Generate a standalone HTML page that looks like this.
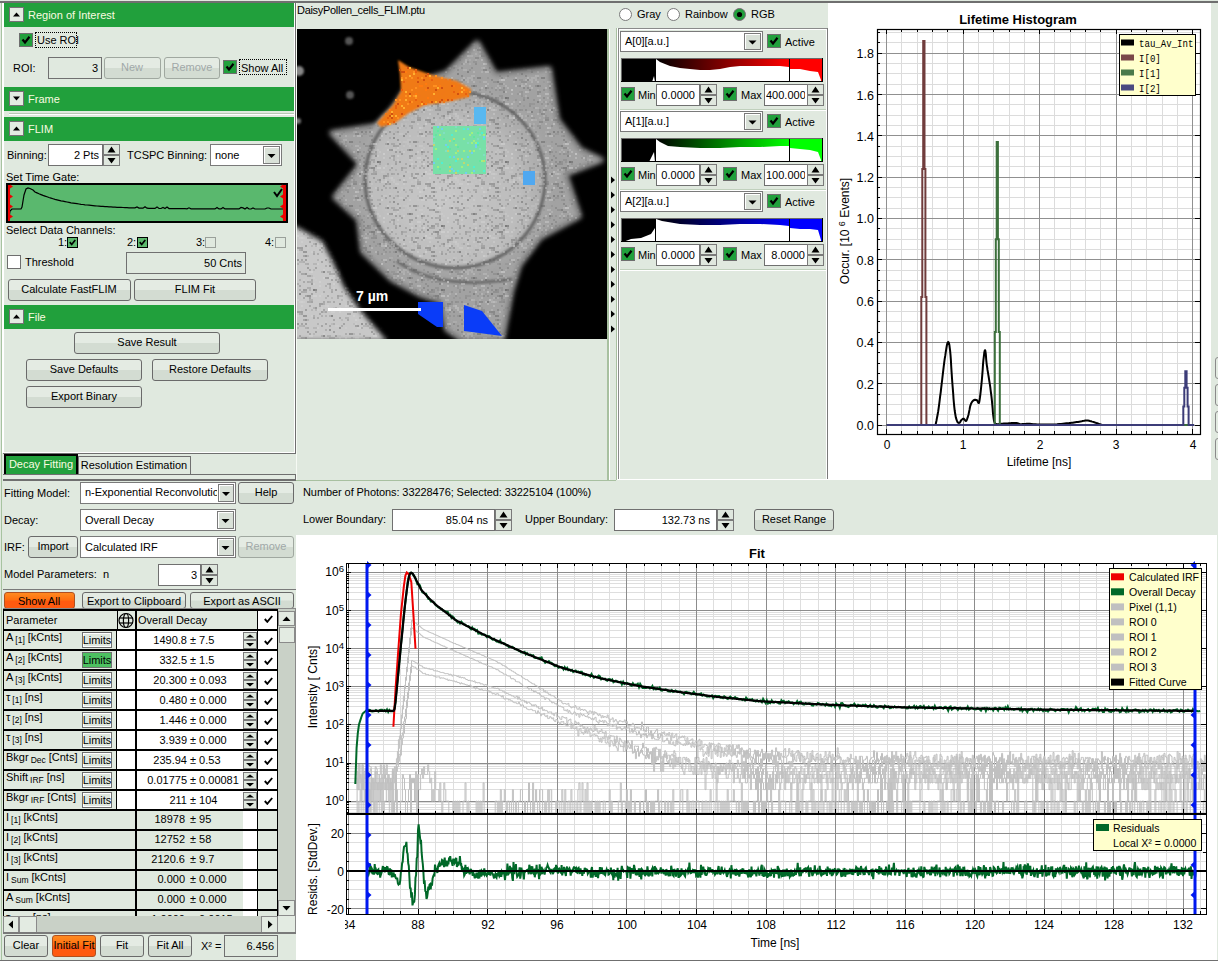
<!DOCTYPE html><html><head><meta charset="utf-8"><style>
html,body{margin:0;padding:0;}
body{width:1218px;height:961px;position:relative;overflow:hidden;background:#e0e9df;font-family:"Liberation Sans",sans-serif;}
.a{position:absolute;}
.t{position:absolute;white-space:pre;line-height:normal;font-family:"Liberation Sans",sans-serif;}
svg text{font-family:"Liberation Sans",sans-serif;}
</style></head><body>
<div class="a" style="left:0;top:1px;width:1218px;height:2px;background:#6f6f6f"></div><div class="a" style="left:1px;top:3px;width:1px;height:957px;background:#a7c3a0;"></div><div class="a" style="left:2px;top:3px;width:2px;height:450px;background:#fff;"></div><div class="a" style="left:2px;top:452px;width:292px;height:1px;background:#fff;"></div><div class="a" style="left:294px;top:3px;width:1px;height:450px;background:#fff;"></div><div class="a" style="left:295px;top:3px;width:1px;height:451px;background:#6f6f6f;"></div><div class="a" style="left:3px;top:453px;width:293px;height:1px;background:#6f6f6f;"></div><div class="a" style="left:4px;top:3px;width:290px;height:24px;background:#21a03c;"></div><div class="a" style="left:9px;top:7px;width:15px;height:15px;box-sizing:border-box;border:1px solid #757075;background:#e3ebe2"></div><svg class="a" style="left:9px;top:7px" width="15" height="15"><path d="M4 9.5 L11 9.5 L7.5 5.5Z" fill="#000"/></svg><div class="t" style="left:28px;top:9px;font-size:11px;color:#fbfbe0;">Region of Interest</div><div class="a" style="left:19px;top:33px;width:14px;height:14px;box-sizing:border-box;border:1px solid #6e6e6e;background:#21a03c"></div><svg class="a" style="left:19px;top:33px" width="14" height="14" viewBox="0 0 14 14"><path d="M3.5 6.5 L6 9.5 L10.5 3.8" fill="none" stroke="#000" stroke-width="2.2"/></svg><div class="a" style="left:35px;top:32px;width:42px;height:16px;box-sizing:border-box;border:1px dotted #000"></div><div class="t" style="left:37px;top:34px;font-size:11px;color:#000;">Use ROI</div><div class="t" style="left:13px;top:62px;font-size:11px;color:#000;">ROI:</div><div class="a" style="left:48px;top:57px;width:54px;height:22px;background:#e0e9df;border:1px solid #707070;box-sizing:border-box;"></div><div class="t" style="right:1120px;top:62px;text-align:right;font-size:11px;color:#000;">3</div><div class="a" style="left:104px;top:57px;width:57px;height:22px;box-sizing:border-box;border:1px solid #a0a8a0;border-radius:3px;background:linear-gradient(#e4ebe3 0%,#e4ebe3 48%,#d3dcd2 52%,#d3dcd2 100%)"></div><div class="t" style="left:-68px;width:400px;top:61px;text-align:center;font-size:11px;color:#a0a8a8;">New</div><div class="a" style="left:164px;top:57px;width:56px;height:22px;box-sizing:border-box;border:1px solid #a0a8a0;border-radius:3px;background:linear-gradient(#e4ebe3 0%,#e4ebe3 48%,#d3dcd2 52%,#d3dcd2 100%)"></div><div class="t" style="left:-8px;width:400px;top:61px;text-align:center;font-size:11px;color:#a0a8a8;">Remove</div><div class="a" style="left:223px;top:60px;width:14px;height:14px;box-sizing:border-box;border:1px solid #6e6e6e;background:#21a03c"></div><svg class="a" style="left:223px;top:60px" width="14" height="14" viewBox="0 0 14 14"><path d="M3.5 6.5 L6 9.5 L10.5 3.8" fill="none" stroke="#000" stroke-width="2.2"/></svg><div class="a" style="left:239px;top:59px;width:48px;height:16px;box-sizing:border-box;border:1px dotted #000"></div><div class="t" style="left:241px;top:62px;font-size:11px;color:#000;">Show All</div><div class="a" style="left:4px;top:87px;width:290px;height:24px;background:#21a03c;"></div><div class="a" style="left:9px;top:91px;width:15px;height:15px;box-sizing:border-box;border:1px solid #757075;background:#e3ebe2"></div><svg class="a" style="left:9px;top:91px" width="15" height="15"><path d="M4 5.5 L11 5.5 L7.5 9.5Z" fill="#000"/></svg><div class="t" style="left:28px;top:93px;font-size:11px;color:#fbfbe0;">Frame</div><div class="a" style="left:9px;top:113px;width:285px;height:1px;background:#b8c8b4;"></div><div class="a" style="left:9px;top:114px;width:285px;height:1px;background:#fff;"></div><div class="a" style="left:4px;top:117px;width:290px;height:24px;background:#21a03c;"></div><div class="a" style="left:9px;top:121px;width:15px;height:15px;box-sizing:border-box;border:1px solid #757075;background:#e3ebe2"></div><svg class="a" style="left:9px;top:121px" width="15" height="15"><path d="M4 9.5 L11 9.5 L7.5 5.5Z" fill="#000"/></svg><div class="t" style="left:28px;top:123px;font-size:11px;color:#fbfbe0;">FLIM</div><div class="t" style="left:7px;top:149px;font-size:11px;color:#000;">Binning:</div><div class="a" style="left:48px;top:144px;width:55px;height:22px;background:#fff;border:1px solid #707070;box-sizing:border-box;"></div><div class="t" style="right:1119px;top:149px;text-align:right;font-size:11px;color:#000;">2 Pts</div><div class="a" style="left:103px;top:144px;width:17px;height:11px;background:#dfe7de;border:1px solid #7a7a7a;box-sizing:border-box;"></div><div class="a" style="left:103px;top:155px;width:17px;height:11px;background:#dfe7de;border:1px solid #7a7a7a;box-sizing:border-box;"></div><svg class="a" style="left:103px;top:144px" width="17" height="22"><path d="M4.5 8.5 L12.5 8.5 L8.5 2.5Z M4.5 14 L12.5 14 L8.5 19.5Z" fill="#000"/></svg><div class="t" style="left:127px;top:149px;font-size:11px;color:#000;">TCSPC Binning:</div><div class="a" style="left:210px;top:144px;width:72px;height:22px;background:#fff;border:1px solid #7a7a7a;box-sizing:border-box;"></div><div class="t" style="left:215px;top:149px;font-size:11px;color:#000;">none</div><div class="a" style="left:263px;top:146px;width:17px;height:18px;background:#d9e1d8;border:1px solid #7a7a7a;box-sizing:border-box;box-shadow:inset 1px 1px 0 #fff;"></div><svg class="a" style="left:263px;top:146px" width="17" height="18"><path d="M4.5 8.0 L12.5 8.0 L8.5 12.0Z" fill="#000"/></svg><div class="t" style="left:6px;top:171px;font-size:11px;color:#000;">Set Time Gate:</div><div class="a" style="left:6px;top:183px;width:282px;height:40px;background:#5ab86e;border:2px solid #000;box-sizing:border-box;"></div><svg class="a" style="left:6px;top:183px" width="282" height="40"><path d="M3 35 L4 28 L6 26 L15 26 L16 24 L18 12 L20 6 L22 5 L24 5.5 L27 7 L29 9.0 L31 9.9 L33 10.8 L35 11.6 L37 12.4 L39 13.1 L41 13.8 L43 14.5 L45 15.1 L47 15.7 L49 16.3 L51 16.8 L53 17.3 L55 17.8 L57 18.2 L59 18.6 L61 19.0 L63 19.4 L65 19.8 L67 20.1 L69 20.4 L71 20.7 L73 21.0 L75 21.3 L77 21.5 L79 21.8 L81 22.0 L83 22.2 L85 22.4 L87 22.6 L89 22.8 L91 23.0 L93 23.1 L95 23.3 L97 23.4 L99 23.6 L101 23.7 L103 23.8 L105 23.9 L107 24.1 L109 24.2 L111 24.3 L113 24.4 L115 24.4 L117 24.5 L119 24.6 L121 24.7 L123 24.8 L125 24.8 L127 24.9 L129 24.9 L131 24.0 L133 25.1 L135 25.1 L137 25.2 L139 23.7 L141 25.2 L143 25.3 L145 25.3 L147 25.4 L149 25.4 L151 23.9 L153 25.5 L155 25.5 L157 24.5 L159 25.5 L161 24.1 L163 25.6 L165 25.6 L167 25.6 L169 25.7 L171 25.7 L173 25.7 L175 25.7 L177 25.7 L179 25.7 L181 25.8 L183 24.8 L185 25.8 L187 25.8 L189 25.8 L191 25.8 L193 25.8 L195 25.8 L197 25.8 L199 25.8 L201 25.9 L203 25.9 L205 25.9 L207 25.9 L209 25.9 L211 24.4 L213 25.9 L215 25.9 L217 24.4 L219 25.9 L221 25.9 L223 25.9 L225 25.9 L227 25.9 L229 25.9 L231 25.9 L233 25.9 L235 24.4 L237 24.9 L239 26.0 L241 24.5 L243 26.0 L245 26.0 L247 25.0 L249 26.0 L251 26.0 L253 26.0 L255 26.0 L257 26.0 L259 26.0 L261 25.0 L263 25.0 L265 26.0 L267 26.0 L269 26.0 L271 26.0 L273 26.0 L275 26.0 L277 26.0" fill="none" stroke="#000" stroke-width="1.2"/><rect x="2" y="2" width="2" height="36" fill="#e00"/><rect x="277" y="2" width="3" height="36" fill="#e00"/><path d="M4 1.5 l3 2 l-3 2Z M4 11.5 l3 2 l-3 2Z M4 21.5 l3 2 l-3 2Z M4 31.5 l3 2 l-3 2Z M277 1.5 l-3 2 l3 2Z M277 11.5 l-3 2 l3 2Z M277 21.5 l-3 2 l3 2Z M277 31.5 l-3 2 l3 2Z" fill="#e00"/><path d="M268 9 L271 13 L276 6" fill="none" stroke="#000" stroke-width="2"/></svg><div class="t" style="left:6px;top:224px;font-size:11px;color:#000;">Select Data Channels:</div><div class="t" style="left:58px;top:236px;font-size:11px;color:#000;">1:</div><div class="a" style="left:67px;top:237px;width:11px;height:11px;box-sizing:border-box;border:1px solid #000;background:#5cb86c"></div><svg class="a" style="left:67px;top:237px" width="11" height="11" viewBox="0 0 14 14"><path d="M3.5 6.5 L6 9.5 L10.5 3.8" fill="none" stroke="#000" stroke-width="2.2"/></svg><div class="t" style="left:127px;top:236px;font-size:11px;color:#000;">2:</div><div class="a" style="left:137px;top:237px;width:11px;height:11px;box-sizing:border-box;border:1px solid #000;background:#5cb86c"></div><svg class="a" style="left:137px;top:237px" width="11" height="11" viewBox="0 0 14 14"><path d="M3.5 6.5 L6 9.5 L10.5 3.8" fill="none" stroke="#000" stroke-width="2.2"/></svg><div class="t" style="left:196px;top:236px;font-size:11px;color:#000;">3:</div><div class="a" style="left:205px;top:237px;width:11px;height:11px;box-sizing:border-box;border:1px solid #9aa09a;background:#e0e9df"></div><div class="t" style="left:265px;top:236px;font-size:11px;color:#000;">4:</div><div class="a" style="left:275px;top:237px;width:11px;height:11px;box-sizing:border-box;border:1px solid #9aa09a;background:#e0e9df"></div><div class="a" style="left:7px;top:255px;width:14px;height:14px;box-sizing:border-box;border:1px solid #6e6e6e;background:#fff"></div><div class="t" style="left:25px;top:256px;font-size:11px;color:#000;">Threshold</div><div class="a" style="left:126px;top:252px;width:120px;height:22px;background:#e0e9df;border:1px solid #707070;box-sizing:border-box;"></div><div class="t" style="right:976px;top:257px;text-align:right;font-size:11px;color:#000;">50 Cnts</div><div class="a" style="left:8px;top:279px;width:123px;height:22px;box-sizing:border-box;border:1px solid #6a6a6a;border-radius:3px;background:linear-gradient(#e4ebe3 0%,#e4ebe3 48%,#d3dcd2 52%,#d3dcd2 100%)"></div><div class="t" style="left:-131px;width:400px;top:283px;text-align:center;font-size:11px;color:#000;">Calculate FastFLIM</div><div class="a" style="left:134px;top:279px;width:122px;height:22px;box-sizing:border-box;border:1px solid #6a6a6a;border-radius:3px;background:linear-gradient(#e4ebe3 0%,#e4ebe3 48%,#d3dcd2 52%,#d3dcd2 100%)"></div><div class="t" style="left:-5px;width:400px;top:283px;text-align:center;font-size:11px;color:#000;">FLIM Fit</div><div class="a" style="left:4px;top:305px;width:290px;height:24px;background:#21a03c;"></div><div class="a" style="left:9px;top:309px;width:15px;height:15px;box-sizing:border-box;border:1px solid #757075;background:#e3ebe2"></div><svg class="a" style="left:9px;top:309px" width="15" height="15"><path d="M4 9.5 L11 9.5 L7.5 5.5Z" fill="#000"/></svg><div class="t" style="left:28px;top:311px;font-size:11px;color:#fbfbe0;">File</div><div class="a" style="left:74px;top:332px;width:146px;height:22px;box-sizing:border-box;border:1px solid #6a6a6a;border-radius:3px;background:linear-gradient(#e4ebe3 0%,#e4ebe3 48%,#d3dcd2 52%,#d3dcd2 100%)"></div><div class="t" style="left:-53px;width:400px;top:336px;text-align:center;font-size:11px;color:#000;">Save Result</div><div class="a" style="left:26px;top:359px;width:116px;height:22px;box-sizing:border-box;border:1px solid #6a6a6a;border-radius:3px;background:linear-gradient(#e4ebe3 0%,#e4ebe3 48%,#d3dcd2 52%,#d3dcd2 100%)"></div><div class="t" style="left:-116px;width:400px;top:363px;text-align:center;font-size:11px;color:#000;">Save Defaults</div><div class="a" style="left:152px;top:359px;width:116px;height:22px;box-sizing:border-box;border:1px solid #6a6a6a;border-radius:3px;background:linear-gradient(#e4ebe3 0%,#e4ebe3 48%,#d3dcd2 52%,#d3dcd2 100%)"></div><div class="t" style="left:10px;width:400px;top:363px;text-align:center;font-size:11px;color:#000;">Restore Defaults</div><div class="a" style="left:26px;top:386px;width:116px;height:22px;box-sizing:border-box;border:1px solid #6a6a6a;border-radius:3px;background:linear-gradient(#e4ebe3 0%,#e4ebe3 48%,#d3dcd2 52%,#d3dcd2 100%)"></div><div class="t" style="left:-116px;width:400px;top:390px;text-align:center;font-size:11px;color:#000;">Export Binary</div><div class="a" style="left:4px;top:454px;width:74px;height:21px;background:#000;"></div><div class="a" style="left:6px;top:456px;width:70px;height:19px;background:#21a03c;"></div><div class="t" style="left:-159px;width:400px;top:458px;text-align:center;font-size:11px;color:#fbfbe0;">Decay Fitting</div><div class="a" style="left:78px;top:456px;width:113px;height:19px;background:#e0e9df;border:1px solid #707070;box-sizing:border-box;border-bottom:none;"></div><div class="t" style="left:-66px;width:400px;top:459px;text-align:center;font-size:11px;color:#000;">Resolution Estimation</div><div class="a" style="left:3px;top:474px;width:293px;height:1px;background:#6f6f6f;"></div><div class="a" style="left:3px;top:475px;width:293px;height:4px;background:#e3ebe2;"></div><div class="a" style="left:3px;top:479px;width:293px;height:2px;background:#6f6f6f;"></div><div class="a" style="left:295px;top:474px;width:1px;height:7px;background:#6f6f6f;"></div><div class="t" style="left:4px;top:487px;font-size:11px;color:#000;">Fitting Model:</div><div class="a" style="left:80px;top:482px;width:156px;height:22px;box-sizing:border-box;border:1px solid #7a7a7a;background:#fff"></div><div class="t" style="left:85px;top:486px;width:132px;overflow:hidden;font-size:11px">n-Exponential Reconvolution</div><div class="a" style="left:218px;top:484px;width:16px;height:18px;background:#d9e1d8;border:1px solid #7a7a7a;box-sizing:border-box;box-shadow:inset 1px 1px 0 #fff;"></div><svg class="a" style="left:218px;top:484px" width="16" height="18"><path d="M4 8 L12 8 L8 12Z" fill="#000"/></svg><div class="a" style="left:238px;top:482px;width:56px;height:22px;box-sizing:border-box;border:1px solid #6a6a6a;border-radius:3px;background:linear-gradient(#e4ebe3 0%,#e4ebe3 48%,#d3dcd2 52%,#d3dcd2 100%)"></div><div class="t" style="left:66px;width:400px;top:486px;text-align:center;font-size:11px;color:#000;">Help</div><div class="t" style="left:4px;top:514px;font-size:11px;color:#000;">Decay:</div><div class="a" style="left:80px;top:509px;width:156px;height:22px;background:#fff;border:1px solid #7a7a7a;box-sizing:border-box;"></div><div class="t" style="left:85px;top:514px;font-size:11px;color:#000;">Overall Decay</div><div class="a" style="left:217px;top:511px;width:17px;height:18px;background:#d9e1d8;border:1px solid #7a7a7a;box-sizing:border-box;box-shadow:inset 1px 1px 0 #fff;"></div><svg class="a" style="left:217px;top:511px" width="17" height="18"><path d="M4.5 8.0 L12.5 8.0 L8.5 12.0Z" fill="#000"/></svg><div class="t" style="left:4px;top:541px;font-size:11px;color:#000;">IRF:</div><div class="a" style="left:28px;top:536px;width:50px;height:22px;box-sizing:border-box;border:1px solid #6a6a6a;border-radius:3px;background:linear-gradient(#e4ebe3 0%,#e4ebe3 48%,#d3dcd2 52%,#d3dcd2 100%)"></div><div class="t" style="left:-147px;width:400px;top:540px;text-align:center;font-size:11px;color:#000;">Import</div><div class="a" style="left:80px;top:536px;width:156px;height:22px;background:#fff;border:1px solid #7a7a7a;box-sizing:border-box;"></div><div class="t" style="left:85px;top:541px;font-size:11px;color:#000;">Calculated IRF</div><div class="a" style="left:217px;top:538px;width:17px;height:18px;background:#d9e1d8;border:1px solid #7a7a7a;box-sizing:border-box;box-shadow:inset 1px 1px 0 #fff;"></div><svg class="a" style="left:217px;top:538px" width="17" height="18"><path d="M4.5 8.0 L12.5 8.0 L8.5 12.0Z" fill="#000"/></svg><div class="a" style="left:238px;top:536px;width:56px;height:22px;box-sizing:border-box;border:1px solid #a0a8a0;border-radius:3px;background:linear-gradient(#e4ebe3 0%,#e4ebe3 48%,#d3dcd2 52%,#d3dcd2 100%)"></div><div class="t" style="left:66px;width:400px;top:540px;text-align:center;font-size:11px;color:#a0a8a8;">Remove</div><div class="t" style="left:4px;top:568px;font-size:11px;color:#000;">Model Parameters:  n</div><div class="a" style="left:158px;top:564px;width:43px;height:22px;background:#fff;border:1px solid #707070;box-sizing:border-box;"></div><div class="t" style="right:1021px;top:569px;text-align:right;font-size:11px;color:#000;">3</div><div class="a" style="left:201px;top:564px;width:17px;height:11px;background:#dfe7de;border:1px solid #7a7a7a;box-sizing:border-box;"></div><div class="a" style="left:201px;top:575px;width:17px;height:11px;background:#dfe7de;border:1px solid #7a7a7a;box-sizing:border-box;"></div><svg class="a" style="left:201px;top:564px" width="17" height="22"><path d="M4.5 8.5 L12.5 8.5 L8.5 2.5Z M4.5 14 L12.5 14 L8.5 19.5Z" fill="#000"/></svg><div class="a" style="left:3px;top:589px;width:293px;height:1px;background:#7a7a7a;"></div><div class="a" style="left:4px;top:592px;width:71px;height:17px;box-sizing:border-box;border:1px solid #b05020;border-radius:3px;background:linear-gradient(#ff8a20 0%,#ff7010 45%,#ff5a10 55%,#ff5a10 100%)"></div><div class="t" style="left:-161px;width:400px;top:595px;text-align:center;font-size:11px;color:#000;">Show All</div><div class="a" style="left:82px;top:592px;width:104px;height:17px;box-sizing:border-box;border:1px solid #6a6a6a;border-radius:3px;background:linear-gradient(#e4ebe3 0%,#e4ebe3 48%,#d3dcd2 52%,#d3dcd2 100%)"></div><div class="t" style="left:-66px;width:400px;top:595px;text-align:center;font-size:11px;color:#000;">Export to Clipboard</div><div class="a" style="left:190px;top:592px;width:104px;height:17px;box-sizing:border-box;border:1px solid #6a6a6a;border-radius:3px;background:linear-gradient(#e4ebe3 0%,#e4ebe3 48%,#d3dcd2 52%,#d3dcd2 100%)"></div><div class="t" style="left:42px;width:400px;top:595px;text-align:center;font-size:11px;color:#000;">Export as ASCII</div><div class="a" style="left:3px;top:608px;width:293px;height:1px;background:#8a8a8a;"></div><div class="a" style="left:3px;top:609px;width:275px;height:2px;background:#000;"></div><div class="a" style="left:3px;top:611px;width:1px;height:305px;background:#000;"></div><div class="a" style="left:4px;top:611px;width:112px;height:18px;background:#e0e9df;"></div><div class="a" style="left:117px;top:611px;width:18px;height:18px;background:#e0e9df;"></div><div class="a" style="left:137px;top:611px;width:120px;height:18px;background:#e0e9df;"></div><div class="a" style="left:258px;top:611px;width:19px;height:18px;background:#fff;"></div><div class="t" style="left:6px;top:614px;font-size:11px;color:#000;">Parameter</div><svg class="a" style="left:117px;top:612px" width="18" height="17"><g fill="none" stroke="#000" stroke-width="1.2"><circle cx="9" cy="8.5" r="7"/><ellipse cx="9" cy="8.5" rx="2.6" ry="7"/><line x1="2" y1="6" x2="16" y2="6"/><line x1="2" y1="11" x2="16" y2="11"/></g></svg><div class="t" style="left:138px;top:614px;font-size:11px;color:#000;">Overall Decay</div><svg class="a" style="left:264px;top:615px" width="9" height="8"><path d="M0.8 4 L3.3 6.8 L8.2 1" fill="none" stroke="#000" stroke-width="1.9"/></svg><div class="a" style="left:3px;top:629px;width:275px;height:2px;background:#000;"></div><div class="a" style="left:4px;top:631px;width:112px;height:18px;background:#e0e9df;"></div><div class="a" style="left:116px;top:631px;width:1px;height:18px;background:#000;"></div><div class="a" style="left:117px;top:631px;width:18px;height:18px;background:#fff;"></div><div class="a" style="left:135px;top:631px;width:2px;height:18px;background:#000;"></div><div class="a" style="left:137px;top:631px;width:120px;height:18px;background:#fff;"></div><div class="a" style="left:257px;top:631px;width:1px;height:18px;background:#000;"></div><div class="a" style="left:258px;top:631px;width:19px;height:18px;background:#fff;"></div><div class="a" style="left:277px;top:631px;width:1px;height:18px;background:#000;"></div><div class="t" style="left:6px;top:631px;font-size:11px">A<span style="font-size:8.5px;position:relative;top:2px;margin-left:2px;margin-right:3px">[1]</span>[kCnts]</div><div class="a" style="left:82px;top:632px;width:30px;height:16px;background:#dfe7de;border:1px solid #6f6f6f;box-sizing:border-box;box-shadow:inset 1px 1px 0 #fff,inset -1px -1px 0 #fff;"></div><div class="t" style="left:-103px;width:400px;top:634px;text-align:center;font-size:11px;color:#000;">Limits</div><div class="a" style="left:243px;top:632px;width:14px;height:8px;background:#dfe7de;border:1px solid #7a7a7a;box-sizing:border-box;"></div><div class="a" style="left:243px;top:640px;width:14px;height:9px;background:#dfe7de;border:1px solid #7a7a7a;box-sizing:border-box;"></div><svg class="a" style="left:243px;top:632px" width="14" height="17"><path d="M3.0 5.5 L11.0 5.5 L7.0 2.5Z M3.0 11 L11.0 11 L7.0 14.5Z" fill="#000"/></svg><svg class="a" style="left:264px;top:637px" width="9" height="8"><path d="M0.8 4 L3.3 6.8 L8.2 1" fill="none" stroke="#000" stroke-width="1.9"/></svg><div class="t" style="right:1031px;top:634px;text-align:right;font-size:11px;color:#000;">1490.8</div><div class="t" style="left:190px;top:634px;font-size:11px;color:#000;">± 7.5</div><div class="a" style="left:3px;top:649px;width:275px;height:2px;background:#000;"></div><div class="a" style="left:4px;top:651px;width:112px;height:18px;background:#e0e9df;"></div><div class="a" style="left:116px;top:651px;width:1px;height:18px;background:#000;"></div><div class="a" style="left:117px;top:651px;width:18px;height:18px;background:#fff;"></div><div class="a" style="left:135px;top:651px;width:2px;height:18px;background:#000;"></div><div class="a" style="left:137px;top:651px;width:120px;height:18px;background:#fff;"></div><div class="a" style="left:257px;top:651px;width:1px;height:18px;background:#000;"></div><div class="a" style="left:258px;top:651px;width:19px;height:18px;background:#fff;"></div><div class="a" style="left:277px;top:651px;width:1px;height:18px;background:#000;"></div><div class="t" style="left:6px;top:651px;font-size:11px">A<span style="font-size:8.5px;position:relative;top:2px;margin-left:2px;margin-right:3px">[2]</span>[kCnts]</div><div class="a" style="left:82px;top:652px;width:30px;height:16px;background:#4cc060;border:1px solid #6f6f6f;box-sizing:border-box;"></div><div class="t" style="left:-103px;width:400px;top:654px;text-align:center;font-size:11px;color:#000;">Limits</div><div class="a" style="left:243px;top:652px;width:14px;height:8px;background:#dfe7de;border:1px solid #7a7a7a;box-sizing:border-box;"></div><div class="a" style="left:243px;top:660px;width:14px;height:9px;background:#dfe7de;border:1px solid #7a7a7a;box-sizing:border-box;"></div><svg class="a" style="left:243px;top:652px" width="14" height="17"><path d="M3.0 5.5 L11.0 5.5 L7.0 2.5Z M3.0 11 L11.0 11 L7.0 14.5Z" fill="#000"/></svg><svg class="a" style="left:264px;top:657px" width="9" height="8"><path d="M0.8 4 L3.3 6.8 L8.2 1" fill="none" stroke="#000" stroke-width="1.9"/></svg><div class="t" style="right:1031px;top:654px;text-align:right;font-size:11px;color:#000;">332.5</div><div class="t" style="left:190px;top:654px;font-size:11px;color:#000;">± 1.5</div><div class="a" style="left:3px;top:669px;width:275px;height:2px;background:#000;"></div><div class="a" style="left:4px;top:671px;width:112px;height:18px;background:#e0e9df;"></div><div class="a" style="left:116px;top:671px;width:1px;height:18px;background:#000;"></div><div class="a" style="left:117px;top:671px;width:18px;height:18px;background:#fff;"></div><div class="a" style="left:135px;top:671px;width:2px;height:18px;background:#000;"></div><div class="a" style="left:137px;top:671px;width:120px;height:18px;background:#fff;"></div><div class="a" style="left:257px;top:671px;width:1px;height:18px;background:#000;"></div><div class="a" style="left:258px;top:671px;width:19px;height:18px;background:#fff;"></div><div class="a" style="left:277px;top:671px;width:1px;height:18px;background:#000;"></div><div class="t" style="left:6px;top:671px;font-size:11px">A<span style="font-size:8.5px;position:relative;top:2px;margin-left:2px;margin-right:3px">[3]</span>[kCnts]</div><div class="a" style="left:82px;top:672px;width:30px;height:16px;background:#dfe7de;border:1px solid #6f6f6f;box-sizing:border-box;box-shadow:inset 1px 1px 0 #fff,inset -1px -1px 0 #fff;"></div><div class="t" style="left:-103px;width:400px;top:674px;text-align:center;font-size:11px;color:#000;">Limits</div><div class="a" style="left:243px;top:672px;width:14px;height:8px;background:#dfe7de;border:1px solid #7a7a7a;box-sizing:border-box;"></div><div class="a" style="left:243px;top:680px;width:14px;height:9px;background:#dfe7de;border:1px solid #7a7a7a;box-sizing:border-box;"></div><svg class="a" style="left:243px;top:672px" width="14" height="17"><path d="M3.0 5.5 L11.0 5.5 L7.0 2.5Z M3.0 11 L11.0 11 L7.0 14.5Z" fill="#000"/></svg><svg class="a" style="left:264px;top:677px" width="9" height="8"><path d="M0.8 4 L3.3 6.8 L8.2 1" fill="none" stroke="#000" stroke-width="1.9"/></svg><div class="t" style="right:1031px;top:674px;text-align:right;font-size:11px;color:#000;">20.300</div><div class="t" style="left:190px;top:674px;font-size:11px;color:#000;">± 0.093</div><div class="a" style="left:3px;top:689px;width:275px;height:2px;background:#000;"></div><div class="a" style="left:4px;top:691px;width:112px;height:18px;background:#e0e9df;"></div><div class="a" style="left:116px;top:691px;width:1px;height:18px;background:#000;"></div><div class="a" style="left:117px;top:691px;width:18px;height:18px;background:#fff;"></div><div class="a" style="left:135px;top:691px;width:2px;height:18px;background:#000;"></div><div class="a" style="left:137px;top:691px;width:120px;height:18px;background:#fff;"></div><div class="a" style="left:257px;top:691px;width:1px;height:18px;background:#000;"></div><div class="a" style="left:258px;top:691px;width:19px;height:18px;background:#fff;"></div><div class="a" style="left:277px;top:691px;width:1px;height:18px;background:#000;"></div><div class="t" style="left:6px;top:691px;font-size:11px">τ<span style="font-size:8.5px;position:relative;top:2px;margin-left:2px;margin-right:3px">[1]</span>[ns]</div><div class="a" style="left:82px;top:692px;width:30px;height:16px;background:#dfe7de;border:1px solid #6f6f6f;box-sizing:border-box;box-shadow:inset 1px 1px 0 #fff,inset -1px -1px 0 #fff;"></div><div class="t" style="left:-103px;width:400px;top:694px;text-align:center;font-size:11px;color:#000;">Limits</div><div class="a" style="left:243px;top:692px;width:14px;height:8px;background:#dfe7de;border:1px solid #7a7a7a;box-sizing:border-box;"></div><div class="a" style="left:243px;top:700px;width:14px;height:9px;background:#dfe7de;border:1px solid #7a7a7a;box-sizing:border-box;"></div><svg class="a" style="left:243px;top:692px" width="14" height="17"><path d="M3.0 5.5 L11.0 5.5 L7.0 2.5Z M3.0 11 L11.0 11 L7.0 14.5Z" fill="#000"/></svg><svg class="a" style="left:264px;top:697px" width="9" height="8"><path d="M0.8 4 L3.3 6.8 L8.2 1" fill="none" stroke="#000" stroke-width="1.9"/></svg><div class="t" style="right:1031px;top:694px;text-align:right;font-size:11px;color:#000;">0.480</div><div class="t" style="left:190px;top:694px;font-size:11px;color:#000;">± 0.000</div><div class="a" style="left:3px;top:709px;width:275px;height:2px;background:#000;"></div><div class="a" style="left:4px;top:711px;width:112px;height:18px;background:#e0e9df;"></div><div class="a" style="left:116px;top:711px;width:1px;height:18px;background:#000;"></div><div class="a" style="left:117px;top:711px;width:18px;height:18px;background:#fff;"></div><div class="a" style="left:135px;top:711px;width:2px;height:18px;background:#000;"></div><div class="a" style="left:137px;top:711px;width:120px;height:18px;background:#fff;"></div><div class="a" style="left:257px;top:711px;width:1px;height:18px;background:#000;"></div><div class="a" style="left:258px;top:711px;width:19px;height:18px;background:#fff;"></div><div class="a" style="left:277px;top:711px;width:1px;height:18px;background:#000;"></div><div class="t" style="left:6px;top:711px;font-size:11px">τ<span style="font-size:8.5px;position:relative;top:2px;margin-left:2px;margin-right:3px">[2]</span>[ns]</div><div class="a" style="left:82px;top:712px;width:30px;height:16px;background:#dfe7de;border:1px solid #6f6f6f;box-sizing:border-box;box-shadow:inset 1px 1px 0 #fff,inset -1px -1px 0 #fff;"></div><div class="t" style="left:-103px;width:400px;top:714px;text-align:center;font-size:11px;color:#000;">Limits</div><div class="a" style="left:243px;top:712px;width:14px;height:8px;background:#dfe7de;border:1px solid #7a7a7a;box-sizing:border-box;"></div><div class="a" style="left:243px;top:720px;width:14px;height:9px;background:#dfe7de;border:1px solid #7a7a7a;box-sizing:border-box;"></div><svg class="a" style="left:243px;top:712px" width="14" height="17"><path d="M3.0 5.5 L11.0 5.5 L7.0 2.5Z M3.0 11 L11.0 11 L7.0 14.5Z" fill="#000"/></svg><svg class="a" style="left:264px;top:717px" width="9" height="8"><path d="M0.8 4 L3.3 6.8 L8.2 1" fill="none" stroke="#000" stroke-width="1.9"/></svg><div class="t" style="right:1031px;top:714px;text-align:right;font-size:11px;color:#000;">1.446</div><div class="t" style="left:190px;top:714px;font-size:11px;color:#000;">± 0.000</div><div class="a" style="left:3px;top:729px;width:275px;height:2px;background:#000;"></div><div class="a" style="left:4px;top:731px;width:112px;height:18px;background:#e0e9df;"></div><div class="a" style="left:116px;top:731px;width:1px;height:18px;background:#000;"></div><div class="a" style="left:117px;top:731px;width:18px;height:18px;background:#fff;"></div><div class="a" style="left:135px;top:731px;width:2px;height:18px;background:#000;"></div><div class="a" style="left:137px;top:731px;width:120px;height:18px;background:#fff;"></div><div class="a" style="left:257px;top:731px;width:1px;height:18px;background:#000;"></div><div class="a" style="left:258px;top:731px;width:19px;height:18px;background:#fff;"></div><div class="a" style="left:277px;top:731px;width:1px;height:18px;background:#000;"></div><div class="t" style="left:6px;top:731px;font-size:11px">τ<span style="font-size:8.5px;position:relative;top:2px;margin-left:2px;margin-right:3px">[3]</span>[ns]</div><div class="a" style="left:82px;top:732px;width:30px;height:16px;background:#dfe7de;border:1px solid #6f6f6f;box-sizing:border-box;box-shadow:inset 1px 1px 0 #fff,inset -1px -1px 0 #fff;"></div><div class="t" style="left:-103px;width:400px;top:734px;text-align:center;font-size:11px;color:#000;">Limits</div><div class="a" style="left:243px;top:732px;width:14px;height:8px;background:#dfe7de;border:1px solid #7a7a7a;box-sizing:border-box;"></div><div class="a" style="left:243px;top:740px;width:14px;height:9px;background:#dfe7de;border:1px solid #7a7a7a;box-sizing:border-box;"></div><svg class="a" style="left:243px;top:732px" width="14" height="17"><path d="M3.0 5.5 L11.0 5.5 L7.0 2.5Z M3.0 11 L11.0 11 L7.0 14.5Z" fill="#000"/></svg><svg class="a" style="left:264px;top:737px" width="9" height="8"><path d="M0.8 4 L3.3 6.8 L8.2 1" fill="none" stroke="#000" stroke-width="1.9"/></svg><div class="t" style="right:1031px;top:734px;text-align:right;font-size:11px;color:#000;">3.939</div><div class="t" style="left:190px;top:734px;font-size:11px;color:#000;">± 0.000</div><div class="a" style="left:3px;top:749px;width:275px;height:2px;background:#000;"></div><div class="a" style="left:4px;top:751px;width:112px;height:18px;background:#e0e9df;"></div><div class="a" style="left:116px;top:751px;width:1px;height:18px;background:#000;"></div><div class="a" style="left:117px;top:751px;width:18px;height:18px;background:#fff;"></div><div class="a" style="left:135px;top:751px;width:2px;height:18px;background:#000;"></div><div class="a" style="left:137px;top:751px;width:120px;height:18px;background:#fff;"></div><div class="a" style="left:257px;top:751px;width:1px;height:18px;background:#000;"></div><div class="a" style="left:258px;top:751px;width:19px;height:18px;background:#fff;"></div><div class="a" style="left:277px;top:751px;width:1px;height:18px;background:#000;"></div><div class="t" style="left:6px;top:751px;font-size:11px">Bkgr<span style="font-size:8.5px;position:relative;top:2px;margin-left:2px;margin-right:3px">Dec</span>[Cnts]</div><div class="a" style="left:82px;top:752px;width:30px;height:16px;background:#dfe7de;border:1px solid #6f6f6f;box-sizing:border-box;box-shadow:inset 1px 1px 0 #fff,inset -1px -1px 0 #fff;"></div><div class="t" style="left:-103px;width:400px;top:754px;text-align:center;font-size:11px;color:#000;">Limits</div><div class="a" style="left:243px;top:752px;width:14px;height:8px;background:#dfe7de;border:1px solid #7a7a7a;box-sizing:border-box;"></div><div class="a" style="left:243px;top:760px;width:14px;height:9px;background:#dfe7de;border:1px solid #7a7a7a;box-sizing:border-box;"></div><svg class="a" style="left:243px;top:752px" width="14" height="17"><path d="M3.0 5.5 L11.0 5.5 L7.0 2.5Z M3.0 11 L11.0 11 L7.0 14.5Z" fill="#000"/></svg><svg class="a" style="left:264px;top:757px" width="9" height="8"><path d="M0.8 4 L3.3 6.8 L8.2 1" fill="none" stroke="#000" stroke-width="1.9"/></svg><div class="t" style="right:1031px;top:754px;text-align:right;font-size:11px;color:#000;">235.94</div><div class="t" style="left:190px;top:754px;font-size:11px;color:#000;">± 0.53</div><div class="a" style="left:3px;top:769px;width:275px;height:2px;background:#000;"></div><div class="a" style="left:4px;top:771px;width:112px;height:18px;background:#e0e9df;"></div><div class="a" style="left:116px;top:771px;width:1px;height:18px;background:#000;"></div><div class="a" style="left:117px;top:771px;width:18px;height:18px;background:#fff;"></div><div class="a" style="left:135px;top:771px;width:2px;height:18px;background:#000;"></div><div class="a" style="left:137px;top:771px;width:120px;height:18px;background:#fff;"></div><div class="a" style="left:257px;top:771px;width:1px;height:18px;background:#000;"></div><div class="a" style="left:258px;top:771px;width:19px;height:18px;background:#fff;"></div><div class="a" style="left:277px;top:771px;width:1px;height:18px;background:#000;"></div><div class="t" style="left:6px;top:771px;font-size:11px">Shift<span style="font-size:8.5px;position:relative;top:2px;margin-left:2px;margin-right:3px">IRF</span>[ns]</div><div class="a" style="left:82px;top:772px;width:30px;height:16px;background:#dfe7de;border:1px solid #6f6f6f;box-sizing:border-box;box-shadow:inset 1px 1px 0 #fff,inset -1px -1px 0 #fff;"></div><div class="t" style="left:-103px;width:400px;top:774px;text-align:center;font-size:11px;color:#000;">Limits</div><div class="a" style="left:243px;top:772px;width:14px;height:8px;background:#dfe7de;border:1px solid #7a7a7a;box-sizing:border-box;"></div><div class="a" style="left:243px;top:780px;width:14px;height:9px;background:#dfe7de;border:1px solid #7a7a7a;box-sizing:border-box;"></div><svg class="a" style="left:243px;top:772px" width="14" height="17"><path d="M3.0 5.5 L11.0 5.5 L7.0 2.5Z M3.0 11 L11.0 11 L7.0 14.5Z" fill="#000"/></svg><svg class="a" style="left:264px;top:777px" width="9" height="8"><path d="M0.8 4 L3.3 6.8 L8.2 1" fill="none" stroke="#000" stroke-width="1.9"/></svg><div class="t" style="right:1031px;top:774px;text-align:right;font-size:11px;color:#000;">0.01775</div><div class="t" style="left:190px;top:774px;font-size:11px;color:#000;">± 0.00081</div><div class="a" style="left:3px;top:789px;width:275px;height:2px;background:#000;"></div><div class="a" style="left:4px;top:791px;width:112px;height:18px;background:#e0e9df;"></div><div class="a" style="left:116px;top:791px;width:1px;height:18px;background:#000;"></div><div class="a" style="left:117px;top:791px;width:18px;height:18px;background:#fff;"></div><div class="a" style="left:135px;top:791px;width:2px;height:18px;background:#000;"></div><div class="a" style="left:137px;top:791px;width:120px;height:18px;background:#fff;"></div><div class="a" style="left:257px;top:791px;width:1px;height:18px;background:#000;"></div><div class="a" style="left:258px;top:791px;width:19px;height:18px;background:#fff;"></div><div class="a" style="left:277px;top:791px;width:1px;height:18px;background:#000;"></div><div class="t" style="left:6px;top:791px;font-size:11px">Bkgr<span style="font-size:8.5px;position:relative;top:2px;margin-left:2px;margin-right:3px">IRF</span>[Cnts]</div><div class="a" style="left:82px;top:792px;width:30px;height:16px;background:#dfe7de;border:1px solid #6f6f6f;box-sizing:border-box;box-shadow:inset 1px 1px 0 #fff,inset -1px -1px 0 #fff;"></div><div class="t" style="left:-103px;width:400px;top:794px;text-align:center;font-size:11px;color:#000;">Limits</div><div class="a" style="left:243px;top:792px;width:14px;height:8px;background:#dfe7de;border:1px solid #7a7a7a;box-sizing:border-box;"></div><div class="a" style="left:243px;top:800px;width:14px;height:9px;background:#dfe7de;border:1px solid #7a7a7a;box-sizing:border-box;"></div><svg class="a" style="left:243px;top:792px" width="14" height="17"><path d="M3.0 5.5 L11.0 5.5 L7.0 2.5Z M3.0 11 L11.0 11 L7.0 14.5Z" fill="#000"/></svg><svg class="a" style="left:264px;top:797px" width="9" height="8"><path d="M0.8 4 L3.3 6.8 L8.2 1" fill="none" stroke="#000" stroke-width="1.9"/></svg><div class="t" style="right:1031px;top:794px;text-align:right;font-size:11px;color:#000;">211</div><div class="t" style="left:190px;top:794px;font-size:11px;color:#000;">± 104</div><div class="a" style="left:3px;top:809px;width:275px;height:2px;background:#000;"></div><div class="a" style="left:4px;top:811px;width:131px;height:18px;background:#e0e9df;"></div><div class="a" style="left:135px;top:811px;width:2px;height:18px;background:#000;"></div><div class="a" style="left:137px;top:811px;width:106px;height:18px;background:#e0e9df;"></div><div class="a" style="left:243px;top:811px;width:14px;height:18px;background:#fff;"></div><div class="a" style="left:257px;top:811px;width:1px;height:18px;background:#000;"></div><div class="a" style="left:258px;top:811px;width:19px;height:18px;background:#e0e9df;"></div><div class="a" style="left:277px;top:811px;width:1px;height:18px;background:#000;"></div><div class="t" style="left:6px;top:811px;font-size:11px">I<span style="font-size:8.5px;position:relative;top:2px;margin-left:2px;margin-right:3px">[1]</span>[kCnts]</div><div class="t" style="right:1033px;top:813px;text-align:right;font-size:11px;color:#000;">18978</div><div class="t" style="left:190px;top:813px;font-size:11px;color:#000;">± 95</div><div class="a" style="left:3px;top:829px;width:275px;height:2px;background:#000;"></div><div class="a" style="left:4px;top:831px;width:131px;height:18px;background:#e0e9df;"></div><div class="a" style="left:135px;top:831px;width:2px;height:18px;background:#000;"></div><div class="a" style="left:137px;top:831px;width:106px;height:18px;background:#e0e9df;"></div><div class="a" style="left:243px;top:831px;width:14px;height:18px;background:#fff;"></div><div class="a" style="left:257px;top:831px;width:1px;height:18px;background:#000;"></div><div class="a" style="left:258px;top:831px;width:19px;height:18px;background:#e0e9df;"></div><div class="a" style="left:277px;top:831px;width:1px;height:18px;background:#000;"></div><div class="t" style="left:6px;top:831px;font-size:11px">I<span style="font-size:8.5px;position:relative;top:2px;margin-left:2px;margin-right:3px">[2]</span>[kCnts]</div><div class="t" style="right:1033px;top:833px;text-align:right;font-size:11px;color:#000;">12752</div><div class="t" style="left:190px;top:833px;font-size:11px;color:#000;">± 58</div><div class="a" style="left:3px;top:849px;width:275px;height:2px;background:#000;"></div><div class="a" style="left:4px;top:851px;width:131px;height:18px;background:#e0e9df;"></div><div class="a" style="left:135px;top:851px;width:2px;height:18px;background:#000;"></div><div class="a" style="left:137px;top:851px;width:106px;height:18px;background:#e0e9df;"></div><div class="a" style="left:243px;top:851px;width:14px;height:18px;background:#fff;"></div><div class="a" style="left:257px;top:851px;width:1px;height:18px;background:#000;"></div><div class="a" style="left:258px;top:851px;width:19px;height:18px;background:#e0e9df;"></div><div class="a" style="left:277px;top:851px;width:1px;height:18px;background:#000;"></div><div class="t" style="left:6px;top:851px;font-size:11px">I<span style="font-size:8.5px;position:relative;top:2px;margin-left:2px;margin-right:3px">[3]</span>[kCnts]</div><div class="t" style="right:1033px;top:853px;text-align:right;font-size:11px;color:#000;">2120.6</div><div class="t" style="left:190px;top:853px;font-size:11px;color:#000;">± 9.7</div><div class="a" style="left:3px;top:869px;width:275px;height:2px;background:#000;"></div><div class="a" style="left:4px;top:871px;width:131px;height:18px;background:#e0e9df;"></div><div class="a" style="left:135px;top:871px;width:2px;height:18px;background:#000;"></div><div class="a" style="left:137px;top:871px;width:106px;height:18px;background:#e0e9df;"></div><div class="a" style="left:243px;top:871px;width:14px;height:18px;background:#fff;"></div><div class="a" style="left:257px;top:871px;width:1px;height:18px;background:#000;"></div><div class="a" style="left:258px;top:871px;width:19px;height:18px;background:#e0e9df;"></div><div class="a" style="left:277px;top:871px;width:1px;height:18px;background:#000;"></div><div class="t" style="left:6px;top:871px;font-size:11px">I<span style="font-size:8.5px;position:relative;top:2px;margin-left:2px;margin-right:3px">Sum</span>[kCnts]</div><div class="t" style="right:1033px;top:873px;text-align:right;font-size:11px;color:#000;">0.000</div><div class="t" style="left:190px;top:873px;font-size:11px;color:#000;">± 0.000</div><div class="a" style="left:3px;top:889px;width:275px;height:2px;background:#000;"></div><div class="a" style="left:4px;top:891px;width:131px;height:18px;background:#e0e9df;"></div><div class="a" style="left:135px;top:891px;width:2px;height:18px;background:#000;"></div><div class="a" style="left:137px;top:891px;width:106px;height:18px;background:#e0e9df;"></div><div class="a" style="left:243px;top:891px;width:14px;height:18px;background:#fff;"></div><div class="a" style="left:257px;top:891px;width:1px;height:18px;background:#000;"></div><div class="a" style="left:258px;top:891px;width:19px;height:18px;background:#e0e9df;"></div><div class="a" style="left:277px;top:891px;width:1px;height:18px;background:#000;"></div><div class="t" style="left:6px;top:891px;font-size:11px">A<span style="font-size:8.5px;position:relative;top:2px;margin-left:2px;margin-right:3px">Sum</span>[kCnts]</div><div class="t" style="right:1033px;top:893px;text-align:right;font-size:11px;color:#000;">0.000</div><div class="t" style="left:190px;top:893px;font-size:11px;color:#000;">± 0.000</div><div class="a" style="left:3px;top:909px;width:275px;height:2px;background:#000;"></div><div class="a" style="left:4px;top:911px;width:131px;height:18px;background:#e0e9df;"></div><div class="a" style="left:135px;top:911px;width:2px;height:18px;background:#000;"></div><div class="a" style="left:137px;top:911px;width:106px;height:18px;background:#e0e9df;"></div><div class="a" style="left:243px;top:911px;width:14px;height:18px;background:#fff;"></div><div class="a" style="left:257px;top:911px;width:1px;height:18px;background:#000;"></div><div class="a" style="left:258px;top:911px;width:19px;height:18px;background:#e0e9df;"></div><div class="a" style="left:277px;top:911px;width:1px;height:18px;background:#000;"></div><div class="t" style="left:6px;top:911px;font-size:11px">τ<span style="font-size:8.5px;position:relative;top:2px;margin-left:2px;margin-right:3px">Amp</span>[ns]</div><div class="t" style="right:1033px;top:913px;text-align:right;font-size:11px;color:#000;">1.0000</div><div class="t" style="left:190px;top:913px;font-size:11px;color:#000;">± 0.0015</div><div class="a" style="left:117px;top:611px;width:1px;height:18px;background:#000;"></div><div class="a" style="left:135px;top:611px;width:2px;height:18px;background:#000;"></div><div class="a" style="left:257px;top:611px;width:1px;height:18px;background:#000;"></div><div class="a" style="left:277px;top:611px;width:1px;height:18px;background:#000;"></div><div class="a" style="left:3px;top:916px;width:293px;height:17px;background:#e0e9df;"></div><div class="a" style="left:278px;top:609px;width:18px;height:307px;background:#c9d1c7;"></div><div class="a" style="left:278px;top:611px;width:17px;height:15px;background:#e3ebe2;border:1px solid #8a8a8a;box-sizing:border-box;"></div><svg class="a" style="left:278px;top:611px" width="17" height="15"><path d="M4.5 10 L12.5 10 L8.5 5.5Z" fill="#000"/></svg><div class="a" style="left:279px;top:627px;width:16px;height:16px;background:#e3ebe2;border:1px solid #8a8a8a;box-sizing:border-box;"></div><div class="a" style="left:278px;top:900px;width:17px;height:16px;background:#e3ebe2;border:1px solid #8a8a8a;box-sizing:border-box;"></div><svg class="a" style="left:278px;top:900px" width="17" height="16"><path d="M4.5 6 L12.5 6 L8.5 10.5Z" fill="#000"/></svg><div class="a" style="left:295px;top:609px;width:1px;height:324px;background:#8a8a8a;"></div><div class="a" style="left:3px;top:916px;width:275px;height:17px;background:#c9d1c7;"></div><div class="a" style="left:3px;top:916px;width:16px;height:17px;background:#e3ebe2;border:1px solid #8a8a8a;box-sizing:border-box;"></div><svg class="a" style="left:3px;top:916px" width="16" height="17"><path d="M10 4.5 L10 12.5 L5.5 8.5Z" fill="#000"/></svg><div class="a" style="left:19px;top:916px;width:18px;height:17px;background:#e3ebe2;border:1px solid #8a8a8a;box-sizing:border-box;"></div><div class="a" style="left:261px;top:916px;width:17px;height:17px;background:#e3ebe2;border:1px solid #8a8a8a;box-sizing:border-box;"></div><svg class="a" style="left:261px;top:916px" width="17" height="17"><path d="M7 4.5 L7 12.5 L11.5 8.5Z" fill="#000"/></svg><div class="a" style="left:278px;top:916px;width:17px;height:17px;background:#e3ebe2;"></div><div class="a" style="left:3px;top:932px;width:293px;height:2px;background:#7a7a7a;"></div><div class="a" style="left:4px;top:935px;width:44px;height:22px;box-sizing:border-box;border:1px solid #6a6a6a;border-radius:3px;background:linear-gradient(#e4ebe3 0%,#e4ebe3 48%,#d3dcd2 52%,#d3dcd2 100%)"></div><div class="t" style="left:-174px;width:400px;top:939px;text-align:center;font-size:11px;color:#000;">Clear</div><div class="a" style="left:52px;top:935px;width:44px;height:22px;box-sizing:border-box;border:1px solid #b05020;border-radius:3px;background:linear-gradient(#ff8a20 0%,#ff7010 45%,#ff5a10 55%,#ff5a10 100%)"></div><div class="t" style="left:-126px;width:400px;top:939px;text-align:center;font-size:11px;color:#000;">Initial Fit</div><div class="a" style="left:100px;top:935px;width:44px;height:22px;box-sizing:border-box;border:1px solid #6a6a6a;border-radius:3px;background:linear-gradient(#e4ebe3 0%,#e4ebe3 48%,#d3dcd2 52%,#d3dcd2 100%)"></div><div class="t" style="left:-78px;width:400px;top:939px;text-align:center;font-size:11px;color:#000;">Fit</div><div class="a" style="left:148px;top:935px;width:44px;height:22px;box-sizing:border-box;border:1px solid #6a6a6a;border-radius:3px;background:linear-gradient(#e4ebe3 0%,#e4ebe3 48%,#d3dcd2 52%,#d3dcd2 100%)"></div><div class="t" style="left:-30px;width:400px;top:939px;text-align:center;font-size:11px;color:#000;">Fit All</div><div class="t" style="left:201px;top:940px;font-size:11px;color:#000;">X² =</div><div class="a" style="left:224px;top:935px;width:54px;height:22px;background:#e0e9df;border:1px solid #707070;box-sizing:border-box;"></div><div class="t" style="right:944px;top:940px;text-align:right;font-size:11px;color:#000;">6.456</div><div class="a" style="left:296px;top:3px;width:1px;height:477px;background:#f6faf4;"></div><div class="t" style="left:297px;top:4px;font-size:11px;letter-spacing:-0.3px">DaisyPollen_cells_FLIM.ptu</div><svg class="a" style="left:297px;top:29px" width="310" height="310" viewBox="0 0 310 310">
<defs><pattern id="spk" width="64" height="64" patternUnits="userSpaceOnUse"><rect x="56" y="58" width="2" height="2" fill="#d8d8d8" fill-opacity="0.35"/><rect x="22" y="60" width="2" height="2" fill="#cccccc" fill-opacity="0.44"/><rect x="56" y="38" width="2" height="2" fill="#707070" fill-opacity="0.23"/><rect x="50" y="56" width="2" height="2" fill="#cccccc" fill-opacity="0.40"/><rect x="8" y="6" width="2" height="2" fill="#606060" fill-opacity="0.26"/><rect x="2" y="58" width="2" height="2" fill="#808080" fill-opacity="0.33"/><rect x="28" y="36" width="2" height="2" fill="#d8d8d8" fill-opacity="0.20"/><rect x="58" y="34" width="2" height="2" fill="#d8d8d8" fill-opacity="0.50"/><rect x="32" y="40" width="2" height="2" fill="#707070" fill-opacity="0.35"/><rect x="8" y="12" width="2" height="2" fill="#d8d8d8" fill-opacity="0.23"/><rect x="48" y="8" width="2" height="2" fill="#606060" fill-opacity="0.45"/><rect x="26" y="26" width="4" height="2" fill="#606060" fill-opacity="0.34"/><rect x="52" y="8" width="2" height="2" fill="#cccccc" fill-opacity="0.39"/><rect x="42" y="10" width="4" height="2" fill="#808080" fill-opacity="0.30"/><rect x="14" y="16" width="2" height="2" fill="#707070" fill-opacity="0.41"/><rect x="6" y="58" width="2" height="2" fill="#d8d8d8" fill-opacity="0.25"/><rect x="56" y="24" width="4" height="2" fill="#707070" fill-opacity="0.33"/><rect x="14" y="50" width="2" height="2" fill="#d8d8d8" fill-opacity="0.50"/><rect x="34" y="38" width="4" height="2" fill="#606060" fill-opacity="0.26"/><rect x="12" y="4" width="2" height="2" fill="#707070" fill-opacity="0.26"/><rect x="0" y="42" width="2" height="2" fill="#808080" fill-opacity="0.32"/><rect x="10" y="26" width="2" height="2" fill="#cccccc" fill-opacity="0.39"/><rect x="46" y="46" width="4" height="2" fill="#cccccc" fill-opacity="0.34"/><rect x="16" y="48" width="2" height="2" fill="#707070" fill-opacity="0.39"/><rect x="28" y="30" width="2" height="2" fill="#707070" fill-opacity="0.25"/><rect x="48" y="60" width="2" height="2" fill="#cccccc" fill-opacity="0.22"/><rect x="12" y="12" width="2" height="2" fill="#606060" fill-opacity="0.35"/><rect x="30" y="50" width="4" height="2" fill="#808080" fill-opacity="0.33"/><rect x="36" y="22" width="4" height="2" fill="#606060" fill-opacity="0.24"/><rect x="8" y="34" width="2" height="2" fill="#707070" fill-opacity="0.48"/><rect x="2" y="8" width="2" height="2" fill="#808080" fill-opacity="0.32"/><rect x="6" y="4" width="2" height="2" fill="#707070" fill-opacity="0.28"/><rect x="10" y="46" width="2" height="2" fill="#707070" fill-opacity="0.47"/><rect x="16" y="4" width="2" height="2" fill="#606060" fill-opacity="0.34"/><rect x="38" y="4" width="2" height="2" fill="#606060" fill-opacity="0.38"/><rect x="60" y="8" width="2" height="2" fill="#808080" fill-opacity="0.30"/><rect x="8" y="56" width="2" height="2" fill="#cccccc" fill-opacity="0.31"/><rect x="16" y="42" width="4" height="2" fill="#808080" fill-opacity="0.23"/><rect x="8" y="52" width="2" height="2" fill="#606060" fill-opacity="0.46"/><rect x="48" y="48" width="2" height="2" fill="#cccccc" fill-opacity="0.20"/><rect x="10" y="10" width="4" height="2" fill="#606060" fill-opacity="0.50"/><rect x="42" y="48" width="4" height="2" fill="#cccccc" fill-opacity="0.34"/><rect x="10" y="2" width="4" height="2" fill="#808080" fill-opacity="0.38"/><rect x="2" y="28" width="4" height="2" fill="#606060" fill-opacity="0.35"/><rect x="32" y="0" width="2" height="2" fill="#808080" fill-opacity="0.29"/><rect x="20" y="42" width="2" height="2" fill="#d8d8d8" fill-opacity="0.35"/><rect x="40" y="50" width="4" height="2" fill="#808080" fill-opacity="0.26"/><rect x="24" y="26" width="2" height="2" fill="#d8d8d8" fill-opacity="0.27"/><rect x="26" y="16" width="2" height="2" fill="#707070" fill-opacity="0.35"/><rect x="8" y="34" width="4" height="2" fill="#707070" fill-opacity="0.23"/><rect x="34" y="26" width="4" height="2" fill="#d8d8d8" fill-opacity="0.31"/><rect x="40" y="56" width="2" height="2" fill="#808080" fill-opacity="0.22"/><rect x="34" y="4" width="2" height="2" fill="#808080" fill-opacity="0.37"/><rect x="2" y="16" width="2" height="2" fill="#d8d8d8" fill-opacity="0.34"/><rect x="34" y="30" width="2" height="2" fill="#707070" fill-opacity="0.44"/><rect x="56" y="12" width="2" height="2" fill="#cccccc" fill-opacity="0.40"/><rect x="8" y="24" width="2" height="2" fill="#707070" fill-opacity="0.45"/><rect x="22" y="0" width="2" height="2" fill="#d8d8d8" fill-opacity="0.36"/><rect x="22" y="28" width="2" height="2" fill="#808080" fill-opacity="0.43"/><rect x="50" y="28" width="4" height="2" fill="#606060" fill-opacity="0.32"/><rect x="16" y="56" width="2" height="2" fill="#d8d8d8" fill-opacity="0.26"/><rect x="48" y="42" width="2" height="2" fill="#d8d8d8" fill-opacity="0.30"/><rect x="12" y="14" width="4" height="2" fill="#707070" fill-opacity="0.27"/><rect x="10" y="38" width="2" height="2" fill="#cccccc" fill-opacity="0.49"/><rect x="32" y="2" width="2" height="2" fill="#808080" fill-opacity="0.35"/><rect x="56" y="42" width="2" height="2" fill="#cccccc" fill-opacity="0.33"/><rect x="62" y="2" width="2" height="2" fill="#707070" fill-opacity="0.44"/><rect x="54" y="4" width="2" height="2" fill="#707070" fill-opacity="0.36"/><rect x="60" y="18" width="4" height="2" fill="#cccccc" fill-opacity="0.47"/><rect x="62" y="10" width="2" height="2" fill="#707070" fill-opacity="0.33"/><rect x="20" y="32" width="2" height="2" fill="#808080" fill-opacity="0.40"/><rect x="38" y="18" width="4" height="2" fill="#cccccc" fill-opacity="0.36"/><rect x="24" y="52" width="2" height="2" fill="#cccccc" fill-opacity="0.23"/><rect x="48" y="2" width="4" height="2" fill="#cccccc" fill-opacity="0.49"/><rect x="14" y="62" width="2" height="2" fill="#606060" fill-opacity="0.41"/><rect x="58" y="52" width="4" height="2" fill="#d8d8d8" fill-opacity="0.28"/><rect x="62" y="16" width="4" height="2" fill="#808080" fill-opacity="0.33"/><rect x="40" y="12" width="2" height="2" fill="#707070" fill-opacity="0.33"/><rect x="32" y="16" width="2" height="2" fill="#606060" fill-opacity="0.21"/><rect x="28" y="0" width="2" height="2" fill="#808080" fill-opacity="0.30"/><rect x="30" y="62" width="2" height="2" fill="#606060" fill-opacity="0.35"/><rect x="32" y="24" width="2" height="2" fill="#cccccc" fill-opacity="0.46"/><rect x="48" y="52" width="2" height="2" fill="#cccccc" fill-opacity="0.38"/><rect x="26" y="26" width="2" height="2" fill="#cccccc" fill-opacity="0.38"/><rect x="28" y="44" width="2" height="2" fill="#707070" fill-opacity="0.29"/><rect x="24" y="26" width="2" height="2" fill="#707070" fill-opacity="0.47"/><rect x="30" y="16" width="2" height="2" fill="#606060" fill-opacity="0.28"/><rect x="54" y="52" width="2" height="2" fill="#cccccc" fill-opacity="0.44"/><rect x="24" y="50" width="2" height="2" fill="#606060" fill-opacity="0.23"/><rect x="46" y="14" width="2" height="2" fill="#cccccc" fill-opacity="0.39"/><rect x="24" y="8" width="2" height="2" fill="#d8d8d8" fill-opacity="0.23"/><rect x="60" y="18" width="2" height="2" fill="#707070" fill-opacity="0.26"/><rect x="22" y="20" width="2" height="2" fill="#808080" fill-opacity="0.48"/><rect x="6" y="16" width="2" height="2" fill="#d8d8d8" fill-opacity="0.22"/><rect x="40" y="50" width="2" height="2" fill="#d8d8d8" fill-opacity="0.33"/><rect x="54" y="26" width="2" height="2" fill="#cccccc" fill-opacity="0.31"/><rect x="24" y="22" width="2" height="2" fill="#d8d8d8" fill-opacity="0.34"/><rect x="50" y="24" width="2" height="2" fill="#cccccc" fill-opacity="0.25"/><rect x="40" y="10" width="2" height="2" fill="#d8d8d8" fill-opacity="0.37"/><rect x="42" y="32" width="2" height="2" fill="#808080" fill-opacity="0.47"/><rect x="50" y="16" width="2" height="2" fill="#808080" fill-opacity="0.46"/><rect x="54" y="22" width="2" height="2" fill="#d8d8d8" fill-opacity="0.26"/><rect x="8" y="42" width="2" height="2" fill="#808080" fill-opacity="0.34"/><rect x="44" y="6" width="2" height="2" fill="#707070" fill-opacity="0.28"/><rect x="42" y="26" width="2" height="2" fill="#d8d8d8" fill-opacity="0.37"/><rect x="48" y="62" width="4" height="2" fill="#707070" fill-opacity="0.41"/><rect x="2" y="14" width="2" height="2" fill="#cccccc" fill-opacity="0.23"/><rect x="32" y="56" width="2" height="2" fill="#d8d8d8" fill-opacity="0.35"/><rect x="48" y="0" width="2" height="2" fill="#606060" fill-opacity="0.28"/><rect x="42" y="52" width="2" height="2" fill="#cccccc" fill-opacity="0.37"/><rect x="56" y="8" width="2" height="2" fill="#cccccc" fill-opacity="0.38"/><rect x="48" y="20" width="2" height="2" fill="#d8d8d8" fill-opacity="0.34"/><rect x="62" y="6" width="4" height="2" fill="#d8d8d8" fill-opacity="0.48"/><rect x="36" y="50" width="2" height="2" fill="#cccccc" fill-opacity="0.29"/><rect x="60" y="34" width="2" height="2" fill="#cccccc" fill-opacity="0.48"/><rect x="2" y="0" width="2" height="2" fill="#707070" fill-opacity="0.38"/><rect x="52" y="48" width="4" height="2" fill="#606060" fill-opacity="0.47"/><rect x="6" y="40" width="2" height="2" fill="#606060" fill-opacity="0.44"/><rect x="54" y="60" width="2" height="2" fill="#808080" fill-opacity="0.49"/><rect x="4" y="12" width="2" height="2" fill="#d8d8d8" fill-opacity="0.24"/><rect x="14" y="6" width="2" height="2" fill="#cccccc" fill-opacity="0.33"/><rect x="26" y="6" width="2" height="2" fill="#808080" fill-opacity="0.36"/><rect x="46" y="56" width="4" height="2" fill="#707070" fill-opacity="0.40"/><rect x="32" y="52" width="2" height="2" fill="#808080" fill-opacity="0.43"/><rect x="36" y="16" width="2" height="2" fill="#707070" fill-opacity="0.34"/><rect x="44" y="34" width="2" height="2" fill="#808080" fill-opacity="0.38"/><rect x="34" y="30" width="2" height="2" fill="#707070" fill-opacity="0.49"/><rect x="4" y="6" width="4" height="2" fill="#606060" fill-opacity="0.28"/><rect x="2" y="4" width="2" height="2" fill="#606060" fill-opacity="0.27"/><rect x="8" y="10" width="2" height="2" fill="#707070" fill-opacity="0.37"/><rect x="60" y="60" width="2" height="2" fill="#808080" fill-opacity="0.26"/><rect x="62" y="16" width="4" height="2" fill="#606060" fill-opacity="0.44"/><rect x="26" y="56" width="4" height="2" fill="#d8d8d8" fill-opacity="0.42"/><rect x="18" y="46" width="2" height="2" fill="#707070" fill-opacity="0.40"/><rect x="36" y="22" width="2" height="2" fill="#d8d8d8" fill-opacity="0.40"/><rect x="58" y="40" width="4" height="2" fill="#606060" fill-opacity="0.36"/><rect x="62" y="58" width="2" height="2" fill="#808080" fill-opacity="0.45"/><rect x="8" y="38" width="2" height="2" fill="#707070" fill-opacity="0.47"/><rect x="38" y="62" width="2" height="2" fill="#808080" fill-opacity="0.28"/><rect x="28" y="44" width="2" height="2" fill="#808080" fill-opacity="0.31"/><rect x="40" y="56" width="2" height="2" fill="#cccccc" fill-opacity="0.38"/><rect x="56" y="38" width="4" height="2" fill="#d8d8d8" fill-opacity="0.30"/><rect x="30" y="10" width="2" height="2" fill="#808080" fill-opacity="0.45"/><rect x="46" y="50" width="2" height="2" fill="#cccccc" fill-opacity="0.32"/><rect x="46" y="48" width="2" height="2" fill="#cccccc" fill-opacity="0.25"/><rect x="22" y="10" width="2" height="2" fill="#d8d8d8" fill-opacity="0.46"/><rect x="2" y="28" width="2" height="2" fill="#cccccc" fill-opacity="0.22"/><rect x="36" y="2" width="2" height="2" fill="#d8d8d8" fill-opacity="0.22"/><rect x="10" y="42" width="2" height="2" fill="#606060" fill-opacity="0.28"/><rect x="40" y="10" width="2" height="2" fill="#606060" fill-opacity="0.39"/><rect x="12" y="54" width="4" height="2" fill="#707070" fill-opacity="0.41"/><rect x="42" y="58" width="2" height="2" fill="#d8d8d8" fill-opacity="0.31"/><rect x="16" y="62" width="2" height="2" fill="#d8d8d8" fill-opacity="0.36"/><rect x="4" y="52" width="4" height="2" fill="#808080" fill-opacity="0.46"/><rect x="10" y="58" width="2" height="2" fill="#cccccc" fill-opacity="0.39"/><rect x="0" y="14" width="2" height="2" fill="#d8d8d8" fill-opacity="0.48"/><rect x="30" y="20" width="2" height="2" fill="#d8d8d8" fill-opacity="0.41"/><rect x="26" y="48" width="2" height="2" fill="#d8d8d8" fill-opacity="0.36"/><rect x="6" y="60" width="2" height="2" fill="#808080" fill-opacity="0.42"/><rect x="18" y="22" width="2" height="2" fill="#606060" fill-opacity="0.43"/><rect x="60" y="4" width="2" height="2" fill="#808080" fill-opacity="0.23"/><rect x="44" y="26" width="4" height="2" fill="#cccccc" fill-opacity="0.27"/><rect x="28" y="56" width="4" height="2" fill="#707070" fill-opacity="0.47"/><rect x="22" y="38" width="4" height="2" fill="#cccccc" fill-opacity="0.48"/><rect x="32" y="62" width="2" height="2" fill="#d8d8d8" fill-opacity="0.47"/><rect x="10" y="60" width="2" height="2" fill="#707070" fill-opacity="0.32"/><rect x="16" y="48" width="2" height="2" fill="#cccccc" fill-opacity="0.44"/><rect x="6" y="30" width="2" height="2" fill="#606060" fill-opacity="0.46"/><rect x="56" y="30" width="2" height="2" fill="#d8d8d8" fill-opacity="0.38"/><rect x="52" y="20" width="2" height="2" fill="#808080" fill-opacity="0.24"/><rect x="34" y="6" width="2" height="2" fill="#707070" fill-opacity="0.37"/><rect x="0" y="26" width="2" height="2" fill="#707070" fill-opacity="0.45"/><rect x="44" y="34" width="2" height="2" fill="#cccccc" fill-opacity="0.41"/><rect x="60" y="58" width="2" height="2" fill="#606060" fill-opacity="0.49"/><rect x="2" y="24" width="2" height="2" fill="#d8d8d8" fill-opacity="0.26"/><rect x="56" y="26" width="4" height="2" fill="#606060" fill-opacity="0.36"/><rect x="20" y="38" width="2" height="2" fill="#808080" fill-opacity="0.29"/><rect x="38" y="58" width="2" height="2" fill="#606060" fill-opacity="0.31"/><rect x="12" y="50" width="2" height="2" fill="#d8d8d8" fill-opacity="0.42"/><rect x="56" y="0" width="4" height="2" fill="#d8d8d8" fill-opacity="0.41"/><rect x="30" y="36" width="2" height="2" fill="#cccccc" fill-opacity="0.23"/><rect x="26" y="18" width="2" height="2" fill="#808080" fill-opacity="0.39"/><rect x="42" y="50" width="2" height="2" fill="#cccccc" fill-opacity="0.40"/><rect x="24" y="24" width="2" height="2" fill="#d8d8d8" fill-opacity="0.42"/><rect x="38" y="34" width="2" height="2" fill="#cccccc" fill-opacity="0.34"/><rect x="56" y="48" width="2" height="2" fill="#606060" fill-opacity="0.23"/><rect x="16" y="22" width="2" height="2" fill="#707070" fill-opacity="0.26"/><rect x="58" y="10" width="2" height="2" fill="#606060" fill-opacity="0.27"/><rect x="14" y="54" width="2" height="2" fill="#d8d8d8" fill-opacity="0.43"/><rect x="54" y="16" width="4" height="2" fill="#707070" fill-opacity="0.43"/><rect x="60" y="42" width="4" height="2" fill="#d8d8d8" fill-opacity="0.39"/><rect x="40" y="30" width="2" height="2" fill="#cccccc" fill-opacity="0.36"/><rect x="42" y="24" width="4" height="2" fill="#808080" fill-opacity="0.29"/><rect x="12" y="48" width="2" height="2" fill="#707070" fill-opacity="0.35"/><rect x="12" y="20" width="2" height="2" fill="#808080" fill-opacity="0.43"/><rect x="28" y="44" width="2" height="2" fill="#cccccc" fill-opacity="0.35"/><rect x="24" y="24" width="2" height="2" fill="#cccccc" fill-opacity="0.48"/><rect x="10" y="16" width="4" height="2" fill="#707070" fill-opacity="0.34"/><rect x="42" y="42" width="2" height="2" fill="#606060" fill-opacity="0.48"/><rect x="34" y="58" width="2" height="2" fill="#606060" fill-opacity="0.34"/><rect x="30" y="8" width="2" height="2" fill="#cccccc" fill-opacity="0.47"/><rect x="42" y="18" width="2" height="2" fill="#606060" fill-opacity="0.48"/><rect x="36" y="46" width="2" height="2" fill="#707070" fill-opacity="0.43"/><rect x="20" y="22" width="2" height="2" fill="#cccccc" fill-opacity="0.36"/><rect x="58" y="4" width="2" height="2" fill="#d8d8d8" fill-opacity="0.25"/><rect x="38" y="48" width="2" height="2" fill="#cccccc" fill-opacity="0.38"/><rect x="20" y="24" width="2" height="2" fill="#d8d8d8" fill-opacity="0.34"/><rect x="48" y="14" width="2" height="2" fill="#cccccc" fill-opacity="0.32"/><rect x="16" y="32" width="2" height="2" fill="#707070" fill-opacity="0.37"/><rect x="6" y="4" width="4" height="2" fill="#707070" fill-opacity="0.32"/><rect x="12" y="60" width="4" height="2" fill="#808080" fill-opacity="0.32"/><rect x="36" y="62" width="4" height="2" fill="#d8d8d8" fill-opacity="0.45"/><rect x="54" y="14" width="2" height="2" fill="#cccccc" fill-opacity="0.23"/><rect x="54" y="52" width="2" height="2" fill="#606060" fill-opacity="0.30"/><rect x="36" y="54" width="2" height="2" fill="#d8d8d8" fill-opacity="0.38"/><rect x="8" y="30" width="2" height="2" fill="#606060" fill-opacity="0.45"/><rect x="50" y="6" width="2" height="2" fill="#d8d8d8" fill-opacity="0.41"/><rect x="38" y="50" width="2" height="2" fill="#707070" fill-opacity="0.46"/><rect x="52" y="20" width="4" height="2" fill="#707070" fill-opacity="0.39"/><rect x="14" y="8" width="2" height="2" fill="#606060" fill-opacity="0.36"/><rect x="14" y="58" width="2" height="2" fill="#606060" fill-opacity="0.29"/><rect x="2" y="40" width="4" height="2" fill="#707070" fill-opacity="0.22"/><rect x="50" y="18" width="2" height="2" fill="#808080" fill-opacity="0.41"/><rect x="4" y="38" width="2" height="2" fill="#606060" fill-opacity="0.34"/><rect x="38" y="40" width="4" height="2" fill="#d8d8d8" fill-opacity="0.24"/><rect x="26" y="24" width="2" height="2" fill="#808080" fill-opacity="0.46"/><rect x="24" y="40" width="2" height="2" fill="#808080" fill-opacity="0.47"/><rect x="22" y="24" width="2" height="2" fill="#cccccc" fill-opacity="0.39"/><rect x="6" y="12" width="2" height="2" fill="#808080" fill-opacity="0.42"/><rect x="34" y="52" width="4" height="2" fill="#707070" fill-opacity="0.30"/><rect x="52" y="10" width="2" height="2" fill="#707070" fill-opacity="0.27"/><rect x="14" y="24" width="2" height="2" fill="#808080" fill-opacity="0.25"/><rect x="36" y="34" width="2" height="2" fill="#808080" fill-opacity="0.44"/><rect x="28" y="38" width="2" height="2" fill="#707070" fill-opacity="0.40"/><rect x="16" y="10" width="4" height="2" fill="#d8d8d8" fill-opacity="0.49"/><rect x="8" y="4" width="2" height="2" fill="#606060" fill-opacity="0.38"/><rect x="32" y="54" width="2" height="2" fill="#cccccc" fill-opacity="0.23"/><rect x="24" y="30" width="2" height="2" fill="#707070" fill-opacity="0.28"/><rect x="22" y="18" width="4" height="2" fill="#606060" fill-opacity="0.39"/><rect x="0" y="62" width="2" height="2" fill="#606060" fill-opacity="0.25"/><rect x="40" y="60" width="2" height="2" fill="#606060" fill-opacity="0.36"/><rect x="20" y="14" width="4" height="2" fill="#cccccc" fill-opacity="0.33"/><rect x="32" y="30" width="2" height="2" fill="#808080" fill-opacity="0.35"/><rect x="62" y="32" width="2" height="2" fill="#606060" fill-opacity="0.26"/><rect x="56" y="22" width="2" height="2" fill="#808080" fill-opacity="0.25"/><rect x="62" y="54" width="2" height="2" fill="#cccccc" fill-opacity="0.33"/><rect x="2" y="8" width="2" height="2" fill="#606060" fill-opacity="0.47"/><rect x="18" y="6" width="2" height="2" fill="#808080" fill-opacity="0.33"/><rect x="32" y="62" width="2" height="2" fill="#606060" fill-opacity="0.40"/><rect x="48" y="32" width="4" height="2" fill="#707070" fill-opacity="0.25"/><rect x="6" y="40" width="2" height="2" fill="#d8d8d8" fill-opacity="0.34"/><rect x="4" y="16" width="2" height="2" fill="#d8d8d8" fill-opacity="0.43"/><rect x="18" y="58" width="2" height="2" fill="#cccccc" fill-opacity="0.42"/><rect x="0" y="30" width="2" height="2" fill="#d8d8d8" fill-opacity="0.47"/><rect x="10" y="50" width="4" height="2" fill="#cccccc" fill-opacity="0.29"/><rect x="8" y="4" width="2" height="2" fill="#cccccc" fill-opacity="0.27"/><rect x="14" y="30" width="2" height="2" fill="#d8d8d8" fill-opacity="0.34"/><rect x="46" y="38" width="2" height="2" fill="#808080" fill-opacity="0.48"/><rect x="4" y="20" width="2" height="2" fill="#d8d8d8" fill-opacity="0.38"/><rect x="42" y="22" width="2" height="2" fill="#d8d8d8" fill-opacity="0.46"/><rect x="48" y="48" width="2" height="2" fill="#606060" fill-opacity="0.26"/><rect x="30" y="22" width="4" height="2" fill="#cccccc" fill-opacity="0.44"/><rect x="26" y="50" width="2" height="2" fill="#707070" fill-opacity="0.38"/><rect x="60" y="56" width="2" height="2" fill="#d8d8d8" fill-opacity="0.50"/><rect x="62" y="26" width="2" height="2" fill="#cccccc" fill-opacity="0.31"/><rect x="6" y="34" width="2" height="2" fill="#808080" fill-opacity="0.48"/><rect x="22" y="32" width="2" height="2" fill="#cccccc" fill-opacity="0.32"/><rect x="34" y="12" width="2" height="2" fill="#808080" fill-opacity="0.22"/><rect x="16" y="30" width="2" height="2" fill="#606060" fill-opacity="0.21"/><rect x="48" y="56" width="4" height="2" fill="#606060" fill-opacity="0.46"/><rect x="40" y="32" width="2" height="2" fill="#cccccc" fill-opacity="0.40"/><rect x="50" y="30" width="2" height="2" fill="#d8d8d8" fill-opacity="0.21"/><rect x="16" y="4" width="4" height="2" fill="#707070" fill-opacity="0.29"/><rect x="60" y="16" width="2" height="2" fill="#cccccc" fill-opacity="0.41"/><rect x="40" y="56" width="2" height="2" fill="#d8d8d8" fill-opacity="0.24"/><rect x="34" y="56" width="2" height="2" fill="#d8d8d8" fill-opacity="0.24"/><rect x="28" y="12" width="2" height="2" fill="#808080" fill-opacity="0.31"/><rect x="16" y="4" width="4" height="2" fill="#606060" fill-opacity="0.42"/><rect x="0" y="38" width="2" height="2" fill="#606060" fill-opacity="0.48"/><rect x="44" y="14" width="2" height="2" fill="#808080" fill-opacity="0.27"/><rect x="10" y="54" width="2" height="2" fill="#606060" fill-opacity="0.32"/><rect x="62" y="48" width="2" height="2" fill="#808080" fill-opacity="0.29"/><rect x="28" y="20" width="2" height="2" fill="#d8d8d8" fill-opacity="0.26"/><rect x="44" y="30" width="2" height="2" fill="#cccccc" fill-opacity="0.23"/><rect x="54" y="18" width="2" height="2" fill="#d8d8d8" fill-opacity="0.37"/><rect x="2" y="50" width="2" height="2" fill="#606060" fill-opacity="0.31"/><rect x="50" y="34" width="2" height="2" fill="#606060" fill-opacity="0.31"/><rect x="60" y="40" width="2" height="2" fill="#808080" fill-opacity="0.22"/><rect x="44" y="40" width="2" height="2" fill="#808080" fill-opacity="0.37"/><rect x="22" y="60" width="2" height="2" fill="#d8d8d8" fill-opacity="0.38"/><rect x="2" y="26" width="4" height="2" fill="#606060" fill-opacity="0.39"/><rect x="52" y="8" width="4" height="2" fill="#808080" fill-opacity="0.22"/><rect x="56" y="48" width="2" height="2" fill="#d8d8d8" fill-opacity="0.21"/><rect x="34" y="38" width="2" height="2" fill="#d8d8d8" fill-opacity="0.31"/><rect x="18" y="24" width="2" height="2" fill="#808080" fill-opacity="0.27"/><rect x="30" y="0" width="2" height="2" fill="#cccccc" fill-opacity="0.49"/><rect x="30" y="62" width="2" height="2" fill="#cccccc" fill-opacity="0.22"/><rect x="32" y="44" width="2" height="2" fill="#606060" fill-opacity="0.47"/><rect x="26" y="50" width="2" height="2" fill="#707070" fill-opacity="0.49"/><rect x="20" y="42" width="2" height="2" fill="#cccccc" fill-opacity="0.41"/></pattern>
<filter id="bl3" x="-20%" y="-20%" width="140%" height="140%"><feGaussianBlur stdDeviation="2.6"/></filter>
<filter id="bl1" x="-20%" y="-20%" width="140%" height="140%"><feGaussianBlur stdDeviation="1.2"/></filter>
<radialGradient id="inner" cx="0.42" cy="0.6" r="0.6"><stop offset="0" stop-color="#c8c8c8"/><stop offset="0.75" stop-color="#bcbcbc"/><stop offset="1" stop-color="#acacac"/></radialGradient>
<mask id="shellmask"><g filter="url(#bl3)"><polygon points="180,14 198,46 252,40 260,91 283,121 304,131 268,145 282,187 243,208 222,236 214,262 205,310 165,310 150,300 145,272 125,266 95,250 66,222 62,190 38,168 64,135 35,104 80,97 95,82 108,62 126,52 150,44" fill="#fff"/><polygon points="-5,196 0,198 25,212 37,235 47,258 62,280 90,312 -5,312" fill="#fff"/><ellipse cx="158" cy="151" rx="96" ry="94" fill="#fff"/></g></mask>
</defs>
<rect width="310" height="310" fill="#000"/>
<g filter="url(#bl1)">
<circle cx="52" cy="12" r="4" fill="#555"/><circle cx="2" cy="42" r="5" fill="#888"/><circle cx="53" cy="66" r="4" fill="#555"/><circle cx="1" cy="92" r="3" fill="#777"/>
</g>
<polygon points="-5,196 0,198 25,212 37,235 47,258 62,280 90,312 -5,312" fill="#c8c8c8" filter="url(#bl3)"/>
<polygon points="180,14 198,46 252,40 260,91 283,121 304,131 268,145 282,187 243,208 222,236 214,262 205,310 165,310 150,300 145,272 125,266 95,250 66,222 62,190 38,168 64,135 35,104 80,97 95,82 108,62 126,52 150,44" fill="#a2a2a2" filter="url(#bl3)"/>
<polygon points="180,14 198,46 252,40 260,91 283,121 304,131 268,145 282,187 243,208 222,236 214,262 205,310 165,310 150,300 145,272 125,266 95,250 66,222 62,190 38,168 64,135 35,104 80,97 95,82 108,62 126,52 150,44" fill="none" stroke="#b0b0b0" stroke-width="6" stroke-linejoin="round" filter="url(#bl3)" opacity="0.7"/>
<ellipse cx="158" cy="151" rx="97" ry="95" fill="#a6a6a6" filter="url(#bl3)"/>
<ellipse cx="158" cy="151" rx="90" ry="88" fill="none" stroke="#6a6a6a" stroke-width="3.5" filter="url(#bl1)"/>
<ellipse cx="158" cy="151" rx="87" ry="85" fill="url(#inner)" filter="url(#bl1)"/>
<path d="M100 232 Q140 262 215 250" fill="none" stroke="#6a6a6a" stroke-width="3" filter="url(#bl1)"/>
<rect width="310" height="310" fill="url(#spk)" mask="url(#shellmask)"/>
<path d="M101 31 L112 38 L135 46 L160 52 L174 60 L172 68 L150 73 L128 76 L112 84 L98 94 L84 98 L80 94 L96 76 L104 62 L103 45Z" fill="#f07a18" filter="url(#bl1)"/>
<rect x="102" y="74" width="2" height="2" fill="#ff9020"/><rect x="126" y="74" width="2" height="2" fill="#e86010"/><rect x="102" y="70" width="2" height="2" fill="#ff9020"/><rect x="154" y="70" width="2" height="2" fill="#d05010"/><rect x="140" y="58" width="2" height="2" fill="#d05010"/><rect x="132" y="52" width="2" height="2" fill="#ffb030"/><rect x="120" y="52" width="2" height="2" fill="#ffb030"/><rect x="98" y="78" width="2" height="2" fill="#ff7a10"/><rect x="94" y="88" width="2" height="2" fill="#d05010"/><rect x="144" y="58" width="2" height="2" fill="#d05010"/><rect x="136" y="66" width="2" height="2" fill="#f07818"/><rect x="120" y="48" width="2" height="2" fill="#f07818"/><rect x="138" y="72" width="2" height="2" fill="#ffb030"/><rect x="108" y="52" width="2" height="2" fill="#ff7a10"/><rect x="92" y="94" width="2" height="2" fill="#ffb030"/><rect x="112" y="38" width="2" height="2" fill="#e86010"/><rect x="114" y="60" width="2" height="2" fill="#ff9020"/><rect x="92" y="86" width="2" height="2" fill="#d05010"/><rect x="110" y="38" width="2" height="2" fill="#d05010"/><rect x="98" y="76" width="2" height="2" fill="#e86010"/><rect x="108" y="66" width="2" height="2" fill="#ff9020"/><rect x="132" y="52" width="2" height="2" fill="#f07818"/><rect x="148" y="70" width="2" height="2" fill="#ff7a10"/><rect x="104" y="84" width="2" height="2" fill="#d05010"/><rect x="160" y="64" width="2" height="2" fill="#ff7a10"/><rect x="156" y="56" width="2" height="2" fill="#ff7a10"/><rect x="106" y="52" width="2" height="2" fill="#e86010"/><rect x="100" y="88" width="2" height="2" fill="#ff9020"/><rect x="124" y="74" width="2" height="2" fill="#ffb030"/><rect x="104" y="48" width="2" height="2" fill="#ff9020"/><rect x="160" y="64" width="2" height="2" fill="#d05010"/><rect x="116" y="44" width="2" height="2" fill="#ffb030"/><rect x="90" y="88" width="2" height="2" fill="#e86010"/><rect x="104" y="82" width="2" height="2" fill="#f07818"/><rect x="122" y="66" width="2" height="2" fill="#f07818"/><rect x="136" y="64" width="2" height="2" fill="#ffb030"/><rect x="166" y="60" width="2" height="2" fill="#ff9020"/><rect x="114" y="72" width="2" height="2" fill="#ff9020"/><rect x="138" y="56" width="2" height="2" fill="#ff9020"/><rect x="126" y="50" width="2" height="2" fill="#d05010"/><rect x="144" y="70" width="2" height="2" fill="#d05010"/><rect x="162" y="56" width="2" height="2" fill="#f07818"/><rect x="154" y="56" width="2" height="2" fill="#d05010"/><rect x="126" y="48" width="2" height="2" fill="#f07818"/><rect x="162" y="62" width="2" height="2" fill="#ff7a10"/><rect x="94" y="84" width="2" height="2" fill="#d05010"/><rect x="118" y="66" width="2" height="2" fill="#ffb030"/><rect x="110" y="60" width="2" height="2" fill="#f07818"/><rect x="138" y="46" width="2" height="2" fill="#ff9020"/><rect x="144" y="48" width="2" height="2" fill="#e86010"/><rect x="102" y="82" width="2" height="2" fill="#f07818"/><rect x="108" y="48" width="2" height="2" fill="#ff9020"/><rect x="130" y="44" width="2" height="2" fill="#d05010"/><rect x="118" y="40" width="2" height="2" fill="#e86010"/><rect x="94" y="82" width="2" height="2" fill="#ffb030"/><rect x="142" y="56" width="2" height="2" fill="#ff7a10"/><rect x="92" y="80" width="2" height="2" fill="#ff7a10"/><rect x="118" y="64" width="2" height="2" fill="#ff7a10"/><rect x="156" y="62" width="2" height="2" fill="#e86010"/><rect x="128" y="74" width="2" height="2" fill="#ff7a10"/><rect x="134" y="72" width="2" height="2" fill="#d05010"/><rect x="150" y="70" width="2" height="2" fill="#d05010"/><rect x="108" y="42" width="2" height="2" fill="#ff7a10"/><rect x="120" y="76" width="2" height="2" fill="#d05010"/><rect x="110" y="76" width="2" height="2" fill="#f07818"/><rect x="118" y="56" width="2" height="2" fill="#f07818"/><rect x="120" y="52" width="2" height="2" fill="#d05010"/><rect x="112" y="64" width="2" height="2" fill="#d05010"/><rect x="116" y="42" width="2" height="2" fill="#ff9020"/><rect x="130" y="58" width="2" height="2" fill="#ffb030"/><rect x="120" y="48" width="2" height="2" fill="#e86010"/><rect x="116" y="66" width="2" height="2" fill="#ff9020"/><rect x="158" y="56" width="2" height="2" fill="#f07818"/><rect x="132" y="72" width="2" height="2" fill="#ff7a10"/><rect x="102" y="40" width="2" height="2" fill="#d05010"/><rect x="94" y="86" width="2" height="2" fill="#ffb030"/><rect x="130" y="68" width="2" height="2" fill="#ff7a10"/><rect x="106" y="42" width="2" height="2" fill="#d05010"/><rect x="128" y="54" width="2" height="2" fill="#ff7a10"/><rect x="154" y="70" width="2" height="2" fill="#e86010"/><rect x="100" y="74" width="2" height="2" fill="#d05010"/><rect x="124" y="48" width="2" height="2" fill="#d05010"/><rect x="108" y="62" width="2" height="2" fill="#ffb030"/><rect x="112" y="38" width="2" height="2" fill="#ffb030"/><rect x="128" y="60" width="2" height="2" fill="#ff7a10"/><rect x="106" y="84" width="2" height="2" fill="#f07818"/><rect x="108" y="52" width="2" height="2" fill="#f07818"/><rect x="144" y="48" width="2" height="2" fill="#ff9020"/><rect x="152" y="50" width="2" height="2" fill="#f07818"/><rect x="142" y="72" width="2" height="2" fill="#d05010"/><rect x="98" y="86" width="2" height="2" fill="#ffb030"/><rect x="118" y="42" width="2" height="2" fill="#e86010"/><rect x="104" y="50" width="2" height="2" fill="#ffb030"/><rect x="170" y="66" width="2" height="2" fill="#f07818"/><rect x="172" y="62" width="2" height="2" fill="#ff9020"/><rect x="110" y="74" width="2" height="2" fill="#ff9020"/><rect x="112" y="66" width="2" height="2" fill="#ffb030"/><rect x="112" y="46" width="2" height="2" fill="#ffb030"/><rect x="116" y="64" width="2" height="2" fill="#f07818"/><rect x="98" y="78" width="2" height="2" fill="#e86010"/><rect x="148" y="50" width="2" height="2" fill="#f07818"/><rect x="164" y="62" width="2" height="2" fill="#ffb030"/><rect x="124" y="56" width="2" height="2" fill="#ff7a10"/><rect x="144" y="64" width="2" height="2" fill="#f07818"/><rect x="108" y="38" width="2" height="2" fill="#f07818"/><rect x="104" y="76" width="2" height="2" fill="#ffb030"/><rect x="124" y="48" width="2" height="2" fill="#ff9020"/><rect x="132" y="48" width="2" height="2" fill="#ff7a10"/><rect x="88" y="84" width="2" height="2" fill="#f07818"/><rect x="104" y="42" width="2" height="2" fill="#d05010"/><rect x="96" y="92" width="2" height="2" fill="#e86010"/><rect x="90" y="92" width="2" height="2" fill="#ff9020"/><rect x="112" y="72" width="2" height="2" fill="#e86010"/><rect x="168" y="64" width="2" height="2" fill="#e86010"/><rect x="154" y="70" width="2" height="2" fill="#e86010"/><rect x="118" y="68" width="2" height="2" fill="#ff9020"/><rect x="130" y="58" width="2" height="2" fill="#d05010"/><rect x="124" y="72" width="2" height="2" fill="#e86010"/><rect x="146" y="72" width="2" height="2" fill="#f07818"/><rect x="138" y="60" width="2" height="2" fill="#d05010"/><rect x="140" y="58" width="2" height="2" fill="#ffb030"/><rect x="166" y="62" width="2" height="2" fill="#f07818"/><rect x="146" y="62" width="2" height="2" fill="#f07818"/><rect x="118" y="58" width="2" height="2" fill="#ff9020"/><rect x="122" y="56" width="2" height="2" fill="#ff7a10"/><rect x="90" y="94" width="2" height="2" fill="#e86010"/><rect x="136" y="56" width="2" height="2" fill="#ff9020"/><rect x="132" y="46" width="2" height="2" fill="#ffb030"/><rect x="128" y="46" width="2" height="2" fill="#d05010"/><rect x="164" y="58" width="2" height="2" fill="#ffb030"/><rect x="106" y="78" width="2" height="2" fill="#ffb030"/><rect x="86" y="92" width="2" height="2" fill="#ff9020"/><rect x="134" y="50" width="2" height="2" fill="#e86010"/><rect x="108" y="70" width="2" height="2" fill="#ffb030"/><rect x="98" y="70" width="2" height="2" fill="#ff9020"/><rect x="104" y="60" width="2" height="2" fill="#e86010"/><rect x="168" y="60" width="2" height="2" fill="#ff7a10"/><rect x="114" y="48" width="2" height="2" fill="#ff9020"/><rect x="102" y="74" width="2" height="2" fill="#ff7a10"/><rect x="118" y="70" width="2" height="2" fill="#e86010"/>
<rect x="136" y="97" width="53" height="48" fill="#78e0a8"/>
<rect x="158" y="123" width="2" height="2" fill="#a0f080"/><rect x="158" y="143" width="2" height="2" fill="#c0d870"/><rect x="170" y="127" width="2" height="2" fill="#70d0f0"/><rect x="176" y="111" width="2" height="2" fill="#a0f080"/><rect x="156" y="141" width="2" height="2" fill="#70d0f0"/><rect x="168" y="143" width="2" height="2" fill="#70d0f0"/><rect x="140" y="101" width="2" height="2" fill="#60e8a0"/><rect x="180" y="115" width="2" height="2" fill="#60e8a0"/><rect x="164" y="129" width="2" height="2" fill="#c0d870"/><rect x="166" y="99" width="2" height="2" fill="#70d0f0"/><rect x="174" y="123" width="2" height="2" fill="#50f0d0"/><rect x="138" y="119" width="2" height="2" fill="#a0f080"/><rect x="160" y="129" width="2" height="2" fill="#c0d870"/><rect x="186" y="141" width="2" height="2" fill="#50f0d0"/><rect x="152" y="141" width="2" height="2" fill="#c0d870"/><rect x="152" y="119" width="2" height="2" fill="#c0d870"/><rect x="178" y="117" width="2" height="2" fill="#70d0f0"/><rect x="156" y="109" width="2" height="2" fill="#80e0c0"/><rect x="144" y="133" width="2" height="2" fill="#50f0d0"/><rect x="176" y="141" width="2" height="2" fill="#70d0f0"/><rect x="174" y="143" width="2" height="2" fill="#a0f080"/><rect x="186" y="107" width="2" height="2" fill="#70d0f0"/><rect x="148" y="121" width="2" height="2" fill="#80e0c0"/><rect x="178" y="115" width="2" height="2" fill="#70d0f0"/><rect x="176" y="107" width="2" height="2" fill="#60e8a0"/><rect x="166" y="133" width="2" height="2" fill="#c0d870"/><rect x="186" y="105" width="2" height="2" fill="#a0f080"/><rect x="180" y="113" width="2" height="2" fill="#50f0d0"/><rect x="152" y="137" width="2" height="2" fill="#c0d870"/><rect x="160" y="121" width="2" height="2" fill="#c0d870"/><rect x="144" y="99" width="2" height="2" fill="#70d0f0"/><rect x="180" y="103" width="2" height="2" fill="#60e8a0"/><rect x="148" y="115" width="2" height="2" fill="#a0f080"/><rect x="182" y="131" width="2" height="2" fill="#60e8a0"/><rect x="160" y="117" width="2" height="2" fill="#60e8a0"/><rect x="170" y="127" width="2" height="2" fill="#70d0f0"/><rect x="158" y="101" width="2" height="2" fill="#a0f080"/><rect x="164" y="137" width="2" height="2" fill="#a0f080"/><rect x="150" y="121" width="2" height="2" fill="#c0d870"/><rect x="174" y="123" width="2" height="2" fill="#70d0f0"/><rect x="172" y="121" width="2" height="2" fill="#c0d870"/><rect x="180" y="109" width="2" height="2" fill="#80e0c0"/><rect x="154" y="105" width="2" height="2" fill="#50f0d0"/><rect x="146" y="103" width="2" height="2" fill="#80e0c0"/><rect x="152" y="127" width="2" height="2" fill="#50f0d0"/><rect x="142" y="105" width="2" height="2" fill="#a0f080"/><rect x="136" y="113" width="2" height="2" fill="#80e0c0"/><rect x="172" y="105" width="2" height="2" fill="#a0f080"/><rect x="176" y="121" width="2" height="2" fill="#a0f080"/><rect x="156" y="111" width="2" height="2" fill="#60e8a0"/><rect x="166" y="109" width="2" height="2" fill="#a0f080"/><rect x="170" y="113" width="2" height="2" fill="#80e0c0"/><rect x="138" y="105" width="2" height="2" fill="#60e8a0"/><rect x="136" y="115" width="2" height="2" fill="#c0d870"/><rect x="140" y="97" width="2" height="2" fill="#70d0f0"/><rect x="156" y="127" width="2" height="2" fill="#70d0f0"/><rect x="186" y="109" width="2" height="2" fill="#50f0d0"/><rect x="166" y="99" width="2" height="2" fill="#50f0d0"/><rect x="158" y="131" width="2" height="2" fill="#50f0d0"/><rect x="170" y="99" width="2" height="2" fill="#70d0f0"/><rect x="170" y="135" width="2" height="2" fill="#c0d870"/><rect x="174" y="113" width="2" height="2" fill="#a0f080"/><rect x="148" y="115" width="2" height="2" fill="#70d0f0"/><rect x="186" y="125" width="2" height="2" fill="#80e0c0"/><rect x="182" y="99" width="2" height="2" fill="#70d0f0"/><rect x="136" y="107" width="2" height="2" fill="#80e0c0"/><rect x="142" y="139" width="2" height="2" fill="#60e8a0"/><rect x="152" y="119" width="2" height="2" fill="#60e8a0"/><rect x="184" y="131" width="2" height="2" fill="#a0f080"/><rect x="140" y="129" width="2" height="2" fill="#50f0d0"/><rect x="136" y="109" width="2" height="2" fill="#60e8a0"/><rect x="158" y="97" width="2" height="2" fill="#80e0c0"/><rect x="152" y="111" width="2" height="2" fill="#c0d870"/><rect x="166" y="121" width="2" height="2" fill="#a0f080"/><rect x="186" y="131" width="2" height="2" fill="#c0d870"/><rect x="184" y="103" width="2" height="2" fill="#50f0d0"/><rect x="160" y="141" width="2" height="2" fill="#50f0d0"/><rect x="152" y="135" width="2" height="2" fill="#60e8a0"/><rect x="136" y="133" width="2" height="2" fill="#70d0f0"/><rect x="150" y="117" width="2" height="2" fill="#50f0d0"/><rect x="182" y="119" width="2" height="2" fill="#80e0c0"/><rect x="178" y="113" width="2" height="2" fill="#a0f080"/><rect x="176" y="137" width="2" height="2" fill="#50f0d0"/><rect x="158" y="115" width="2" height="2" fill="#a0f080"/><rect x="140" y="137" width="2" height="2" fill="#a0f080"/><rect x="174" y="103" width="2" height="2" fill="#a0f080"/><rect x="156" y="109" width="2" height="2" fill="#c0d870"/><rect x="146" y="109" width="2" height="2" fill="#60e8a0"/><rect x="182" y="105" width="2" height="2" fill="#80e0c0"/><rect x="154" y="139" width="2" height="2" fill="#70d0f0"/>
<rect x="177" y="78" width="12" height="17" fill="#58b8f0"/>
<rect x="226" y="142" width="12" height="14" fill="#50a8f0"/>
<path d="M121 273 L146 273 L146 298 L140 298 L121 285Z" fill="#0a3cf8"/>
<path d="M167 276 L185 282 L205 307 L167 302Z" fill="#0a3cf8"/>
<rect x="31" y="279" width="93" height="3" fill="#fff"/>
<text x="59" y="272" style="font-family:'Liberation Sans';font-weight:bold;font-size:14px" fill="#fff">7 µm</text>
</svg><div class="a" style="left:607px;top:29px;width:2px;height:451px;background:#a8c0a0;"></div><div class="a" style="left:609px;top:29px;width:1px;height:451px;background:#fff;"></div><svg class="a" style="left:0;top:0" width="620" height="340"><path d="M611 176.5 L615 180.0 L611 183.5Z M611 191.4 L615 194.9 L611 198.4Z M611 206.3 L615 209.8 L611 213.3Z M611 221.2 L615 224.7 L611 228.2Z M611 236.1 L615 239.6 L611 243.1Z M611 251.0 L615 254.5 L611 258.0Z M611 265.9 L615 269.4 L611 272.9Z M611 280.8 L615 284.3 L611 287.8Z M611 295.7 L615 299.2 L611 302.7Z M611 310.6 L615 314.1 L611 317.6Z M611 325.5 L615 329.0 L611 332.5Z " fill="#000"/></svg><svg class="a" style="left:619px;top:8px" width="14" height="14"><circle cx="6.5" cy="6.5" r="6" fill="#fff" stroke="#7a7a7a" stroke-width="1"/></svg><div class="t" style="left:637px;top:8px;font-size:11px;color:#000;">Gray</div><svg class="a" style="left:667px;top:8px" width="14" height="14"><circle cx="6.5" cy="6.5" r="6" fill="#fff" stroke="#7a7a7a" stroke-width="1"/></svg><div class="t" style="left:685px;top:8px;font-size:11px;color:#000;">Rainbow</div><svg class="a" style="left:733px;top:8px" width="14" height="14"><circle cx="6.5" cy="6.5" r="6" fill="#21a03c" stroke="#7a6e78" stroke-width="1"/><circle cx="6.5" cy="6.5" r="2.6" fill="#000"/></svg><div class="t" style="left:751px;top:8px;font-size:11px;color:#000;">RGB</div><div class="a" style="left:616px;top:28px;width:1px;height:452px;background:#a8c0a0;"></div><div class="a" style="left:617px;top:28px;width:1px;height:452px;background:#fff;"></div><div class="a" style="left:618px;top:28px;width:210px;height:1px;background:#8a8a8a;"></div><div class="a" style="left:618px;top:29px;width:209px;height:1px;background:#fff;"></div><div class="a" style="left:618px;top:28px;width:1px;height:453px;background:#8a8a8a;"></div><div class="a" style="left:619px;top:29px;width:1px;height:450px;background:#fff;"></div><div class="a" style="left:826px;top:29px;width:1px;height:451px;background:#fff;"></div><div class="a" style="left:827px;top:28px;width:1px;height:453px;background:#7a7a7a;"></div><div class="a" style="left:618px;top:479px;width:210px;height:1px;background:#fff;"></div><div class="a" style="left:618px;top:480px;width:210px;height:1px;background:#7a7a7a;"></div><div class="a" style="left:620px;top:31px;width:143px;height:21px;background:#fff;border:1px solid #7a7a7a;box-sizing:border-box;"></div><div class="t" style="left:625px;top:35px;font-size:11px;color:#000;">A[0][a.u.]</div><div class="a" style="left:744px;top:33px;width:17px;height:17px;background:#d9e1d8;border:1px solid #7a7a7a;box-sizing:border-box;box-shadow:inset 1px 1px 0 #fff;"></div><svg class="a" style="left:744px;top:33px" width="17" height="17"><path d="M4.5 7.5 L12.5 7.5 L8.5 11.5Z" fill="#000"/></svg><div class="a" style="left:767px;top:34px;width:14px;height:14px;box-sizing:border-box;border:1px solid #6e6e6e;background:#21a03c"></div><svg class="a" style="left:767px;top:34px" width="14" height="14" viewBox="0 0 14 14"><path d="M3.5 6.5 L6 9.5 L10.5 3.8" fill="none" stroke="#000" stroke-width="2.2"/></svg><div class="t" style="left:785px;top:36px;font-size:11px;color:#000;">Active</div><svg class="a" style="left:621px;top:58px" width="202" height="24"><defs><linearGradient id="g0" x1="0" x2="1"><stop offset="0" stop-color="#000"/><stop offset="1" stop-color="#ff0000"/></linearGradient></defs>
<rect width="202" height="24" fill="#000"/><rect x="35" y="1" width="133" height="22" fill="url(#g0)"/><rect x="169" y="1" width="32" height="22" fill="#ff0000"/>
<path d="M35 24 L35 1 L39 4 L49 8 L59 10 L69 11 L79 12 L89 12 L99 11 L109 9 L119 8 L139 8 L159 8 L168 9 L168 24Z" fill="#fff"/><path d="M169 24 L169 11 L179 11 L189 13 L197 14 L200 22 L200 24Z" fill="#fff"/><path d="M31 24 L33 18 L34 24Z" fill="#fff"/>
<rect x="34" y="0" width="1" height="24" fill="#000"/><rect x="168" y="0" width="1" height="24" fill="#000"/>
<rect x="0" y="0" width="202" height="1" fill="#6a6a6a"/><rect x="0" y="0" width="1" height="24" fill="#6a6a6a"/>
<rect x="0" y="23" width="202" height="1" fill="#000"/><rect x="201" y="0" width="1" height="24" fill="#000"/></svg><div class="a" style="left:621px;top:87px;width:14px;height:14px;box-sizing:border-box;border:1px solid #6e6e6e;background:#21a03c"></div><svg class="a" style="left:621px;top:87px" width="14" height="14" viewBox="0 0 14 14"><path d="M3.5 6.5 L6 9.5 L10.5 3.8" fill="none" stroke="#000" stroke-width="2.2"/></svg><div class="t" style="left:638px;top:89px;font-size:11px;color:#000;">Min</div><div class="a" style="left:656px;top:84px;width:44px;height:22px;background:#fff;border:1px solid #707070;box-sizing:border-box;"></div><div class="t" style="right:523px;top:89px;text-align:right;font-size:11px;color:#000;">0.0000</div><div class="a" style="left:700px;top:84px;width:17px;height:11px;background:#dfe7de;border:1px solid #7a7a7a;box-sizing:border-box;"></div><div class="a" style="left:700px;top:95px;width:17px;height:11px;background:#dfe7de;border:1px solid #7a7a7a;box-sizing:border-box;"></div><svg class="a" style="left:700px;top:84px" width="17" height="22"><path d="M4.5 8.5 L12.5 8.5 L8.5 2.5Z M4.5 14 L12.5 14 L8.5 19.5Z" fill="#000"/></svg><div class="a" style="left:723px;top:87px;width:14px;height:14px;box-sizing:border-box;border:1px solid #6e6e6e;background:#21a03c"></div><svg class="a" style="left:723px;top:87px" width="14" height="14" viewBox="0 0 14 14"><path d="M3.5 6.5 L6 9.5 L10.5 3.8" fill="none" stroke="#000" stroke-width="2.2"/></svg><div class="t" style="left:741px;top:89px;font-size:11px;color:#000;">Max</div><div class="a" style="left:764px;top:84px;width:44px;height:22px;box-sizing:border-box;border:1px solid #707070;background:#fff"></div><div class="t" style="left:766px;top:89px;width:39px;overflow:hidden;font-size:11px;text-align:left">400.000</div><div class="a" style="left:807px;top:84px;width:17px;height:11px;background:#dfe7de;border:1px solid #7a7a7a;box-sizing:border-box;"></div><div class="a" style="left:807px;top:95px;width:17px;height:11px;background:#dfe7de;border:1px solid #7a7a7a;box-sizing:border-box;"></div><svg class="a" style="left:807px;top:84px" width="17" height="22"><path d="M4.5 8.5 L12.5 8.5 L8.5 2.5Z M4.5 14 L12.5 14 L8.5 19.5Z" fill="#000"/></svg><div class="a" style="left:620px;top:109px;width:206px;height:1px;background:#c0d0bc;"></div><div class="a" style="left:620px;top:110px;width:206px;height:1px;background:#fff;"></div><div class="a" style="left:620px;top:111px;width:143px;height:21px;background:#fff;border:1px solid #7a7a7a;box-sizing:border-box;"></div><div class="t" style="left:625px;top:115px;font-size:11px;color:#000;">A[1][a.u.]</div><div class="a" style="left:744px;top:113px;width:17px;height:17px;background:#d9e1d8;border:1px solid #7a7a7a;box-sizing:border-box;box-shadow:inset 1px 1px 0 #fff;"></div><svg class="a" style="left:744px;top:113px" width="17" height="17"><path d="M4.5 7.5 L12.5 7.5 L8.5 11.5Z" fill="#000"/></svg><div class="a" style="left:767px;top:114px;width:14px;height:14px;box-sizing:border-box;border:1px solid #6e6e6e;background:#21a03c"></div><svg class="a" style="left:767px;top:114px" width="14" height="14" viewBox="0 0 14 14"><path d="M3.5 6.5 L6 9.5 L10.5 3.8" fill="none" stroke="#000" stroke-width="2.2"/></svg><div class="t" style="left:785px;top:116px;font-size:11px;color:#000;">Active</div><svg class="a" style="left:621px;top:138px" width="202" height="24"><defs><linearGradient id="g1" x1="0" x2="1"><stop offset="0" stop-color="#000"/><stop offset="1" stop-color="#00ff00"/></linearGradient></defs>
<rect width="202" height="24" fill="#000"/><rect x="35" y="1" width="133" height="22" fill="url(#g1)"/><rect x="169" y="1" width="32" height="22" fill="#00ff00"/>
<path d="M35 24 L35 1 L39 4 L47 8 L59 9 L79 10 L99 10 L119 9 L139 9 L159 8 L168 8 L168 24Z" fill="#fff"/><path d="M169 24 L169 10 L179 11 L189 12 L197 14 L200 22 L200 24Z" fill="#fff"/><path d="M28 24 L33 14 L34 24Z" fill="#fff"/>
<rect x="34" y="0" width="1" height="24" fill="#000"/><rect x="168" y="0" width="1" height="24" fill="#000"/>
<rect x="0" y="0" width="202" height="1" fill="#6a6a6a"/><rect x="0" y="0" width="1" height="24" fill="#6a6a6a"/>
<rect x="0" y="23" width="202" height="1" fill="#000"/><rect x="201" y="0" width="1" height="24" fill="#000"/></svg><div class="a" style="left:621px;top:167px;width:14px;height:14px;box-sizing:border-box;border:1px solid #6e6e6e;background:#21a03c"></div><svg class="a" style="left:621px;top:167px" width="14" height="14" viewBox="0 0 14 14"><path d="M3.5 6.5 L6 9.5 L10.5 3.8" fill="none" stroke="#000" stroke-width="2.2"/></svg><div class="t" style="left:638px;top:169px;font-size:11px;color:#000;">Min</div><div class="a" style="left:656px;top:164px;width:44px;height:22px;background:#fff;border:1px solid #707070;box-sizing:border-box;"></div><div class="t" style="right:523px;top:169px;text-align:right;font-size:11px;color:#000;">0.0000</div><div class="a" style="left:700px;top:164px;width:17px;height:11px;background:#dfe7de;border:1px solid #7a7a7a;box-sizing:border-box;"></div><div class="a" style="left:700px;top:175px;width:17px;height:11px;background:#dfe7de;border:1px solid #7a7a7a;box-sizing:border-box;"></div><svg class="a" style="left:700px;top:164px" width="17" height="22"><path d="M4.5 8.5 L12.5 8.5 L8.5 2.5Z M4.5 14 L12.5 14 L8.5 19.5Z" fill="#000"/></svg><div class="a" style="left:723px;top:167px;width:14px;height:14px;box-sizing:border-box;border:1px solid #6e6e6e;background:#21a03c"></div><svg class="a" style="left:723px;top:167px" width="14" height="14" viewBox="0 0 14 14"><path d="M3.5 6.5 L6 9.5 L10.5 3.8" fill="none" stroke="#000" stroke-width="2.2"/></svg><div class="t" style="left:741px;top:169px;font-size:11px;color:#000;">Max</div><div class="a" style="left:764px;top:164px;width:44px;height:22px;box-sizing:border-box;border:1px solid #707070;background:#fff"></div><div class="t" style="left:766px;top:169px;width:39px;overflow:hidden;font-size:11px;text-align:left">100.000</div><div class="a" style="left:807px;top:164px;width:17px;height:11px;background:#dfe7de;border:1px solid #7a7a7a;box-sizing:border-box;"></div><div class="a" style="left:807px;top:175px;width:17px;height:11px;background:#dfe7de;border:1px solid #7a7a7a;box-sizing:border-box;"></div><svg class="a" style="left:807px;top:164px" width="17" height="22"><path d="M4.5 8.5 L12.5 8.5 L8.5 2.5Z M4.5 14 L12.5 14 L8.5 19.5Z" fill="#000"/></svg><div class="a" style="left:620px;top:189px;width:206px;height:1px;background:#c0d0bc;"></div><div class="a" style="left:620px;top:190px;width:206px;height:1px;background:#fff;"></div><div class="a" style="left:620px;top:191px;width:143px;height:21px;background:#fff;border:1px solid #7a7a7a;box-sizing:border-box;"></div><div class="t" style="left:625px;top:195px;font-size:11px;color:#000;">A[2][a.u.]</div><div class="a" style="left:744px;top:193px;width:17px;height:17px;background:#d9e1d8;border:1px solid #7a7a7a;box-sizing:border-box;box-shadow:inset 1px 1px 0 #fff;"></div><svg class="a" style="left:744px;top:193px" width="17" height="17"><path d="M4.5 7.5 L12.5 7.5 L8.5 11.5Z" fill="#000"/></svg><div class="a" style="left:767px;top:194px;width:14px;height:14px;box-sizing:border-box;border:1px solid #6e6e6e;background:#21a03c"></div><svg class="a" style="left:767px;top:194px" width="14" height="14" viewBox="0 0 14 14"><path d="M3.5 6.5 L6 9.5 L10.5 3.8" fill="none" stroke="#000" stroke-width="2.2"/></svg><div class="t" style="left:785px;top:196px;font-size:11px;color:#000;">Active</div><svg class="a" style="left:621px;top:218px" width="202" height="24"><defs><linearGradient id="g2" x1="0" x2="1"><stop offset="0" stop-color="#000"/><stop offset="1" stop-color="#0000ff"/></linearGradient></defs>
<rect width="202" height="24" fill="#000"/><rect x="35" y="1" width="133" height="22" fill="url(#g2)"/><rect x="169" y="1" width="32" height="22" fill="#0000ff"/>
<path d="M35 24 L35 1 L41 3 L59 6 L79 7 L99 7 L119 6 L139 6 L159 7 L168 8 L168 24Z" fill="#fff"/><path d="M169 24 L169 10 L179 11 L189 11 L197 12 L200 22 L200 24Z" fill="#fff"/><path d="M2 24 L10 21 L20 20 L30 16 L34 10 L34 24Z" fill="#fff"/>
<rect x="34" y="0" width="1" height="24" fill="#000"/><rect x="168" y="0" width="1" height="24" fill="#000"/>
<rect x="0" y="0" width="202" height="1" fill="#6a6a6a"/><rect x="0" y="0" width="1" height="24" fill="#6a6a6a"/>
<rect x="0" y="23" width="202" height="1" fill="#000"/><rect x="201" y="0" width="1" height="24" fill="#000"/></svg><div class="a" style="left:621px;top:247px;width:14px;height:14px;box-sizing:border-box;border:1px solid #6e6e6e;background:#21a03c"></div><svg class="a" style="left:621px;top:247px" width="14" height="14" viewBox="0 0 14 14"><path d="M3.5 6.5 L6 9.5 L10.5 3.8" fill="none" stroke="#000" stroke-width="2.2"/></svg><div class="t" style="left:638px;top:249px;font-size:11px;color:#000;">Min</div><div class="a" style="left:656px;top:244px;width:44px;height:22px;background:#fff;border:1px solid #707070;box-sizing:border-box;"></div><div class="t" style="right:523px;top:249px;text-align:right;font-size:11px;color:#000;">0.0000</div><div class="a" style="left:700px;top:244px;width:17px;height:11px;background:#dfe7de;border:1px solid #7a7a7a;box-sizing:border-box;"></div><div class="a" style="left:700px;top:255px;width:17px;height:11px;background:#dfe7de;border:1px solid #7a7a7a;box-sizing:border-box;"></div><svg class="a" style="left:700px;top:244px" width="17" height="22"><path d="M4.5 8.5 L12.5 8.5 L8.5 2.5Z M4.5 14 L12.5 14 L8.5 19.5Z" fill="#000"/></svg><div class="a" style="left:723px;top:247px;width:14px;height:14px;box-sizing:border-box;border:1px solid #6e6e6e;background:#21a03c"></div><svg class="a" style="left:723px;top:247px" width="14" height="14" viewBox="0 0 14 14"><path d="M3.5 6.5 L6 9.5 L10.5 3.8" fill="none" stroke="#000" stroke-width="2.2"/></svg><div class="t" style="left:741px;top:249px;font-size:11px;color:#000;">Max</div><div class="a" style="left:764px;top:244px;width:44px;height:22px;box-sizing:border-box;border:1px solid #707070;background:#fff"></div><div class="t" style="left:766px;top:249px;width:39px;overflow:hidden;font-size:11px;text-align:right">8.0000</div><div class="a" style="left:807px;top:244px;width:17px;height:11px;background:#dfe7de;border:1px solid #7a7a7a;box-sizing:border-box;"></div><div class="a" style="left:807px;top:255px;width:17px;height:11px;background:#dfe7de;border:1px solid #7a7a7a;box-sizing:border-box;"></div><svg class="a" style="left:807px;top:244px" width="17" height="22"><path d="M4.5 8.5 L12.5 8.5 L8.5 2.5Z M4.5 14 L12.5 14 L8.5 19.5Z" fill="#000"/></svg><div class="a" style="left:620px;top:269px;width:206px;height:1px;background:#c0d0bc;"></div><div class="a" style="left:620px;top:270px;width:206px;height:1px;background:#fff;"></div><div class="a" style="left:828px;top:3px;width:383px;height:477px;background:#fff;"></div><svg class="a" style="left:0;top:0" width="1218" height="481"><line x1="901.5" y1="29" x2="901.5" y2="434" stroke="#dcdcdc"/><line x1="917.5" y1="29" x2="917.5" y2="434" stroke="#dcdcdc"/><line x1="932.5" y1="29" x2="932.5" y2="434" stroke="#dcdcdc"/><line x1="947.5" y1="29" x2="947.5" y2="434" stroke="#dcdcdc"/><line x1="978.5" y1="29" x2="978.5" y2="434" stroke="#dcdcdc"/><line x1="993.5" y1="29" x2="993.5" y2="434" stroke="#dcdcdc"/><line x1="1009.5" y1="29" x2="1009.5" y2="434" stroke="#dcdcdc"/><line x1="1024.5" y1="29" x2="1024.5" y2="434" stroke="#dcdcdc"/><line x1="1054.5" y1="29" x2="1054.5" y2="434" stroke="#dcdcdc"/><line x1="1070.5" y1="29" x2="1070.5" y2="434" stroke="#dcdcdc"/><line x1="1085.5" y1="29" x2="1085.5" y2="434" stroke="#dcdcdc"/><line x1="1100.5" y1="29" x2="1100.5" y2="434" stroke="#dcdcdc"/><line x1="1131.5" y1="29" x2="1131.5" y2="434" stroke="#dcdcdc"/><line x1="1146.5" y1="29" x2="1146.5" y2="434" stroke="#dcdcdc"/><line x1="1162.5" y1="29" x2="1162.5" y2="434" stroke="#dcdcdc"/><line x1="1177.5" y1="29" x2="1177.5" y2="434" stroke="#dcdcdc"/><line x1="877" y1="414.5" x2="1200" y2="414.5" stroke="#dcdcdc"/><line x1="877" y1="404.5" x2="1200" y2="404.5" stroke="#dcdcdc"/><line x1="877" y1="394.5" x2="1200" y2="394.5" stroke="#dcdcdc"/><line x1="877" y1="373.5" x2="1200" y2="373.5" stroke="#dcdcdc"/><line x1="877" y1="363.5" x2="1200" y2="363.5" stroke="#dcdcdc"/><line x1="877" y1="352.5" x2="1200" y2="352.5" stroke="#dcdcdc"/><line x1="877" y1="332.5" x2="1200" y2="332.5" stroke="#dcdcdc"/><line x1="877" y1="321.5" x2="1200" y2="321.5" stroke="#dcdcdc"/><line x1="877" y1="311.5" x2="1200" y2="311.5" stroke="#dcdcdc"/><line x1="877" y1="290.5" x2="1200" y2="290.5" stroke="#dcdcdc"/><line x1="877" y1="280.5" x2="1200" y2="280.5" stroke="#dcdcdc"/><line x1="877" y1="270.5" x2="1200" y2="270.5" stroke="#dcdcdc"/><line x1="877" y1="249.5" x2="1200" y2="249.5" stroke="#dcdcdc"/><line x1="877" y1="239.5" x2="1200" y2="239.5" stroke="#dcdcdc"/><line x1="877" y1="228.5" x2="1200" y2="228.5" stroke="#dcdcdc"/><line x1="877" y1="208.5" x2="1200" y2="208.5" stroke="#dcdcdc"/><line x1="877" y1="197.5" x2="1200" y2="197.5" stroke="#dcdcdc"/><line x1="877" y1="187.5" x2="1200" y2="187.5" stroke="#dcdcdc"/><line x1="877" y1="166.5" x2="1200" y2="166.5" stroke="#dcdcdc"/><line x1="877" y1="156.5" x2="1200" y2="156.5" stroke="#dcdcdc"/><line x1="877" y1="146.5" x2="1200" y2="146.5" stroke="#dcdcdc"/><line x1="877" y1="125.5" x2="1200" y2="125.5" stroke="#dcdcdc"/><line x1="877" y1="115.5" x2="1200" y2="115.5" stroke="#dcdcdc"/><line x1="877" y1="104.5" x2="1200" y2="104.5" stroke="#dcdcdc"/><line x1="877" y1="84.5" x2="1200" y2="84.5" stroke="#dcdcdc"/><line x1="877" y1="73.5" x2="1200" y2="73.5" stroke="#dcdcdc"/><line x1="877" y1="63.5" x2="1200" y2="63.5" stroke="#dcdcdc"/><line x1="877" y1="42.5" x2="1200" y2="42.5" stroke="#dcdcdc"/><line x1="877" y1="32.5" x2="1200" y2="32.5" stroke="#dcdcdc"/><line x1="886.5" y1="29" x2="886.5" y2="434" stroke="#909090"/><line x1="963.5" y1="29" x2="963.5" y2="434" stroke="#909090"/><line x1="1039.5" y1="29" x2="1039.5" y2="434" stroke="#909090"/><line x1="1116.5" y1="29" x2="1116.5" y2="434" stroke="#909090"/><line x1="1192.5" y1="29" x2="1192.5" y2="434" stroke="#909090"/><line x1="877" y1="425.5" x2="1200" y2="425.5" stroke="#909090"/><line x1="877" y1="383.5" x2="1200" y2="383.5" stroke="#909090"/><line x1="877" y1="342.5" x2="1200" y2="342.5" stroke="#909090"/><line x1="877" y1="301.5" x2="1200" y2="301.5" stroke="#909090"/><line x1="877" y1="259.5" x2="1200" y2="259.5" stroke="#909090"/><line x1="877" y1="218.5" x2="1200" y2="218.5" stroke="#909090"/><line x1="877" y1="177.5" x2="1200" y2="177.5" stroke="#909090"/><line x1="877" y1="135.5" x2="1200" y2="135.5" stroke="#909090"/><line x1="877" y1="94.5" x2="1200" y2="94.5" stroke="#909090"/><line x1="877" y1="53.5" x2="1200" y2="53.5" stroke="#909090"/><line x1="886.5" y1="434" x2="886.5" y2="429" stroke="#000"/><line x1="886.5" y1="29" x2="886.5" y2="34" stroke="#000"/><line x1="901.5" y1="434" x2="901.5" y2="431" stroke="#000"/><line x1="901.5" y1="29" x2="901.5" y2="32" stroke="#000"/><line x1="917.5" y1="434" x2="917.5" y2="431" stroke="#000"/><line x1="917.5" y1="29" x2="917.5" y2="32" stroke="#000"/><line x1="932.5" y1="434" x2="932.5" y2="431" stroke="#000"/><line x1="932.5" y1="29" x2="932.5" y2="32" stroke="#000"/><line x1="947.5" y1="434" x2="947.5" y2="431" stroke="#000"/><line x1="947.5" y1="29" x2="947.5" y2="32" stroke="#000"/><line x1="963.5" y1="434" x2="963.5" y2="429" stroke="#000"/><line x1="963.5" y1="29" x2="963.5" y2="34" stroke="#000"/><line x1="978.5" y1="434" x2="978.5" y2="431" stroke="#000"/><line x1="978.5" y1="29" x2="978.5" y2="32" stroke="#000"/><line x1="993.5" y1="434" x2="993.5" y2="431" stroke="#000"/><line x1="993.5" y1="29" x2="993.5" y2="32" stroke="#000"/><line x1="1009.5" y1="434" x2="1009.5" y2="431" stroke="#000"/><line x1="1009.5" y1="29" x2="1009.5" y2="32" stroke="#000"/><line x1="1024.5" y1="434" x2="1024.5" y2="431" stroke="#000"/><line x1="1024.5" y1="29" x2="1024.5" y2="32" stroke="#000"/><line x1="1039.5" y1="434" x2="1039.5" y2="429" stroke="#000"/><line x1="1039.5" y1="29" x2="1039.5" y2="34" stroke="#000"/><line x1="1054.5" y1="434" x2="1054.5" y2="431" stroke="#000"/><line x1="1054.5" y1="29" x2="1054.5" y2="32" stroke="#000"/><line x1="1070.5" y1="434" x2="1070.5" y2="431" stroke="#000"/><line x1="1070.5" y1="29" x2="1070.5" y2="32" stroke="#000"/><line x1="1085.5" y1="434" x2="1085.5" y2="431" stroke="#000"/><line x1="1085.5" y1="29" x2="1085.5" y2="32" stroke="#000"/><line x1="1100.5" y1="434" x2="1100.5" y2="431" stroke="#000"/><line x1="1100.5" y1="29" x2="1100.5" y2="32" stroke="#000"/><line x1="1116.5" y1="434" x2="1116.5" y2="429" stroke="#000"/><line x1="1116.5" y1="29" x2="1116.5" y2="34" stroke="#000"/><line x1="1131.5" y1="434" x2="1131.5" y2="431" stroke="#000"/><line x1="1131.5" y1="29" x2="1131.5" y2="32" stroke="#000"/><line x1="1146.5" y1="434" x2="1146.5" y2="431" stroke="#000"/><line x1="1146.5" y1="29" x2="1146.5" y2="32" stroke="#000"/><line x1="1162.5" y1="434" x2="1162.5" y2="431" stroke="#000"/><line x1="1162.5" y1="29" x2="1162.5" y2="32" stroke="#000"/><line x1="1177.5" y1="434" x2="1177.5" y2="431" stroke="#000"/><line x1="1177.5" y1="29" x2="1177.5" y2="32" stroke="#000"/><line x1="1192.5" y1="434" x2="1192.5" y2="429" stroke="#000"/><line x1="1192.5" y1="29" x2="1192.5" y2="34" stroke="#000"/><line x1="877" y1="425.5" x2="882" y2="425.5" stroke="#000"/><line x1="1200" y1="425.5" x2="1195" y2="425.5" stroke="#000"/><line x1="877" y1="414.5" x2="880" y2="414.5" stroke="#000"/><line x1="877" y1="404.5" x2="880" y2="404.5" stroke="#000"/><line x1="877" y1="394.5" x2="880" y2="394.5" stroke="#000"/><line x1="877" y1="383.5" x2="882" y2="383.5" stroke="#000"/><line x1="1200" y1="383.5" x2="1195" y2="383.5" stroke="#000"/><line x1="877" y1="373.5" x2="880" y2="373.5" stroke="#000"/><line x1="877" y1="363.5" x2="880" y2="363.5" stroke="#000"/><line x1="877" y1="352.5" x2="880" y2="352.5" stroke="#000"/><line x1="877" y1="342.5" x2="882" y2="342.5" stroke="#000"/><line x1="1200" y1="342.5" x2="1195" y2="342.5" stroke="#000"/><line x1="877" y1="332.5" x2="880" y2="332.5" stroke="#000"/><line x1="877" y1="321.5" x2="880" y2="321.5" stroke="#000"/><line x1="877" y1="311.5" x2="880" y2="311.5" stroke="#000"/><line x1="877" y1="301.5" x2="882" y2="301.5" stroke="#000"/><line x1="1200" y1="301.5" x2="1195" y2="301.5" stroke="#000"/><line x1="877" y1="290.5" x2="880" y2="290.5" stroke="#000"/><line x1="877" y1="280.5" x2="880" y2="280.5" stroke="#000"/><line x1="877" y1="270.5" x2="880" y2="270.5" stroke="#000"/><line x1="877" y1="259.5" x2="882" y2="259.5" stroke="#000"/><line x1="1200" y1="259.5" x2="1195" y2="259.5" stroke="#000"/><line x1="877" y1="249.5" x2="880" y2="249.5" stroke="#000"/><line x1="877" y1="239.5" x2="880" y2="239.5" stroke="#000"/><line x1="877" y1="228.5" x2="880" y2="228.5" stroke="#000"/><line x1="877" y1="218.5" x2="882" y2="218.5" stroke="#000"/><line x1="1200" y1="218.5" x2="1195" y2="218.5" stroke="#000"/><line x1="877" y1="208.5" x2="880" y2="208.5" stroke="#000"/><line x1="877" y1="197.5" x2="880" y2="197.5" stroke="#000"/><line x1="877" y1="187.5" x2="880" y2="187.5" stroke="#000"/><line x1="877" y1="177.5" x2="882" y2="177.5" stroke="#000"/><line x1="1200" y1="177.5" x2="1195" y2="177.5" stroke="#000"/><line x1="877" y1="166.5" x2="880" y2="166.5" stroke="#000"/><line x1="877" y1="156.5" x2="880" y2="156.5" stroke="#000"/><line x1="877" y1="146.5" x2="880" y2="146.5" stroke="#000"/><line x1="877" y1="135.5" x2="882" y2="135.5" stroke="#000"/><line x1="1200" y1="135.5" x2="1195" y2="135.5" stroke="#000"/><line x1="877" y1="125.5" x2="880" y2="125.5" stroke="#000"/><line x1="877" y1="115.5" x2="880" y2="115.5" stroke="#000"/><line x1="877" y1="104.5" x2="880" y2="104.5" stroke="#000"/><line x1="877" y1="94.5" x2="882" y2="94.5" stroke="#000"/><line x1="1200" y1="94.5" x2="1195" y2="94.5" stroke="#000"/><line x1="877" y1="84.5" x2="880" y2="84.5" stroke="#000"/><line x1="877" y1="73.5" x2="880" y2="73.5" stroke="#000"/><line x1="877" y1="63.5" x2="880" y2="63.5" stroke="#000"/><line x1="877" y1="53.5" x2="882" y2="53.5" stroke="#000"/><line x1="1200" y1="53.5" x2="1195" y2="53.5" stroke="#000"/><line x1="877" y1="42.5" x2="880" y2="42.5" stroke="#000"/><line x1="877" y1="32.5" x2="880" y2="32.5" stroke="#000"/><path d="M935.6 425.0 L935.9 423.3 L936.4 421.0 L936.9 418.3 L937.5 415.2 L938.1 411.9 L938.6 408.5 L939.1 404.8 L939.6 400.8 L940.1 396.6 L940.7 392.3 L941.2 387.9 L941.7 383.7 L942.2 379.5 L942.7 375.1 L943.2 370.8 L943.7 366.6 L944.2 362.6 L944.7 358.9 L945.3 355.4 L945.8 351.9 L946.3 348.6 L946.8 345.8 L947.3 343.6 L947.8 342.4 L948.2 342.1 L948.6 342.4 L949.0 343.4 L949.4 345.2 L949.7 347.6 L950.1 350.7 L950.5 354.8 L950.9 360.1 L951.2 366.0 L951.6 372.2 L952.0 378.3 L952.4 383.7 L952.8 388.7 L953.2 393.7 L953.5 398.5 L953.9 403.0 L954.3 407.1 L954.7 410.5 L955.1 413.3 L955.5 415.5 L955.8 417.3 L956.2 418.7 L956.6 419.8 L957.0 420.9 L957.4 421.8 L957.7 422.4 L958.1 422.7 L958.5 422.9 L958.9 423.0 L959.3 422.9 L959.7 422.7 L960.0 422.2 L960.4 421.6 L960.8 420.9 L961.2 420.3 L961.6 419.8 L962.0 419.5 L962.3 419.2 L962.7 419.0 L963.1 418.8 L963.5 418.8 L963.9 418.8 L964.2 419.1 L964.6 419.6 L965.0 420.2 L965.4 420.7 L965.8 421.0 L966.2 420.9 L966.5 420.4 L966.9 419.6 L967.3 418.5 L967.7 417.4 L968.1 416.0 L968.5 414.7 L968.8 413.1 L969.2 411.3 L969.6 409.4 L969.9 407.5 L970.3 405.8 L970.8 404.4 L971.2 403.3 L971.7 402.4 L972.2 401.6 L972.8 401.1 L973.3 400.6 L973.8 400.2 L974.3 400.0 L974.9 399.8 L975.4 399.8 L975.9 399.9 L976.4 400.1 L976.9 400.2 L977.3 400.7 L977.7 401.5 L978.1 402.4 L978.4 403.0 L978.8 403.1 L979.2 402.3 L979.5 400.5 L979.9 397.9 L980.3 394.8 L980.7 391.3 L981.1 387.5 L981.5 383.7 L981.9 379.5 L982.3 374.6 L982.7 369.5 L983.0 364.6 L983.4 360.2 L983.8 356.9 L984.1 354.4 L984.3 352.5 L984.6 351.2 L984.8 350.4 L985.0 350.3 L985.3 350.7 L985.5 351.9 L985.8 353.9 L986.0 356.6 L986.2 359.5 L986.5 362.5 L986.8 365.1 L987.2 367.5 L987.5 369.9 L987.9 372.2 L988.3 374.6 L988.7 377.0 L989.1 379.6 L989.5 382.1 L989.9 384.7 L990.3 387.3 L990.6 390.0 L991.0 393.0 L991.4 396.1 L991.8 399.7 L992.2 403.9 L992.6 408.2 L992.9 412.3 L993.3 416.0 L993.7 418.8 L994.0 420.7 L994.4 422.0 L994.7 422.8 L995.0 423.3 L995.4 423.6 L996.0 424.0 L996.7 424.2 L997.5 424.3 L998.3 424.2 L999.3 424.0 L1000.3 423.9 L1001.4 423.8 L1002.5 423.7 L1003.7 423.6 L1005.0 423.6 L1006.4 423.5 L1007.7 423.4 L1009.0 423.3 L1010.3 423.3 L1011.7 423.1 L1013.1 423.0 L1014.4 423.0 L1015.6 422.9 L1016.6 422.9 L1017.5 423.1 L1018.1 423.3 L1018.6 423.6 L1019.1 423.8 L1019.7 424.0 L1020.5 424.2 L1021.5 424.2 L1022.6 424.1 L1023.8 424.0 L1025.2 423.9 L1026.6 423.8 L1028.1 423.8 L1029.8 423.8 L1031.5 424.0 L1033.4 424.2 L1035.4 424.3 L1037.4 424.5 L1039.6 424.6 L1042.0 424.6 L1044.6 424.6 L1047.2 424.6 L1049.9 424.5 L1052.5 424.5 L1054.9 424.4 L1057.1 424.3 L1059.2 424.1 L1061.1 423.9 L1063.0 423.7 L1064.7 423.5 L1066.4 423.3 L1067.9 423.2 L1069.2 423.1 L1070.4 422.9 L1071.6 422.8 L1072.8 422.7 L1074.0 422.5 L1075.3 422.3 L1076.7 422.1 L1078.0 421.9 L1079.3 421.7 L1080.5 421.5 L1081.7 421.3 L1082.7 421.1 L1083.6 420.9 L1084.4 420.7 L1085.3 420.5 L1086.1 420.5 L1087.0 420.5 L1088.0 420.6 L1089.0 420.7 L1090.0 421.0 L1091.1 421.3 L1092.1 421.6 L1093.2 421.9 L1094.2 422.2 L1095.3 422.6 L1096.4 423.0 L1097.5 423.3 L1098.4 423.7 L1099.3 424.0 L1100.0 424.2 L1100.6 424.4 L1101.2 424.6 L1101.7 424.8 L1102.0 424.9 L1102.3 425.0" fill="none" stroke="#000" stroke-width="2"/><path d="M886.6 425.0 L921.3 425.0 L921.3 297.0 L922.3 297.0 L922.3 168.9 L923.2 168.9 L923.2 40.9 L924.5 40.9 L924.5 168.9 L925.4 168.9 L925.4 297.0 L926.4 297.0 L926.4 425.0 L1194.1 425.0" fill="none" stroke="#703c3c" stroke-width="2"/><path d="M886.6 425.0 L994.8 425.0 L994.8 332.1 L995.8 332.1 L995.8 239.2 L996.7 239.2 L996.7 142.1 L997.9 142.1 L997.9 239.2 L998.8 239.2 L998.8 332.1 L999.8 332.1 L999.8 425.0 L1194.1 425.0" fill="none" stroke="#3c703c" stroke-width="2"/><path d="M886.6 425.0 L1183.3 425.0 L1183.3 406.4 L1184.3 406.4 L1184.3 387.8 L1185.3 387.8 L1185.3 371.3 L1186.6 371.3 L1186.6 387.8 L1187.6 387.8 L1187.6 406.4 L1188.6 406.4 L1188.6 425.0 L1194.1 425.0" fill="none" stroke="#3c3c78" stroke-width="2"/><rect x="877.5" y="29.5" width="323" height="405" fill="none" stroke="#000" stroke-width="1.2"/><rect x="1119.5" y="34.5" width="76" height="61" fill="#ffffcc" stroke="#000"/><rect x="1121" y="39.5" width="13" height="6" fill="#000"/><text x="1139" y="46.5" textLength="54.4" lengthAdjust="spacingAndGlyphs" style="font-family:Liberation Mono;font-size:11px">tau_Av_Int</text><rect x="1121" y="54.5" width="13" height="6" fill="#7a4848"/><text x="1139" y="61.5" textLength="21.8" lengthAdjust="spacingAndGlyphs" style="font-family:Liberation Mono;font-size:11px">I[0]</text><rect x="1121" y="69.5" width="13" height="6" fill="#4a7a4a"/><text x="1139" y="76.5" textLength="21.8" lengthAdjust="spacingAndGlyphs" style="font-family:Liberation Mono;font-size:11px">I[1]</text><rect x="1121" y="84.5" width="13" height="6" fill="#4a4a80"/><text x="1139" y="91.5" textLength="21.8" lengthAdjust="spacingAndGlyphs" style="font-family:Liberation Mono;font-size:11px">I[2]</text></svg><div class="t" style="left:818px;width:400px;top:12px;text-align:center;font-size:13px;color:#000;font-weight:bold;">Lifetime Histogram</div><div class="t" style="right:344px;top:418.5px;text-align:right;font-size:12.5px;color:#000;">0.0</div><div class="t" style="right:344px;top:377.5px;text-align:right;font-size:12.5px;color:#000;">0.2</div><div class="t" style="right:344px;top:335.5px;text-align:right;font-size:12.5px;color:#000;">0.4</div><div class="t" style="right:344px;top:294.5px;text-align:right;font-size:12.5px;color:#000;">0.6</div><div class="t" style="right:344px;top:253.5px;text-align:right;font-size:12.5px;color:#000;">0.8</div><div class="t" style="right:344px;top:211.5px;text-align:right;font-size:12.5px;color:#000;">1.0</div><div class="t" style="right:344px;top:170.5px;text-align:right;font-size:12.5px;color:#000;">1.2</div><div class="t" style="right:344px;top:129.5px;text-align:right;font-size:12.5px;color:#000;">1.4</div><div class="t" style="right:344px;top:88.5px;text-align:right;font-size:12.5px;color:#000;">1.6</div><div class="t" style="right:344px;top:46.5px;text-align:right;font-size:12.5px;color:#000;">1.8</div><div class="t" style="left:687px;width:400px;top:438px;text-align:center;font-size:12px;color:#000;">0</div><div class="t" style="left:763px;width:400px;top:438px;text-align:center;font-size:12px;color:#000;">1</div><div class="t" style="left:840px;width:400px;top:438px;text-align:center;font-size:12px;color:#000;">2</div><div class="t" style="left:916px;width:400px;top:438px;text-align:center;font-size:12px;color:#000;">3</div><div class="t" style="left:993px;width:400px;top:438px;text-align:center;font-size:12px;color:#000;">4</div><div class="t" style="left:839px;width:400px;top:455px;text-align:center;font-size:12px;color:#000;">Lifetime [ns]</div><div class="t" style="left:745px;top:224px;width:200px;text-align:center;font-size:12px;transform:rotate(-90deg)">Occur. [10 <span style="font-size:9px;position:relative;top:-4px">6</span> Events]</div><div class="a" style="left:1215px;top:357px;width:10px;height:22px;box-sizing:border-box;border:1px solid #8a8a8a;border-radius:3px;background:#e3ebe2"></div><div class="a" style="left:1215px;top:384px;width:10px;height:22px;box-sizing:border-box;border:1px solid #8a8a8a;border-radius:3px;background:#e3ebe2"></div><div class="a" style="left:1215px;top:411px;width:10px;height:22px;box-sizing:border-box;border:1px solid #8a8a8a;border-radius:3px;background:#e3ebe2"></div><div class="a" style="left:1215px;top:438px;width:10px;height:22px;box-sizing:border-box;border:1px solid #8a8a8a;border-radius:3px;background:#e3ebe2"></div><div class="a" style="left:296px;top:480px;width:922px;height:55px;background:#e0e9df;"></div><div class="a" style="left:296px;top:480px;width:320px;height:1px;background:#a8c0a0;"></div><div class="t" style="left:303px;top:486px;font-size:11px;color:#000;letter-spacing:-0.08px">Number of Photons: 33228476; Selected: 33225104 (100%)</div><div class="t" style="left:303px;top:513px;font-size:11px;color:#000;">Lower Boundary:</div><div class="a" style="left:392px;top:509px;width:103px;height:22px;background:#fff;border:1px solid #707070;box-sizing:border-box;"></div><div class="t" style="right:730px;top:514px;text-align:right;font-size:11px;color:#000;">85.04 ns</div><div class="a" style="left:495px;top:509px;width:17px;height:11px;background:#dfe7de;border:1px solid #7a7a7a;box-sizing:border-box;"></div><div class="a" style="left:495px;top:520px;width:17px;height:11px;background:#dfe7de;border:1px solid #7a7a7a;box-sizing:border-box;"></div><svg class="a" style="left:495px;top:509px" width="17" height="22"><path d="M4.5 8.5 L12.5 8.5 L8.5 2.5Z M4.5 14 L12.5 14 L8.5 19.5Z" fill="#000"/></svg><div class="t" style="left:525px;top:513px;font-size:11px;color:#000;">Upper Boundary:</div><div class="a" style="left:614px;top:509px;width:103px;height:22px;background:#fff;border:1px solid #707070;box-sizing:border-box;"></div><div class="t" style="right:508px;top:514px;text-align:right;font-size:11px;color:#000;">132.73 ns</div><div class="a" style="left:717px;top:509px;width:17px;height:11px;background:#dfe7de;border:1px solid #7a7a7a;box-sizing:border-box;"></div><div class="a" style="left:717px;top:520px;width:17px;height:11px;background:#dfe7de;border:1px solid #7a7a7a;box-sizing:border-box;"></div><svg class="a" style="left:717px;top:509px" width="17" height="22"><path d="M4.5 8.5 L12.5 8.5 L8.5 2.5Z M4.5 14 L12.5 14 L8.5 19.5Z" fill="#000"/></svg><div class="a" style="left:754px;top:509px;width:80px;height:22px;box-sizing:border-box;border:1px solid #6a6a6a;border-radius:3px;background:linear-gradient(#e4ebe3 0%,#e4ebe3 48%,#d3dcd2 52%,#d3dcd2 100%)"></div><div class="t" style="left:594px;width:400px;top:513px;text-align:center;font-size:11px;color:#000;">Reset Range</div><div class="a" style="left:296px;top:535px;width:921px;height:425px;background:#fff;"></div><div class="a" style="left:1217px;top:535px;width:1px;height:425px;background:#e0e9df;"></div><div class="a" style="left:0px;top:960px;width:1218px;height:1px;background:#6f6f6f;"></div><svg class="a" style="left:0;top:0" width="1218" height="961"><defs><clipPath id="fclip"><rect x="346" y="563" width="860" height="251"/></clipPath></defs><line x1="366.5" y1="563" x2="366.5" y2="914" stroke="#dedede"/><line x1="383.5" y1="563" x2="383.5" y2="914" stroke="#dedede"/><line x1="400.5" y1="563" x2="400.5" y2="914" stroke="#dedede"/><line x1="435.5" y1="563" x2="435.5" y2="914" stroke="#dedede"/><line x1="453.5" y1="563" x2="453.5" y2="914" stroke="#dedede"/><line x1="470.5" y1="563" x2="470.5" y2="914" stroke="#dedede"/><line x1="505.5" y1="563" x2="505.5" y2="914" stroke="#dedede"/><line x1="522.5" y1="563" x2="522.5" y2="914" stroke="#dedede"/><line x1="540.5" y1="563" x2="540.5" y2="914" stroke="#dedede"/><line x1="574.5" y1="563" x2="574.5" y2="914" stroke="#dedede"/><line x1="592.5" y1="563" x2="592.5" y2="914" stroke="#dedede"/><line x1="609.5" y1="563" x2="609.5" y2="914" stroke="#dedede"/><line x1="644.5" y1="563" x2="644.5" y2="914" stroke="#dedede"/><line x1="661.5" y1="563" x2="661.5" y2="914" stroke="#dedede"/><line x1="679.5" y1="563" x2="679.5" y2="914" stroke="#dedede"/><line x1="713.5" y1="563" x2="713.5" y2="914" stroke="#dedede"/><line x1="731.5" y1="563" x2="731.5" y2="914" stroke="#dedede"/><line x1="748.5" y1="563" x2="748.5" y2="914" stroke="#dedede"/><line x1="783.5" y1="563" x2="783.5" y2="914" stroke="#dedede"/><line x1="800.5" y1="563" x2="800.5" y2="914" stroke="#dedede"/><line x1="818.5" y1="563" x2="818.5" y2="914" stroke="#dedede"/><line x1="853.5" y1="563" x2="853.5" y2="914" stroke="#dedede"/><line x1="870.5" y1="563" x2="870.5" y2="914" stroke="#dedede"/><line x1="887.5" y1="563" x2="887.5" y2="914" stroke="#dedede"/><line x1="922.5" y1="563" x2="922.5" y2="914" stroke="#dedede"/><line x1="940.5" y1="563" x2="940.5" y2="914" stroke="#dedede"/><line x1="957.5" y1="563" x2="957.5" y2="914" stroke="#dedede"/><line x1="992.5" y1="563" x2="992.5" y2="914" stroke="#dedede"/><line x1="1009.5" y1="563" x2="1009.5" y2="914" stroke="#dedede"/><line x1="1026.5" y1="563" x2="1026.5" y2="914" stroke="#dedede"/><line x1="1061.5" y1="563" x2="1061.5" y2="914" stroke="#dedede"/><line x1="1079.5" y1="563" x2="1079.5" y2="914" stroke="#dedede"/><line x1="1096.5" y1="563" x2="1096.5" y2="914" stroke="#dedede"/><line x1="1131.5" y1="563" x2="1131.5" y2="914" stroke="#dedede"/><line x1="1148.5" y1="563" x2="1148.5" y2="914" stroke="#dedede"/><line x1="1166.5" y1="563" x2="1166.5" y2="914" stroke="#dedede"/><line x1="1200.5" y1="563" x2="1200.5" y2="914" stroke="#dedede"/><line x1="346" y1="812.5" x2="1206" y2="812.5" stroke="#dedede"/><line x1="346" y1="809.5" x2="1206" y2="809.5" stroke="#dedede"/><line x1="346" y1="807.5" x2="1206" y2="807.5" stroke="#dedede"/><line x1="346" y1="804.5" x2="1206" y2="804.5" stroke="#dedede"/><line x1="346" y1="802.5" x2="1206" y2="802.5" stroke="#dedede"/><line x1="346" y1="789.5" x2="1206" y2="789.5" stroke="#dedede"/><line x1="346" y1="782.5" x2="1206" y2="782.5" stroke="#dedede"/><line x1="346" y1="778.5" x2="1206" y2="778.5" stroke="#dedede"/><line x1="346" y1="774.5" x2="1206" y2="774.5" stroke="#dedede"/><line x1="346" y1="771.5" x2="1206" y2="771.5" stroke="#dedede"/><line x1="346" y1="768.5" x2="1206" y2="768.5" stroke="#dedede"/><line x1="346" y1="766.5" x2="1206" y2="766.5" stroke="#dedede"/><line x1="346" y1="764.5" x2="1206" y2="764.5" stroke="#dedede"/><line x1="346" y1="751.5" x2="1206" y2="751.5" stroke="#dedede"/><line x1="346" y1="744.5" x2="1206" y2="744.5" stroke="#dedede"/><line x1="346" y1="740.5" x2="1206" y2="740.5" stroke="#dedede"/><line x1="346" y1="736.5" x2="1206" y2="736.5" stroke="#dedede"/><line x1="346" y1="733.5" x2="1206" y2="733.5" stroke="#dedede"/><line x1="346" y1="730.5" x2="1206" y2="730.5" stroke="#dedede"/><line x1="346" y1="728.5" x2="1206" y2="728.5" stroke="#dedede"/><line x1="346" y1="726.5" x2="1206" y2="726.5" stroke="#dedede"/><line x1="346" y1="713.5" x2="1206" y2="713.5" stroke="#dedede"/><line x1="346" y1="706.5" x2="1206" y2="706.5" stroke="#dedede"/><line x1="346" y1="701.5" x2="1206" y2="701.5" stroke="#dedede"/><line x1="346" y1="698.5" x2="1206" y2="698.5" stroke="#dedede"/><line x1="346" y1="695.5" x2="1206" y2="695.5" stroke="#dedede"/><line x1="346" y1="692.5" x2="1206" y2="692.5" stroke="#dedede"/><line x1="346" y1="690.5" x2="1206" y2="690.5" stroke="#dedede"/><line x1="346" y1="688.5" x2="1206" y2="688.5" stroke="#dedede"/><line x1="346" y1="675.5" x2="1206" y2="675.5" stroke="#dedede"/><line x1="346" y1="668.5" x2="1206" y2="668.5" stroke="#dedede"/><line x1="346" y1="663.5" x2="1206" y2="663.5" stroke="#dedede"/><line x1="346" y1="660.5" x2="1206" y2="660.5" stroke="#dedede"/><line x1="346" y1="657.5" x2="1206" y2="657.5" stroke="#dedede"/><line x1="346" y1="654.5" x2="1206" y2="654.5" stroke="#dedede"/><line x1="346" y1="652.5" x2="1206" y2="652.5" stroke="#dedede"/><line x1="346" y1="650.5" x2="1206" y2="650.5" stroke="#dedede"/><line x1="346" y1="637.5" x2="1206" y2="637.5" stroke="#dedede"/><line x1="346" y1="630.5" x2="1206" y2="630.5" stroke="#dedede"/><line x1="346" y1="625.5" x2="1206" y2="625.5" stroke="#dedede"/><line x1="346" y1="622.5" x2="1206" y2="622.5" stroke="#dedede"/><line x1="346" y1="619.5" x2="1206" y2="619.5" stroke="#dedede"/><line x1="346" y1="616.5" x2="1206" y2="616.5" stroke="#dedede"/><line x1="346" y1="614.5" x2="1206" y2="614.5" stroke="#dedede"/><line x1="346" y1="612.5" x2="1206" y2="612.5" stroke="#dedede"/><line x1="346" y1="599.5" x2="1206" y2="599.5" stroke="#dedede"/><line x1="346" y1="592.5" x2="1206" y2="592.5" stroke="#dedede"/><line x1="346" y1="587.5" x2="1206" y2="587.5" stroke="#dedede"/><line x1="346" y1="583.5" x2="1206" y2="583.5" stroke="#dedede"/><line x1="346" y1="580.5" x2="1206" y2="580.5" stroke="#dedede"/><line x1="346" y1="578.5" x2="1206" y2="578.5" stroke="#dedede"/><line x1="346" y1="576.5" x2="1206" y2="576.5" stroke="#dedede"/><line x1="346" y1="574.5" x2="1206" y2="574.5" stroke="#dedede"/><line x1="346" y1="899.5" x2="1206" y2="899.5" stroke="#dedede"/><line x1="346" y1="889.5" x2="1206" y2="889.5" stroke="#dedede"/><line x1="346" y1="880.5" x2="1206" y2="880.5" stroke="#dedede"/><line x1="346" y1="861.5" x2="1206" y2="861.5" stroke="#dedede"/><line x1="346" y1="852.5" x2="1206" y2="852.5" stroke="#dedede"/><line x1="346" y1="842.5" x2="1206" y2="842.5" stroke="#dedede"/><line x1="346" y1="824.5" x2="1206" y2="824.5" stroke="#dedede"/><line x1="348.5" y1="563" x2="348.5" y2="914" stroke="#8c8c8c"/><line x1="418.5" y1="563" x2="418.5" y2="914" stroke="#8c8c8c"/><line x1="487.5" y1="563" x2="487.5" y2="914" stroke="#8c8c8c"/><line x1="557.5" y1="563" x2="557.5" y2="914" stroke="#8c8c8c"/><line x1="626.5" y1="563" x2="626.5" y2="914" stroke="#8c8c8c"/><line x1="696.5" y1="563" x2="696.5" y2="914" stroke="#8c8c8c"/><line x1="766.5" y1="563" x2="766.5" y2="914" stroke="#8c8c8c"/><line x1="835.5" y1="563" x2="835.5" y2="914" stroke="#8c8c8c"/><line x1="905.5" y1="563" x2="905.5" y2="914" stroke="#8c8c8c"/><line x1="974.5" y1="563" x2="974.5" y2="914" stroke="#8c8c8c"/><line x1="1044.5" y1="563" x2="1044.5" y2="914" stroke="#8c8c8c"/><line x1="1113.5" y1="563" x2="1113.5" y2="914" stroke="#8c8c8c"/><line x1="1183.5" y1="563" x2="1183.5" y2="914" stroke="#8c8c8c"/><line x1="346" y1="801.5" x2="1206" y2="801.5" stroke="#8c8c8c"/><line x1="346" y1="763.5" x2="1206" y2="763.5" stroke="#8c8c8c"/><line x1="346" y1="724.5" x2="1206" y2="724.5" stroke="#8c8c8c"/><line x1="346" y1="686.5" x2="1206" y2="686.5" stroke="#8c8c8c"/><line x1="346" y1="648.5" x2="1206" y2="648.5" stroke="#8c8c8c"/><line x1="346" y1="610.5" x2="1206" y2="610.5" stroke="#8c8c8c"/><line x1="346" y1="572.5" x2="1206" y2="572.5" stroke="#8c8c8c"/><line x1="346" y1="908.5" x2="1206" y2="908.5" stroke="#8c8c8c"/><line x1="346" y1="833.5" x2="1206" y2="833.5" stroke="#8c8c8c"/><g clip-path="url(#fclip)"><path d="M356.0 778.2 L357.1 778.2 L357.1 782.9 L358.1 782.9 L358.1 764.7 L359.1 764.7 L359.1 778.2 L360.1 778.2 L360.1 774.5 L361.1 774.5 L361.1 801.1 L362.1 801.1 L362.1 774.5 L363.1 774.5 L363.1 774.5 L364.1 774.5 L364.1 778.2 L365.1 778.2 L365.1 768.9 L366.1 768.9 L366.1 771.5 L367.1 771.5 L367.1 774.5 L368.1 774.5 L368.1 764.7 L369.2 764.7 L369.2 766.7 L370.2 766.7 L370.2 766.7 L371.2 766.7 L371.2 778.2 L372.2 778.2 L372.2 778.2 L373.2 778.2 L373.2 782.9 L374.2 782.9 L374.2 819.0 L375.2 819.0 L375.2 766.7 L376.2 766.7 L376.2 768.9 L377.2 768.9 L377.2 801.1 L378.2 801.1 L378.2 789.6 L379.2 789.6 L379.2 774.5 L380.3 774.5 L380.3 764.7 L381.3 764.7 L381.3 778.2 L382.3 778.2 L382.3 778.2 L383.3 778.2 L383.3 766.7 L384.3 766.7 L384.3 768.9 L385.3 768.9 L385.3 789.6 L386.3 789.6 L386.3 778.2 L387.3 778.2 L387.3 782.9 L388.3 782.9 L388.3 774.5 L389.3 774.5 L389.3 778.2 L390.3 778.2 L390.3 782.9 L391.3 782.9 L391.3 789.6 L392.4 789.6 L392.4 768.9 L393.4 768.9 L393.4 774.5 L394.4 774.5 L394.4 766.7 L395.4 766.7 L395.4 789.6 L396.4 789.6 L396.4 764.7 L397.4 764.7 L397.4 751.5 L398.4 751.5 L398.4 739.7 L399.4 739.7 L399.4 736.0 L400.4 736.0 L400.4 728.4 L401.4 728.4 L401.4 714.9 L402.4 714.9 L402.4 705.7 L403.4 705.7 L403.4 696.2 L404.5 696.2 L404.5 685.3 L405.5 685.3 L405.5 677.1 L406.5 677.1 L406.5 667.1 L407.5 667.1 L407.5 657.0 L408.5 657.0 L408.5 647.6 L409.5 647.6 L409.5 637.8 L410.5 637.8 L410.5 628.1 L411.5 628.1 L411.5 620.3 L412.5 620.3 L412.5 621.2 L413.5 621.2 L413.5 621.7 L414.5 621.7 L414.5 622.6 L415.6 622.6 L415.6 623.4 L416.6 623.4 L416.6 624.3 L417.6 624.3 L417.6 624.9 L418.6 624.9 L418.6 625.6 L419.6 625.6 L419.6 626.5 L420.6 626.5 L420.6 627.4 L421.6 627.4 L421.6 628.3 L422.6 628.3 L422.6 629.0 L423.6 629.0 L423.6 629.6 L424.6 629.6 L424.6 630.1 L425.6 630.1 L425.6 630.6 L426.6 630.6 L426.6 631.0 L427.7 631.0 L427.7 631.5 L428.7 631.5 L428.7 632.2 L429.7 632.2 L429.7 632.5 L430.7 632.5 L430.7 633.0 L431.7 633.0 L431.7 633.2 L432.7 633.2 L432.7 633.6 L433.7 633.6 L433.7 634.3 L434.7 634.3 L434.7 634.7 L435.7 634.7 L435.7 635.1 L436.7 635.1 L436.7 635.6 L437.7 635.6 L437.7 636.0 L438.8 636.0 L438.8 636.5 L439.8 636.5 L439.8 637.1 L440.8 637.1 L440.8 637.4 L441.8 637.4 L441.8 637.9 L442.8 637.9 L442.8 638.4 L443.8 638.4 L443.8 638.8 L444.8 638.8 L444.8 639.1 L445.8 639.1 L445.8 639.8 L446.8 639.8 L446.8 640.1 L447.8 640.1 L447.8 640.5 L448.8 640.5 L448.8 641.1 L449.8 641.1 L449.8 641.8 L450.9 641.8 L450.9 642.1 L451.9 642.1 L451.9 642.5 L452.9 642.5 L452.9 643.3 L453.9 643.3 L453.9 643.4 L454.9 643.4 L454.9 643.5 L455.9 643.5 L455.9 644.5 L456.9 644.5 L456.9 644.6 L457.9 644.6 L457.9 645.0 L458.9 645.0 L458.9 645.3 L459.9 645.3 L459.9 646.0 L460.9 646.0 L460.9 646.1 L461.9 646.1 L461.9 646.9 L463.0 646.9 L463.0 647.3 L464.0 647.3 L464.0 647.5 L465.0 647.5 L465.0 648.1 L466.0 648.1 L466.0 648.4 L467.0 648.4 L467.0 648.6 L468.0 648.6 L468.0 649.6 L469.0 649.6 L469.0 649.9 L470.0 649.9 L470.0 650.4 L471.0 650.4 L471.0 650.5 L472.0 650.5 L472.0 650.8 L473.0 650.8 L473.0 651.7 L474.1 651.7 L474.1 652.0 L475.1 652.0 L475.1 652.3 L476.1 652.3 L476.1 653.0 L477.1 653.0 L477.1 653.3 L478.1 653.3 L478.1 653.3 L479.1 653.3 L479.1 653.9 L480.1 653.9 L480.1 654.4 L481.1 654.4 L481.1 655.0 L482.1 655.0 L482.1 655.4 L483.1 655.4 L483.1 655.6 L484.1 655.6 L484.1 656.3 L485.1 656.3 L485.1 656.9 L486.2 656.9 L486.2 657.2 L487.2 657.2 L487.2 657.8 L488.2 657.8 L488.2 657.8 L489.2 657.8 L489.2 658.4 L490.2 658.4 L490.2 658.9 L491.2 658.9 L491.2 659.3 L492.2 659.3 L492.2 659.6 L493.2 659.6 L493.2 660.2 L494.2 660.2 L494.2 660.4 L495.2 660.4 L495.2 661.0 L496.2 661.0 L496.2 661.5 L497.3 661.5 L497.3 662.6 L498.3 662.6 L498.3 663.1 L499.3 663.1 L499.3 662.9 L500.3 662.9 L500.3 663.6 L501.3 663.6 L501.3 664.5 L502.3 664.5 L502.3 665.6 L503.3 665.6 L503.3 665.4 L504.3 665.4 L504.3 666.2 L505.3 666.2 L505.3 666.4 L506.3 666.4 L506.3 667.4 L507.3 667.4 L507.3 668.4 L508.3 668.4 L508.3 669.0 L509.4 669.0 L509.4 669.8 L510.4 669.8 L510.4 670.0 L511.4 670.0 L511.4 671.0 L512.4 671.0 L512.4 671.2 L513.4 671.2 L513.4 672.1 L514.4 672.1 L514.4 672.3 L515.4 672.3 L515.4 673.5 L516.4 673.5 L516.4 674.1 L517.4 674.1 L517.4 674.6 L518.4 674.6 L518.4 675.0 L519.4 675.0 L519.4 675.6 L520.4 675.6 L520.4 675.7 L521.5 675.7 L521.5 677.1 L522.5 677.1 L522.5 677.9 L523.5 677.9 L523.5 678.3 L524.5 678.3 L524.5 679.0 L525.5 679.0 L525.5 679.7 L526.5 679.7 L526.5 679.5 L527.5 679.5 L527.5 680.4 L528.5 680.4 L528.5 681.4 L529.5 681.4 L529.5 682.0 L530.5 682.0 L530.5 682.6 L531.5 682.6 L531.5 683.4 L532.6 683.4 L532.6 684.0 L533.6 684.0 L533.6 683.9 L534.6 683.9 L534.6 685.1 L535.6 685.1 L535.6 685.6 L536.6 685.6 L536.6 686.0 L537.6 686.0 L537.6 686.8 L538.6 686.8 L538.6 687.8 L539.6 687.8 L539.6 689.3 L540.6 689.3 L540.6 688.6 L541.6 688.6 L541.6 688.8 L542.6 688.8 L542.6 689.0 L543.6 689.0 L543.6 691.6 L544.7 691.6 L544.7 690.6 L545.7 690.6 L545.7 692.7 L546.7 692.7 L546.7 691.9 L547.7 691.9 L547.7 693.4 L548.7 693.4 L548.7 694.6 L549.7 694.6 L549.7 694.2 L550.7 694.2 L550.7 695.8 L551.7 695.8 L551.7 695.6 L552.7 695.6 L552.7 695.9 L553.7 695.9 L553.7 696.2 L554.7 696.2 L554.7 697.5 L555.8 697.5 L555.8 698.6 L556.8 698.6 L556.8 698.2 L557.8 698.2 L557.8 699.2 L558.8 699.2 L558.8 700.1 L559.8 700.1 L559.8 700.4 L560.8 700.4 L560.8 700.8 L561.8 700.8 L561.8 703.0 L562.8 703.0 L562.8 703.9 L563.8 703.9 L563.8 703.4 L564.8 703.4 L564.8 703.5 L565.8 703.5 L565.8 704.2 L566.8 704.2 L566.8 704.1 L567.9 704.1 L567.9 703.4 L568.9 703.4 L568.9 706.0 L569.9 706.0 L569.9 706.6 L570.9 706.6 L570.9 707.9 L571.9 707.9 L571.9 707.2 L572.9 707.2 L572.9 706.8 L573.9 706.8 L573.9 707.5 L574.9 707.5 L574.9 705.6 L575.9 705.6 L575.9 707.3 L576.9 707.3 L576.9 709.2 L577.9 709.2 L577.9 709.2 L578.9 709.2 L578.9 707.6 L580.0 707.6 L580.0 710.2 L581.0 710.2 L581.0 709.5 L582.0 709.5 L582.0 709.4 L583.0 709.4 L583.0 710.3 L584.0 710.3 L584.0 709.7 L585.0 709.7 L585.0 710.1 L586.0 710.1 L586.0 711.2 L587.0 711.2 L587.0 712.5 L588.0 712.5 L588.0 714.5 L589.0 714.5 L589.0 711.0 L590.0 711.0 L590.0 711.0 L591.1 711.0 L591.1 712.9 L592.1 712.9 L592.1 711.4 L593.1 711.4 L593.1 714.7 L594.1 714.7 L594.1 711.8 L595.1 711.8 L595.1 712.6 L596.1 712.6 L596.1 712.9 L597.1 712.9 L597.1 714.5 L598.1 714.5 L598.1 715.6 L599.1 715.6 L599.1 714.1 L600.1 714.1 L600.1 715.4 L601.1 715.4 L601.1 717.8 L602.1 717.8 L602.1 715.7 L603.2 715.7 L603.2 717.5 L604.2 717.5 L604.2 716.5 L605.2 716.5 L605.2 716.8 L606.2 716.8 L606.2 717.6 L607.2 717.6 L607.2 714.9 L608.2 714.9 L608.2 718.2 L609.2 718.2 L609.2 722.2 L610.2 722.2 L610.2 719.2 L611.2 719.2 L611.2 719.3 L612.2 719.3 L612.2 717.8 L613.2 717.8 L613.2 722.0 L614.3 722.0 L614.3 720.7 L615.3 720.7 L615.3 719.5 L616.3 719.5 L616.3 721.2 L617.3 721.2 L617.3 724.4 L618.3 724.4 L618.3 721.7 L619.3 721.7 L619.3 720.6 L620.3 720.6 L620.3 721.1 L621.3 721.1 L621.3 721.3 L622.3 721.3 L622.3 722.0 L623.3 722.0 L623.3 721.6 L624.3 721.6 L624.3 719.9 L625.3 719.9 L625.3 722.9 L626.4 722.9 L626.4 721.5 L627.4 721.5 L627.4 725.2 L628.4 725.2 L628.4 726.1 L629.4 726.1 L629.4 725.6 L630.4 725.6 L630.4 725.1 L631.4 725.1 L631.4 724.9 L632.4 724.9 L632.4 723.2 L633.4 723.2 L633.4 724.6 L634.4 724.6 L634.4 729.7 L635.4 729.7 L635.4 727.8 L636.4 727.8 L636.4 727.2 L637.4 727.2 L637.4 728.0 L638.5 728.0 L638.5 727.8 L639.5 727.8 L639.5 728.2 L640.5 728.2 L640.5 729.7 L641.5 729.7 L641.5 721.9 L642.5 721.9 L642.5 726.3 L643.5 726.3 L643.5 731.0 L644.5 731.0 L644.5 729.9 L645.5 729.9 L645.5 731.8 L646.5 731.8 L646.5 727.0 L647.5 727.0 L647.5 727.0 L648.5 727.0 L648.5 733.4 L649.6 733.4 L649.6 733.1 L650.6 733.1 L650.6 730.6 L651.6 730.6 L651.6 736.4 L652.6 736.4 L652.6 733.9 L653.6 733.9 L653.6 733.4 L654.6 733.4 L654.6 732.0 L655.6 732.0 L655.6 730.3 L656.6 730.3 L656.6 729.2 L657.6 729.2 L657.6 738.1 L658.6 738.1 L658.6 733.9 L659.6 733.9 L659.6 733.4 L660.6 733.4 L660.6 736.0 L661.7 736.0 L661.7 732.5 L662.7 732.5 L662.7 733.4 L663.7 733.4 L663.7 731.8 L664.7 731.8 L664.7 735.1 L665.7 735.1 L665.7 735.4 L666.7 735.4 L666.7 733.6 L667.7 733.6 L667.7 735.4 L668.7 735.4 L668.7 732.5 L669.7 732.5 L669.7 735.7 L670.7 735.7 L670.7 740.5 L671.7 740.5 L671.7 733.1 L672.8 733.1 L672.8 737.7 L673.8 737.7 L673.8 737.4 L674.8 737.4 L674.8 735.1 L675.8 735.1 L675.8 733.9 L676.8 733.9 L676.8 741.8 L677.8 741.8 L677.8 738.9 L678.8 738.9 L678.8 736.4 L679.8 736.4 L679.8 737.7 L680.8 737.7 L680.8 737.4 L681.8 737.4 L681.8 736.0 L682.8 736.0 L682.8 737.4 L683.8 737.4 L683.8 736.0 L684.9 736.0 L684.9 740.5 L685.9 740.5 L685.9 743.8 L686.9 743.8 L686.9 737.7 L687.9 737.7 L687.9 743.8 L688.9 743.8 L688.9 740.5 L689.9 740.5 L689.9 740.5 L690.9 740.5 L690.9 739.3 L691.9 739.3 L691.9 738.9 L692.9 738.9 L692.9 743.8 L693.9 743.8 L693.9 744.3 L694.9 744.3 L694.9 741.8 L695.9 741.8 L695.9 740.9 L697.0 740.9 L697.0 746.0 L698.0 746.0 L698.0 740.9 L699.0 740.9 L699.0 739.3 L700.0 739.3 L700.0 745.4 L701.0 745.4 L701.0 740.9 L702.0 740.9 L702.0 747.2 L703.0 747.2 L703.0 747.2 L704.0 747.2 L704.0 744.3 L705.0 744.3 L705.0 744.3 L706.0 744.3 L706.0 745.4 L707.0 745.4 L707.0 746.0 L708.1 746.0 L708.1 753.3 L709.1 753.3 L709.1 742.8 L710.1 742.8 L710.1 747.2 L711.1 747.2 L711.1 743.2 L712.1 743.2 L712.1 744.3 L713.1 744.3 L713.1 743.8 L714.1 743.8 L714.1 750.7 L715.1 750.7 L715.1 746.6 L716.1 746.6 L716.1 745.4 L717.1 745.4 L717.1 756.3 L718.1 756.3 L718.1 743.2 L719.1 743.2 L719.1 743.8 L720.2 743.8 L720.2 747.8 L721.2 747.8 L721.2 752.4 L722.2 752.4 L722.2 752.4 L723.2 752.4 L723.2 756.3 L724.2 756.3 L724.2 747.8 L725.2 747.8 L725.2 751.5 L726.2 751.5 L726.2 745.4 L727.2 745.4 L727.2 746.6 L728.2 746.6 L728.2 754.2 L729.2 754.2 L729.2 744.8 L730.2 744.8 L730.2 746.6 L731.3 746.6 L731.3 751.5 L732.3 751.5 L732.3 744.8 L733.3 744.8 L733.3 753.3 L734.3 753.3 L734.3 754.2 L735.3 754.2 L735.3 748.5 L736.3 748.5 L736.3 745.4 L737.3 745.4 L737.3 748.5 L738.3 748.5 L738.3 744.8 L739.3 744.8 L739.3 754.2 L740.3 754.2 L740.3 751.5 L741.3 751.5 L741.3 747.8 L742.3 747.8 L742.3 750.0 L743.4 750.0 L743.4 757.4 L744.4 757.4 L744.4 750.7 L745.4 750.7 L745.4 754.2 L746.4 754.2 L746.4 751.5 L747.4 751.5 L747.4 758.7 L748.4 758.7 L748.4 749.2 L749.4 749.2 L749.4 748.5 L750.4 748.5 L750.4 756.3 L751.4 756.3 L751.4 757.4 L752.4 757.4 L752.4 758.7 L753.4 758.7 L753.4 754.2 L754.4 754.2 L754.4 750.0 L755.5 750.0 L755.5 763.0 L756.5 763.0 L756.5 750.7 L757.5 750.7 L757.5 750.7 L758.5 750.7 L758.5 754.2 L759.5 754.2 L759.5 756.3 L760.5 756.3 L760.5 752.4 L761.5 752.4 L761.5 749.2 L762.5 749.2 L762.5 760.0 L763.5 760.0 L763.5 760.0 L764.5 760.0 L764.5 755.2 L765.5 755.2 L765.5 754.2 L766.6 754.2 L766.6 758.7 L767.6 758.7 L767.6 754.2 L768.6 754.2 L768.6 761.4 L769.6 761.4 L769.6 753.3 L770.6 753.3 L770.6 758.7 L771.6 758.7 L771.6 750.0 L772.6 750.0 L772.6 756.3 L773.6 756.3 L773.6 756.3 L774.6 756.3 L774.6 764.7 L775.6 764.7 L775.6 747.8 L776.6 747.8 L776.6 751.5 L777.6 751.5 L777.6 756.3 L778.7 756.3 L778.7 752.4 L779.7 752.4 L779.7 758.7 L780.7 758.7 L780.7 753.3 L781.7 753.3 L781.7 756.3 L782.7 756.3 L782.7 757.4 L783.7 757.4 L783.7 750.0 L784.7 750.0 L784.7 748.5 L785.7 748.5 L785.7 756.3 L786.7 756.3 L786.7 756.3 L787.7 756.3 L787.7 755.2 L788.7 755.2 L788.7 748.5 L789.8 748.5 L789.8 753.3 L790.8 753.3 L790.8 756.3 L791.8 756.3 L791.8 750.7 L792.8 750.7 L792.8 761.4 L793.8 761.4 L793.8 758.7 L794.8 758.7 L794.8 753.3 L795.8 753.3 L795.8 752.4 L796.8 752.4 L796.8 750.7 L797.8 750.7 L797.8 750.7 L798.8 750.7 L798.8 758.7 L799.8 758.7 L799.8 761.4 L800.8 761.4 L800.8 753.3 L801.9 753.3 L801.9 755.2 L802.9 755.2 L802.9 763.0 L803.9 763.0 L803.9 758.7 L804.9 758.7 L804.9 760.0 L805.9 760.0 L805.9 758.7 L806.9 758.7 L806.9 752.4 L807.9 752.4 L807.9 758.7 L808.9 758.7 L808.9 766.7 L809.9 766.7 L809.9 753.3 L810.9 753.3 L810.9 761.4 L811.9 761.4 L811.9 750.7 L812.9 750.7 L812.9 756.3 L814.0 756.3 L814.0 760.0 L815.0 760.0 L815.0 760.0 L816.0 760.0 L816.0 754.2 L817.0 754.2 L817.0 753.3 L818.0 753.3 L818.0 760.0 L819.0 760.0 L819.0 760.0 L820.0 760.0 L820.0 754.2 L821.0 754.2 L821.0 764.7 L822.0 764.7 L822.0 758.7 L823.0 758.7 L823.0 764.7 L824.0 764.7 L824.0 756.3 L825.1 756.3 L825.1 751.5 L826.1 751.5 L826.1 757.4 L827.1 757.4 L827.1 760.0 L828.1 760.0 L828.1 754.2 L829.1 754.2 L829.1 751.5 L830.1 751.5 L830.1 756.3 L831.1 756.3 L831.1 771.5 L832.1 771.5 L832.1 754.2 L833.1 754.2 L833.1 758.7 L834.1 758.7 L834.1 760.0 L835.1 760.0 L835.1 757.4 L836.1 757.4 L836.1 756.3 L837.2 756.3 L837.2 747.8 L838.2 747.8 L838.2 753.3 L839.2 753.3 L839.2 757.4 L840.2 757.4 L840.2 757.4 L841.2 757.4 L841.2 760.0 L842.2 760.0 L842.2 763.0 L843.2 763.0 L843.2 760.0 L844.2 760.0 L844.2 764.7 L845.2 764.7 L845.2 760.0 L846.2 760.0 L846.2 761.4 L847.2 761.4 L847.2 757.4 L848.3 757.4 L848.3 761.4 L849.3 761.4 L849.3 758.7 L850.3 758.7 L850.3 754.2 L851.3 754.2 L851.3 758.7 L852.3 758.7 L852.3 758.7 L853.3 758.7 L853.3 758.7 L854.3 758.7 L854.3 761.4 L855.3 761.4 L855.3 756.3 L856.3 756.3 L856.3 768.9 L857.3 768.9 L857.3 760.0 L858.3 760.0 L858.3 768.9 L859.3 768.9 L859.3 763.0 L860.4 763.0 L860.4 756.3 L861.4 756.3 L861.4 756.3 L862.4 756.3 L862.4 761.4 L863.4 761.4 L863.4 760.0 L864.4 760.0 L864.4 760.0 L865.4 760.0 L865.4 758.7 L866.4 758.7 L866.4 756.3 L867.4 756.3 L867.4 764.7 L868.4 764.7 L868.4 763.0 L869.4 763.0 L869.4 760.0 L870.4 760.0 L870.4 758.7 L871.4 758.7 L871.4 757.4 L872.5 757.4 L872.5 757.4 L873.5 757.4 L873.5 750.7 L874.5 750.7 L874.5 760.0 L875.5 760.0 L875.5 763.0 L876.5 763.0 L876.5 752.4 L877.5 752.4 L877.5 758.7 L878.5 758.7 L878.5 761.4 L879.5 761.4 L879.5 760.0 L880.5 760.0 L880.5 756.3 L881.5 756.3 L881.5 766.7 L882.5 766.7 L882.5 761.4 L883.6 761.4 L883.6 757.4 L884.6 757.4 L884.6 761.4 L885.6 761.4 L885.6 764.7 L886.6 764.7 L886.6 755.2 L887.6 755.2 L887.6 760.0 L888.6 760.0 L888.6 763.0 L889.6 763.0 L889.6 758.7 L890.6 758.7 L890.6 761.4 L891.6 761.4 L891.6 751.5 L892.6 751.5 L892.6 763.0 L893.6 763.0 L893.6 764.7 L894.6 764.7 L894.6 760.0 L895.7 760.0 L895.7 751.5 L896.7 751.5 L896.7 760.0 L897.7 760.0 L897.7 756.3 L898.7 756.3 L898.7 766.7 L899.7 766.7 L899.7 761.4 L900.7 761.4 L900.7 760.0 L901.7 760.0 L901.7 756.3 L902.7 756.3 L902.7 756.3 L903.7 756.3 L903.7 764.7 L904.7 764.7 L904.7 757.4 L905.7 757.4 L905.7 758.7 L906.8 758.7 L906.8 753.3 L907.8 753.3 L907.8 756.3 L908.8 756.3 L908.8 766.7 L909.8 766.7 L909.8 751.5 L910.8 751.5 L910.8 774.5 L911.8 774.5 L911.8 764.7 L912.8 764.7 L912.8 758.7 L913.8 758.7 L913.8 755.2 L914.8 755.2 L914.8 751.5 L915.8 751.5 L915.8 757.4 L916.8 757.4 L916.8 761.4 L917.8 761.4 L917.8 760.0 L918.9 760.0 L918.9 757.4 L919.9 757.4 L919.9 758.7 L920.9 758.7 L920.9 755.2 L921.9 755.2 L921.9 756.3 L922.9 756.3 L922.9 763.0 L923.9 763.0 L923.9 757.4 L924.9 757.4 L924.9 757.4 L925.9 757.4 L925.9 756.3 L926.9 756.3 L926.9 766.7 L927.9 766.7 L927.9 756.3 L928.9 756.3 L928.9 763.0 L929.9 763.0 L929.9 764.7 L931.0 764.7 L931.0 766.7 L932.0 766.7 L932.0 766.7 L933.0 766.7 L933.0 757.4 L934.0 757.4 L934.0 761.4 L935.0 761.4 L935.0 760.0 L936.0 760.0 L936.0 754.2 L937.0 754.2 L937.0 764.7 L938.0 764.7 L938.0 763.0 L939.0 763.0 L939.0 766.7 L940.0 766.7 L940.0 754.2 L941.0 754.2 L941.0 756.3 L942.1 756.3 L942.1 768.9 L943.1 768.9 L943.1 768.9 L944.1 768.9 L944.1 764.7 L945.1 764.7 L945.1 768.9 L946.1 768.9 L946.1 760.0 L947.1 760.0 L947.1 756.3 L948.1 756.3 L948.1 766.7 L949.1 766.7 L949.1 763.0 L950.1 763.0 L950.1 760.0 L951.1 760.0 L951.1 766.7 L952.1 766.7 L952.1 757.4 L953.1 757.4 L953.1 761.4 L954.2 761.4 L954.2 763.0 L955.2 763.0 L955.2 768.9 L956.2 768.9 L956.2 754.2 L957.2 754.2 L957.2 760.0 L958.2 760.0 L958.2 768.9 L959.2 768.9 L959.2 754.2 L960.2 754.2 L960.2 758.7 L961.2 758.7 L961.2 751.5 L962.2 751.5 L962.2 763.0 L963.2 763.0 L963.2 763.0 L964.2 763.0 L964.2 768.9 L965.3 768.9 L965.3 761.4 L966.3 761.4 L966.3 758.7 L967.3 758.7 L967.3 761.4 L968.3 761.4 L968.3 758.7 L969.3 758.7 L969.3 758.7 L970.3 758.7 L970.3 761.4 L971.3 761.4 L971.3 764.7 L972.3 764.7 L972.3 755.2 L973.3 755.2 L973.3 758.7 L974.3 758.7 L974.3 766.7 L975.3 766.7 L975.3 758.7 L976.3 758.7 L976.3 756.3 L977.4 756.3 L977.4 761.4 L978.4 761.4 L978.4 758.7 L979.4 758.7 L979.4 760.0 L980.4 760.0 L980.4 754.2 L981.4 754.2 L981.4 766.7 L982.4 766.7 L982.4 763.0 L983.4 763.0 L983.4 768.9 L984.4 768.9 L984.4 755.2 L985.4 755.2 L985.4 763.0 L986.4 763.0 L986.4 766.7 L987.4 766.7 L987.4 757.4 L988.4 757.4 L988.4 756.3 L989.5 756.3 L989.5 758.7 L990.5 758.7 L990.5 763.0 L991.5 763.0 L991.5 771.5 L992.5 771.5 L992.5 752.4 L993.5 752.4 L993.5 755.2 L994.5 755.2 L994.5 761.4 L995.5 761.4 L995.5 757.4 L996.5 757.4 L996.5 771.5 L997.5 771.5 L997.5 761.4 L998.5 761.4 L998.5 760.0 L999.5 760.0 L999.5 757.4 L1000.6 757.4 L1000.6 761.4 L1001.6 761.4 L1001.6 753.3 L1002.6 753.3 L1002.6 768.9 L1003.6 768.9 L1003.6 758.7 L1004.6 758.7 L1004.6 763.0 L1005.6 763.0 L1005.6 766.7 L1006.6 766.7 L1006.6 764.7 L1007.6 764.7 L1007.6 755.2 L1008.6 755.2 L1008.6 764.7 L1009.6 764.7 L1009.6 751.5 L1010.6 751.5 L1010.6 763.0 L1011.6 763.0 L1011.6 763.0 L1012.7 763.0 L1012.7 754.2 L1013.7 754.2 L1013.7 760.0 L1014.7 760.0 L1014.7 766.7 L1015.7 766.7 L1015.7 757.4 L1016.7 757.4 L1016.7 778.2 L1017.7 778.2 L1017.7 766.7 L1018.7 766.7 L1018.7 764.7 L1019.7 764.7 L1019.7 763.0 L1020.7 763.0 L1020.7 757.4 L1021.7 757.4 L1021.7 758.7 L1022.7 758.7 L1022.7 760.0 L1023.8 760.0 L1023.8 764.7 L1024.8 764.7 L1024.8 771.5 L1025.8 771.5 L1025.8 764.7 L1026.8 764.7 L1026.8 764.7 L1027.8 764.7 L1027.8 756.3 L1028.8 756.3 L1028.8 766.7 L1029.8 766.7 L1029.8 763.0 L1030.8 763.0 L1030.8 758.7 L1031.8 758.7 L1031.8 756.3 L1032.8 756.3 L1032.8 756.3 L1033.8 756.3 L1033.8 760.0 L1034.8 760.0 L1034.8 768.9 L1035.9 768.9 L1035.9 754.2 L1036.9 754.2 L1036.9 760.0 L1037.9 760.0 L1037.9 760.0 L1038.9 760.0 L1038.9 764.7 L1039.9 764.7 L1039.9 754.2 L1040.9 754.2 L1040.9 761.4 L1041.9 761.4 L1041.9 774.5 L1042.9 774.5 L1042.9 758.7 L1043.9 758.7 L1043.9 756.3 L1044.9 756.3 L1044.9 763.0 L1045.9 763.0 L1045.9 760.0 L1046.9 760.0 L1046.9 763.0 L1048.0 763.0 L1048.0 757.4 L1049.0 757.4 L1049.0 763.0 L1050.0 763.0 L1050.0 755.2 L1051.0 755.2 L1051.0 764.7 L1052.0 764.7 L1052.0 760.0 L1053.0 760.0 L1053.0 752.4 L1054.0 752.4 L1054.0 761.4 L1055.0 761.4 L1055.0 760.0 L1056.0 760.0 L1056.0 756.3 L1057.0 756.3 L1057.0 761.4 L1058.0 761.4 L1058.0 755.2 L1059.1 755.2 L1059.1 763.0 L1060.1 763.0 L1060.1 766.7 L1061.1 766.7 L1061.1 764.7 L1062.1 764.7 L1062.1 758.7 L1063.1 758.7 L1063.1 757.4 L1064.1 757.4 L1064.1 764.7 L1065.1 764.7 L1065.1 758.7 L1066.1 758.7 L1066.1 757.4 L1067.1 757.4 L1067.1 758.7 L1068.1 758.7 L1068.1 763.0 L1069.1 763.0 L1069.1 756.3 L1070.1 756.3 L1070.1 760.0 L1071.2 760.0 L1071.2 756.3 L1072.2 756.3 L1072.2 768.9 L1073.2 768.9 L1073.2 757.4 L1074.2 757.4 L1074.2 753.3 L1075.2 753.3 L1075.2 763.0 L1076.2 763.0 L1076.2 763.0 L1077.2 763.0 L1077.2 764.7 L1078.2 764.7 L1078.2 753.3 L1079.2 753.3 L1079.2 766.7 L1080.2 766.7 L1080.2 760.0 L1081.2 760.0 L1081.2 757.4 L1082.3 757.4 L1082.3 757.4 L1083.3 757.4 L1083.3 760.0 L1084.3 760.0 L1084.3 761.4 L1085.3 761.4 L1085.3 757.4 L1086.3 757.4 L1086.3 758.7 L1087.3 758.7 L1087.3 757.4 L1088.3 757.4 L1088.3 771.5 L1089.3 771.5 L1089.3 764.7 L1090.3 764.7 L1090.3 768.9 L1091.3 768.9 L1091.3 763.0 L1092.3 763.0 L1092.3 758.7 L1093.3 758.7 L1093.3 771.5 L1094.4 771.5 L1094.4 763.0 L1095.4 763.0 L1095.4 761.4 L1096.4 761.4 L1096.4 774.5 L1097.4 774.5 L1097.4 758.7 L1098.4 758.7 L1098.4 760.0 L1099.4 760.0 L1099.4 761.4 L1100.4 761.4 L1100.4 761.4 L1101.4 761.4 L1101.4 751.5 L1102.4 751.5 L1102.4 758.7 L1103.4 758.7 L1103.4 761.4 L1104.4 761.4 L1104.4 756.3 L1105.4 756.3 L1105.4 760.0 L1106.5 760.0 L1106.5 760.0 L1107.5 760.0 L1107.5 757.4 L1108.5 757.4 L1108.5 758.7 L1109.5 758.7 L1109.5 758.7 L1110.5 758.7 L1110.5 763.0 L1111.5 763.0 L1111.5 761.4 L1112.5 761.4 L1112.5 756.3 L1113.5 756.3 L1113.5 766.7 L1114.5 766.7 L1114.5 778.2 L1115.5 778.2 L1115.5 755.2 L1116.5 755.2 L1116.5 760.0 L1117.6 760.0 L1117.6 760.0 L1118.6 760.0 L1118.6 763.0 L1119.6 763.0 L1119.6 766.7 L1120.6 766.7 L1120.6 757.4 L1121.6 757.4 L1121.6 768.9 L1122.6 768.9 L1122.6 764.7 L1123.6 764.7 L1123.6 768.9 L1124.6 768.9 L1124.6 758.7 L1125.6 758.7 L1125.6 756.3 L1126.6 756.3 L1126.6 757.4 L1127.6 757.4 L1127.6 758.7 L1128.6 758.7 L1128.6 756.3 L1129.7 756.3 L1129.7 760.0 L1130.7 760.0 L1130.7 761.4 L1131.7 761.4 L1131.7 761.4 L1132.7 761.4 L1132.7 760.0 L1133.7 760.0 L1133.7 766.7 L1134.7 766.7 L1134.7 755.2 L1135.7 755.2 L1135.7 764.7 L1136.7 764.7 L1136.7 757.4 L1137.7 757.4 L1137.7 761.4 L1138.7 761.4 L1138.7 753.3 L1139.7 753.3 L1139.7 774.5 L1140.8 774.5 L1140.8 760.0 L1141.8 760.0 L1141.8 763.0 L1142.8 763.0 L1142.8 756.3 L1143.8 756.3 L1143.8 753.3 L1144.8 753.3 L1144.8 766.7 L1145.8 766.7 L1145.8 755.2 L1146.8 755.2 L1146.8 755.2 L1147.8 755.2 L1147.8 761.4 L1148.8 761.4 L1148.8 760.0 L1149.8 760.0 L1149.8 763.0 L1150.8 763.0 L1150.8 757.4 L1151.8 757.4 L1151.8 761.4 L1152.9 761.4 L1152.9 763.0 L1153.9 763.0 L1153.9 757.4 L1154.9 757.4 L1154.9 766.7 L1155.9 766.7 L1155.9 760.0 L1156.9 760.0 L1156.9 756.3 L1157.9 756.3 L1157.9 764.7 L1158.9 764.7 L1158.9 768.9 L1159.9 768.9 L1159.9 760.0 L1160.9 760.0 L1160.9 756.3 L1161.9 756.3 L1161.9 757.4 L1162.9 757.4 L1162.9 760.0 L1163.9 760.0 L1163.9 753.3 L1165.0 753.3 L1165.0 756.3 L1166.0 756.3 L1166.0 757.4 L1167.0 757.4 L1167.0 766.7 L1168.0 766.7 L1168.0 763.0 L1169.0 763.0 L1169.0 754.2 L1170.0 754.2 L1170.0 755.2 L1171.0 755.2 L1171.0 756.3 L1172.0 756.3 L1172.0 761.4 L1173.0 761.4 L1173.0 763.0 L1174.0 763.0 L1174.0 757.4 L1175.0 757.4 L1175.0 760.0 L1176.1 760.0 L1176.1 763.0 L1177.1 763.0 L1177.1 768.9 L1178.1 768.9 L1178.1 760.0 L1179.1 760.0 L1179.1 753.3 L1180.1 753.3 L1180.1 758.7 L1181.1 758.7 L1181.1 760.0 L1182.1 760.0 L1182.1 758.7 L1183.1 758.7 L1183.1 778.2 L1184.1 778.2 L1184.1 758.7 L1185.1 758.7 L1185.1 758.7 L1186.1 758.7 L1186.1 758.7 L1187.1 758.7 L1187.1 764.7 L1188.2 764.7 L1188.2 761.4 L1189.2 761.4 L1189.2 755.2 L1190.2 755.2 L1190.2 757.4 L1191.2 757.4 L1191.2 766.7 L1192.2 766.7 L1192.2 756.3 L1193.2 756.3 L1193.2 754.2 L1194.2 754.2 L1194.2 764.7 L1195.2 764.7 L1195.2 750.7 L1196.2 750.7 L1196.2 764.7 L1197.2 764.7 L1197.2 761.4 L1198.2 761.4 L1198.2 764.7 L1199.3 764.7 L1199.3 764.7 L1200.3 764.7 L1200.3 758.7 L1201.3 758.7 L1201.3 774.5 L1202.3 774.5 L1202.3 771.5 L1203.3 771.5 L1203.3 761.4 L1204.3 761.4 L1204.3 763.0 L1205.3 763.0 L1205.3 763.0 L1206.3 763.0 L1206.3 758.7 L1207.3 758.7 L1207.3 766.7 L1208.3 766.7" fill="none" stroke="#c0c0c0" stroke-width="1"/><path d="M356.0 782.9 L357.1 782.9 L357.1 771.5 L358.1 771.5 L358.1 789.6 L359.1 789.6 L359.1 764.7 L360.1 764.7 L360.1 778.2 L361.1 778.2 L361.1 789.6 L362.1 789.6 L362.1 764.7 L363.1 764.7 L363.1 789.6 L364.1 789.6 L364.1 771.5 L365.1 771.5 L365.1 771.5 L366.1 771.5 L366.1 774.5 L367.1 774.5 L367.1 801.1 L368.1 801.1 L368.1 782.9 L369.2 782.9 L369.2 771.5 L370.2 771.5 L370.2 768.9 L371.2 768.9 L371.2 789.6 L372.2 789.6 L372.2 782.9 L373.2 782.9 L373.2 778.2 L374.2 778.2 L374.2 789.6 L375.2 789.6 L375.2 771.5 L376.2 771.5 L376.2 771.5 L377.2 771.5 L377.2 774.5 L378.2 774.5 L378.2 774.5 L379.2 774.5 L379.2 782.9 L380.3 782.9 L380.3 801.1 L381.3 801.1 L381.3 778.2 L382.3 778.2 L382.3 774.5 L383.3 774.5 L383.3 764.7 L384.3 764.7 L384.3 778.2 L385.3 778.2 L385.3 774.5 L386.3 774.5 L386.3 764.7 L387.3 764.7 L387.3 782.9 L388.3 782.9 L388.3 782.9 L389.3 782.9 L389.3 801.1 L390.3 801.1 L390.3 789.6 L391.3 789.6 L391.3 778.2 L392.4 778.2 L392.4 771.5 L393.4 771.5 L393.4 778.2 L394.4 778.2 L394.4 774.5 L395.4 774.5 L395.4 801.1 L396.4 801.1 L396.4 758.7 L397.4 758.7 L397.4 757.4 L398.4 757.4 L398.4 748.5 L399.4 748.5 L399.4 739.7 L400.4 739.7 L400.4 729.0 L401.4 729.0 L401.4 718.3 L402.4 718.3 L402.4 709.2 L403.4 709.2 L403.4 701.1 L404.5 701.1 L404.5 688.9 L405.5 688.9 L405.5 680.4 L406.5 680.4 L406.5 671.8 L407.5 671.8 L407.5 663.0 L408.5 663.0 L408.5 653.0 L409.5 653.0 L409.5 644.0 L410.5 644.0 L410.5 635.2 L411.5 635.2 L411.5 627.8 L412.5 627.8 L412.5 628.6 L413.5 628.6 L413.5 629.4 L414.5 629.4 L414.5 630.3 L415.6 630.3 L415.6 630.9 L416.6 630.9 L416.6 631.9 L417.6 631.9 L417.6 632.6 L418.6 632.6 L418.6 633.2 L419.6 633.2 L419.6 634.0 L420.6 634.0 L420.6 635.1 L421.6 635.1 L421.6 635.8 L422.6 635.8 L422.6 636.8 L423.6 636.8 L423.6 637.3 L424.6 637.3 L424.6 637.7 L425.6 637.7 L425.6 638.3 L426.6 638.3 L426.6 638.6 L427.7 638.6 L427.7 639.1 L428.7 639.1 L428.7 639.5 L429.7 639.5 L429.7 639.8 L430.7 639.8 L430.7 640.5 L431.7 640.5 L431.7 641.2 L432.7 641.2 L432.7 641.3 L433.7 641.3 L433.7 642.1 L434.7 642.1 L434.7 642.5 L435.7 642.5 L435.7 642.9 L436.7 642.9 L436.7 643.0 L437.7 643.0 L437.7 643.7 L438.8 643.7 L438.8 644.1 L439.8 644.1 L439.8 644.7 L440.8 644.7 L440.8 645.3 L441.8 645.3 L441.8 645.6 L442.8 645.6 L442.8 646.2 L443.8 646.2 L443.8 646.1 L444.8 646.1 L444.8 647.0 L445.8 647.0 L445.8 647.3 L446.8 647.3 L446.8 647.9 L447.8 647.9 L447.8 648.5 L448.8 648.5 L448.8 648.7 L449.8 648.7 L449.8 649.1 L450.9 649.1 L450.9 649.8 L451.9 649.8 L451.9 649.6 L452.9 649.6 L452.9 650.6 L453.9 650.6 L453.9 650.9 L454.9 650.9 L454.9 651.4 L455.9 651.4 L455.9 652.0 L456.9 652.0 L456.9 652.4 L457.9 652.4 L457.9 652.6 L458.9 652.6 L458.9 653.0 L459.9 653.0 L459.9 653.6 L460.9 653.6 L460.9 654.1 L461.9 654.1 L461.9 654.4 L463.0 654.4 L463.0 655.0 L464.0 655.0 L464.0 655.2 L465.0 655.2 L465.0 656.1 L466.0 656.1 L466.0 656.2 L467.0 656.2 L467.0 656.5 L468.0 656.5 L468.0 657.2 L469.0 657.2 L469.0 657.7 L470.0 657.7 L470.0 658.4 L471.0 658.4 L471.0 658.5 L472.0 658.5 L472.0 658.8 L473.0 658.8 L473.0 659.2 L474.1 659.2 L474.1 659.7 L475.1 659.7 L475.1 660.5 L476.1 660.5 L476.1 660.8 L477.1 660.8 L477.1 660.7 L478.1 660.7 L478.1 661.7 L479.1 661.7 L479.1 662.4 L480.1 662.4 L480.1 662.1 L481.1 662.1 L481.1 663.2 L482.1 663.2 L482.1 663.7 L483.1 663.7 L483.1 664.0 L484.1 664.0 L484.1 664.1 L485.1 664.1 L485.1 664.6 L486.2 664.6 L486.2 665.2 L487.2 665.2 L487.2 665.6 L488.2 665.6 L488.2 666.1 L489.2 666.1 L489.2 666.4 L490.2 666.4 L490.2 666.7 L491.2 666.7 L491.2 666.8 L492.2 666.8 L492.2 667.7 L493.2 667.7 L493.2 668.4 L494.2 668.4 L494.2 668.3 L495.2 668.3 L495.2 669.0 L496.2 669.0 L496.2 669.7 L497.3 669.7 L497.3 669.6 L498.3 669.6 L498.3 670.6 L499.3 670.6 L499.3 671.7 L500.3 671.7 L500.3 671.9 L501.3 671.9 L501.3 672.5 L502.3 672.5 L502.3 673.0 L503.3 673.0 L503.3 674.1 L504.3 674.1 L504.3 674.2 L505.3 674.2 L505.3 674.3 L506.3 674.3 L506.3 675.5 L507.3 675.5 L507.3 675.8 L508.3 675.8 L508.3 676.1 L509.4 676.1 L509.4 676.2 L510.4 676.2 L510.4 678.2 L511.4 678.2 L511.4 679.0 L512.4 679.0 L512.4 678.4 L513.4 678.4 L513.4 679.1 L514.4 679.1 L514.4 679.7 L515.4 679.7 L515.4 681.4 L516.4 681.4 L516.4 681.7 L517.4 681.7 L517.4 682.0 L518.4 682.0 L518.4 681.9 L519.4 681.9 L519.4 682.8 L520.4 682.8 L520.4 683.7 L521.5 683.7 L521.5 684.3 L522.5 684.3 L522.5 686.0 L523.5 686.0 L523.5 686.6 L524.5 686.6 L524.5 686.7 L525.5 686.7 L525.5 686.8 L526.5 686.8 L526.5 686.9 L527.5 686.9 L527.5 688.0 L528.5 688.0 L528.5 689.2 L529.5 689.2 L529.5 688.4 L530.5 688.4 L530.5 688.6 L531.5 688.6 L531.5 690.7 L532.6 690.7 L532.6 690.3 L533.6 690.3 L533.6 692.0 L534.6 692.0 L534.6 691.0 L535.6 691.0 L535.6 691.8 L536.6 691.8 L536.6 692.7 L537.6 692.7 L537.6 693.4 L538.6 693.4 L538.6 692.9 L539.6 692.9 L539.6 694.6 L540.6 694.6 L540.6 695.6 L541.6 695.6 L541.6 696.8 L542.6 696.8 L542.6 696.5 L543.6 696.5 L543.6 697.2 L544.7 697.2 L544.7 699.5 L545.7 699.5 L545.7 697.9 L546.7 697.9 L546.7 698.3 L547.7 698.3 L547.7 698.5 L548.7 698.5 L548.7 699.4 L549.7 699.4 L549.7 701.0 L550.7 701.0 L550.7 701.3 L551.7 701.3 L551.7 703.0 L552.7 703.0 L552.7 702.2 L553.7 702.2 L553.7 702.8 L554.7 702.8 L554.7 703.9 L555.8 703.9 L555.8 703.3 L556.8 703.3 L556.8 705.3 L557.8 705.3 L557.8 705.3 L558.8 705.3 L558.8 706.5 L559.8 706.5 L559.8 706.0 L560.8 706.0 L560.8 706.8 L561.8 706.8 L561.8 707.0 L562.8 707.0 L562.8 707.5 L563.8 707.5 L563.8 710.3 L564.8 710.3 L564.8 710.0 L565.8 710.0 L565.8 711.0 L566.8 711.0 L566.8 709.7 L567.9 709.7 L567.9 712.4 L568.9 712.4 L568.9 710.6 L569.9 710.6 L569.9 712.2 L570.9 712.2 L570.9 713.8 L571.9 713.8 L571.9 714.1 L572.9 714.1 L572.9 713.5 L573.9 713.5 L573.9 711.8 L574.9 711.8 L574.9 712.8 L575.9 712.8 L575.9 715.3 L576.9 715.3 L576.9 713.5 L577.9 713.5 L577.9 714.1 L578.9 714.1 L578.9 717.2 L580.0 717.2 L580.0 713.0 L581.0 713.0 L581.0 714.5 L582.0 714.5 L582.0 715.7 L583.0 715.7 L583.0 714.5 L584.0 714.5 L584.0 715.3 L585.0 715.3 L585.0 716.5 L586.0 716.5 L586.0 716.7 L587.0 716.7 L587.0 715.8 L588.0 715.8 L588.0 717.9 L589.0 717.9 L589.0 717.3 L590.0 717.3 L590.0 718.2 L591.1 718.2 L591.1 719.3 L592.1 719.3 L592.1 718.2 L593.1 718.2 L593.1 719.8 L594.1 719.8 L594.1 718.1 L595.1 718.1 L595.1 717.3 L596.1 717.3 L596.1 721.3 L597.1 721.3 L597.1 722.0 L598.1 722.0 L598.1 723.2 L599.1 723.2 L599.1 720.1 L600.1 720.1 L600.1 721.3 L601.1 721.3 L601.1 721.5 L602.1 721.5 L602.1 720.6 L603.2 720.6 L603.2 722.9 L604.2 722.9 L604.2 720.7 L605.2 720.7 L605.2 721.1 L606.2 721.1 L606.2 722.7 L607.2 722.7 L607.2 725.7 L608.2 725.7 L608.2 723.5 L609.2 723.5 L609.2 725.4 L610.2 725.4 L610.2 724.1 L611.2 724.1 L611.2 724.6 L612.2 724.6 L612.2 726.6 L613.2 726.6 L613.2 724.3 L614.3 724.3 L614.3 725.1 L615.3 725.1 L615.3 724.1 L616.3 724.1 L616.3 729.2 L617.3 729.2 L617.3 727.2 L618.3 727.2 L618.3 727.4 L619.3 727.4 L619.3 727.0 L620.3 727.0 L620.3 728.2 L621.3 728.2 L621.3 729.9 L622.3 729.9 L622.3 729.0 L623.3 729.0 L623.3 728.2 L624.3 728.2 L624.3 726.5 L625.3 726.5 L625.3 729.2 L626.4 729.2 L626.4 727.8 L627.4 727.8 L627.4 727.6 L628.4 727.6 L628.4 727.6 L629.4 727.6 L629.4 732.3 L630.4 732.3 L630.4 731.8 L631.4 731.8 L631.4 728.8 L632.4 728.8 L632.4 732.5 L633.4 732.5 L633.4 730.1 L634.4 730.1 L634.4 731.3 L635.4 731.3 L635.4 731.8 L636.4 731.8 L636.4 735.1 L637.4 735.1 L637.4 734.2 L638.5 734.2 L638.5 731.3 L639.5 731.3 L639.5 734.2 L640.5 734.2 L640.5 737.7 L641.5 737.7 L641.5 734.5 L642.5 734.5 L642.5 735.1 L643.5 735.1 L643.5 733.6 L644.5 733.6 L644.5 735.4 L645.5 735.4 L645.5 733.4 L646.5 733.4 L646.5 737.7 L647.5 737.7 L647.5 735.4 L648.5 735.4 L648.5 734.2 L649.6 734.2 L649.6 735.4 L650.6 735.4 L650.6 731.3 L651.6 731.3 L651.6 738.9 L652.6 738.9 L652.6 734.5 L653.6 734.5 L653.6 738.1 L654.6 738.1 L654.6 739.3 L655.6 739.3 L655.6 739.3 L656.6 739.3 L656.6 739.7 L657.6 739.7 L657.6 739.7 L658.6 739.7 L658.6 738.9 L659.6 738.9 L659.6 737.4 L660.6 737.4 L660.6 734.5 L661.7 734.5 L661.7 734.8 L662.7 734.8 L662.7 741.8 L663.7 741.8 L663.7 741.8 L664.7 741.8 L664.7 740.5 L665.7 740.5 L665.7 740.1 L666.7 740.1 L666.7 738.1 L667.7 738.1 L667.7 740.5 L668.7 740.5 L668.7 743.8 L669.7 743.8 L669.7 741.4 L670.7 741.4 L670.7 744.3 L671.7 744.3 L671.7 744.3 L672.8 744.3 L672.8 741.8 L673.8 741.8 L673.8 745.4 L674.8 745.4 L674.8 746.0 L675.8 746.0 L675.8 740.5 L676.8 740.5 L676.8 744.3 L677.8 744.3 L677.8 741.8 L678.8 741.8 L678.8 743.2 L679.8 743.2 L679.8 742.8 L680.8 742.8 L680.8 744.3 L681.8 744.3 L681.8 744.3 L682.8 744.3 L682.8 745.4 L683.8 745.4 L683.8 743.8 L684.9 743.8 L684.9 745.4 L685.9 745.4 L685.9 743.8 L686.9 743.8 L686.9 744.8 L687.9 744.8 L687.9 744.3 L688.9 744.3 L688.9 742.8 L689.9 742.8 L689.9 743.8 L690.9 743.8 L690.9 747.2 L691.9 747.2 L691.9 742.3 L692.9 742.3 L692.9 746.0 L693.9 746.0 L693.9 747.2 L694.9 747.2 L694.9 744.8 L695.9 744.8 L695.9 743.8 L697.0 743.8 L697.0 757.4 L698.0 757.4 L698.0 746.0 L699.0 746.0 L699.0 745.4 L700.0 745.4 L700.0 750.0 L701.0 750.0 L701.0 747.8 L702.0 747.8 L702.0 749.2 L703.0 749.2 L703.0 756.3 L704.0 756.3 L704.0 754.2 L705.0 754.2 L705.0 752.4 L706.0 752.4 L706.0 754.2 L707.0 754.2 L707.0 747.2 L708.1 747.2 L708.1 756.3 L709.1 756.3 L709.1 749.2 L710.1 749.2 L710.1 744.8 L711.1 744.8 L711.1 758.7 L712.1 758.7 L712.1 751.5 L713.1 751.5 L713.1 749.2 L714.1 749.2 L714.1 748.5 L715.1 748.5 L715.1 754.2 L716.1 754.2 L716.1 750.0 L717.1 750.0 L717.1 752.4 L718.1 752.4 L718.1 746.0 L719.1 746.0 L719.1 751.5 L720.2 751.5 L720.2 757.4 L721.2 757.4 L721.2 747.2 L722.2 747.2 L722.2 751.5 L723.2 751.5 L723.2 751.5 L724.2 751.5 L724.2 753.3 L725.2 753.3 L725.2 754.2 L726.2 754.2 L726.2 756.3 L727.2 756.3 L727.2 750.0 L728.2 750.0 L728.2 745.4 L729.2 745.4 L729.2 749.2 L730.2 749.2 L730.2 755.2 L731.3 755.2 L731.3 756.3 L732.3 756.3 L732.3 752.4 L733.3 752.4 L733.3 755.2 L734.3 755.2 L734.3 749.2 L735.3 749.2 L735.3 755.2 L736.3 755.2 L736.3 757.4 L737.3 757.4 L737.3 751.5 L738.3 751.5 L738.3 753.3 L739.3 753.3 L739.3 751.5 L740.3 751.5 L740.3 748.5 L741.3 748.5 L741.3 763.0 L742.3 763.0 L742.3 755.2 L743.4 755.2 L743.4 756.3 L744.4 756.3 L744.4 752.4 L745.4 752.4 L745.4 763.0 L746.4 763.0 L746.4 750.0 L747.4 750.0 L747.4 753.3 L748.4 753.3 L748.4 753.3 L749.4 753.3 L749.4 757.4 L750.4 757.4 L750.4 760.0 L751.4 760.0 L751.4 764.7 L752.4 764.7 L752.4 757.4 L753.4 757.4 L753.4 758.7 L754.4 758.7 L754.4 764.7 L755.5 764.7 L755.5 760.0 L756.5 760.0 L756.5 756.3 L757.5 756.3 L757.5 750.7 L758.5 750.7 L758.5 764.7 L759.5 764.7 L759.5 766.7 L760.5 766.7 L760.5 758.7 L761.5 758.7 L761.5 766.7 L762.5 766.7 L762.5 760.0 L763.5 760.0 L763.5 753.3 L764.5 753.3 L764.5 758.7 L765.5 758.7 L765.5 752.4 L766.6 752.4 L766.6 757.4 L767.6 757.4 L767.6 753.3 L768.6 753.3 L768.6 761.4 L769.6 761.4 L769.6 758.7 L770.6 758.7 L770.6 757.4 L771.6 757.4 L771.6 760.0 L772.6 760.0 L772.6 764.7 L773.6 764.7 L773.6 755.2 L774.6 755.2 L774.6 760.0 L775.6 760.0 L775.6 766.7 L776.6 766.7 L776.6 755.2 L777.6 755.2 L777.6 752.4 L778.7 752.4 L778.7 760.0 L779.7 760.0 L779.7 757.4 L780.7 757.4 L780.7 760.0 L781.7 760.0 L781.7 778.2 L782.7 778.2 L782.7 764.7 L783.7 764.7 L783.7 756.3 L784.7 756.3 L784.7 757.4 L785.7 757.4 L785.7 757.4 L786.7 757.4 L786.7 763.0 L787.7 763.0 L787.7 763.0 L788.7 763.0 L788.7 761.4 L789.8 761.4 L789.8 768.9 L790.8 768.9 L790.8 761.4 L791.8 761.4 L791.8 766.7 L792.8 766.7 L792.8 754.2 L793.8 754.2 L793.8 757.4 L794.8 757.4 L794.8 760.0 L795.8 760.0 L795.8 761.4 L796.8 761.4 L796.8 755.2 L797.8 755.2 L797.8 750.7 L798.8 750.7 L798.8 752.4 L799.8 752.4 L799.8 761.4 L800.8 761.4 L800.8 755.2 L801.9 755.2 L801.9 756.3 L802.9 756.3 L802.9 757.4 L803.9 757.4 L803.9 756.3 L804.9 756.3 L804.9 766.7 L805.9 766.7 L805.9 764.7 L806.9 764.7 L806.9 764.7 L807.9 764.7 L807.9 774.5 L808.9 774.5 L808.9 766.7 L809.9 766.7 L809.9 761.4 L810.9 761.4 L810.9 760.0 L811.9 760.0 L811.9 755.2 L812.9 755.2 L812.9 758.7 L814.0 758.7 L814.0 760.0 L815.0 760.0 L815.0 761.4 L816.0 761.4 L816.0 757.4 L817.0 757.4 L817.0 757.4 L818.0 757.4 L818.0 766.7 L819.0 766.7 L819.0 764.7 L820.0 764.7 L820.0 771.5 L821.0 771.5 L821.0 758.7 L822.0 758.7 L822.0 761.4 L823.0 761.4 L823.0 771.5 L824.0 771.5 L824.0 761.4 L825.1 761.4 L825.1 758.7 L826.1 758.7 L826.1 760.0 L827.1 760.0 L827.1 763.0 L828.1 763.0 L828.1 757.4 L829.1 757.4 L829.1 755.2 L830.1 755.2 L830.1 757.4 L831.1 757.4 L831.1 771.5 L832.1 771.5 L832.1 760.0 L833.1 760.0 L833.1 760.0 L834.1 760.0 L834.1 757.4 L835.1 757.4 L835.1 760.0 L836.1 760.0 L836.1 760.0 L837.2 760.0 L837.2 755.2 L838.2 755.2 L838.2 758.7 L839.2 758.7 L839.2 756.3 L840.2 756.3 L840.2 763.0 L841.2 763.0 L841.2 764.7 L842.2 764.7 L842.2 764.7 L843.2 764.7 L843.2 764.7 L844.2 764.7 L844.2 768.9 L845.2 768.9 L845.2 766.7 L846.2 766.7 L846.2 763.0 L847.2 763.0 L847.2 764.7 L848.3 764.7 L848.3 761.4 L849.3 761.4 L849.3 758.7 L850.3 758.7 L850.3 771.5 L851.3 771.5 L851.3 774.5 L852.3 774.5 L852.3 764.7 L853.3 764.7 L853.3 763.0 L854.3 763.0 L854.3 763.0 L855.3 763.0 L855.3 761.4 L856.3 761.4 L856.3 774.5 L857.3 774.5 L857.3 764.7 L858.3 764.7 L858.3 763.0 L859.3 763.0 L859.3 756.3 L860.4 756.3 L860.4 778.2 L861.4 778.2 L861.4 768.9 L862.4 768.9 L862.4 761.4 L863.4 761.4 L863.4 771.5 L864.4 771.5 L864.4 768.9 L865.4 768.9 L865.4 764.7 L866.4 764.7 L866.4 764.7 L867.4 764.7 L867.4 774.5 L868.4 774.5 L868.4 768.9 L869.4 768.9 L869.4 764.7 L870.4 764.7 L870.4 771.5 L871.4 771.5 L871.4 764.7 L872.5 764.7 L872.5 760.0 L873.5 760.0 L873.5 761.4 L874.5 761.4 L874.5 782.9 L875.5 782.9 L875.5 764.7 L876.5 764.7 L876.5 757.4 L877.5 757.4 L877.5 761.4 L878.5 761.4 L878.5 763.0 L879.5 763.0 L879.5 771.5 L880.5 771.5 L880.5 764.7 L881.5 764.7 L881.5 753.3 L882.5 753.3 L882.5 760.0 L883.6 760.0 L883.6 763.0 L884.6 763.0 L884.6 756.3 L885.6 756.3 L885.6 768.9 L886.6 768.9 L886.6 761.4 L887.6 761.4 L887.6 764.7 L888.6 764.7 L888.6 757.4 L889.6 757.4 L889.6 760.0 L890.6 760.0 L890.6 766.7 L891.6 766.7 L891.6 756.3 L892.6 756.3 L892.6 771.5 L893.6 771.5 L893.6 755.2 L894.6 755.2 L894.6 758.7 L895.7 758.7 L895.7 761.4 L896.7 761.4 L896.7 756.3 L897.7 756.3 L897.7 764.7 L898.7 764.7 L898.7 758.7 L899.7 758.7 L899.7 761.4 L900.7 761.4 L900.7 754.2 L901.7 754.2 L901.7 766.7 L902.7 766.7 L902.7 758.7 L903.7 758.7 L903.7 764.7 L904.7 764.7 L904.7 768.9 L905.7 768.9 L905.7 763.0 L906.8 763.0 L906.8 763.0 L907.8 763.0 L907.8 760.0 L908.8 760.0 L908.8 760.0 L909.8 760.0 L909.8 755.2 L910.8 755.2 L910.8 757.4 L911.8 757.4 L911.8 768.9 L912.8 768.9 L912.8 768.9 L913.8 768.9 L913.8 764.7 L914.8 764.7 L914.8 760.0 L915.8 760.0 L915.8 774.5 L916.8 774.5 L916.8 764.7 L917.8 764.7 L917.8 764.7 L918.9 764.7 L918.9 766.7 L919.9 766.7 L919.9 760.0 L920.9 760.0 L920.9 763.0 L921.9 763.0 L921.9 757.4 L922.9 757.4 L922.9 760.0 L923.9 760.0 L923.9 774.5 L924.9 774.5 L924.9 761.4 L925.9 761.4 L925.9 760.0 L926.9 760.0 L926.9 771.5 L927.9 771.5 L927.9 760.0 L928.9 760.0 L928.9 760.0 L929.9 760.0 L929.9 763.0 L931.0 763.0 L931.0 768.9 L932.0 768.9 L932.0 771.5 L933.0 771.5 L933.0 766.7 L934.0 766.7 L934.0 755.2 L935.0 755.2 L935.0 766.7 L936.0 766.7 L936.0 764.7 L937.0 764.7 L937.0 768.9 L938.0 768.9 L938.0 761.4 L939.0 761.4 L939.0 763.0 L940.0 763.0 L940.0 758.7 L941.0 758.7 L941.0 768.9 L942.1 768.9 L942.1 766.7 L943.1 766.7 L943.1 768.9 L944.1 768.9 L944.1 760.0 L945.1 760.0 L945.1 763.0 L946.1 763.0 L946.1 774.5 L947.1 774.5 L947.1 771.5 L948.1 771.5 L948.1 763.0 L949.1 763.0 L949.1 774.5 L950.1 774.5 L950.1 764.7 L951.1 764.7 L951.1 755.2 L952.1 755.2 L952.1 757.4 L953.1 757.4 L953.1 764.7 L954.2 764.7 L954.2 756.3 L955.2 756.3 L955.2 766.7 L956.2 766.7 L956.2 756.3 L957.2 756.3 L957.2 768.9 L958.2 768.9 L958.2 774.5 L959.2 774.5 L959.2 757.4 L960.2 757.4 L960.2 763.0 L961.2 763.0 L961.2 756.3 L962.2 756.3 L962.2 757.4 L963.2 757.4 L963.2 763.0 L964.2 763.0 L964.2 763.0 L965.3 763.0 L965.3 758.7 L966.3 758.7 L966.3 757.4 L967.3 757.4 L967.3 766.7 L968.3 766.7 L968.3 763.0 L969.3 763.0 L969.3 760.0 L970.3 760.0 L970.3 758.7 L971.3 758.7 L971.3 771.5 L972.3 771.5 L972.3 774.5 L973.3 774.5 L973.3 758.7 L974.3 758.7 L974.3 766.7 L975.3 766.7 L975.3 768.9 L976.3 768.9 L976.3 768.9 L977.4 768.9 L977.4 764.7 L978.4 764.7 L978.4 755.2 L979.4 755.2 L979.4 766.7 L980.4 766.7 L980.4 768.9 L981.4 768.9 L981.4 757.4 L982.4 757.4 L982.4 761.4 L983.4 761.4 L983.4 756.3 L984.4 756.3 L984.4 763.0 L985.4 763.0 L985.4 766.7 L986.4 766.7 L986.4 758.7 L987.4 758.7 L987.4 761.4 L988.4 761.4 L988.4 757.4 L989.5 757.4 L989.5 774.5 L990.5 774.5 L990.5 761.4 L991.5 761.4 L991.5 774.5 L992.5 774.5 L992.5 768.9 L993.5 768.9 L993.5 771.5 L994.5 771.5 L994.5 758.7 L995.5 758.7 L995.5 761.4 L996.5 761.4 L996.5 771.5 L997.5 771.5 L997.5 778.2 L998.5 778.2 L998.5 760.0 L999.5 760.0 L999.5 778.2 L1000.6 778.2 L1000.6 763.0 L1001.6 763.0 L1001.6 755.2 L1002.6 755.2 L1002.6 763.0 L1003.6 763.0 L1003.6 768.9 L1004.6 768.9 L1004.6 778.2 L1005.6 778.2 L1005.6 778.2 L1006.6 778.2 L1006.6 760.0 L1007.6 760.0 L1007.6 763.0 L1008.6 763.0 L1008.6 761.4 L1009.6 761.4 L1009.6 761.4 L1010.6 761.4 L1010.6 763.0 L1011.6 763.0 L1011.6 761.4 L1012.7 761.4 L1012.7 764.7 L1013.7 764.7 L1013.7 763.0 L1014.7 763.0 L1014.7 758.7 L1015.7 758.7 L1015.7 761.4 L1016.7 761.4 L1016.7 760.0 L1017.7 760.0 L1017.7 771.5 L1018.7 771.5 L1018.7 757.4 L1019.7 757.4 L1019.7 761.4 L1020.7 761.4 L1020.7 753.3 L1021.7 753.3 L1021.7 760.0 L1022.7 760.0 L1022.7 766.7 L1023.8 766.7 L1023.8 766.7 L1024.8 766.7 L1024.8 768.9 L1025.8 768.9 L1025.8 760.0 L1026.8 760.0 L1026.8 768.9 L1027.8 768.9 L1027.8 764.7 L1028.8 764.7 L1028.8 764.7 L1029.8 764.7 L1029.8 766.7 L1030.8 766.7 L1030.8 758.7 L1031.8 758.7 L1031.8 766.7 L1032.8 766.7 L1032.8 766.7 L1033.8 766.7 L1033.8 756.3 L1034.8 756.3 L1034.8 757.4 L1035.9 757.4 L1035.9 782.9 L1036.9 782.9 L1036.9 758.7 L1037.9 758.7 L1037.9 771.5 L1038.9 771.5 L1038.9 757.4 L1039.9 757.4 L1039.9 757.4 L1040.9 757.4 L1040.9 761.4 L1041.9 761.4 L1041.9 764.7 L1042.9 764.7 L1042.9 774.5 L1043.9 774.5 L1043.9 757.4 L1044.9 757.4 L1044.9 774.5 L1045.9 774.5 L1045.9 766.7 L1046.9 766.7 L1046.9 763.0 L1048.0 763.0 L1048.0 763.0 L1049.0 763.0 L1049.0 760.0 L1050.0 760.0 L1050.0 766.7 L1051.0 766.7 L1051.0 771.5 L1052.0 771.5 L1052.0 766.7 L1053.0 766.7 L1053.0 766.7 L1054.0 766.7 L1054.0 760.0 L1055.0 760.0 L1055.0 766.7 L1056.0 766.7 L1056.0 764.7 L1057.0 764.7 L1057.0 755.2 L1058.0 755.2 L1058.0 766.7 L1059.1 766.7 L1059.1 768.9 L1060.1 768.9 L1060.1 761.4 L1061.1 761.4 L1061.1 768.9 L1062.1 768.9 L1062.1 766.7 L1063.1 766.7 L1063.1 763.0 L1064.1 763.0 L1064.1 768.9 L1065.1 768.9 L1065.1 764.7 L1066.1 764.7 L1066.1 761.4 L1067.1 761.4 L1067.1 761.4 L1068.1 761.4 L1068.1 774.5 L1069.1 774.5 L1069.1 754.2 L1070.1 754.2 L1070.1 766.7 L1071.2 766.7 L1071.2 778.2 L1072.2 778.2 L1072.2 750.7 L1073.2 750.7 L1073.2 766.7 L1074.2 766.7 L1074.2 764.7 L1075.2 764.7 L1075.2 758.7 L1076.2 758.7 L1076.2 758.7 L1077.2 758.7 L1077.2 768.9 L1078.2 768.9 L1078.2 758.7 L1079.2 758.7 L1079.2 766.7 L1080.2 766.7 L1080.2 768.9 L1081.2 768.9 L1081.2 771.5 L1082.3 771.5 L1082.3 771.5 L1083.3 771.5 L1083.3 760.0 L1084.3 760.0 L1084.3 763.0 L1085.3 763.0 L1085.3 774.5 L1086.3 774.5 L1086.3 774.5 L1087.3 774.5 L1087.3 760.0 L1088.3 760.0 L1088.3 764.7 L1089.3 764.7 L1089.3 757.4 L1090.3 757.4 L1090.3 758.7 L1091.3 758.7 L1091.3 763.0 L1092.3 763.0 L1092.3 758.7 L1093.3 758.7 L1093.3 761.4 L1094.4 761.4 L1094.4 771.5 L1095.4 771.5 L1095.4 758.7 L1096.4 758.7 L1096.4 760.0 L1097.4 760.0 L1097.4 764.7 L1098.4 764.7 L1098.4 764.7 L1099.4 764.7 L1099.4 763.0 L1100.4 763.0 L1100.4 761.4 L1101.4 761.4 L1101.4 768.9 L1102.4 768.9 L1102.4 758.7 L1103.4 758.7 L1103.4 757.4 L1104.4 757.4 L1104.4 763.0 L1105.4 763.0 L1105.4 763.0 L1106.5 763.0 L1106.5 771.5 L1107.5 771.5 L1107.5 758.7 L1108.5 758.7 L1108.5 768.9 L1109.5 768.9 L1109.5 771.5 L1110.5 771.5 L1110.5 766.7 L1111.5 766.7 L1111.5 766.7 L1112.5 766.7 L1112.5 760.0 L1113.5 760.0 L1113.5 761.4 L1114.5 761.4 L1114.5 757.4 L1115.5 757.4 L1115.5 757.4 L1116.5 757.4 L1116.5 771.5 L1117.6 771.5 L1117.6 768.9 L1118.6 768.9 L1118.6 768.9 L1119.6 768.9 L1119.6 753.3 L1120.6 753.3 L1120.6 758.7 L1121.6 758.7 L1121.6 766.7 L1122.6 766.7 L1122.6 763.0 L1123.6 763.0 L1123.6 764.7 L1124.6 764.7 L1124.6 758.7 L1125.6 758.7 L1125.6 774.5 L1126.6 774.5 L1126.6 768.9 L1127.6 768.9 L1127.6 758.7 L1128.6 758.7 L1128.6 764.7 L1129.7 764.7 L1129.7 763.0 L1130.7 763.0 L1130.7 766.7 L1131.7 766.7 L1131.7 763.0 L1132.7 763.0 L1132.7 774.5 L1133.7 774.5 L1133.7 766.7 L1134.7 766.7 L1134.7 766.7 L1135.7 766.7 L1135.7 761.4 L1136.7 761.4 L1136.7 763.0 L1137.7 763.0 L1137.7 756.3 L1138.7 756.3 L1138.7 764.7 L1139.7 764.7 L1139.7 757.4 L1140.8 757.4 L1140.8 764.7 L1141.8 764.7 L1141.8 766.7 L1142.8 766.7 L1142.8 771.5 L1143.8 771.5 L1143.8 766.7 L1144.8 766.7 L1144.8 761.4 L1145.8 761.4 L1145.8 761.4 L1146.8 761.4 L1146.8 763.0 L1147.8 763.0 L1147.8 768.9 L1148.8 768.9 L1148.8 764.7 L1149.8 764.7 L1149.8 757.4 L1150.8 757.4 L1150.8 774.5 L1151.8 774.5 L1151.8 766.7 L1152.9 766.7 L1152.9 761.4 L1153.9 761.4 L1153.9 774.5 L1154.9 774.5 L1154.9 763.0 L1155.9 763.0 L1155.9 761.4 L1156.9 761.4 L1156.9 763.0 L1157.9 763.0 L1157.9 768.9 L1158.9 768.9 L1158.9 755.2 L1159.9 755.2 L1159.9 761.4 L1160.9 761.4 L1160.9 778.2 L1161.9 778.2 L1161.9 755.2 L1162.9 755.2 L1162.9 755.2 L1163.9 755.2 L1163.9 764.7 L1165.0 764.7 L1165.0 766.7 L1166.0 766.7 L1166.0 766.7 L1167.0 766.7 L1167.0 778.2 L1168.0 778.2 L1168.0 755.2 L1169.0 755.2 L1169.0 763.0 L1170.0 763.0 L1170.0 771.5 L1171.0 771.5 L1171.0 763.0 L1172.0 763.0 L1172.0 764.7 L1173.0 764.7 L1173.0 764.7 L1174.0 764.7 L1174.0 766.7 L1175.0 766.7 L1175.0 782.9 L1176.1 782.9 L1176.1 764.7 L1177.1 764.7 L1177.1 751.5 L1178.1 751.5 L1178.1 763.0 L1179.1 763.0 L1179.1 764.7 L1180.1 764.7 L1180.1 758.7 L1181.1 758.7 L1181.1 763.0 L1182.1 763.0 L1182.1 756.3 L1183.1 756.3 L1183.1 774.5 L1184.1 774.5 L1184.1 774.5 L1185.1 774.5 L1185.1 755.2 L1186.1 755.2 L1186.1 766.7 L1187.1 766.7 L1187.1 763.0 L1188.2 763.0 L1188.2 763.0 L1189.2 763.0 L1189.2 768.9 L1190.2 768.9 L1190.2 768.9 L1191.2 768.9 L1191.2 768.9 L1192.2 768.9 L1192.2 758.7 L1193.2 758.7 L1193.2 764.7 L1194.2 764.7 L1194.2 771.5 L1195.2 771.5 L1195.2 766.7 L1196.2 766.7 L1196.2 768.9 L1197.2 768.9 L1197.2 761.4 L1198.2 761.4 L1198.2 771.5 L1199.3 771.5 L1199.3 766.7 L1200.3 766.7 L1200.3 763.0 L1201.3 763.0 L1201.3 760.0 L1202.3 760.0 L1202.3 766.7 L1203.3 766.7 L1203.3 771.5 L1204.3 771.5 L1204.3 755.2 L1205.3 755.2 L1205.3 771.5 L1206.3 771.5 L1206.3 763.0 L1207.3 763.0 L1207.3 764.7 L1208.3 764.7" fill="none" stroke="#c0c0c0" stroke-width="1"/><path d="M356.0 782.9 L357.1 782.9 L357.1 789.6 L358.1 789.6 L358.1 789.6 L359.1 789.6 L359.1 789.6 L360.1 789.6 L360.1 801.1 L361.1 801.1 L361.1 789.6 L362.1 789.6 L362.1 764.7 L363.1 764.7 L363.1 789.6 L364.1 789.6 L364.1 801.1 L365.1 801.1 L365.1 789.6 L366.1 789.6 L366.1 789.6 L367.1 789.6 L367.1 778.2 L368.1 778.2 L368.1 789.6 L369.2 789.6 L369.2 801.1 L370.2 801.1 L370.2 819.0 L371.2 819.0 L371.2 778.2 L372.2 778.2 L372.2 801.1 L373.2 801.1 L373.2 782.9 L374.2 782.9 L374.2 782.9 L375.2 782.9 L375.2 771.5 L376.2 771.5 L376.2 782.9 L377.2 782.9 L377.2 789.6 L378.2 789.6 L378.2 782.9 L379.2 782.9 L379.2 778.2 L380.3 778.2 L380.3 789.6 L381.3 789.6 L381.3 782.9 L382.3 782.9 L382.3 782.9 L383.3 782.9 L383.3 782.9 L384.3 782.9 L384.3 789.6 L385.3 789.6 L385.3 774.5 L386.3 774.5 L386.3 774.5 L387.3 774.5 L387.3 774.5 L388.3 774.5 L388.3 789.6 L389.3 789.6 L389.3 789.6 L390.3 789.6 L390.3 782.9 L391.3 782.9 L391.3 782.9 L392.4 782.9 L392.4 778.2 L393.4 778.2 L393.4 778.2 L394.4 778.2 L394.4 782.9 L395.4 782.9 L395.4 782.9 L396.4 782.9 L396.4 764.7 L397.4 764.7 L397.4 764.7 L398.4 764.7 L398.4 754.2 L399.4 754.2 L399.4 755.2 L400.4 755.2 L400.4 750.0 L401.4 750.0 L401.4 735.7 L402.4 735.7 L402.4 732.8 L403.4 732.8 L403.4 721.7 L404.5 721.7 L404.5 716.9 L405.5 716.9 L405.5 709.1 L406.5 709.1 L406.5 700.4 L407.5 700.4 L407.5 692.2 L408.5 692.2 L408.5 682.9 L409.5 682.9 L409.5 675.2 L410.5 675.2 L410.5 667.2 L411.5 667.2 L411.5 660.4 L412.5 660.4 L412.5 661.0 L413.5 661.0 L413.5 661.5 L414.5 661.5 L414.5 662.1 L415.6 662.1 L415.6 662.8 L416.6 662.8 L416.6 663.1 L417.6 663.1 L417.6 664.1 L418.6 664.1 L418.6 664.8 L419.6 664.8 L419.6 665.3 L420.6 665.3 L420.6 665.8 L421.6 665.8 L421.6 666.1 L422.6 666.1 L422.6 667.3 L423.6 667.3 L423.6 667.5 L424.6 667.5 L424.6 668.3 L425.6 668.3 L425.6 667.9 L426.6 667.9 L426.6 668.4 L427.7 668.4 L427.7 669.0 L428.7 669.0 L428.7 668.4 L429.7 668.4 L429.7 669.5 L430.7 669.5 L430.7 669.5 L431.7 669.5 L431.7 669.3 L432.7 669.3 L432.7 669.8 L433.7 669.8 L433.7 670.9 L434.7 670.9 L434.7 670.6 L435.7 670.6 L435.7 671.1 L436.7 671.1 L436.7 670.8 L437.7 670.8 L437.7 671.5 L438.8 671.5 L438.8 671.6 L439.8 671.6 L439.8 672.3 L440.8 672.3 L440.8 672.5 L441.8 672.5 L441.8 672.4 L442.8 672.4 L442.8 672.7 L443.8 672.7 L443.8 673.1 L444.8 673.1 L444.8 673.7 L445.8 673.7 L445.8 673.6 L446.8 673.6 L446.8 673.6 L447.8 673.6 L447.8 673.9 L448.8 673.9 L448.8 674.8 L449.8 674.8 L449.8 674.2 L450.9 674.2 L450.9 674.8 L451.9 674.8 L451.9 676.1 L452.9 676.1 L452.9 674.9 L453.9 674.9 L453.9 675.3 L454.9 675.3 L454.9 675.4 L455.9 675.4 L455.9 675.8 L456.9 675.8 L456.9 676.4 L457.9 676.4 L457.9 675.9 L458.9 675.9 L458.9 677.4 L459.9 677.4 L459.9 676.9 L460.9 676.9 L460.9 677.9 L461.9 677.9 L461.9 677.4 L463.0 677.4 L463.0 678.0 L464.0 678.0 L464.0 677.8 L465.0 677.8 L465.0 678.9 L466.0 678.9 L466.0 679.5 L467.0 679.5 L467.0 679.8 L468.0 679.8 L468.0 680.5 L469.0 680.5 L469.0 680.3 L470.0 680.3 L470.0 680.7 L471.0 680.7 L471.0 680.9 L472.0 680.9 L472.0 680.9 L473.0 680.9 L473.0 681.5 L474.1 681.5 L474.1 680.9 L475.1 680.9 L475.1 682.9 L476.1 682.9 L476.1 682.4 L477.1 682.4 L477.1 682.9 L478.1 682.9 L478.1 682.7 L479.1 682.7 L479.1 682.7 L480.1 682.7 L480.1 684.0 L481.1 684.0 L481.1 683.8 L482.1 683.8 L482.1 683.9 L483.1 683.9 L483.1 684.8 L484.1 684.8 L484.1 685.1 L485.1 685.1 L485.1 684.6 L486.2 684.6 L486.2 684.8 L487.2 684.8 L487.2 685.9 L488.2 685.9 L488.2 686.5 L489.2 686.5 L489.2 686.8 L490.2 686.8 L490.2 686.5 L491.2 686.5 L491.2 687.1 L492.2 687.1 L492.2 687.2 L493.2 687.2 L493.2 687.8 L494.2 687.8 L494.2 688.2 L495.2 688.2 L495.2 688.1 L496.2 688.1 L496.2 688.5 L497.3 688.5 L497.3 688.1 L498.3 688.1 L498.3 688.9 L499.3 688.9 L499.3 690.3 L500.3 690.3 L500.3 690.2 L501.3 690.2 L501.3 690.3 L502.3 690.3 L502.3 691.3 L503.3 691.3 L503.3 691.2 L504.3 691.2 L504.3 692.9 L505.3 692.9 L505.3 692.4 L506.3 692.4 L506.3 693.6 L507.3 693.6 L507.3 693.5 L508.3 693.5 L508.3 694.3 L509.4 694.3 L509.4 694.6 L510.4 694.6 L510.4 695.0 L511.4 695.0 L511.4 696.0 L512.4 696.0 L512.4 695.8 L513.4 695.8 L513.4 696.7 L514.4 696.7 L514.4 697.4 L515.4 697.4 L515.4 697.0 L516.4 697.0 L516.4 696.1 L517.4 696.1 L517.4 699.2 L518.4 699.2 L518.4 696.8 L519.4 696.8 L519.4 699.1 L520.4 699.1 L520.4 700.0 L521.5 700.0 L521.5 700.3 L522.5 700.3 L522.5 700.4 L523.5 700.4 L523.5 700.3 L524.5 700.3 L524.5 702.3 L525.5 702.3 L525.5 701.1 L526.5 701.1 L526.5 703.5 L527.5 703.5 L527.5 702.4 L528.5 702.4 L528.5 702.3 L529.5 702.3 L529.5 703.3 L530.5 703.3 L530.5 704.1 L531.5 704.1 L531.5 705.6 L532.6 705.6 L532.6 704.8 L533.6 704.8 L533.6 705.9 L534.6 705.9 L534.6 704.7 L535.6 704.7 L535.6 705.2 L536.6 705.2 L536.6 707.2 L537.6 707.2 L537.6 706.6 L538.6 706.6 L538.6 708.8 L539.6 708.8 L539.6 708.2 L540.6 708.2 L540.6 708.7 L541.6 708.7 L541.6 707.1 L542.6 707.1 L542.6 710.5 L543.6 710.5 L543.6 709.6 L544.7 709.6 L544.7 710.7 L545.7 710.7 L545.7 710.4 L546.7 710.4 L546.7 711.0 L547.7 711.0 L547.7 712.5 L548.7 712.5 L548.7 711.9 L549.7 711.9 L549.7 712.1 L550.7 712.1 L550.7 711.9 L551.7 711.9 L551.7 714.2 L552.7 714.2 L552.7 713.3 L553.7 713.3 L553.7 715.7 L554.7 715.7 L554.7 713.1 L555.8 713.1 L555.8 712.8 L556.8 712.8 L556.8 717.4 L557.8 717.4 L557.8 716.3 L558.8 716.3 L558.8 717.2 L559.8 717.2 L559.8 719.1 L560.8 719.1 L560.8 719.5 L561.8 719.5 L561.8 716.4 L562.8 716.4 L562.8 717.1 L563.8 717.1 L563.8 717.5 L564.8 717.5 L564.8 718.2 L565.8 718.2 L565.8 717.5 L566.8 717.5 L566.8 723.5 L567.9 723.5 L567.9 720.6 L568.9 720.6 L568.9 719.7 L569.9 719.7 L569.9 719.1 L570.9 719.1 L570.9 722.7 L571.9 722.7 L571.9 723.8 L572.9 723.8 L572.9 725.1 L573.9 725.1 L573.9 723.8 L574.9 723.8 L574.9 721.1 L575.9 721.1 L575.9 722.6 L576.9 722.6 L576.9 724.4 L577.9 724.4 L577.9 722.4 L578.9 722.4 L578.9 724.1 L580.0 724.1 L580.0 726.5 L581.0 726.5 L581.0 724.9 L582.0 724.9 L582.0 725.9 L583.0 725.9 L583.0 728.4 L584.0 728.4 L584.0 727.0 L585.0 727.0 L585.0 732.5 L586.0 732.5 L586.0 728.8 L587.0 728.8 L587.0 727.4 L588.0 727.4 L588.0 729.9 L589.0 729.9 L589.0 729.9 L590.0 729.9 L590.0 728.0 L591.1 728.0 L591.1 729.9 L592.1 729.9 L592.1 731.0 L593.1 731.0 L593.1 731.5 L594.1 731.5 L594.1 725.1 L595.1 725.1 L595.1 730.1 L596.1 730.1 L596.1 728.2 L597.1 728.2 L597.1 731.8 L598.1 731.8 L598.1 733.6 L599.1 733.6 L599.1 731.0 L600.1 731.0 L600.1 731.5 L601.1 731.5 L601.1 729.4 L602.1 729.4 L602.1 732.5 L603.2 732.5 L603.2 732.3 L604.2 732.3 L604.2 734.2 L605.2 734.2 L605.2 731.5 L606.2 731.5 L606.2 737.0 L607.2 737.0 L607.2 740.1 L608.2 740.1 L608.2 736.0 L609.2 736.0 L609.2 738.5 L610.2 738.5 L610.2 735.4 L611.2 735.4 L611.2 736.0 L612.2 736.0 L612.2 736.0 L613.2 736.0 L613.2 736.0 L614.3 736.0 L614.3 741.8 L615.3 741.8 L615.3 743.2 L616.3 743.2 L616.3 736.0 L617.3 736.0 L617.3 741.8 L618.3 741.8 L618.3 742.3 L619.3 742.3 L619.3 738.1 L620.3 738.1 L620.3 739.7 L621.3 739.7 L621.3 741.8 L622.3 741.8 L622.3 742.3 L623.3 742.3 L623.3 747.2 L624.3 747.2 L624.3 740.9 L625.3 740.9 L625.3 744.3 L626.4 744.3 L626.4 743.8 L627.4 743.8 L627.4 740.5 L628.4 740.5 L628.4 742.8 L629.4 742.8 L629.4 744.8 L630.4 744.8 L630.4 746.0 L631.4 746.0 L631.4 740.5 L632.4 740.5 L632.4 753.3 L633.4 753.3 L633.4 752.4 L634.4 752.4 L634.4 746.0 L635.4 746.0 L635.4 746.0 L636.4 746.0 L636.4 746.6 L637.4 746.6 L637.4 746.0 L638.5 746.0 L638.5 754.2 L639.5 754.2 L639.5 752.4 L640.5 752.4 L640.5 752.4 L641.5 752.4 L641.5 748.5 L642.5 748.5 L642.5 743.2 L643.5 743.2 L643.5 747.8 L644.5 747.8 L644.5 747.8 L645.5 747.8 L645.5 747.2 L646.5 747.2 L646.5 756.3 L647.5 756.3 L647.5 748.5 L648.5 748.5 L648.5 752.4 L649.6 752.4 L649.6 753.3 L650.6 753.3 L650.6 751.5 L651.6 751.5 L651.6 761.4 L652.6 761.4 L652.6 748.5 L653.6 748.5 L653.6 747.8 L654.6 747.8 L654.6 763.0 L655.6 763.0 L655.6 747.2 L656.6 747.2 L656.6 749.2 L657.6 749.2 L657.6 749.2 L658.6 749.2 L658.6 755.2 L659.6 755.2 L659.6 749.2 L660.6 749.2 L660.6 758.7 L661.7 758.7 L661.7 756.3 L662.7 756.3 L662.7 771.5 L663.7 771.5 L663.7 756.3 L664.7 756.3 L664.7 750.7 L665.7 750.7 L665.7 752.4 L666.7 752.4 L666.7 758.7 L667.7 758.7 L667.7 755.2 L668.7 755.2 L668.7 755.2 L669.7 755.2 L669.7 760.0 L670.7 760.0 L670.7 755.2 L671.7 755.2 L671.7 754.2 L672.8 754.2 L672.8 756.3 L673.8 756.3 L673.8 750.7 L674.8 750.7 L674.8 753.3 L675.8 753.3 L675.8 761.4 L676.8 761.4 L676.8 761.4 L677.8 761.4 L677.8 764.7 L678.8 764.7 L678.8 757.4 L679.8 757.4 L679.8 757.4 L680.8 757.4 L680.8 763.0 L681.8 763.0 L681.8 768.9 L682.8 768.9 L682.8 757.4 L683.8 757.4 L683.8 757.4 L684.9 757.4 L684.9 760.0 L685.9 760.0 L685.9 757.4 L686.9 757.4 L686.9 761.4 L687.9 761.4 L687.9 761.4 L688.9 761.4 L688.9 760.0 L689.9 760.0 L689.9 764.7 L690.9 764.7 L690.9 766.7 L691.9 766.7 L691.9 766.7 L692.9 766.7 L692.9 766.7 L693.9 766.7 L693.9 768.9 L694.9 768.9 L694.9 774.5 L695.9 774.5 L695.9 760.0 L697.0 760.0 L697.0 763.0 L698.0 763.0 L698.0 757.4 L699.0 757.4 L699.0 761.4 L700.0 761.4 L700.0 766.7 L701.0 766.7 L701.0 761.4 L702.0 761.4 L702.0 761.4 L703.0 761.4 L703.0 768.9 L704.0 768.9 L704.0 763.0 L705.0 763.0 L705.0 771.5 L706.0 771.5 L706.0 757.4 L707.0 757.4 L707.0 768.9 L708.1 768.9 L708.1 761.4 L709.1 761.4 L709.1 763.0 L710.1 763.0 L710.1 768.9 L711.1 768.9 L711.1 764.7 L712.1 764.7 L712.1 766.7 L713.1 766.7 L713.1 768.9 L714.1 768.9 L714.1 766.7 L715.1 766.7 L715.1 763.0 L716.1 763.0 L716.1 778.2 L717.1 778.2 L717.1 782.9 L718.1 782.9 L718.1 766.7 L719.1 766.7 L719.1 774.5 L720.2 774.5 L720.2 766.7 L721.2 766.7 L721.2 771.5 L722.2 771.5 L722.2 768.9 L723.2 768.9 L723.2 764.7 L724.2 764.7 L724.2 764.7 L725.2 764.7 L725.2 774.5 L726.2 774.5 L726.2 763.0 L727.2 763.0 L727.2 768.9 L728.2 768.9 L728.2 764.7 L729.2 764.7 L729.2 760.0 L730.2 760.0 L730.2 768.9 L731.3 768.9 L731.3 771.5 L732.3 771.5 L732.3 763.0 L733.3 763.0 L733.3 782.9 L734.3 782.9 L734.3 764.7 L735.3 764.7 L735.3 768.9 L736.3 768.9 L736.3 766.7 L737.3 766.7 L737.3 760.0 L738.3 760.0 L738.3 763.0 L739.3 763.0 L739.3 766.7 L740.3 766.7 L740.3 766.7 L741.3 766.7 L741.3 763.0 L742.3 763.0 L742.3 766.7 L743.4 766.7 L743.4 761.4 L744.4 761.4 L744.4 778.2 L745.4 778.2 L745.4 761.4 L746.4 761.4 L746.4 771.5 L747.4 771.5 L747.4 764.7 L748.4 764.7 L748.4 766.7 L749.4 766.7 L749.4 763.0 L750.4 763.0 L750.4 774.5 L751.4 774.5 L751.4 768.9 L752.4 768.9 L752.4 764.7 L753.4 764.7 L753.4 774.5 L754.4 774.5 L754.4 778.2 L755.5 778.2 L755.5 789.6 L756.5 789.6 L756.5 774.5 L757.5 774.5 L757.5 766.7 L758.5 766.7 L758.5 782.9 L759.5 782.9 L759.5 771.5 L760.5 771.5 L760.5 766.7 L761.5 766.7 L761.5 768.9 L762.5 768.9 L762.5 774.5 L763.5 774.5 L763.5 768.9 L764.5 768.9 L764.5 768.9 L765.5 768.9 L765.5 768.9 L766.6 768.9 L766.6 789.6 L767.6 789.6 L767.6 782.9 L768.6 782.9 L768.6 778.2 L769.6 778.2 L769.6 778.2 L770.6 778.2 L770.6 782.9 L771.6 782.9 L771.6 778.2 L772.6 778.2 L772.6 789.6 L773.6 789.6 L773.6 766.7 L774.6 766.7 L774.6 766.7 L775.6 766.7 L775.6 771.5 L776.6 771.5 L776.6 782.9 L777.6 782.9 L777.6 761.4 L778.7 761.4 L778.7 774.5 L779.7 774.5 L779.7 771.5 L780.7 771.5 L780.7 774.5 L781.7 774.5 L781.7 766.7 L782.7 766.7 L782.7 766.7 L783.7 766.7 L783.7 766.7 L784.7 766.7 L784.7 771.5 L785.7 771.5 L785.7 782.9 L786.7 782.9 L786.7 771.5 L787.7 771.5 L787.7 766.7 L788.7 766.7 L788.7 768.9 L789.8 768.9 L789.8 782.9 L790.8 782.9 L790.8 789.6 L791.8 789.6 L791.8 782.9 L792.8 782.9 L792.8 768.9 L793.8 768.9 L793.8 774.5 L794.8 774.5 L794.8 766.7 L795.8 766.7 L795.8 768.9 L796.8 768.9 L796.8 819.0 L797.8 819.0 L797.8 778.2 L798.8 778.2 L798.8 771.5 L799.8 771.5 L799.8 782.9 L800.8 782.9 L800.8 778.2 L801.9 778.2 L801.9 778.2 L802.9 778.2 L802.9 789.6 L803.9 789.6 L803.9 768.9 L804.9 768.9 L804.9 782.9 L805.9 782.9 L805.9 778.2 L806.9 778.2 L806.9 774.5 L807.9 774.5 L807.9 761.4 L808.9 761.4 L808.9 778.2 L809.9 778.2 L809.9 774.5 L810.9 774.5 L810.9 771.5 L811.9 771.5 L811.9 766.7 L812.9 766.7 L812.9 778.2 L814.0 778.2 L814.0 771.5 L815.0 771.5 L815.0 764.7 L816.0 764.7 L816.0 768.9 L817.0 768.9 L817.0 782.9 L818.0 782.9 L818.0 766.7 L819.0 766.7 L819.0 774.5 L820.0 774.5 L820.0 774.5 L821.0 774.5 L821.0 801.1 L822.0 801.1 L822.0 771.5 L823.0 771.5 L823.0 771.5 L824.0 771.5 L824.0 771.5 L825.1 771.5 L825.1 764.7 L826.1 764.7 L826.1 782.9 L827.1 782.9 L827.1 771.5 L828.1 771.5 L828.1 771.5 L829.1 771.5 L829.1 771.5 L830.1 771.5 L830.1 768.9 L831.1 768.9 L831.1 761.4 L832.1 761.4 L832.1 782.9 L833.1 782.9 L833.1 778.2 L834.1 778.2 L834.1 778.2 L835.1 778.2 L835.1 789.6 L836.1 789.6 L836.1 764.7 L837.2 764.7 L837.2 789.6 L838.2 789.6 L838.2 764.7 L839.2 764.7 L839.2 774.5 L840.2 774.5 L840.2 782.9 L841.2 782.9 L841.2 771.5 L842.2 771.5 L842.2 771.5 L843.2 771.5 L843.2 764.7 L844.2 764.7 L844.2 778.2 L845.2 778.2 L845.2 768.9 L846.2 768.9 L846.2 774.5 L847.2 774.5 L847.2 789.6 L848.3 789.6 L848.3 782.9 L849.3 782.9 L849.3 774.5 L850.3 774.5 L850.3 782.9 L851.3 782.9 L851.3 771.5 L852.3 771.5 L852.3 766.7 L853.3 766.7 L853.3 771.5 L854.3 771.5 L854.3 778.2 L855.3 778.2 L855.3 782.9 L856.3 782.9 L856.3 768.9 L857.3 768.9 L857.3 782.9 L858.3 782.9 L858.3 774.5 L859.3 774.5 L859.3 782.9 L860.4 782.9 L860.4 774.5 L861.4 774.5 L861.4 768.9 L862.4 768.9 L862.4 763.0 L863.4 763.0 L863.4 771.5 L864.4 771.5 L864.4 766.7 L865.4 766.7 L865.4 771.5 L866.4 771.5 L866.4 768.9 L867.4 768.9 L867.4 778.2 L868.4 778.2 L868.4 782.9 L869.4 782.9 L869.4 774.5 L870.4 774.5 L870.4 771.5 L871.4 771.5 L871.4 771.5 L872.5 771.5 L872.5 766.7 L873.5 766.7 L873.5 774.5 L874.5 774.5 L874.5 778.2 L875.5 778.2 L875.5 774.5 L876.5 774.5 L876.5 771.5 L877.5 771.5 L877.5 771.5 L878.5 771.5 L878.5 766.7 L879.5 766.7 L879.5 771.5 L880.5 771.5 L880.5 801.1 L881.5 801.1 L881.5 774.5 L882.5 774.5 L882.5 768.9 L883.6 768.9 L883.6 774.5 L884.6 774.5 L884.6 789.6 L885.6 789.6 L885.6 771.5 L886.6 771.5 L886.6 761.4 L887.6 761.4 L887.6 761.4 L888.6 761.4 L888.6 789.6 L889.6 789.6 L889.6 789.6 L890.6 789.6 L890.6 778.2 L891.6 778.2 L891.6 778.2 L892.6 778.2 L892.6 778.2 L893.6 778.2 L893.6 768.9 L894.6 768.9 L894.6 778.2 L895.7 778.2 L895.7 771.5 L896.7 771.5 L896.7 782.9 L897.7 782.9 L897.7 782.9 L898.7 782.9 L898.7 774.5 L899.7 774.5 L899.7 766.7 L900.7 766.7 L900.7 771.5 L901.7 771.5 L901.7 764.7 L902.7 764.7 L902.7 771.5 L903.7 771.5 L903.7 789.6 L904.7 789.6 L904.7 774.5 L905.7 774.5 L905.7 778.2 L906.8 778.2 L906.8 774.5 L907.8 774.5 L907.8 778.2 L908.8 778.2 L908.8 782.9 L909.8 782.9 L909.8 771.5 L910.8 771.5 L910.8 778.2 L911.8 778.2 L911.8 768.9 L912.8 768.9 L912.8 768.9 L913.8 768.9 L913.8 774.5 L914.8 774.5 L914.8 782.9 L915.8 782.9 L915.8 774.5 L916.8 774.5 L916.8 774.5 L917.8 774.5 L917.8 774.5 L918.9 774.5 L918.9 760.0 L919.9 760.0 L919.9 782.9 L920.9 782.9 L920.9 771.5 L921.9 771.5 L921.9 774.5 L922.9 774.5 L922.9 778.2 L923.9 778.2 L923.9 761.4 L924.9 761.4 L924.9 782.9 L925.9 782.9 L925.9 768.9 L926.9 768.9 L926.9 778.2 L927.9 778.2 L927.9 789.6 L928.9 789.6 L928.9 768.9 L929.9 768.9 L929.9 774.5 L931.0 774.5 L931.0 774.5 L932.0 774.5 L932.0 782.9 L933.0 782.9 L933.0 771.5 L934.0 771.5 L934.0 771.5 L935.0 771.5 L935.0 778.2 L936.0 778.2 L936.0 774.5 L937.0 774.5 L937.0 782.9 L938.0 782.9 L938.0 782.9 L939.0 782.9 L939.0 774.5 L940.0 774.5 L940.0 768.9 L941.0 768.9 L941.0 782.9 L942.1 782.9 L942.1 801.1 L943.1 801.1 L943.1 782.9 L944.1 782.9 L944.1 778.2 L945.1 778.2 L945.1 774.5 L946.1 774.5 L946.1 789.6 L947.1 789.6 L947.1 763.0 L948.1 763.0 L948.1 764.7 L949.1 764.7 L949.1 771.5 L950.1 771.5 L950.1 782.9 L951.1 782.9 L951.1 771.5 L952.1 771.5 L952.1 782.9 L953.1 782.9 L953.1 768.9 L954.2 768.9 L954.2 768.9 L955.2 768.9 L955.2 774.5 L956.2 774.5 L956.2 774.5 L957.2 774.5 L957.2 766.7 L958.2 766.7 L958.2 771.5 L959.2 771.5 L959.2 778.2 L960.2 778.2 L960.2 763.0 L961.2 763.0 L961.2 782.9 L962.2 782.9 L962.2 771.5 L963.2 771.5 L963.2 764.7 L964.2 764.7 L964.2 768.9 L965.3 768.9 L965.3 764.7 L966.3 764.7 L966.3 774.5 L967.3 774.5 L967.3 801.1 L968.3 801.1 L968.3 774.5 L969.3 774.5 L969.3 768.9 L970.3 768.9 L970.3 764.7 L971.3 764.7 L971.3 766.7 L972.3 766.7 L972.3 771.5 L973.3 771.5 L973.3 774.5 L974.3 774.5 L974.3 774.5 L975.3 774.5 L975.3 774.5 L976.3 774.5 L976.3 782.9 L977.4 782.9 L977.4 782.9 L978.4 782.9 L978.4 766.7 L979.4 766.7 L979.4 771.5 L980.4 771.5 L980.4 768.9 L981.4 768.9 L981.4 771.5 L982.4 771.5 L982.4 766.7 L983.4 766.7 L983.4 778.2 L984.4 778.2 L984.4 764.7 L985.4 764.7 L985.4 771.5 L986.4 771.5 L986.4 771.5 L987.4 771.5 L987.4 774.5 L988.4 774.5 L988.4 778.2 L989.5 778.2 L989.5 789.6 L990.5 789.6 L990.5 771.5 L991.5 771.5 L991.5 782.9 L992.5 782.9 L992.5 768.9 L993.5 768.9 L993.5 768.9 L994.5 768.9 L994.5 774.5 L995.5 774.5 L995.5 766.7 L996.5 766.7 L996.5 782.9 L997.5 782.9 L997.5 778.2 L998.5 778.2 L998.5 768.9 L999.5 768.9 L999.5 782.9 L1000.6 782.9 L1000.6 782.9 L1001.6 782.9 L1001.6 768.9 L1002.6 768.9 L1002.6 774.5 L1003.6 774.5 L1003.6 768.9 L1004.6 768.9 L1004.6 763.0 L1005.6 763.0 L1005.6 771.5 L1006.6 771.5 L1006.6 801.1 L1007.6 801.1 L1007.6 782.9 L1008.6 782.9 L1008.6 782.9 L1009.6 782.9 L1009.6 768.9 L1010.6 768.9 L1010.6 782.9 L1011.6 782.9 L1011.6 774.5 L1012.7 774.5 L1012.7 789.6 L1013.7 789.6 L1013.7 768.9 L1014.7 768.9 L1014.7 778.2 L1015.7 778.2 L1015.7 771.5 L1016.7 771.5 L1016.7 774.5 L1017.7 774.5 L1017.7 782.9 L1018.7 782.9 L1018.7 764.7 L1019.7 764.7 L1019.7 768.9 L1020.7 768.9 L1020.7 771.5 L1021.7 771.5 L1021.7 778.2 L1022.7 778.2 L1022.7 766.7 L1023.8 766.7 L1023.8 782.9 L1024.8 782.9 L1024.8 782.9 L1025.8 782.9 L1025.8 778.2 L1026.8 778.2 L1026.8 782.9 L1027.8 782.9 L1027.8 778.2 L1028.8 778.2 L1028.8 766.7 L1029.8 766.7 L1029.8 778.2 L1030.8 778.2 L1030.8 768.9 L1031.8 768.9 L1031.8 774.5 L1032.8 774.5 L1032.8 774.5 L1033.8 774.5 L1033.8 763.0 L1034.8 763.0 L1034.8 778.2 L1035.9 778.2 L1035.9 782.9 L1036.9 782.9 L1036.9 768.9 L1037.9 768.9 L1037.9 782.9 L1038.9 782.9 L1038.9 771.5 L1039.9 771.5 L1039.9 768.9 L1040.9 768.9 L1040.9 771.5 L1041.9 771.5 L1041.9 789.6 L1042.9 789.6 L1042.9 771.5 L1043.9 771.5 L1043.9 782.9 L1044.9 782.9 L1044.9 778.2 L1045.9 778.2 L1045.9 768.9 L1046.9 768.9 L1046.9 768.9 L1048.0 768.9 L1048.0 778.2 L1049.0 778.2 L1049.0 774.5 L1050.0 774.5 L1050.0 782.9 L1051.0 782.9 L1051.0 771.5 L1052.0 771.5 L1052.0 774.5 L1053.0 774.5 L1053.0 768.9 L1054.0 768.9 L1054.0 782.9 L1055.0 782.9 L1055.0 763.0 L1056.0 763.0 L1056.0 774.5 L1057.0 774.5 L1057.0 782.9 L1058.0 782.9 L1058.0 789.6 L1059.1 789.6 L1059.1 774.5 L1060.1 774.5 L1060.1 764.7 L1061.1 764.7 L1061.1 789.6 L1062.1 789.6 L1062.1 763.0 L1063.1 763.0 L1063.1 766.7 L1064.1 766.7 L1064.1 774.5 L1065.1 774.5 L1065.1 778.2 L1066.1 778.2 L1066.1 771.5 L1067.1 771.5 L1067.1 782.9 L1068.1 782.9 L1068.1 789.6 L1069.1 789.6 L1069.1 778.2 L1070.1 778.2 L1070.1 763.0 L1071.2 763.0 L1071.2 768.9 L1072.2 768.9 L1072.2 778.2 L1073.2 778.2 L1073.2 778.2 L1074.2 778.2 L1074.2 771.5 L1075.2 771.5 L1075.2 774.5 L1076.2 774.5 L1076.2 771.5 L1077.2 771.5 L1077.2 801.1 L1078.2 801.1 L1078.2 774.5 L1079.2 774.5 L1079.2 801.1 L1080.2 801.1 L1080.2 782.9 L1081.2 782.9 L1081.2 768.9 L1082.3 768.9 L1082.3 768.9 L1083.3 768.9 L1083.3 782.9 L1084.3 782.9 L1084.3 778.2 L1085.3 778.2 L1085.3 771.5 L1086.3 771.5 L1086.3 763.0 L1087.3 763.0 L1087.3 774.5 L1088.3 774.5 L1088.3 774.5 L1089.3 774.5 L1089.3 778.2 L1090.3 778.2 L1090.3 789.6 L1091.3 789.6 L1091.3 771.5 L1092.3 771.5 L1092.3 768.9 L1093.3 768.9 L1093.3 774.5 L1094.4 774.5 L1094.4 778.2 L1095.4 778.2 L1095.4 774.5 L1096.4 774.5 L1096.4 778.2 L1097.4 778.2 L1097.4 766.7 L1098.4 766.7 L1098.4 768.9 L1099.4 768.9 L1099.4 801.1 L1100.4 801.1 L1100.4 771.5 L1101.4 771.5 L1101.4 774.5 L1102.4 774.5 L1102.4 774.5 L1103.4 774.5 L1103.4 774.5 L1104.4 774.5 L1104.4 778.2 L1105.4 778.2 L1105.4 774.5 L1106.5 774.5 L1106.5 771.5 L1107.5 771.5 L1107.5 789.6 L1108.5 789.6 L1108.5 782.9 L1109.5 782.9 L1109.5 766.7 L1110.5 766.7 L1110.5 771.5 L1111.5 771.5 L1111.5 778.2 L1112.5 778.2 L1112.5 801.1 L1113.5 801.1 L1113.5 774.5 L1114.5 774.5 L1114.5 764.7 L1115.5 764.7 L1115.5 768.9 L1116.5 768.9 L1116.5 778.2 L1117.6 778.2 L1117.6 768.9 L1118.6 768.9 L1118.6 782.9 L1119.6 782.9 L1119.6 768.9 L1120.6 768.9 L1120.6 789.6 L1121.6 789.6 L1121.6 789.6 L1122.6 789.6 L1122.6 789.6 L1123.6 789.6 L1123.6 771.5 L1124.6 771.5 L1124.6 789.6 L1125.6 789.6 L1125.6 789.6 L1126.6 789.6 L1126.6 778.2 L1127.6 778.2 L1127.6 782.9 L1128.6 782.9 L1128.6 774.5 L1129.7 774.5 L1129.7 771.5 L1130.7 771.5 L1130.7 768.9 L1131.7 768.9 L1131.7 774.5 L1132.7 774.5 L1132.7 789.6 L1133.7 789.6 L1133.7 771.5 L1134.7 771.5 L1134.7 801.1 L1135.7 801.1 L1135.7 761.4 L1136.7 761.4 L1136.7 771.5 L1137.7 771.5 L1137.7 774.5 L1138.7 774.5 L1138.7 782.9 L1139.7 782.9 L1139.7 782.9 L1140.8 782.9 L1140.8 766.7 L1141.8 766.7 L1141.8 789.6 L1142.8 789.6 L1142.8 782.9 L1143.8 782.9 L1143.8 778.2 L1144.8 778.2 L1144.8 789.6 L1145.8 789.6 L1145.8 766.7 L1146.8 766.7 L1146.8 782.9 L1147.8 782.9 L1147.8 778.2 L1148.8 778.2 L1148.8 778.2 L1149.8 778.2 L1149.8 819.0 L1150.8 819.0 L1150.8 774.5 L1151.8 774.5 L1151.8 778.2 L1152.9 778.2 L1152.9 778.2 L1153.9 778.2 L1153.9 771.5 L1154.9 771.5 L1154.9 782.9 L1155.9 782.9 L1155.9 789.6 L1156.9 789.6 L1156.9 778.2 L1157.9 778.2 L1157.9 778.2 L1158.9 778.2 L1158.9 774.5 L1159.9 774.5 L1159.9 782.9 L1160.9 782.9 L1160.9 789.6 L1161.9 789.6 L1161.9 766.7 L1162.9 766.7 L1162.9 778.2 L1163.9 778.2 L1163.9 771.5 L1165.0 771.5 L1165.0 789.6 L1166.0 789.6 L1166.0 778.2 L1167.0 778.2 L1167.0 774.5 L1168.0 774.5 L1168.0 782.9 L1169.0 782.9 L1169.0 789.6 L1170.0 789.6 L1170.0 771.5 L1171.0 771.5 L1171.0 782.9 L1172.0 782.9 L1172.0 778.2 L1173.0 778.2 L1173.0 774.5 L1174.0 774.5 L1174.0 774.5 L1175.0 774.5 L1175.0 778.2 L1176.1 778.2 L1176.1 782.9 L1177.1 782.9 L1177.1 766.7 L1178.1 766.7 L1178.1 764.7 L1179.1 764.7 L1179.1 771.5 L1180.1 771.5 L1180.1 778.2 L1181.1 778.2 L1181.1 771.5 L1182.1 771.5 L1182.1 766.7 L1183.1 766.7 L1183.1 760.0 L1184.1 760.0 L1184.1 778.2 L1185.1 778.2 L1185.1 774.5 L1186.1 774.5 L1186.1 766.7 L1187.1 766.7 L1187.1 789.6 L1188.2 789.6 L1188.2 782.9 L1189.2 782.9 L1189.2 768.9 L1190.2 768.9 L1190.2 778.2 L1191.2 778.2 L1191.2 782.9 L1192.2 782.9 L1192.2 782.9 L1193.2 782.9 L1193.2 774.5 L1194.2 774.5 L1194.2 766.7 L1195.2 766.7 L1195.2 768.9 L1196.2 768.9 L1196.2 778.2 L1197.2 778.2 L1197.2 778.2 L1198.2 778.2 L1198.2 771.5 L1199.3 771.5 L1199.3 789.6 L1200.3 789.6 L1200.3 789.6 L1201.3 789.6 L1201.3 768.9 L1202.3 768.9 L1202.3 774.5 L1203.3 774.5 L1203.3 789.6 L1204.3 789.6 L1204.3 801.1 L1205.3 801.1 L1205.3 778.2 L1206.3 778.2 L1206.3 764.7 L1207.3 764.7 L1207.3 766.7 L1208.3 766.7" fill="none" stroke="#c0c0c0" stroke-width="1"/><path d="M356.0 801.1 L357.1 801.1 L357.1 778.2 L358.1 778.2 L358.1 789.6 L359.1 789.6 L359.1 774.5 L360.1 774.5 L360.1 782.9 L361.1 782.9 L361.1 778.2 L362.1 778.2 L362.1 789.6 L363.1 789.6 L363.1 778.2 L364.1 778.2 L364.1 789.6 L365.1 789.6 L365.1 801.1 L366.1 801.1 L366.1 778.2 L367.1 778.2 L367.1 778.2 L368.1 778.2 L368.1 819.0 L369.2 819.0 L369.2 789.6 L370.2 789.6 L370.2 801.1 L371.2 801.1 L371.2 778.2 L372.2 778.2 L372.2 782.9 L373.2 782.9 L373.2 819.0 L374.2 819.0 L374.2 801.1 L375.2 801.1 L375.2 801.1 L376.2 801.1 L376.2 782.9 L377.2 782.9 L377.2 789.6 L378.2 789.6 L378.2 782.9 L379.2 782.9 L379.2 801.1 L380.3 801.1 L380.3 789.6 L381.3 789.6 L381.3 789.6 L382.3 789.6 L382.3 782.9 L383.3 782.9 L383.3 778.2 L384.3 778.2 L384.3 774.5 L385.3 774.5 L385.3 782.9 L386.3 782.9 L386.3 789.6 L387.3 789.6 L387.3 778.2 L388.3 778.2 L388.3 789.6 L389.3 789.6 L389.3 778.2 L390.3 778.2 L390.3 789.6 L391.3 789.6 L391.3 801.1 L392.4 801.1 L392.4 771.5 L393.4 771.5 L393.4 819.0 L394.4 819.0 L394.4 801.1 L395.4 801.1 L395.4 778.2 L396.4 778.2 L396.4 771.5 L397.4 771.5 L397.4 766.7 L398.4 766.7 L398.4 761.4 L399.4 761.4 L399.4 756.3 L400.4 756.3 L400.4 755.2 L401.4 755.2 L401.4 744.8 L402.4 744.8 L402.4 738.1 L403.4 738.1 L403.4 733.4 L404.5 733.4 L404.5 723.3 L405.5 723.3 L405.5 718.8 L406.5 718.8 L406.5 707.6 L407.5 707.6 L407.5 698.7 L408.5 698.7 L408.5 690.5 L409.5 690.5 L409.5 680.7 L410.5 680.7 L410.5 672.8 L411.5 672.8 L411.5 665.8 L412.5 665.8 L412.5 666.5 L413.5 666.5 L413.5 667.1 L414.5 667.1 L414.5 667.1 L415.6 667.1 L415.6 668.1 L416.6 668.1 L416.6 669.4 L417.6 669.4 L417.6 669.4 L418.6 669.4 L418.6 669.8 L419.6 669.8 L419.6 670.8 L420.6 670.8 L420.6 671.6 L421.6 671.6 L421.6 672.4 L422.6 672.4 L422.6 673.5 L423.6 673.5 L423.6 673.7 L424.6 673.7 L424.6 673.3 L425.6 673.3 L425.6 674.6 L426.6 674.6 L426.6 674.5 L427.7 674.5 L427.7 674.5 L428.7 674.5 L428.7 675.4 L429.7 675.4 L429.7 675.4 L430.7 675.4 L430.7 675.0 L431.7 675.0 L431.7 675.2 L432.7 675.2 L432.7 675.6 L433.7 675.6 L433.7 676.3 L434.7 676.3 L434.7 675.8 L435.7 675.8 L435.7 677.2 L436.7 677.2 L436.7 676.9 L437.7 676.9 L437.7 676.9 L438.8 676.9 L438.8 676.8 L439.8 676.8 L439.8 678.3 L440.8 678.3 L440.8 677.8 L441.8 677.8 L441.8 678.1 L442.8 678.1 L442.8 677.9 L443.8 677.9 L443.8 678.4 L444.8 678.4 L444.8 678.9 L445.8 678.9 L445.8 679.3 L446.8 679.3 L446.8 679.0 L447.8 679.0 L447.8 680.5 L448.8 680.5 L448.8 679.9 L449.8 679.9 L449.8 680.4 L450.9 680.4 L450.9 680.4 L451.9 680.4 L451.9 680.9 L452.9 680.9 L452.9 681.0 L453.9 681.0 L453.9 681.0 L454.9 681.0 L454.9 681.9 L455.9 681.9 L455.9 681.3 L456.9 681.3 L456.9 682.5 L457.9 682.5 L457.9 682.5 L458.9 682.5 L458.9 682.9 L459.9 682.9 L459.9 684.0 L460.9 684.0 L460.9 682.8 L461.9 682.8 L461.9 683.7 L463.0 683.7 L463.0 683.9 L464.0 683.9 L464.0 684.0 L465.0 684.0 L465.0 684.6 L466.0 684.6 L466.0 685.0 L467.0 685.0 L467.0 685.0 L468.0 685.0 L468.0 685.5 L469.0 685.5 L469.0 685.4 L470.0 685.4 L470.0 684.9 L471.0 684.9 L471.0 686.8 L472.0 686.8 L472.0 686.7 L473.0 686.7 L473.0 687.3 L474.1 687.3 L474.1 687.4 L475.1 687.4 L475.1 689.0 L476.1 689.0 L476.1 687.7 L477.1 687.7 L477.1 688.1 L478.1 688.1 L478.1 688.8 L479.1 688.8 L479.1 689.4 L480.1 689.4 L480.1 689.7 L481.1 689.7 L481.1 688.9 L482.1 688.9 L482.1 689.9 L483.1 689.9 L483.1 690.6 L484.1 690.6 L484.1 690.3 L485.1 690.3 L485.1 690.2 L486.2 690.2 L486.2 690.6 L487.2 690.6 L487.2 691.3 L488.2 691.3 L488.2 690.4 L489.2 690.4 L489.2 692.2 L490.2 692.2 L490.2 691.7 L491.2 691.7 L491.2 692.7 L492.2 692.7 L492.2 694.0 L493.2 694.0 L493.2 693.5 L494.2 693.5 L494.2 693.8 L495.2 693.8 L495.2 694.7 L496.2 694.7 L496.2 693.8 L497.3 693.8 L497.3 693.6 L498.3 693.6 L498.3 695.3 L499.3 695.3 L499.3 695.2 L500.3 695.2 L500.3 695.8 L501.3 695.8 L501.3 697.0 L502.3 697.0 L502.3 695.6 L503.3 695.6 L503.3 698.6 L504.3 698.6 L504.3 699.2 L505.3 699.2 L505.3 698.1 L506.3 698.1 L506.3 698.9 L507.3 698.9 L507.3 698.7 L508.3 698.7 L508.3 700.1 L509.4 700.1 L509.4 699.5 L510.4 699.5 L510.4 700.4 L511.4 700.4 L511.4 700.7 L512.4 700.7 L512.4 701.8 L513.4 701.8 L513.4 702.4 L514.4 702.4 L514.4 702.8 L515.4 702.8 L515.4 702.6 L516.4 702.6 L516.4 703.6 L517.4 703.6 L517.4 703.8 L518.4 703.8 L518.4 702.1 L519.4 702.1 L519.4 704.0 L520.4 704.0 L520.4 705.8 L521.5 705.8 L521.5 704.8 L522.5 704.8 L522.5 705.0 L523.5 705.0 L523.5 707.1 L524.5 707.1 L524.5 707.5 L525.5 707.5 L525.5 707.6 L526.5 707.6 L526.5 708.9 L527.5 708.9 L527.5 709.3 L528.5 709.3 L528.5 709.8 L529.5 709.8 L529.5 709.6 L530.5 709.6 L530.5 709.1 L531.5 709.1 L531.5 709.7 L532.6 709.7 L532.6 710.7 L533.6 710.7 L533.6 710.6 L534.6 710.6 L534.6 710.7 L535.6 710.7 L535.6 712.9 L536.6 712.9 L536.6 713.6 L537.6 713.6 L537.6 710.8 L538.6 710.8 L538.6 712.6 L539.6 712.6 L539.6 713.5 L540.6 713.5 L540.6 715.8 L541.6 715.8 L541.6 714.0 L542.6 714.0 L542.6 714.4 L543.6 714.4 L543.6 713.4 L544.7 713.4 L544.7 715.9 L545.7 715.9 L545.7 716.7 L546.7 716.7 L546.7 715.3 L547.7 715.3 L547.7 718.6 L548.7 718.6 L548.7 718.3 L549.7 718.3 L549.7 716.6 L550.7 716.6 L550.7 717.4 L551.7 717.4 L551.7 718.9 L552.7 718.9 L552.7 717.8 L553.7 717.8 L553.7 720.6 L554.7 720.6 L554.7 721.6 L555.8 721.6 L555.8 719.5 L556.8 719.5 L556.8 719.9 L557.8 719.9 L557.8 721.9 L558.8 721.9 L558.8 722.9 L559.8 722.9 L559.8 723.9 L560.8 723.9 L560.8 721.7 L561.8 721.7 L561.8 722.0 L562.8 722.0 L562.8 721.6 L563.8 721.6 L563.8 724.6 L564.8 724.6 L564.8 723.5 L565.8 723.5 L565.8 725.6 L566.8 725.6 L566.8 725.9 L567.9 725.9 L567.9 724.9 L568.9 724.9 L568.9 724.3 L569.9 724.3 L569.9 723.9 L570.9 723.9 L570.9 728.6 L571.9 728.6 L571.9 724.7 L572.9 724.7 L572.9 728.2 L573.9 728.2 L573.9 728.6 L574.9 728.6 L574.9 728.6 L575.9 728.6 L575.9 727.0 L576.9 727.0 L576.9 730.1 L577.9 730.1 L577.9 736.0 L578.9 736.0 L578.9 729.2 L580.0 729.2 L580.0 728.4 L581.0 728.4 L581.0 732.3 L582.0 732.3 L582.0 732.3 L583.0 732.3 L583.0 734.2 L584.0 734.2 L584.0 731.8 L585.0 731.8 L585.0 732.0 L586.0 732.0 L586.0 730.1 L587.0 730.1 L587.0 733.1 L588.0 733.1 L588.0 730.6 L589.0 730.6 L589.0 731.8 L590.0 731.8 L590.0 736.7 L591.1 736.7 L591.1 735.1 L592.1 735.1 L592.1 735.1 L593.1 735.1 L593.1 735.1 L594.1 735.1 L594.1 734.2 L595.1 734.2 L595.1 735.7 L596.1 735.7 L596.1 735.1 L597.1 735.1 L597.1 736.0 L598.1 736.0 L598.1 738.5 L599.1 738.5 L599.1 741.8 L600.1 741.8 L600.1 738.1 L601.1 738.1 L601.1 742.3 L602.1 742.3 L602.1 737.4 L603.2 737.4 L603.2 738.9 L604.2 738.9 L604.2 735.7 L605.2 735.7 L605.2 742.8 L606.2 742.8 L606.2 743.2 L607.2 743.2 L607.2 741.4 L608.2 741.4 L608.2 743.2 L609.2 743.2 L609.2 746.6 L610.2 746.6 L610.2 740.1 L611.2 740.1 L611.2 740.9 L612.2 740.9 L612.2 743.2 L613.2 743.2 L613.2 746.0 L614.3 746.0 L614.3 739.3 L615.3 739.3 L615.3 746.0 L616.3 746.0 L616.3 747.8 L617.3 747.8 L617.3 750.7 L618.3 750.7 L618.3 742.8 L619.3 742.8 L619.3 744.3 L620.3 744.3 L620.3 746.6 L621.3 746.6 L621.3 746.0 L622.3 746.0 L622.3 746.6 L623.3 746.6 L623.3 751.5 L624.3 751.5 L624.3 751.5 L625.3 751.5 L625.3 745.4 L626.4 745.4 L626.4 749.2 L627.4 749.2 L627.4 745.4 L628.4 745.4 L628.4 747.2 L629.4 747.2 L629.4 748.5 L630.4 748.5 L630.4 744.8 L631.4 744.8 L631.4 748.5 L632.4 748.5 L632.4 751.5 L633.4 751.5 L633.4 752.4 L634.4 752.4 L634.4 749.2 L635.4 749.2 L635.4 758.7 L636.4 758.7 L636.4 751.5 L637.4 751.5 L637.4 748.5 L638.5 748.5 L638.5 756.3 L639.5 756.3 L639.5 753.3 L640.5 753.3 L640.5 750.0 L641.5 750.0 L641.5 750.0 L642.5 750.0 L642.5 754.2 L643.5 754.2 L643.5 755.2 L644.5 755.2 L644.5 755.2 L645.5 755.2 L645.5 758.7 L646.5 758.7 L646.5 757.4 L647.5 757.4 L647.5 754.2 L648.5 754.2 L648.5 758.7 L649.6 758.7 L649.6 752.4 L650.6 752.4 L650.6 754.2 L651.6 754.2 L651.6 764.7 L652.6 764.7 L652.6 749.2 L653.6 749.2 L653.6 771.5 L654.6 771.5 L654.6 757.4 L655.6 757.4 L655.6 761.4 L656.6 761.4 L656.6 756.3 L657.6 756.3 L657.6 760.0 L658.6 760.0 L658.6 755.2 L659.6 755.2 L659.6 757.4 L660.6 757.4 L660.6 771.5 L661.7 771.5 L661.7 761.4 L662.7 761.4 L662.7 764.7 L663.7 764.7 L663.7 754.2 L664.7 754.2 L664.7 757.4 L665.7 757.4 L665.7 753.3 L666.7 753.3 L666.7 761.4 L667.7 761.4 L667.7 763.0 L668.7 763.0 L668.7 760.0 L669.7 760.0 L669.7 766.7 L670.7 766.7 L670.7 763.0 L671.7 763.0 L671.7 758.7 L672.8 758.7 L672.8 768.9 L673.8 768.9 L673.8 755.2 L674.8 755.2 L674.8 766.7 L675.8 766.7 L675.8 757.4 L676.8 757.4 L676.8 764.7 L677.8 764.7 L677.8 757.4 L678.8 757.4 L678.8 764.7 L679.8 764.7 L679.8 766.7 L680.8 766.7 L680.8 766.7 L681.8 766.7 L681.8 768.9 L682.8 768.9 L682.8 771.5 L683.8 771.5 L683.8 774.5 L684.9 774.5 L684.9 768.9 L685.9 768.9 L685.9 760.0 L686.9 760.0 L686.9 760.0 L687.9 760.0 L687.9 758.7 L688.9 758.7 L688.9 771.5 L689.9 771.5 L689.9 771.5 L690.9 771.5 L690.9 766.7 L691.9 766.7 L691.9 771.5 L692.9 771.5 L692.9 774.5 L693.9 774.5 L693.9 768.9 L694.9 768.9 L694.9 757.4 L695.9 757.4 L695.9 764.7 L697.0 764.7 L697.0 774.5 L698.0 774.5 L698.0 774.5 L699.0 774.5 L699.0 768.9 L700.0 768.9 L700.0 766.7 L701.0 766.7 L701.0 774.5 L702.0 774.5 L702.0 763.0 L703.0 763.0 L703.0 758.7 L704.0 758.7 L704.0 771.5 L705.0 771.5 L705.0 789.6 L706.0 789.6 L706.0 774.5 L707.0 774.5 L707.0 764.7 L708.1 764.7 L708.1 764.7 L709.1 764.7 L709.1 764.7 L710.1 764.7 L710.1 766.7 L711.1 766.7 L711.1 771.5 L712.1 771.5 L712.1 778.2 L713.1 778.2 L713.1 766.7 L714.1 766.7 L714.1 771.5 L715.1 771.5 L715.1 778.2 L716.1 778.2 L716.1 789.6 L717.1 789.6 L717.1 766.7 L718.1 766.7 L718.1 774.5 L719.1 774.5 L719.1 768.9 L720.2 768.9 L720.2 764.7 L721.2 764.7 L721.2 766.7 L722.2 766.7 L722.2 771.5 L723.2 771.5 L723.2 766.7 L724.2 766.7 L724.2 768.9 L725.2 768.9 L725.2 768.9 L726.2 768.9 L726.2 778.2 L727.2 778.2 L727.2 778.2 L728.2 778.2 L728.2 774.5 L729.2 774.5 L729.2 764.7 L730.2 764.7 L730.2 768.9 L731.3 768.9 L731.3 768.9 L732.3 768.9 L732.3 766.7 L733.3 766.7 L733.3 768.9 L734.3 768.9 L734.3 778.2 L735.3 778.2 L735.3 778.2 L736.3 778.2 L736.3 778.2 L737.3 778.2 L737.3 768.9 L738.3 768.9 L738.3 778.2 L739.3 778.2 L739.3 782.9 L740.3 782.9 L740.3 774.5 L741.3 774.5 L741.3 766.7 L742.3 766.7 L742.3 778.2 L743.4 778.2 L743.4 768.9 L744.4 768.9 L744.4 778.2 L745.4 778.2 L745.4 782.9 L746.4 782.9 L746.4 782.9 L747.4 782.9 L747.4 766.7 L748.4 766.7 L748.4 778.2 L749.4 778.2 L749.4 774.5 L750.4 774.5 L750.4 789.6 L751.4 789.6 L751.4 774.5 L752.4 774.5 L752.4 771.5 L753.4 771.5 L753.4 778.2 L754.4 778.2 L754.4 774.5 L755.5 774.5 L755.5 768.9 L756.5 768.9 L756.5 774.5 L757.5 774.5 L757.5 801.1 L758.5 801.1 L758.5 771.5 L759.5 771.5 L759.5 778.2 L760.5 778.2 L760.5 801.1 L761.5 801.1 L761.5 771.5 L762.5 771.5 L762.5 782.9 L763.5 782.9 L763.5 789.6 L764.5 789.6 L764.5 789.6 L765.5 789.6 L765.5 764.7 L766.6 764.7 L766.6 771.5 L767.6 771.5 L767.6 778.2 L768.6 778.2 L768.6 789.6 L769.6 789.6 L769.6 774.5 L770.6 774.5 L770.6 801.1 L771.6 801.1 L771.6 778.2 L772.6 778.2 L772.6 771.5 L773.6 771.5 L773.6 789.6 L774.6 789.6 L774.6 789.6 L775.6 789.6 L775.6 774.5 L776.6 774.5 L776.6 782.9 L777.6 782.9 L777.6 778.2 L778.7 778.2 L778.7 774.5 L779.7 774.5 L779.7 789.6 L780.7 789.6 L780.7 782.9 L781.7 782.9 L781.7 768.9 L782.7 768.9 L782.7 778.2 L783.7 778.2 L783.7 771.5 L784.7 771.5 L784.7 789.6 L785.7 789.6 L785.7 768.9 L786.7 768.9 L786.7 768.9 L787.7 768.9 L787.7 782.9 L788.7 782.9 L788.7 774.5 L789.8 774.5 L789.8 774.5 L790.8 774.5 L790.8 771.5 L791.8 771.5 L791.8 774.5 L792.8 774.5 L792.8 782.9 L793.8 782.9 L793.8 782.9 L794.8 782.9 L794.8 778.2 L795.8 778.2 L795.8 774.5 L796.8 774.5 L796.8 774.5 L797.8 774.5 L797.8 819.0 L798.8 819.0 L798.8 782.9 L799.8 782.9 L799.8 771.5 L800.8 771.5 L800.8 766.7 L801.9 766.7 L801.9 774.5 L802.9 774.5 L802.9 774.5 L803.9 774.5 L803.9 774.5 L804.9 774.5 L804.9 782.9 L805.9 782.9 L805.9 774.5 L806.9 774.5 L806.9 778.2 L807.9 778.2 L807.9 778.2 L808.9 778.2 L808.9 778.2 L809.9 778.2 L809.9 789.6 L810.9 789.6 L810.9 789.6 L811.9 789.6 L811.9 774.5 L812.9 774.5 L812.9 778.2 L814.0 778.2 L814.0 782.9 L815.0 782.9 L815.0 778.2 L816.0 778.2 L816.0 778.2 L817.0 778.2 L817.0 768.9 L818.0 768.9 L818.0 782.9 L819.0 782.9 L819.0 774.5 L820.0 774.5 L820.0 782.9 L821.0 782.9 L821.0 774.5 L822.0 774.5 L822.0 778.2 L823.0 778.2 L823.0 778.2 L824.0 778.2 L824.0 774.5 L825.1 774.5 L825.1 774.5 L826.1 774.5 L826.1 774.5 L827.1 774.5 L827.1 789.6 L828.1 789.6 L828.1 778.2 L829.1 778.2 L829.1 771.5 L830.1 771.5 L830.1 782.9 L831.1 782.9 L831.1 778.2 L832.1 778.2 L832.1 801.1 L833.1 801.1 L833.1 764.7 L834.1 764.7 L834.1 766.7 L835.1 766.7 L835.1 771.5 L836.1 771.5 L836.1 778.2 L837.2 778.2 L837.2 778.2 L838.2 778.2 L838.2 778.2 L839.2 778.2 L839.2 774.5 L840.2 774.5 L840.2 778.2 L841.2 778.2 L841.2 789.6 L842.2 789.6 L842.2 782.9 L843.2 782.9 L843.2 782.9 L844.2 782.9 L844.2 782.9 L845.2 782.9 L845.2 778.2 L846.2 778.2 L846.2 778.2 L847.2 778.2 L847.2 819.0 L848.3 819.0 L848.3 782.9 L849.3 782.9 L849.3 778.2 L850.3 778.2 L850.3 774.5 L851.3 774.5 L851.3 768.9 L852.3 768.9 L852.3 789.6 L853.3 789.6 L853.3 774.5 L854.3 774.5 L854.3 778.2 L855.3 778.2 L855.3 778.2 L856.3 778.2 L856.3 768.9 L857.3 768.9 L857.3 801.1 L858.3 801.1 L858.3 782.9 L859.3 782.9 L859.3 771.5 L860.4 771.5 L860.4 778.2 L861.4 778.2 L861.4 778.2 L862.4 778.2 L862.4 789.6 L863.4 789.6 L863.4 782.9 L864.4 782.9 L864.4 778.2 L865.4 778.2 L865.4 778.2 L866.4 778.2 L866.4 764.7 L867.4 764.7 L867.4 774.5 L868.4 774.5 L868.4 782.9 L869.4 782.9 L869.4 774.5 L870.4 774.5 L870.4 782.9 L871.4 782.9 L871.4 782.9 L872.5 782.9 L872.5 768.9 L873.5 768.9 L873.5 771.5 L874.5 771.5 L874.5 774.5 L875.5 774.5 L875.5 782.9 L876.5 782.9 L876.5 782.9 L877.5 782.9 L877.5 778.2 L878.5 778.2 L878.5 768.9 L879.5 768.9 L879.5 774.5 L880.5 774.5 L880.5 789.6 L881.5 789.6 L881.5 789.6 L882.5 789.6 L882.5 778.2 L883.6 778.2 L883.6 774.5 L884.6 774.5 L884.6 766.7 L885.6 766.7 L885.6 782.9 L886.6 782.9 L886.6 782.9 L887.6 782.9 L887.6 789.6 L888.6 789.6 L888.6 819.0 L889.6 819.0 L889.6 778.2 L890.6 778.2 L890.6 768.9 L891.6 768.9 L891.6 801.1 L892.6 801.1 L892.6 768.9 L893.6 768.9 L893.6 789.6 L894.6 789.6 L894.6 771.5 L895.7 771.5 L895.7 789.6 L896.7 789.6 L896.7 801.1 L897.7 801.1 L897.7 778.2 L898.7 778.2 L898.7 766.7 L899.7 766.7 L899.7 768.9 L900.7 768.9 L900.7 771.5 L901.7 771.5 L901.7 782.9 L902.7 782.9 L902.7 774.5 L903.7 774.5 L903.7 801.1 L904.7 801.1 L904.7 778.2 L905.7 778.2 L905.7 771.5 L906.8 771.5 L906.8 782.9 L907.8 782.9 L907.8 819.0 L908.8 819.0 L908.8 782.9 L909.8 782.9 L909.8 768.9 L910.8 768.9 L910.8 774.5 L911.8 774.5 L911.8 768.9 L912.8 768.9 L912.8 774.5 L913.8 774.5 L913.8 771.5 L914.8 771.5 L914.8 789.6 L915.8 789.6 L915.8 782.9 L916.8 782.9 L916.8 774.5 L917.8 774.5 L917.8 774.5 L918.9 774.5 L918.9 778.2 L919.9 778.2 L919.9 801.1 L920.9 801.1 L920.9 789.6 L921.9 789.6 L921.9 778.2 L922.9 778.2 L922.9 774.5 L923.9 774.5 L923.9 778.2 L924.9 778.2 L924.9 774.5 L925.9 774.5 L925.9 778.2 L926.9 778.2 L926.9 774.5 L927.9 774.5 L927.9 782.9 L928.9 782.9 L928.9 766.7 L929.9 766.7 L929.9 782.9 L931.0 782.9 L931.0 766.7 L932.0 766.7 L932.0 768.9 L933.0 768.9 L933.0 774.5 L934.0 774.5 L934.0 768.9 L935.0 768.9 L935.0 782.9 L936.0 782.9 L936.0 782.9 L937.0 782.9 L937.0 778.2 L938.0 778.2 L938.0 789.6 L939.0 789.6 L939.0 774.5 L940.0 774.5 L940.0 782.9 L941.0 782.9 L941.0 774.5 L942.1 774.5 L942.1 774.5 L943.1 774.5 L943.1 771.5 L944.1 771.5 L944.1 768.9 L945.1 768.9 L945.1 778.2 L946.1 778.2 L946.1 789.6 L947.1 789.6 L947.1 782.9 L948.1 782.9 L948.1 778.2 L949.1 778.2 L949.1 774.5 L950.1 774.5 L950.1 760.0 L951.1 760.0 L951.1 778.2 L952.1 778.2 L952.1 778.2 L953.1 778.2 L953.1 801.1 L954.2 801.1 L954.2 774.5 L955.2 774.5 L955.2 782.9 L956.2 782.9 L956.2 768.9 L957.2 768.9 L957.2 778.2 L958.2 778.2 L958.2 763.0 L959.2 763.0 L959.2 801.1 L960.2 801.1 L960.2 771.5 L961.2 771.5 L961.2 771.5 L962.2 771.5 L962.2 774.5 L963.2 774.5 L963.2 778.2 L964.2 778.2 L964.2 766.7 L965.3 766.7 L965.3 778.2 L966.3 778.2 L966.3 768.9 L967.3 768.9 L967.3 789.6 L968.3 789.6 L968.3 771.5 L969.3 771.5 L969.3 778.2 L970.3 778.2 L970.3 819.0 L971.3 819.0 L971.3 774.5 L972.3 774.5 L972.3 801.1 L973.3 801.1 L973.3 774.5 L974.3 774.5 L974.3 771.5 L975.3 771.5 L975.3 771.5 L976.3 771.5 L976.3 801.1 L977.4 801.1 L977.4 774.5 L978.4 774.5 L978.4 789.6 L979.4 789.6 L979.4 778.2 L980.4 778.2 L980.4 774.5 L981.4 774.5 L981.4 768.9 L982.4 768.9 L982.4 778.2 L983.4 778.2 L983.4 771.5 L984.4 771.5 L984.4 789.6 L985.4 789.6 L985.4 789.6 L986.4 789.6 L986.4 801.1 L987.4 801.1 L987.4 778.2 L988.4 778.2 L988.4 774.5 L989.5 774.5 L989.5 801.1 L990.5 801.1 L990.5 774.5 L991.5 774.5 L991.5 801.1 L992.5 801.1 L992.5 778.2 L993.5 778.2 L993.5 782.9 L994.5 782.9 L994.5 774.5 L995.5 774.5 L995.5 778.2 L996.5 778.2 L996.5 789.6 L997.5 789.6 L997.5 766.7 L998.5 766.7 L998.5 771.5 L999.5 771.5 L999.5 774.5 L1000.6 774.5 L1000.6 778.2 L1001.6 778.2 L1001.6 768.9 L1002.6 768.9 L1002.6 782.9 L1003.6 782.9 L1003.6 778.2 L1004.6 778.2 L1004.6 778.2 L1005.6 778.2 L1005.6 782.9 L1006.6 782.9 L1006.6 771.5 L1007.6 771.5 L1007.6 778.2 L1008.6 778.2 L1008.6 771.5 L1009.6 771.5 L1009.6 778.2 L1010.6 778.2 L1010.6 778.2 L1011.6 778.2 L1011.6 778.2 L1012.7 778.2 L1012.7 782.9 L1013.7 782.9 L1013.7 774.5 L1014.7 774.5 L1014.7 778.2 L1015.7 778.2 L1015.7 782.9 L1016.7 782.9 L1016.7 778.2 L1017.7 778.2 L1017.7 801.1 L1018.7 801.1 L1018.7 778.2 L1019.7 778.2 L1019.7 766.7 L1020.7 766.7 L1020.7 778.2 L1021.7 778.2 L1021.7 778.2 L1022.7 778.2 L1022.7 782.9 L1023.8 782.9 L1023.8 782.9 L1024.8 782.9 L1024.8 778.2 L1025.8 778.2 L1025.8 774.5 L1026.8 774.5 L1026.8 778.2 L1027.8 778.2 L1027.8 774.5 L1028.8 774.5 L1028.8 778.2 L1029.8 778.2 L1029.8 768.9 L1030.8 768.9 L1030.8 774.5 L1031.8 774.5 L1031.8 766.7 L1032.8 766.7 L1032.8 801.1 L1033.8 801.1 L1033.8 819.0 L1034.8 819.0 L1034.8 801.1 L1035.9 801.1 L1035.9 774.5 L1036.9 774.5 L1036.9 801.1 L1037.9 801.1 L1037.9 778.2 L1038.9 778.2 L1038.9 774.5 L1039.9 774.5 L1039.9 782.9 L1040.9 782.9 L1040.9 774.5 L1041.9 774.5 L1041.9 782.9 L1042.9 782.9 L1042.9 789.6 L1043.9 789.6 L1043.9 782.9 L1044.9 782.9 L1044.9 778.2 L1045.9 778.2 L1045.9 774.5 L1046.9 774.5 L1046.9 782.9 L1048.0 782.9 L1048.0 778.2 L1049.0 778.2 L1049.0 789.6 L1050.0 789.6 L1050.0 778.2 L1051.0 778.2 L1051.0 782.9 L1052.0 782.9 L1052.0 778.2 L1053.0 778.2 L1053.0 801.1 L1054.0 801.1 L1054.0 801.1 L1055.0 801.1 L1055.0 771.5 L1056.0 771.5 L1056.0 768.9 L1057.0 768.9 L1057.0 789.6 L1058.0 789.6 L1058.0 774.5 L1059.1 774.5 L1059.1 782.9 L1060.1 782.9 L1060.1 801.1 L1061.1 801.1 L1061.1 771.5 L1062.1 771.5 L1062.1 774.5 L1063.1 774.5 L1063.1 778.2 L1064.1 778.2 L1064.1 771.5 L1065.1 771.5 L1065.1 819.0 L1066.1 819.0 L1066.1 774.5 L1067.1 774.5 L1067.1 782.9 L1068.1 782.9 L1068.1 789.6 L1069.1 789.6 L1069.1 789.6 L1070.1 789.6 L1070.1 789.6 L1071.2 789.6 L1071.2 778.2 L1072.2 778.2 L1072.2 778.2 L1073.2 778.2 L1073.2 774.5 L1074.2 774.5 L1074.2 782.9 L1075.2 782.9 L1075.2 771.5 L1076.2 771.5 L1076.2 778.2 L1077.2 778.2 L1077.2 778.2 L1078.2 778.2 L1078.2 771.5 L1079.2 771.5 L1079.2 766.7 L1080.2 766.7 L1080.2 778.2 L1081.2 778.2 L1081.2 789.6 L1082.3 789.6 L1082.3 774.5 L1083.3 774.5 L1083.3 789.6 L1084.3 789.6 L1084.3 789.6 L1085.3 789.6 L1085.3 801.1 L1086.3 801.1 L1086.3 789.6 L1087.3 789.6 L1087.3 778.2 L1088.3 778.2 L1088.3 774.5 L1089.3 774.5 L1089.3 778.2 L1090.3 778.2 L1090.3 782.9 L1091.3 782.9 L1091.3 778.2 L1092.3 778.2 L1092.3 778.2 L1093.3 778.2 L1093.3 771.5 L1094.4 771.5 L1094.4 771.5 L1095.4 771.5 L1095.4 778.2 L1096.4 778.2 L1096.4 782.9 L1097.4 782.9 L1097.4 774.5 L1098.4 774.5 L1098.4 789.6 L1099.4 789.6 L1099.4 801.1 L1100.4 801.1 L1100.4 778.2 L1101.4 778.2 L1101.4 774.5 L1102.4 774.5 L1102.4 768.9 L1103.4 768.9 L1103.4 789.6 L1104.4 789.6 L1104.4 789.6 L1105.4 789.6 L1105.4 774.5 L1106.5 774.5 L1106.5 771.5 L1107.5 771.5 L1107.5 801.1 L1108.5 801.1 L1108.5 778.2 L1109.5 778.2 L1109.5 782.9 L1110.5 782.9 L1110.5 782.9 L1111.5 782.9 L1111.5 778.2 L1112.5 778.2 L1112.5 801.1 L1113.5 801.1 L1113.5 782.9 L1114.5 782.9 L1114.5 774.5 L1115.5 774.5 L1115.5 778.2 L1116.5 778.2 L1116.5 778.2 L1117.6 778.2 L1117.6 768.9 L1118.6 768.9 L1118.6 778.2 L1119.6 778.2 L1119.6 801.1 L1120.6 801.1 L1120.6 782.9 L1121.6 782.9 L1121.6 778.2 L1122.6 778.2 L1122.6 768.9 L1123.6 768.9 L1123.6 782.9 L1124.6 782.9 L1124.6 763.0 L1125.6 763.0 L1125.6 768.9 L1126.6 768.9 L1126.6 774.5 L1127.6 774.5 L1127.6 789.6 L1128.6 789.6 L1128.6 774.5 L1129.7 774.5 L1129.7 782.9 L1130.7 782.9 L1130.7 766.7 L1131.7 766.7 L1131.7 782.9 L1132.7 782.9 L1132.7 778.2 L1133.7 778.2 L1133.7 789.6 L1134.7 789.6 L1134.7 789.6 L1135.7 789.6 L1135.7 774.5 L1136.7 774.5 L1136.7 782.9 L1137.7 782.9 L1137.7 782.9 L1138.7 782.9 L1138.7 771.5 L1139.7 771.5 L1139.7 778.2 L1140.8 778.2 L1140.8 778.2 L1141.8 778.2 L1141.8 782.9 L1142.8 782.9 L1142.8 771.5 L1143.8 771.5 L1143.8 789.6 L1144.8 789.6 L1144.8 789.6 L1145.8 789.6 L1145.8 789.6 L1146.8 789.6 L1146.8 782.9 L1147.8 782.9 L1147.8 789.6 L1148.8 789.6 L1148.8 771.5 L1149.8 771.5 L1149.8 778.2 L1150.8 778.2 L1150.8 778.2 L1151.8 778.2 L1151.8 766.7 L1152.9 766.7 L1152.9 771.5 L1153.9 771.5 L1153.9 782.9 L1154.9 782.9 L1154.9 774.5 L1155.9 774.5 L1155.9 768.9 L1156.9 768.9 L1156.9 782.9 L1157.9 782.9 L1157.9 789.6 L1158.9 789.6 L1158.9 782.9 L1159.9 782.9 L1159.9 789.6 L1160.9 789.6 L1160.9 782.9 L1161.9 782.9 L1161.9 789.6 L1162.9 789.6 L1162.9 789.6 L1163.9 789.6 L1163.9 778.2 L1165.0 778.2 L1165.0 766.7 L1166.0 766.7 L1166.0 801.1 L1167.0 801.1 L1167.0 782.9 L1168.0 782.9 L1168.0 778.2 L1169.0 778.2 L1169.0 771.5 L1170.0 771.5 L1170.0 789.6 L1171.0 789.6 L1171.0 774.5 L1172.0 774.5 L1172.0 778.2 L1173.0 778.2 L1173.0 789.6 L1174.0 789.6 L1174.0 789.6 L1175.0 789.6 L1175.0 782.9 L1176.1 782.9 L1176.1 774.5 L1177.1 774.5 L1177.1 778.2 L1178.1 778.2 L1178.1 782.9 L1179.1 782.9 L1179.1 774.5 L1180.1 774.5 L1180.1 801.1 L1181.1 801.1 L1181.1 778.2 L1182.1 778.2 L1182.1 774.5 L1183.1 774.5 L1183.1 778.2 L1184.1 778.2 L1184.1 801.1 L1185.1 801.1 L1185.1 774.5 L1186.1 774.5 L1186.1 771.5 L1187.1 771.5 L1187.1 801.1 L1188.2 801.1 L1188.2 768.9 L1189.2 768.9 L1189.2 778.2 L1190.2 778.2 L1190.2 778.2 L1191.2 778.2 L1191.2 774.5 L1192.2 774.5 L1192.2 801.1 L1193.2 801.1 L1193.2 774.5 L1194.2 774.5 L1194.2 778.2 L1195.2 778.2 L1195.2 782.9 L1196.2 782.9 L1196.2 789.6 L1197.2 789.6 L1197.2 789.6 L1198.2 789.6 L1198.2 782.9 L1199.3 782.9 L1199.3 778.2 L1200.3 778.2 L1200.3 778.2 L1201.3 778.2 L1201.3 789.6 L1202.3 789.6 L1202.3 789.6 L1203.3 789.6 L1203.3 778.2 L1204.3 778.2 L1204.3 774.5 L1205.3 774.5 L1205.3 778.2 L1206.3 778.2 L1206.3 782.9 L1207.3 782.9 L1207.3 771.5 L1208.3 771.5" fill="none" stroke="#c0c0c0" stroke-width="1"/><path d="M356.0 819.0 L357.1 819.0 L357.1 801.1 L358.1 801.1 L358.1 819.0 L359.1 819.0 L359.1 801.1 L360.1 801.1 L360.1 801.1 L361.1 801.1 L361.1 819.0 L362.1 819.0 L362.1 819.0 L363.1 819.0 L363.1 801.1 L364.1 801.1 L364.1 801.1 L365.1 801.1 L365.1 819.0 L366.1 819.0 L366.1 789.6 L367.1 789.6 L367.1 819.0 L368.1 819.0 L368.1 801.1 L369.2 801.1 L369.2 782.9 L370.2 782.9 L370.2 819.0 L371.2 819.0 L371.2 819.0 L372.2 819.0 L372.2 819.0 L373.2 819.0 L373.2 819.0 L374.2 819.0 L374.2 819.0 L375.2 819.0 L375.2 819.0 L376.2 819.0 L376.2 801.1 L377.2 801.1 L377.2 819.0 L378.2 819.0 L378.2 819.0 L379.2 819.0 L379.2 801.1 L380.3 801.1 L380.3 801.1 L381.3 801.1 L381.3 819.0 L382.3 819.0 L382.3 778.2 L383.3 778.2 L383.3 819.0 L384.3 819.0 L384.3 801.1 L385.3 801.1 L385.3 801.1 L386.3 801.1 L386.3 789.6 L387.3 789.6 L387.3 789.6 L388.3 789.6 L388.3 801.1 L389.3 801.1 L389.3 819.0 L390.3 819.0 L390.3 819.0 L391.3 819.0 L391.3 801.1 L392.4 801.1 L392.4 819.0 L393.4 819.0 L393.4 801.1 L394.4 801.1 L394.4 819.0 L395.4 819.0 L395.4 819.0 L396.4 819.0 L396.4 789.6 L397.4 789.6 L397.4 819.0 L398.4 819.0 L398.4 819.0 L399.4 819.0 L399.4 819.0 L400.4 819.0 L400.4 801.1 L401.4 801.1 L401.4 801.1 L402.4 801.1 L402.4 774.5 L403.4 774.5 L403.4 778.2 L404.5 778.2 L404.5 789.6 L405.5 789.6 L405.5 819.0 L406.5 819.0 L406.5 819.0 L407.5 819.0 L407.5 801.1 L408.5 801.1 L408.5 789.6 L409.5 789.6 L409.5 774.5 L410.5 774.5 L410.5 819.0 L411.5 819.0 L411.5 778.2 L412.5 778.2 L412.5 782.9 L413.5 782.9 L413.5 778.2 L414.5 778.2 L414.5 801.1 L415.6 801.1 L415.6 771.5 L416.6 771.5 L416.6 819.0 L417.6 819.0 L417.6 774.5 L418.6 774.5 L418.6 789.6 L419.6 789.6 L419.6 789.6 L420.6 789.6 L420.6 774.5 L421.6 774.5 L421.6 768.9 L422.6 768.9 L422.6 778.2 L423.6 778.2 L423.6 766.7 L424.6 766.7 L424.6 774.5 L425.6 774.5 L425.6 774.5 L426.6 774.5 L426.6 774.5 L427.7 774.5 L427.7 764.7 L428.7 764.7 L428.7 771.5 L429.7 771.5 L429.7 782.9 L430.7 782.9 L430.7 778.2 L431.7 778.2 L431.7 801.1 L432.7 801.1 L432.7 789.6 L433.7 789.6 L433.7 801.1 L434.7 801.1 L434.7 771.5 L435.7 771.5 L435.7 789.6 L436.7 789.6 L436.7 789.6 L437.7 789.6 L437.7 789.6 L438.8 789.6 L438.8 801.1 L439.8 801.1 L439.8 782.9 L440.8 782.9 L440.8 801.1 L441.8 801.1 L441.8 819.0 L442.8 819.0 L442.8 801.1 L443.8 801.1 L443.8 782.9 L444.8 782.9 L444.8 789.6 L445.8 789.6 L445.8 801.1 L446.8 801.1 L446.8 801.1 L447.8 801.1 L447.8 801.1 L448.8 801.1 L448.8 819.0 L449.8 819.0 L449.8 819.0 L450.9 819.0 L450.9 819.0 L451.9 819.0 L451.9 819.0 L452.9 819.0 L452.9 801.1 L453.9 801.1 L453.9 819.0 L454.9 819.0 L454.9 801.1 L455.9 801.1 L455.9 819.0 L456.9 819.0 L456.9 801.1 L457.9 801.1 L457.9 819.0 L458.9 819.0 L458.9 801.1 L459.9 801.1 L459.9 819.0 L460.9 819.0 L460.9 819.0 L461.9 819.0 L461.9 819.0 L463.0 819.0 L463.0 801.1 L464.0 801.1 L464.0 801.1 L465.0 801.1 L465.0 782.9 L466.0 782.9 L466.0 801.1 L467.0 801.1 L467.0 819.0 L468.0 819.0 L468.0 801.1 L469.0 801.1 L469.0 819.0 L470.0 819.0 L470.0 819.0 L471.0 819.0 L471.0 819.0 L472.0 819.0 L472.0 819.0 L473.0 819.0 L473.0 819.0 L474.1 819.0 L474.1 819.0 L475.1 819.0 L475.1 819.0 L476.1 819.0 L476.1 801.1 L477.1 801.1 L477.1 819.0 L478.1 819.0 L478.1 801.1 L479.1 801.1 L479.1 819.0 L480.1 819.0 L480.1 801.1 L481.1 801.1 L481.1 819.0 L482.1 819.0 L482.1 801.1 L483.1 801.1 L483.1 782.9 L484.1 782.9 L484.1 819.0 L485.1 819.0 L485.1 819.0 L486.2 819.0 L486.2 819.0 L487.2 819.0 L487.2 819.0 L488.2 819.0 L488.2 819.0 L489.2 819.0 L489.2 819.0 L490.2 819.0 L490.2 819.0 L491.2 819.0 L491.2 819.0 L492.2 819.0 L492.2 819.0 L493.2 819.0 L493.2 819.0 L494.2 819.0 L494.2 819.0 L495.2 819.0 L495.2 801.1 L496.2 801.1 L496.2 801.1 L497.3 801.1 L497.3 819.0 L498.3 819.0 L498.3 801.1 L499.3 801.1 L499.3 819.0 L500.3 819.0 L500.3 789.6 L501.3 789.6 L501.3 819.0 L502.3 819.0 L502.3 801.1 L503.3 801.1 L503.3 801.1 L504.3 801.1 L504.3 789.6 L505.3 789.6 L505.3 801.1 L506.3 801.1 L506.3 819.0 L507.3 819.0 L507.3 801.1 L508.3 801.1 L508.3 801.1 L509.4 801.1 L509.4 819.0 L510.4 819.0 L510.4 819.0 L511.4 819.0 L511.4 801.1 L512.4 801.1 L512.4 789.6 L513.4 789.6 L513.4 819.0 L514.4 819.0 L514.4 819.0 L515.4 819.0 L515.4 801.1 L516.4 801.1 L516.4 819.0 L517.4 819.0 L517.4 819.0 L518.4 819.0 L518.4 801.1 L519.4 801.1 L519.4 801.1 L520.4 801.1 L520.4 789.6 L521.5 789.6 L521.5 789.6 L522.5 789.6 L522.5 819.0 L523.5 819.0 L523.5 819.0 L524.5 819.0 L524.5 801.1 L525.5 801.1 L525.5 819.0 L526.5 819.0 L526.5 819.0 L527.5 819.0 L527.5 801.1 L528.5 801.1 L528.5 782.9 L529.5 782.9 L529.5 801.1 L530.5 801.1 L530.5 819.0 L531.5 819.0 L531.5 819.0 L532.6 819.0 L532.6 782.9 L533.6 782.9 L533.6 819.0 L534.6 819.0 L534.6 801.1 L535.6 801.1 L535.6 789.6 L536.6 789.6 L536.6 801.1 L537.6 801.1 L537.6 819.0 L538.6 819.0 L538.6 819.0 L539.6 819.0 L539.6 789.6 L540.6 789.6 L540.6 789.6 L541.6 789.6 L541.6 789.6 L542.6 789.6 L542.6 819.0 L543.6 819.0 L543.6 819.0 L544.7 819.0 L544.7 801.1 L545.7 801.1 L545.7 819.0 L546.7 819.0 L546.7 801.1 L547.7 801.1 L547.7 789.6 L548.7 789.6 L548.7 819.0 L549.7 819.0 L549.7 789.6 L550.7 789.6 L550.7 789.6 L551.7 789.6 L551.7 819.0 L552.7 819.0 L552.7 819.0 L553.7 819.0 L553.7 819.0 L554.7 819.0 L554.7 819.0 L555.8 819.0 L555.8 801.1 L556.8 801.1 L556.8 819.0 L557.8 819.0 L557.8 801.1 L558.8 801.1 L558.8 801.1 L559.8 801.1 L559.8 819.0 L560.8 819.0 L560.8 819.0 L561.8 819.0 L561.8 789.6 L562.8 789.6 L562.8 801.1 L563.8 801.1 L563.8 819.0 L564.8 819.0 L564.8 789.6 L565.8 789.6 L565.8 819.0 L566.8 819.0 L566.8 819.0 L567.9 819.0 L567.9 801.1 L568.9 801.1 L568.9 801.1 L569.9 801.1 L569.9 819.0 L570.9 819.0 L570.9 789.6 L571.9 789.6 L571.9 801.1 L572.9 801.1 L572.9 819.0 L573.9 819.0 L573.9 819.0 L574.9 819.0 L574.9 801.1 L575.9 801.1 L575.9 801.1 L576.9 801.1 L576.9 819.0 L577.9 819.0 L577.9 789.6 L578.9 789.6 L578.9 782.9 L580.0 782.9 L580.0 819.0 L581.0 819.0 L581.0 801.1 L582.0 801.1 L582.0 782.9 L583.0 782.9 L583.0 801.1 L584.0 801.1 L584.0 819.0 L585.0 819.0 L585.0 789.6 L586.0 789.6 L586.0 819.0 L587.0 819.0 L587.0 782.9 L588.0 782.9 L588.0 819.0 L589.0 819.0 L589.0 801.1 L590.0 801.1 L590.0 819.0 L591.1 819.0 L591.1 801.1 L592.1 801.1 L592.1 819.0 L593.1 819.0 L593.1 819.0 L594.1 819.0 L594.1 819.0 L595.1 819.0 L595.1 801.1 L596.1 801.1 L596.1 819.0 L597.1 819.0 L597.1 801.1 L598.1 801.1 L598.1 819.0 L599.1 819.0 L599.1 801.1 L600.1 801.1 L600.1 819.0 L601.1 819.0 L601.1 819.0 L602.1 819.0 L602.1 819.0 L603.2 819.0 L603.2 801.1 L604.2 801.1 L604.2 801.1 L605.2 801.1 L605.2 819.0 L606.2 819.0 L606.2 819.0 L607.2 819.0 L607.2 819.0 L608.2 819.0 L608.2 819.0 L609.2 819.0 L609.2 789.6 L610.2 789.6 L610.2 819.0 L611.2 819.0 L611.2 801.1 L612.2 801.1 L612.2 819.0 L613.2 819.0 L613.2 819.0 L614.3 819.0 L614.3 819.0 L615.3 819.0 L615.3 819.0 L616.3 819.0 L616.3 819.0 L617.3 819.0 L617.3 819.0 L618.3 819.0 L618.3 801.1 L619.3 801.1 L619.3 801.1 L620.3 801.1 L620.3 782.9 L621.3 782.9 L621.3 819.0 L622.3 819.0 L622.3 801.1 L623.3 801.1 L623.3 801.1 L624.3 801.1 L624.3 801.1 L625.3 801.1 L625.3 819.0 L626.4 819.0 L626.4 789.6 L627.4 789.6 L627.4 819.0 L628.4 819.0 L628.4 801.1 L629.4 801.1 L629.4 819.0 L630.4 819.0 L630.4 789.6 L631.4 789.6 L631.4 819.0 L632.4 819.0 L632.4 819.0 L633.4 819.0 L633.4 819.0 L634.4 819.0 L634.4 801.1 L635.4 801.1 L635.4 819.0 L636.4 819.0 L636.4 819.0 L637.4 819.0 L637.4 819.0 L638.5 819.0 L638.5 819.0 L639.5 819.0 L639.5 801.1 L640.5 801.1 L640.5 819.0 L641.5 819.0 L641.5 819.0 L642.5 819.0 L642.5 819.0 L643.5 819.0 L643.5 801.1 L644.5 801.1 L644.5 801.1 L645.5 801.1 L645.5 789.6 L646.5 789.6 L646.5 819.0 L647.5 819.0 L647.5 801.1 L648.5 801.1 L648.5 819.0 L649.6 819.0 L649.6 819.0 L650.6 819.0 L650.6 801.1 L651.6 801.1 L651.6 819.0 L652.6 819.0 L652.6 801.1 L653.6 801.1 L653.6 819.0 L654.6 819.0 L654.6 801.1 L655.6 801.1 L655.6 801.1 L656.6 801.1 L656.6 801.1 L657.6 801.1 L657.6 789.6 L658.6 789.6 L658.6 819.0 L659.6 819.0 L659.6 801.1 L660.6 801.1 L660.6 801.1 L661.7 801.1 L661.7 819.0 L662.7 819.0 L662.7 819.0 L663.7 819.0 L663.7 819.0 L664.7 819.0 L664.7 801.1 L665.7 801.1 L665.7 819.0 L666.7 819.0 L666.7 819.0 L667.7 819.0 L667.7 801.1 L668.7 801.1 L668.7 819.0 L669.7 819.0 L669.7 819.0 L670.7 819.0 L670.7 801.1 L671.7 801.1 L671.7 819.0 L672.8 819.0 L672.8 789.6 L673.8 789.6 L673.8 819.0 L674.8 819.0 L674.8 819.0 L675.8 819.0 L675.8 819.0 L676.8 819.0 L676.8 819.0 L677.8 819.0 L677.8 819.0 L678.8 819.0 L678.8 819.0 L679.8 819.0 L679.8 801.1 L680.8 801.1 L680.8 789.6 L681.8 789.6 L681.8 789.6 L682.8 789.6 L682.8 819.0 L683.8 819.0 L683.8 819.0 L684.9 819.0 L684.9 819.0 L685.9 819.0 L685.9 819.0 L686.9 819.0 L686.9 789.6 L687.9 789.6 L687.9 819.0 L688.9 819.0 L688.9 801.1 L689.9 801.1 L689.9 819.0 L690.9 819.0 L690.9 819.0 L691.9 819.0 L691.9 801.1 L692.9 801.1 L692.9 801.1 L693.9 801.1 L693.9 819.0 L694.9 819.0 L694.9 819.0 L695.9 819.0 L695.9 801.1 L697.0 801.1 L697.0 801.1 L698.0 801.1 L698.0 801.1 L699.0 801.1 L699.0 819.0 L700.0 819.0 L700.0 819.0 L701.0 819.0 L701.0 819.0 L702.0 819.0 L702.0 801.1 L703.0 801.1 L703.0 819.0 L704.0 819.0 L704.0 819.0 L705.0 819.0 L705.0 801.1 L706.0 801.1 L706.0 801.1 L707.0 801.1 L707.0 819.0 L708.1 819.0 L708.1 819.0 L709.1 819.0 L709.1 801.1 L710.1 801.1 L710.1 789.6 L711.1 789.6 L711.1 819.0 L712.1 819.0 L712.1 819.0 L713.1 819.0 L713.1 819.0 L714.1 819.0 L714.1 819.0 L715.1 819.0 L715.1 801.1 L716.1 801.1 L716.1 789.6 L717.1 789.6 L717.1 819.0 L718.1 819.0 L718.1 801.1 L719.1 801.1 L719.1 801.1 L720.2 801.1 L720.2 819.0 L721.2 819.0 L721.2 801.1 L722.2 801.1 L722.2 819.0 L723.2 819.0 L723.2 801.1 L724.2 801.1 L724.2 819.0 L725.2 819.0 L725.2 801.1 L726.2 801.1 L726.2 819.0 L727.2 819.0 L727.2 789.6 L728.2 789.6 L728.2 819.0 L729.2 819.0 L729.2 801.1 L730.2 801.1 L730.2 801.1 L731.3 801.1 L731.3 801.1 L732.3 801.1 L732.3 801.1 L733.3 801.1 L733.3 789.6 L734.3 789.6 L734.3 801.1 L735.3 801.1 L735.3 801.1 L736.3 801.1 L736.3 819.0 L737.3 819.0 L737.3 819.0 L738.3 819.0 L738.3 801.1 L739.3 801.1 L739.3 819.0 L740.3 819.0 L740.3 819.0 L741.3 819.0 L741.3 782.9 L742.3 782.9 L742.3 819.0 L743.4 819.0 L743.4 801.1 L744.4 801.1 L744.4 819.0 L745.4 819.0 L745.4 801.1 L746.4 801.1 L746.4 819.0 L747.4 819.0 L747.4 801.1 L748.4 801.1 L748.4 819.0 L749.4 819.0 L749.4 819.0 L750.4 819.0 L750.4 819.0 L751.4 819.0 L751.4 819.0 L752.4 819.0 L752.4 819.0 L753.4 819.0 L753.4 801.1 L754.4 801.1 L754.4 819.0 L755.5 819.0 L755.5 801.1 L756.5 801.1 L756.5 801.1 L757.5 801.1 L757.5 782.9 L758.5 782.9 L758.5 819.0 L759.5 819.0 L759.5 801.1 L760.5 801.1 L760.5 801.1 L761.5 801.1 L761.5 819.0 L762.5 819.0 L762.5 801.1 L763.5 801.1 L763.5 819.0 L764.5 819.0 L764.5 801.1 L765.5 801.1 L765.5 819.0 L766.6 819.0 L766.6 789.6 L767.6 789.6 L767.6 801.1 L768.6 801.1 L768.6 819.0 L769.6 819.0 L769.6 819.0 L770.6 819.0 L770.6 819.0 L771.6 819.0 L771.6 801.1 L772.6 801.1 L772.6 819.0 L773.6 819.0 L773.6 819.0 L774.6 819.0 L774.6 819.0 L775.6 819.0 L775.6 819.0 L776.6 819.0 L776.6 819.0 L777.6 819.0 L777.6 819.0 L778.7 819.0 L778.7 789.6 L779.7 789.6 L779.7 819.0 L780.7 819.0 L780.7 801.1 L781.7 801.1 L781.7 801.1 L782.7 801.1 L782.7 801.1 L783.7 801.1 L783.7 801.1 L784.7 801.1 L784.7 801.1 L785.7 801.1 L785.7 819.0 L786.7 819.0 L786.7 819.0 L787.7 819.0 L787.7 819.0 L788.7 819.0 L788.7 819.0 L789.8 819.0 L789.8 801.1 L790.8 801.1 L790.8 782.9 L791.8 782.9 L791.8 819.0 L792.8 819.0 L792.8 819.0 L793.8 819.0 L793.8 819.0 L794.8 819.0 L794.8 819.0 L795.8 819.0 L795.8 801.1 L796.8 801.1 L796.8 819.0 L797.8 819.0 L797.8 819.0 L798.8 819.0 L798.8 801.1 L799.8 801.1 L799.8 819.0 L800.8 819.0 L800.8 819.0 L801.9 819.0 L801.9 789.6 L802.9 789.6 L802.9 819.0 L803.9 819.0 L803.9 819.0 L804.9 819.0 L804.9 819.0 L805.9 819.0 L805.9 801.1 L806.9 801.1 L806.9 819.0 L807.9 819.0 L807.9 801.1 L808.9 801.1 L808.9 801.1 L809.9 801.1 L809.9 801.1 L810.9 801.1 L810.9 782.9 L811.9 782.9 L811.9 819.0 L812.9 819.0 L812.9 789.6 L814.0 789.6 L814.0 819.0 L815.0 819.0 L815.0 801.1 L816.0 801.1 L816.0 819.0 L817.0 819.0 L817.0 819.0 L818.0 819.0 L818.0 801.1 L819.0 801.1 L819.0 819.0 L820.0 819.0 L820.0 819.0 L821.0 819.0 L821.0 789.6 L822.0 789.6 L822.0 801.1 L823.0 801.1 L823.0 819.0 L824.0 819.0 L824.0 801.1 L825.1 801.1 L825.1 789.6 L826.1 789.6 L826.1 801.1 L827.1 801.1 L827.1 819.0 L828.1 819.0 L828.1 819.0 L829.1 819.0 L829.1 801.1 L830.1 801.1 L830.1 819.0 L831.1 819.0 L831.1 801.1 L832.1 801.1 L832.1 819.0 L833.1 819.0 L833.1 819.0 L834.1 819.0 L834.1 801.1 L835.1 801.1 L835.1 789.6 L836.1 789.6 L836.1 819.0 L837.2 819.0 L837.2 819.0 L838.2 819.0 L838.2 801.1 L839.2 801.1 L839.2 789.6 L840.2 789.6 L840.2 789.6 L841.2 789.6 L841.2 819.0 L842.2 819.0 L842.2 819.0 L843.2 819.0 L843.2 819.0 L844.2 819.0 L844.2 789.6 L845.2 789.6 L845.2 801.1 L846.2 801.1 L846.2 789.6 L847.2 789.6 L847.2 789.6 L848.3 789.6 L848.3 801.1 L849.3 801.1 L849.3 819.0 L850.3 819.0 L850.3 819.0 L851.3 819.0 L851.3 801.1 L852.3 801.1 L852.3 819.0 L853.3 819.0 L853.3 801.1 L854.3 801.1 L854.3 819.0 L855.3 819.0 L855.3 801.1 L856.3 801.1 L856.3 819.0 L857.3 819.0 L857.3 801.1 L858.3 801.1 L858.3 801.1 L859.3 801.1 L859.3 819.0 L860.4 819.0 L860.4 801.1 L861.4 801.1 L861.4 819.0 L862.4 819.0 L862.4 801.1 L863.4 801.1 L863.4 789.6 L864.4 789.6 L864.4 819.0 L865.4 819.0 L865.4 819.0 L866.4 819.0 L866.4 819.0 L867.4 819.0 L867.4 789.6 L868.4 789.6 L868.4 801.1 L869.4 801.1 L869.4 819.0 L870.4 819.0 L870.4 801.1 L871.4 801.1 L871.4 819.0 L872.5 819.0 L872.5 801.1 L873.5 801.1 L873.5 819.0 L874.5 819.0 L874.5 801.1 L875.5 801.1 L875.5 819.0 L876.5 819.0 L876.5 819.0 L877.5 819.0 L877.5 789.6 L878.5 789.6 L878.5 819.0 L879.5 819.0 L879.5 819.0 L880.5 819.0 L880.5 819.0 L881.5 819.0 L881.5 789.6 L882.5 789.6 L882.5 801.1 L883.6 801.1 L883.6 819.0 L884.6 819.0 L884.6 819.0 L885.6 819.0 L885.6 819.0 L886.6 819.0 L886.6 801.1 L887.6 801.1 L887.6 819.0 L888.6 819.0 L888.6 789.6 L889.6 789.6 L889.6 819.0 L890.6 819.0 L890.6 782.9 L891.6 782.9 L891.6 819.0 L892.6 819.0 L892.6 801.1 L893.6 801.1 L893.6 819.0 L894.6 819.0 L894.6 819.0 L895.7 819.0 L895.7 819.0 L896.7 819.0 L896.7 801.1 L897.7 801.1 L897.7 819.0 L898.7 819.0 L898.7 819.0 L899.7 819.0 L899.7 819.0 L900.7 819.0 L900.7 819.0 L901.7 819.0 L901.7 801.1 L902.7 801.1 L902.7 782.9 L903.7 782.9 L903.7 819.0 L904.7 819.0 L904.7 801.1 L905.7 801.1 L905.7 819.0 L906.8 819.0 L906.8 801.1 L907.8 801.1 L907.8 819.0 L908.8 819.0 L908.8 819.0 L909.8 819.0 L909.8 801.1 L910.8 801.1 L910.8 819.0 L911.8 819.0 L911.8 801.1 L912.8 801.1 L912.8 801.1 L913.8 801.1 L913.8 801.1 L914.8 801.1 L914.8 801.1 L915.8 801.1 L915.8 801.1 L916.8 801.1 L916.8 801.1 L917.8 801.1 L917.8 801.1 L918.9 801.1 L918.9 801.1 L919.9 801.1 L919.9 819.0 L920.9 819.0 L920.9 819.0 L921.9 819.0 L921.9 819.0 L922.9 819.0 L922.9 819.0 L923.9 819.0 L923.9 801.1 L924.9 801.1 L924.9 819.0 L925.9 819.0 L925.9 819.0 L926.9 819.0 L926.9 819.0 L927.9 819.0 L927.9 819.0 L928.9 819.0 L928.9 801.1 L929.9 801.1 L929.9 819.0 L931.0 819.0 L931.0 801.1 L932.0 801.1 L932.0 819.0 L933.0 819.0 L933.0 801.1 L934.0 801.1 L934.0 801.1 L935.0 801.1 L935.0 819.0 L936.0 819.0 L936.0 819.0 L937.0 819.0 L937.0 801.1 L938.0 801.1 L938.0 801.1 L939.0 801.1 L939.0 801.1 L940.0 801.1 L940.0 789.6 L941.0 789.6 L941.0 819.0 L942.1 819.0 L942.1 789.6 L943.1 789.6 L943.1 819.0 L944.1 819.0 L944.1 801.1 L945.1 801.1 L945.1 819.0 L946.1 819.0 L946.1 819.0 L947.1 819.0 L947.1 801.1 L948.1 801.1 L948.1 819.0 L949.1 819.0 L949.1 819.0 L950.1 819.0 L950.1 819.0 L951.1 819.0 L951.1 789.6 L952.1 789.6 L952.1 789.6 L953.1 789.6 L953.1 789.6 L954.2 789.6 L954.2 801.1 L955.2 801.1 L955.2 801.1 L956.2 801.1 L956.2 789.6 L957.2 789.6 L957.2 778.2 L958.2 778.2 L958.2 819.0 L959.2 819.0 L959.2 819.0 L960.2 819.0 L960.2 801.1 L961.2 801.1 L961.2 819.0 L962.2 819.0 L962.2 819.0 L963.2 819.0 L963.2 801.1 L964.2 801.1 L964.2 819.0 L965.3 819.0 L965.3 819.0 L966.3 819.0 L966.3 819.0 L967.3 819.0 L967.3 819.0 L968.3 819.0 L968.3 801.1 L969.3 801.1 L969.3 819.0 L970.3 819.0 L970.3 819.0 L971.3 819.0 L971.3 789.6 L972.3 789.6 L972.3 819.0 L973.3 819.0 L973.3 801.1 L974.3 801.1 L974.3 801.1 L975.3 801.1 L975.3 819.0 L976.3 819.0 L976.3 801.1 L977.4 801.1 L977.4 801.1 L978.4 801.1 L978.4 789.6 L979.4 789.6 L979.4 801.1 L980.4 801.1 L980.4 819.0 L981.4 819.0 L981.4 801.1 L982.4 801.1 L982.4 801.1 L983.4 801.1 L983.4 819.0 L984.4 819.0 L984.4 801.1 L985.4 801.1 L985.4 819.0 L986.4 819.0 L986.4 819.0 L987.4 819.0 L987.4 801.1 L988.4 801.1 L988.4 819.0 L989.5 819.0 L989.5 801.1 L990.5 801.1 L990.5 819.0 L991.5 819.0 L991.5 782.9 L992.5 782.9 L992.5 801.1 L993.5 801.1 L993.5 801.1 L994.5 801.1 L994.5 819.0 L995.5 819.0 L995.5 801.1 L996.5 801.1 L996.5 801.1 L997.5 801.1 L997.5 801.1 L998.5 801.1 L998.5 819.0 L999.5 819.0 L999.5 819.0 L1000.6 819.0 L1000.6 819.0 L1001.6 819.0 L1001.6 819.0 L1002.6 819.0 L1002.6 801.1 L1003.6 801.1 L1003.6 819.0 L1004.6 819.0 L1004.6 819.0 L1005.6 819.0 L1005.6 819.0 L1006.6 819.0 L1006.6 819.0 L1007.6 819.0 L1007.6 819.0 L1008.6 819.0 L1008.6 819.0 L1009.6 819.0 L1009.6 819.0 L1010.6 819.0 L1010.6 819.0 L1011.6 819.0 L1011.6 801.1 L1012.7 801.1 L1012.7 801.1 L1013.7 801.1 L1013.7 819.0 L1014.7 819.0 L1014.7 789.6 L1015.7 789.6 L1015.7 801.1 L1016.7 801.1 L1016.7 819.0 L1017.7 819.0 L1017.7 801.1 L1018.7 801.1 L1018.7 819.0 L1019.7 819.0 L1019.7 819.0 L1020.7 819.0 L1020.7 819.0 L1021.7 819.0 L1021.7 819.0 L1022.7 819.0 L1022.7 819.0 L1023.8 819.0 L1023.8 819.0 L1024.8 819.0 L1024.8 801.1 L1025.8 801.1 L1025.8 801.1 L1026.8 801.1 L1026.8 819.0 L1027.8 819.0 L1027.8 819.0 L1028.8 819.0 L1028.8 819.0 L1029.8 819.0 L1029.8 819.0 L1030.8 819.0 L1030.8 819.0 L1031.8 819.0 L1031.8 819.0 L1032.8 819.0 L1032.8 801.1 L1033.8 801.1 L1033.8 801.1 L1034.8 801.1 L1034.8 819.0 L1035.9 819.0 L1035.9 782.9 L1036.9 782.9 L1036.9 801.1 L1037.9 801.1 L1037.9 801.1 L1038.9 801.1 L1038.9 819.0 L1039.9 819.0 L1039.9 819.0 L1040.9 819.0 L1040.9 801.1 L1041.9 801.1 L1041.9 819.0 L1042.9 819.0 L1042.9 801.1 L1043.9 801.1 L1043.9 819.0 L1044.9 819.0 L1044.9 819.0 L1045.9 819.0 L1045.9 819.0 L1046.9 819.0 L1046.9 801.1 L1048.0 801.1 L1048.0 819.0 L1049.0 819.0 L1049.0 819.0 L1050.0 819.0 L1050.0 819.0 L1051.0 819.0 L1051.0 782.9 L1052.0 782.9 L1052.0 819.0 L1053.0 819.0 L1053.0 819.0 L1054.0 819.0 L1054.0 801.1 L1055.0 801.1 L1055.0 819.0 L1056.0 819.0 L1056.0 819.0 L1057.0 819.0 L1057.0 801.1 L1058.0 801.1 L1058.0 819.0 L1059.1 819.0 L1059.1 801.1 L1060.1 801.1 L1060.1 801.1 L1061.1 801.1 L1061.1 801.1 L1062.1 801.1 L1062.1 789.6 L1063.1 789.6 L1063.1 819.0 L1064.1 819.0 L1064.1 819.0 L1065.1 819.0 L1065.1 789.6 L1066.1 789.6 L1066.1 819.0 L1067.1 819.0 L1067.1 819.0 L1068.1 819.0 L1068.1 819.0 L1069.1 819.0 L1069.1 819.0 L1070.1 819.0 L1070.1 819.0 L1071.2 819.0 L1071.2 819.0 L1072.2 819.0 L1072.2 819.0 L1073.2 819.0 L1073.2 819.0 L1074.2 819.0 L1074.2 801.1 L1075.2 801.1 L1075.2 819.0 L1076.2 819.0 L1076.2 819.0 L1077.2 819.0 L1077.2 801.1 L1078.2 801.1 L1078.2 801.1 L1079.2 801.1 L1079.2 789.6 L1080.2 789.6 L1080.2 801.1 L1081.2 801.1 L1081.2 801.1 L1082.3 801.1 L1082.3 819.0 L1083.3 819.0 L1083.3 801.1 L1084.3 801.1 L1084.3 801.1 L1085.3 801.1 L1085.3 819.0 L1086.3 819.0 L1086.3 801.1 L1087.3 801.1 L1087.3 819.0 L1088.3 819.0 L1088.3 789.6 L1089.3 789.6 L1089.3 819.0 L1090.3 819.0 L1090.3 789.6 L1091.3 789.6 L1091.3 782.9 L1092.3 782.9 L1092.3 801.1 L1093.3 801.1 L1093.3 819.0 L1094.4 819.0 L1094.4 819.0 L1095.4 819.0 L1095.4 801.1 L1096.4 801.1 L1096.4 801.1 L1097.4 801.1 L1097.4 819.0 L1098.4 819.0 L1098.4 801.1 L1099.4 801.1 L1099.4 819.0 L1100.4 819.0 L1100.4 819.0 L1101.4 819.0 L1101.4 819.0 L1102.4 819.0 L1102.4 819.0 L1103.4 819.0 L1103.4 819.0 L1104.4 819.0 L1104.4 801.1 L1105.4 801.1 L1105.4 819.0 L1106.5 819.0 L1106.5 819.0 L1107.5 819.0 L1107.5 789.6 L1108.5 789.6 L1108.5 819.0 L1109.5 819.0 L1109.5 801.1 L1110.5 801.1 L1110.5 819.0 L1111.5 819.0 L1111.5 819.0 L1112.5 819.0 L1112.5 782.9 L1113.5 782.9 L1113.5 801.1 L1114.5 801.1 L1114.5 819.0 L1115.5 819.0 L1115.5 801.1 L1116.5 801.1 L1116.5 819.0 L1117.6 819.0 L1117.6 819.0 L1118.6 819.0 L1118.6 819.0 L1119.6 819.0 L1119.6 819.0 L1120.6 819.0 L1120.6 801.1 L1121.6 801.1 L1121.6 819.0 L1122.6 819.0 L1122.6 819.0 L1123.6 819.0 L1123.6 819.0 L1124.6 819.0 L1124.6 819.0 L1125.6 819.0 L1125.6 801.1 L1126.6 801.1 L1126.6 819.0 L1127.6 819.0 L1127.6 789.6 L1128.6 789.6 L1128.6 801.1 L1129.7 801.1 L1129.7 819.0 L1130.7 819.0 L1130.7 801.1 L1131.7 801.1 L1131.7 789.6 L1132.7 789.6 L1132.7 819.0 L1133.7 819.0 L1133.7 819.0 L1134.7 819.0 L1134.7 801.1 L1135.7 801.1 L1135.7 782.9 L1136.7 782.9 L1136.7 801.1 L1137.7 801.1 L1137.7 819.0 L1138.7 819.0 L1138.7 819.0 L1139.7 819.0 L1139.7 801.1 L1140.8 801.1 L1140.8 819.0 L1141.8 819.0 L1141.8 801.1 L1142.8 801.1 L1142.8 801.1 L1143.8 801.1 L1143.8 819.0 L1144.8 819.0 L1144.8 819.0 L1145.8 819.0 L1145.8 819.0 L1146.8 819.0 L1146.8 801.1 L1147.8 801.1 L1147.8 819.0 L1148.8 819.0 L1148.8 801.1 L1149.8 801.1 L1149.8 801.1 L1150.8 801.1 L1150.8 819.0 L1151.8 819.0 L1151.8 819.0 L1152.9 819.0 L1152.9 819.0 L1153.9 819.0 L1153.9 819.0 L1154.9 819.0 L1154.9 789.6 L1155.9 789.6 L1155.9 819.0 L1156.9 819.0 L1156.9 819.0 L1157.9 819.0 L1157.9 819.0 L1158.9 819.0 L1158.9 801.1 L1159.9 801.1 L1159.9 801.1 L1160.9 801.1 L1160.9 819.0 L1161.9 819.0 L1161.9 782.9 L1162.9 782.9 L1162.9 782.9 L1163.9 782.9 L1163.9 819.0 L1165.0 819.0 L1165.0 789.6 L1166.0 789.6 L1166.0 801.1 L1167.0 801.1 L1167.0 801.1 L1168.0 801.1 L1168.0 819.0 L1169.0 819.0 L1169.0 789.6 L1170.0 789.6 L1170.0 819.0 L1171.0 819.0 L1171.0 789.6 L1172.0 789.6 L1172.0 801.1 L1173.0 801.1 L1173.0 819.0 L1174.0 819.0 L1174.0 801.1 L1175.0 801.1 L1175.0 789.6 L1176.1 789.6 L1176.1 801.1 L1177.1 801.1 L1177.1 819.0 L1178.1 819.0 L1178.1 819.0 L1179.1 819.0 L1179.1 819.0 L1180.1 819.0 L1180.1 819.0 L1181.1 819.0 L1181.1 819.0 L1182.1 819.0 L1182.1 801.1 L1183.1 801.1 L1183.1 801.1 L1184.1 801.1 L1184.1 819.0 L1185.1 819.0 L1185.1 819.0 L1186.1 819.0 L1186.1 801.1 L1187.1 801.1 L1187.1 819.0 L1188.2 819.0 L1188.2 819.0 L1189.2 819.0 L1189.2 819.0 L1190.2 819.0 L1190.2 789.6 L1191.2 789.6 L1191.2 782.9 L1192.2 782.9 L1192.2 789.6 L1193.2 789.6 L1193.2 819.0 L1194.2 819.0 L1194.2 819.0 L1195.2 819.0 L1195.2 819.0 L1196.2 819.0 L1196.2 819.0 L1197.2 819.0 L1197.2 819.0 L1198.2 819.0 L1198.2 819.0 L1199.3 819.0 L1199.3 819.0 L1200.3 819.0 L1200.3 819.0 L1201.3 819.0 L1201.3 819.0 L1202.3 819.0 L1202.3 819.0 L1203.3 819.0 L1203.3 801.1 L1204.3 801.1 L1204.3 801.1 L1205.3 801.1 L1205.3 819.0 L1206.3 819.0 L1206.3 819.0 L1207.3 819.0 L1207.3 819.0 L1208.3 819.0" fill="none" stroke="#c0c0c0" stroke-width="1"/><path d="M355.3 784.0 L356.6 747.8 L357.8 733.1 L359.0 724.5 L360.2 720.6 L361.4 717.0 L362.7 713.5 L363.9 712.5 L365.1 711.6 L366.3 710.5 L367.5 711.0 L368.7 709.8 L370.0 710.0 L371.2 711.3 L372.4 711.4 L373.6 711.3 L374.8 711.1 L376.0 710.0 L377.3 711.0 L378.5 711.7 L379.7 710.1 L380.9 709.8 L382.1 709.7 L383.3 710.9 L384.6 710.0 L385.8 711.3 L387.0 709.4 L388.2 712.1 L389.4 709.9 L390.6 711.3 L391.9 711.2 L393.1 711.2 L394.3 709.2 L395.5 701.9 L396.7 687.7 L398.0 677.2 L399.2 662.8 L400.4 651.4 L401.6 637.8 L402.8 626.4 L404.0 613.1 L405.3 602.6 L406.5 593.4 L407.7 581.7 L408.9 576.4 L410.1 572.9 L411.3 572.8 L412.6 573.7 L413.8 575.8 L415.0 577.1 L416.2 580.5 L417.4 584.2 L418.6 583.9 L419.9 585.2 L421.1 589.0 L422.3 592.3 L423.5 592.9 L424.7 593.4 L426.0 593.7 L427.2 596.5 L428.4 598.9 L429.6 598.9 L430.8 601.4 L432.0 601.4 L433.3 601.7 L434.5 603.1 L435.7 605.2 L436.9 606.0 L438.1 607.1 L439.3 607.8 L440.6 608.8 L441.8 608.9 L443.0 610.5 L444.2 610.7 L445.4 611.3 L446.6 611.8 L447.9 612.1 L449.1 615.1 L450.3 614.7 L451.5 617.8 L452.7 616.5 L453.9 617.8 L455.2 620.0 L456.4 620.5 L457.6 622.5 L458.8 621.8 L460.0 623.5 L461.3 621.6 L462.5 623.0 L463.7 624.4 L464.9 624.5 L466.1 625.6 L467.3 626.2 L468.6 626.2 L469.8 627.9 L471.0 629.3 L472.2 627.4 L473.4 629.1 L474.6 628.9 L475.9 631.1 L477.1 630.2 L478.3 633.6 L479.5 633.5 L480.7 633.5 L481.9 634.8 L483.2 634.6 L484.4 634.5 L485.6 635.1 L486.8 637.0 L488.0 636.1 L489.3 636.3 L490.5 637.6 L491.7 639.1 L492.9 639.8 L494.1 638.8 L495.3 640.3 L496.6 641.5 L497.8 641.7 L499.0 642.4 L500.2 640.3 L501.4 643.3 L502.6 642.8 L503.9 643.2 L505.1 644.1 L506.3 645.4 L507.5 645.2 L508.7 646.9 L509.9 646.9 L511.2 647.0 L512.4 646.9 L513.6 647.8 L514.8 649.0 L516.0 649.2 L517.2 649.6 L518.5 650.7 L519.7 650.7 L520.9 652.3 L522.1 652.4 L523.3 652.6 L524.6 651.9 L525.8 654.5 L527.0 653.1 L528.2 654.7 L529.4 655.2 L530.6 654.6 L531.9 655.7 L533.1 655.3 L534.3 657.7 L535.5 658.1 L536.7 658.1 L537.9 658.4 L539.2 657.8 L540.4 657.9 L541.6 657.4 L542.8 660.1 L544.0 661.0 L545.2 662.8 L546.5 661.8 L547.7 662.2 L548.9 661.1 L550.1 662.5 L551.3 662.7 L552.6 663.6 L553.8 665.4 L555.0 666.3 L556.2 665.3 L557.4 666.5 L558.6 667.8 L559.9 667.1 L561.1 667.0 L562.3 667.3 L563.5 669.4 L564.7 667.1 L565.9 669.2 L567.2 667.7 L568.4 670.1 L569.6 669.6 L570.8 670.8 L572.0 670.0 L573.2 672.0 L574.5 671.2 L575.7 670.6 L576.9 672.0 L578.1 671.4 L579.3 672.4 L580.5 671.7 L581.8 671.8 L583.0 674.4 L584.2 673.8 L585.4 675.3 L586.6 674.7 L587.9 675.2 L589.1 675.5 L590.3 676.6 L591.5 673.9 L592.7 676.0 L593.9 677.7 L595.2 676.7 L596.4 677.2 L597.6 676.8 L598.8 675.6 L600.0 676.4 L601.2 679.3 L602.5 678.3 L603.7 678.9 L604.9 678.7 L606.1 680.2 L607.3 680.8 L608.5 679.2 L609.8 679.1 L611.0 680.6 L612.2 679.5 L613.4 682.3 L614.6 681.4 L615.9 680.7 L617.1 681.4 L618.3 682.2 L619.5 682.3 L620.7 681.6 L621.9 684.5 L623.2 681.8 L624.4 684.0 L625.6 683.2 L626.8 682.9 L628.0 683.5 L629.2 683.7 L630.5 685.1 L631.7 685.8 L632.9 683.2 L634.1 684.9 L635.3 684.5 L636.5 684.7 L637.8 683.7 L639.0 687.2 L640.2 683.8 L641.4 685.9 L642.6 687.9 L643.8 687.9 L645.1 687.7 L646.3 688.0 L647.5 687.2 L648.7 687.3 L649.9 688.5 L651.2 687.7 L652.4 685.9 L653.6 689.1 L654.8 688.0 L656.0 689.3 L657.2 688.1 L658.5 688.9 L659.7 687.6 L660.9 690.3 L662.1 690.6 L663.3 689.9 L664.5 689.8 L665.8 689.4 L667.0 689.8 L668.2 691.3 L669.4 691.5 L670.6 691.6 L671.8 690.1 L673.1 691.9 L674.3 691.3 L675.5 690.5 L676.7 691.3 L677.9 692.1 L679.1 691.4 L680.4 691.4 L681.6 692.6 L682.8 692.9 L684.0 694.2 L685.2 692.1 L686.5 691.9 L687.7 692.7 L688.9 692.5 L690.1 693.1 L691.3 694.3 L692.5 693.7 L693.8 691.9 L695.0 693.3 L696.2 694.8 L697.4 694.4 L698.6 694.3 L699.8 694.1 L701.1 693.4 L702.3 695.6 L703.5 694.6 L704.7 695.4 L705.9 695.7 L707.1 696.7 L708.4 696.3 L709.6 696.7 L710.8 696.0 L712.0 695.4 L713.2 698.1 L714.5 695.9 L715.7 695.8 L716.9 696.4 L718.1 696.1 L719.3 696.1 L720.5 697.6 L721.8 697.3 L723.0 698.1 L724.2 696.3 L725.4 697.2 L726.6 698.5 L727.8 699.0 L729.1 697.5 L730.3 696.6 L731.5 697.8 L732.7 698.6 L733.9 698.0 L735.1 697.1 L736.4 698.2 L737.6 698.2 L738.8 699.3 L740.0 699.3 L741.2 699.0 L742.4 700.0 L743.7 699.1 L744.9 700.4 L746.1 697.6 L747.3 699.0 L748.5 699.9 L749.8 699.4 L751.0 699.9 L752.2 699.2 L753.4 701.0 L754.6 700.8 L755.8 701.5 L757.1 700.2 L758.3 701.5 L759.5 701.0 L760.7 700.5 L761.9 702.1 L763.1 698.9 L764.4 701.3 L765.6 703.1 L766.8 700.3 L768.0 703.6 L769.2 702.5 L770.4 703.1 L771.7 700.4 L772.9 702.6 L774.1 702.7 L775.3 701.6 L776.5 701.9 L777.8 702.6 L779.0 703.5 L780.2 703.6 L781.4 700.3 L782.6 701.7 L783.8 700.9 L785.1 703.1 L786.3 701.9 L787.5 702.1 L788.7 701.3 L789.9 702.4 L791.1 702.6 L792.4 702.5 L793.6 704.3 L794.8 703.1 L796.0 703.3 L797.2 701.2 L798.4 703.6 L799.7 702.0 L800.9 701.7 L802.1 703.7 L803.3 704.4 L804.5 704.4 L805.7 703.1 L807.0 704.2 L808.2 703.7 L809.4 703.4 L810.6 703.7 L811.8 705.4 L813.1 705.7 L814.3 704.2 L815.5 704.1 L816.7 704.7 L817.9 703.0 L819.1 703.3 L820.4 704.3 L821.6 704.6 L822.8 703.8 L824.0 704.4 L825.2 705.6 L826.4 703.6 L827.7 705.1 L828.9 705.8 L830.1 705.5 L831.3 706.2 L832.5 704.6 L833.7 704.5 L835.0 706.8 L836.2 703.4 L837.4 704.6 L838.6 704.7 L839.8 707.8 L841.1 703.2 L842.3 703.0 L843.5 704.6 L844.7 705.4 L845.9 706.2 L847.1 706.3 L848.4 707.0 L849.6 706.3 L850.8 704.9 L852.0 705.0 L853.2 705.0 L854.4 703.6 L855.7 705.5 L856.9 706.7 L858.1 704.8 L859.3 705.2 L860.5 705.5 L861.7 706.2 L863.0 704.8 L864.2 705.7 L865.4 704.6 L866.6 705.7 L867.8 707.1 L869.0 706.5 L870.3 704.9 L871.5 706.7 L872.7 706.7 L873.9 705.1 L875.1 706.4 L876.4 707.5 L877.6 707.6 L878.8 706.5 L880.0 706.0 L881.2 706.2 L882.4 706.9 L883.7 708.3 L884.9 705.6 L886.1 706.5 L887.3 707.0 L888.5 706.4 L889.7 708.2 L891.0 708.0 L892.2 707.0 L893.4 707.6 L894.6 706.4 L895.8 707.3 L897.0 707.2 L898.3 706.8 L899.5 707.0 L900.7 707.2 L901.9 707.5 L903.1 707.6 L904.4 706.9 L905.6 708.0 L906.8 708.5 L908.0 708.3 L909.2 706.5 L910.4 707.9 L911.7 707.3 L912.9 707.4 L914.1 705.8 L915.3 708.3 L916.5 706.5 L917.7 708.4 L919.0 707.0 L920.2 706.0 L921.4 706.6 L922.6 707.5 L923.8 706.0 L925.0 708.7 L926.3 707.7 L927.5 708.1 L928.7 706.5 L929.9 707.8 L931.1 707.8 L932.3 707.1 L933.6 708.9 L934.8 705.9 L936.0 708.7 L937.2 708.1 L938.4 708.0 L939.7 707.3 L940.9 707.1 L942.1 708.2 L943.3 708.7 L944.5 706.9 L945.7 706.8 L947.0 708.0 L948.2 710.7 L949.4 706.9 L950.6 706.4 L951.8 709.6 L953.0 708.7 L954.3 707.3 L955.5 707.5 L956.7 708.3 L957.9 710.0 L959.1 707.9 L960.3 707.7 L961.6 709.2 L962.8 708.3 L964.0 708.4 L965.2 708.1 L966.4 709.1 L967.7 706.6 L968.9 709.7 L970.1 708.7 L971.3 707.6 L972.5 708.1 L973.7 709.0 L975.0 709.5 L976.2 709.4 L977.4 708.0 L978.6 708.5 L979.8 709.5 L981.0 710.6 L982.3 708.2 L983.5 708.7 L984.7 707.9 L985.9 711.0 L987.1 708.1 L988.3 709.4 L989.6 708.4 L990.8 709.4 L992.0 708.7 L993.2 710.5 L994.4 708.0 L995.6 707.9 L996.9 709.2 L998.1 710.8 L999.3 707.7 L1000.5 707.9 L1001.7 708.7 L1003.0 708.0 L1004.2 709.9 L1005.4 707.2 L1006.6 709.0 L1007.8 706.3 L1009.0 709.4 L1010.3 708.5 L1011.5 709.4 L1012.7 708.9 L1013.9 709.9 L1015.1 709.3 L1016.3 708.7 L1017.6 708.8 L1018.8 708.4 L1020.0 710.3 L1021.2 708.2 L1022.4 711.3 L1023.6 709.7 L1024.9 709.2 L1026.1 710.5 L1027.3 712.2 L1028.5 709.5 L1029.7 709.9 L1030.9 708.8 L1032.2 708.8 L1033.4 711.0 L1034.6 709.2 L1035.8 709.8 L1037.0 710.1 L1038.3 708.6 L1039.5 710.1 L1040.7 708.8 L1041.9 709.8 L1043.1 711.2 L1044.3 709.7 L1045.6 710.8 L1046.8 710.5 L1048.0 711.6 L1049.2 710.2 L1050.4 708.7 L1051.6 709.2 L1052.9 709.6 L1054.1 710.3 L1055.3 711.2 L1056.5 710.0 L1057.7 709.5 L1058.9 710.2 L1060.2 710.7 L1061.4 709.0 L1062.6 708.9 L1063.8 709.0 L1065.0 709.4 L1066.3 709.6 L1067.5 709.1 L1068.7 712.4 L1069.9 709.7 L1071.1 709.1 L1072.3 709.8 L1073.6 710.8 L1074.8 710.1 L1076.0 707.1 L1077.2 708.7 L1078.4 710.8 L1079.6 709.1 L1080.9 708.3 L1082.1 710.8 L1083.3 709.8 L1084.5 711.3 L1085.7 710.1 L1086.9 709.7 L1088.2 709.1 L1089.4 711.2 L1090.6 710.7 L1091.8 709.5 L1093.0 708.7 L1094.2 709.3 L1095.5 708.8 L1096.7 710.3 L1097.9 708.0 L1099.1 711.1 L1100.3 710.2 L1101.6 709.8 L1102.8 712.0 L1104.0 712.0 L1105.2 708.5 L1106.4 709.9 L1107.6 709.3 L1108.9 711.4 L1110.1 711.7 L1111.3 711.9 L1112.5 710.6 L1113.7 711.3 L1114.9 710.0 L1116.2 709.1 L1117.4 710.0 L1118.6 709.8 L1119.8 712.2 L1121.0 711.7 L1122.2 708.2 L1123.5 710.2 L1124.7 710.8 L1125.9 712.0 L1127.1 708.2 L1128.3 711.7 L1129.6 711.0 L1130.8 710.8 L1132.0 711.4 L1133.2 710.0 L1134.4 709.6 L1135.6 709.4 L1136.9 710.4 L1138.1 710.3 L1139.3 712.5 L1140.5 711.6 L1141.7 711.6 L1142.9 710.1 L1144.2 711.6 L1145.4 709.8 L1146.6 710.9 L1147.8 711.9 L1149.0 710.4 L1150.2 709.3 L1151.5 709.8 L1152.7 711.8 L1153.9 709.4 L1155.1 711.1 L1156.3 710.0 L1157.5 710.9 L1158.8 710.0 L1160.0 711.9 L1161.2 710.8 L1162.4 711.0 L1163.6 709.4 L1164.9 711.5 L1166.1 711.0 L1167.3 711.9 L1168.5 710.7 L1169.7 710.3 L1170.9 712.4 L1172.2 711.8 L1173.4 710.0 L1174.6 710.2 L1175.8 709.8 L1177.0 709.3 L1178.2 710.7 L1179.5 711.8 L1180.7 709.6 L1181.9 709.9 L1183.1 711.8 L1184.3 711.8 L1185.5 710.4 L1186.8 710.7 L1188.0 709.6 L1189.2 710.5 L1190.4 710.7 L1191.6 711.6 L1192.9 709.0 L1194.1 711.0 L1195.3 711.1 L1196.5 710.8 L1197.7 711.2 L1198.9 711.3 L1200.2 711.0" fill="none" stroke="#006828" stroke-width="2"/><path d="M393.4 726.8 L395.7 686.8 L398.0 654.4 L400.9 614.4 L403.9 585.8 L405.4 575.5 L406.8 572.5 L408.7 574.4 L411.3 582.0 L413.4 614.4 L415.5 648.7" fill="none" stroke="#ee0000" stroke-width="2"/><path d="M366.8 710.8 L367.7 710.8 L368.6 710.8 L369.4 710.8 L370.3 710.8 L371.2 710.8 L372.0 710.8 L372.9 710.8 L373.8 710.8 L374.7 710.8 L375.5 710.8 L376.4 710.8 L377.3 710.8 L378.1 710.8 L379.0 710.8 L379.9 710.8 L380.7 710.8 L381.6 710.8 L382.5 710.8 L383.3 710.8 L384.2 710.8 L385.1 710.8 L386.0 710.8 L386.8 710.8 L387.7 710.8 L388.6 710.8 L389.4 710.8 L390.3 710.8 L391.2 710.8 L392.0 710.8 L392.9 710.8 L393.8 710.8 L394.6 708.8 L395.5 702.2 L396.4 693.0 L397.3 683.8 L398.1 674.6 L399.0 665.5 L399.9 656.3 L400.7 647.5 L401.6 638.8 L402.5 630.2 L403.3 621.5 L404.2 612.9 L405.1 604.2 L406.0 596.0 L406.8 589.9 L407.7 583.8 L408.6 578.7 L409.4 575.1 L410.3 573.5 L411.2 572.6 L412.0 573.1 L412.9 574.0 L413.8 575.3 L414.6 576.9 L415.5 578.6 L416.4 580.4 L417.3 582.1 L418.1 583.8 L419.0 585.5 L419.9 587.2 L420.7 589.0 L421.6 590.2 L422.5 591.2 L423.3 592.1 L424.2 593.1 L425.1 594.0 L426.0 595.0 L426.8 595.9 L427.7 596.9 L428.6 597.8 L429.4 598.7 L430.3 599.5 L431.2 600.3 L432.0 601.1 L432.9 601.9 L433.8 602.8 L434.6 603.6 L435.5 604.4 L436.4 605.2 L437.3 605.8 L438.1 606.5 L439.0 607.2 L439.9 607.9 L440.7 608.5 L441.6 609.2 L442.5 609.9 L443.3 610.5 L444.2 611.2 L445.1 611.9 L446.0 612.6 L446.8 613.2 L447.7 613.9 L448.6 614.6 L449.4 615.3 L450.3 615.9 L451.2 616.6 L452.0 617.3 L452.9 618.0 L453.8 618.6 L454.6 619.3 L455.5 620.0 L456.4 620.5 L457.3 620.9 L458.1 621.4 L459.0 621.8 L459.9 622.3 L460.7 622.7 L461.6 623.2 L462.5 623.6 L463.3 624.1 L464.2 624.5 L465.1 625.0 L465.9 625.4 L466.8 625.9 L467.7 626.3 L468.6 626.8 L469.4 627.2 L470.3 627.7 L471.2 628.1 L472.0 628.6 L472.9 629.0 L473.8 629.4 L474.6 629.9 L475.5 630.3 L476.4 630.8 L477.3 631.2 L478.1 631.7 L479.0 632.1 L479.9 632.6 L480.7 633.0 L481.6 633.5 L482.5 633.9 L483.3 634.4 L484.2 634.8 L485.1 635.3 L485.9 635.7 L486.8 636.1 L487.7 636.5 L488.6 636.8 L489.4 637.2 L490.3 637.6 L491.2 638.0 L492.0 638.4 L492.9 638.8 L493.8 639.2 L494.6 639.6 L495.5 640.0 L496.4 640.4 L497.3 640.7 L498.1 641.1 L499.0 641.5 L499.9 641.9 L500.7 642.3 L501.6 642.7 L502.5 643.1 L503.3 643.5 L504.2 643.9 L505.1 644.2 L505.9 644.6 L506.8 645.0 L507.7 645.4 L508.6 645.8 L509.4 646.2 L510.3 646.6 L511.2 647.0 L512.0 647.4 L512.9 647.8 L513.8 648.1 L514.6 648.5 L515.5 648.9 L516.4 649.3 L517.2 649.7 L518.1 650.1 L519.0 650.5 L519.9 650.9 L520.7 651.3 L521.6 651.7 L522.5 652.0 L523.3 652.4 L524.2 652.8 L525.1 653.1 L525.9 653.5 L526.8 653.8 L527.7 654.2 L528.6 654.5 L529.4 654.9 L530.3 655.2 L531.2 655.6 L532.0 655.9 L532.9 656.3 L533.8 656.6 L534.6 656.9 L535.5 657.3 L536.4 657.6 L537.2 658.0 L538.1 658.3 L539.0 658.7 L539.9 659.0 L540.7 659.4 L541.6 659.7 L542.5 660.1 L543.3 660.4 L544.2 660.8 L545.1 661.1 L545.9 661.4 L546.8 661.8 L547.7 662.1 L548.6 662.5 L549.4 662.8 L550.3 663.2 L551.2 663.5 L552.0 663.9 L552.9 664.2 L553.8 664.6 L554.6 664.9 L555.5 665.3 L556.4 665.6 L557.2 665.9 L558.1 666.3 L559.0 666.6 L559.9 667.0 L560.7 667.3 L561.6 667.7 L562.5 667.9 L563.3 668.2 L564.2 668.4 L565.1 668.7 L565.9 668.9 L566.8 669.1 L567.7 669.4 L568.5 669.6 L569.4 669.8 L570.3 670.1 L571.2 670.3 L572.0 670.5 L572.9 670.8 L573.8 671.0 L574.6 671.3 L575.5 671.5 L576.4 671.7 L577.2 672.0 L578.1 672.2 L579.0 672.4 L579.9 672.7 L580.7 672.9 L581.6 673.2 L582.5 673.4 L583.3 673.6 L584.2 673.9 L585.1 674.1 L585.9 674.3 L586.8 674.6 L587.7 674.8 L588.5 675.1 L589.4 675.3 L590.3 675.5 L591.2 675.8 L592.0 676.0 L592.9 676.2 L593.8 676.5 L594.6 676.7 L595.5 676.9 L596.4 677.2 L597.2 677.4 L598.1 677.7 L599.0 677.9 L599.9 678.1 L600.7 678.4 L601.6 678.6 L602.5 678.7 L603.3 678.9 L604.2 679.1 L605.1 679.2 L605.9 679.4 L606.8 679.6 L607.7 679.8 L608.5 679.9 L609.4 680.1 L610.3 680.3 L611.2 680.5 L612.0 680.6 L612.9 680.8 L613.8 681.0 L614.6 681.2 L615.5 681.3 L616.4 681.5 L617.2 681.7 L618.1 681.8 L619.0 682.0 L619.9 682.2 L620.7 682.4 L621.6 682.5 L622.5 682.7 L623.3 682.9 L624.2 683.1 L625.1 683.2 L625.9 683.4 L626.8 683.6 L627.7 683.8 L628.5 683.9 L629.4 684.1 L630.3 684.3 L631.2 684.4 L632.0 684.6 L632.9 684.8 L633.8 685.0 L634.6 685.1 L635.5 685.3 L636.4 685.5 L637.2 685.7 L638.1 685.8 L639.0 686.0 L639.8 686.1 L640.7 686.3 L641.6 686.4 L642.5 686.5 L643.3 686.7 L644.2 686.8 L645.1 686.9 L645.9 687.1 L646.8 687.2 L647.7 687.3 L648.5 687.4 L649.4 687.6 L650.3 687.7 L651.2 687.8 L652.0 688.0 L652.9 688.1 L653.8 688.2 L654.6 688.3 L655.5 688.5 L656.4 688.6 L657.2 688.7 L658.1 688.9 L659.0 689.0 L659.8 689.1 L660.7 689.3 L661.6 689.4 L662.5 689.5 L663.3 689.6 L664.2 689.8 L665.1 689.9 L665.9 690.0 L666.8 690.2 L667.7 690.3 L668.5 690.4 L669.4 690.6 L670.3 690.7 L671.2 690.8 L672.0 690.9 L672.9 691.1 L673.8 691.2 L674.6 691.3 L675.5 691.5 L676.4 691.6 L677.2 691.7 L678.1 691.8 L679.0 692.0 L679.8 692.1 L680.7 692.2 L681.6 692.3 L682.5 692.4 L683.3 692.5 L684.2 692.6 L685.1 692.7 L685.9 692.9 L686.8 693.0 L687.7 693.1 L688.5 693.2 L689.4 693.3 L690.3 693.4 L691.1 693.5 L692.0 693.6 L692.9 693.8 L693.8 693.9 L694.6 694.0 L695.5 694.1 L696.4 694.2 L697.2 694.3 L698.1 694.4 L699.0 694.5 L699.8 694.7 L700.7 694.8 L701.6 694.9 L702.5 695.0 L703.3 695.1 L704.2 695.2 L705.1 695.3 L705.9 695.4 L706.8 695.6 L707.7 695.7 L708.5 695.8 L709.4 695.9 L710.3 696.0 L711.1 696.1 L712.0 696.2 L712.9 696.3 L713.8 696.5 L714.6 696.6 L715.5 696.7 L716.4 696.8 L717.2 696.9 L718.1 697.0 L719.0 697.0 L719.8 697.1 L720.7 697.2 L721.6 697.3 L722.5 697.4 L723.3 697.5 L724.2 697.6 L725.1 697.7 L725.9 697.7 L726.8 697.8 L727.7 697.9 L728.5 698.0 L729.4 698.1 L730.3 698.2 L731.1 698.3 L732.0 698.4 L732.9 698.4 L733.8 698.5 L734.6 698.6 L735.5 698.7 L736.4 698.8 L737.2 698.9 L738.1 699.0 L739.0 699.1 L739.8 699.2 L740.7 699.2 L741.6 699.3 L742.4 699.4 L743.3 699.5 L744.2 699.6 L745.1 699.7 L745.9 699.8 L746.8 699.9 L747.7 699.9 L748.5 700.0 L749.4 700.1 L750.3 700.2 L751.1 700.3 L752.0 700.4 L752.9 700.5 L753.8 700.6 L754.6 700.6 L755.5 700.7 L756.4 700.8 L757.2 700.9 L758.1 701.0 L759.0 701.1 L759.8 701.2 L760.7 701.3 L761.6 701.3 L762.4 701.4 L763.3 701.4 L764.2 701.4 L765.1 701.5 L765.9 701.5 L766.8 701.6 L767.7 701.6 L768.5 701.7 L769.4 701.7 L770.3 701.8 L771.1 701.8 L772.0 701.8 L772.9 701.9 L773.8 701.9 L774.6 702.0 L775.5 702.0 L776.4 702.1 L777.2 702.1 L778.1 702.2 L779.0 702.2 L779.8 702.2 L780.7 702.3 L781.6 702.3 L782.4 702.4 L783.3 702.4 L784.2 702.5 L785.1 702.5 L785.9 702.6 L786.8 702.6 L787.7 702.6 L788.5 702.7 L789.4 702.7 L790.3 702.8 L791.1 702.8 L792.0 702.9 L792.9 702.9 L793.8 703.0 L794.6 703.0 L795.5 703.0 L796.4 703.1 L797.2 703.1 L798.1 703.2 L799.0 703.2 L799.8 703.3 L800.7 703.3 L801.6 703.4 L802.4 703.4 L803.3 703.4 L804.2 703.5 L805.1 703.5 L805.9 703.6 L806.8 703.6 L807.7 703.7 L808.5 703.7 L809.4 703.8 L810.3 703.8 L811.1 703.8 L812.0 703.9 L812.9 703.9 L813.7 704.0 L814.6 704.0 L815.5 704.1 L816.4 704.1 L817.2 704.1 L818.1 704.2 L819.0 704.2 L819.8 704.3 L820.7 704.3 L821.6 704.4 L822.4 704.4 L823.3 704.5 L824.2 704.5 L825.1 704.5 L825.9 704.6 L826.8 704.6 L827.7 704.7 L828.5 704.7 L829.4 704.8 L830.3 704.8 L831.1 704.9 L832.0 704.9 L832.9 704.9 L833.7 705.0 L834.6 705.0 L835.5 705.1 L836.4 705.1 L837.2 705.1 L838.1 705.2 L839.0 705.2 L839.8 705.2 L840.7 705.3 L841.6 705.3 L842.4 705.3 L843.3 705.3 L844.2 705.4 L845.1 705.4 L845.9 705.4 L846.8 705.5 L847.7 705.5 L848.5 705.5 L849.4 705.5 L850.3 705.6 L851.1 705.6 L852.0 705.6 L852.9 705.7 L853.7 705.7 L854.6 705.7 L855.5 705.7 L856.4 705.8 L857.2 705.8 L858.1 705.8 L859.0 705.9 L859.8 705.9 L860.7 705.9 L861.6 705.9 L862.4 706.0 L863.3 706.0 L864.2 706.0 L865.0 706.1 L865.9 706.1 L866.8 706.1 L867.7 706.1 L868.5 706.2 L869.4 706.2 L870.3 706.2 L871.1 706.3 L872.0 706.3 L872.9 706.3 L873.7 706.3 L874.6 706.4 L875.5 706.4 L876.4 706.4 L877.2 706.5 L878.1 706.5 L879.0 706.5 L879.8 706.5 L880.7 706.6 L881.6 706.6 L882.4 706.6 L883.3 706.7 L884.2 706.7 L885.0 706.7 L885.9 706.7 L886.8 706.8 L887.7 706.8 L888.5 706.8 L889.4 706.9 L890.3 706.9 L891.1 706.9 L892.0 706.9 L892.9 707.0 L893.7 707.0 L894.6 707.0 L895.5 707.1 L896.4 707.1 L897.2 707.1 L898.1 707.1 L899.0 707.2 L899.8 707.2 L900.7 707.2 L901.6 707.3 L902.4 707.3 L903.3 707.3 L904.2 707.3 L905.0 707.4 L905.9 707.4 L906.8 707.4 L907.7 707.4 L908.5 707.4 L909.4 707.4 L910.3 707.5 L911.1 707.5 L912.0 707.5 L912.9 707.5 L913.7 707.5 L914.6 707.5 L915.5 707.5 L916.3 707.6 L917.2 707.6 L918.1 707.6 L919.0 707.6 L919.8 707.6 L920.7 707.6 L921.6 707.6 L922.4 707.7 L923.3 707.7 L924.2 707.7 L925.0 707.7 L925.9 707.7 L926.8 707.7 L927.7 707.7 L928.5 707.8 L929.4 707.8 L930.3 707.8 L931.1 707.8 L932.0 707.8 L932.9 707.8 L933.7 707.8 L934.6 707.9 L935.5 707.9 L936.3 707.9 L937.2 707.9 L938.1 707.9 L939.0 707.9 L939.8 707.9 L940.7 708.0 L941.6 708.0 L942.4 708.0 L943.3 708.0 L944.2 708.0 L945.0 708.0 L945.9 708.0 L946.8 708.1 L947.7 708.1 L948.5 708.1 L949.4 708.1 L950.3 708.1 L951.1 708.1 L952.0 708.1 L952.9 708.2 L953.7 708.2 L954.6 708.2 L955.5 708.2 L956.3 708.2 L957.2 708.2 L958.1 708.2 L959.0 708.3 L959.8 708.3 L960.7 708.3 L961.6 708.3 L962.4 708.3 L963.3 708.3 L964.2 708.3 L965.0 708.4 L965.9 708.4 L966.8 708.4 L967.7 708.4 L968.5 708.4 L969.4 708.4 L970.3 708.4 L971.1 708.5 L972.0 708.5 L972.9 708.5 L973.7 708.5 L974.6 708.5 L975.5 708.5 L976.3 708.5 L977.2 708.6 L978.1 708.6 L979.0 708.6 L979.8 708.6 L980.7 708.6 L981.6 708.6 L982.4 708.6 L983.3 708.7 L984.2 708.7 L985.0 708.7 L985.9 708.7 L986.8 708.7 L987.6 708.7 L988.5 708.7 L989.4 708.8 L990.3 708.8 L991.1 708.8 L992.0 708.8 L992.9 708.8 L993.7 708.8 L994.6 708.8 L995.5 708.9 L996.3 708.9 L997.2 708.9 L998.1 708.9 L999.0 708.9 L999.8 708.9 L1000.7 708.9 L1001.6 709.0 L1002.4 709.0 L1003.3 709.0 L1004.2 709.0 L1005.0 709.0 L1005.9 709.0 L1006.8 709.0 L1007.6 709.1 L1008.5 709.1 L1009.4 709.1 L1010.3 709.1 L1011.1 709.1 L1012.0 709.1 L1012.9 709.1 L1013.7 709.2 L1014.6 709.2 L1015.5 709.2 L1016.3 709.2 L1017.2 709.2 L1018.1 709.2 L1019.0 709.2 L1019.8 709.3 L1020.7 709.3 L1021.6 709.3 L1022.4 709.3 L1023.3 709.3 L1024.2 709.3 L1025.0 709.3 L1025.9 709.4 L1026.8 709.4 L1027.6 709.4 L1028.5 709.4 L1029.4 709.4 L1030.3 709.4 L1031.1 709.4 L1032.0 709.5 L1032.9 709.5 L1033.7 709.5 L1034.6 709.5 L1035.5 709.5 L1036.3 709.5 L1037.2 709.5 L1038.1 709.6 L1038.9 709.6 L1039.8 709.6 L1040.7 709.6 L1041.6 709.6 L1042.4 709.6 L1043.3 709.6 L1044.2 709.7 L1045.0 709.7 L1045.9 709.7 L1046.8 709.7 L1047.6 709.7 L1048.5 709.7 L1049.4 709.7 L1050.3 709.7 L1051.1 709.7 L1052.0 709.7 L1052.9 709.7 L1053.7 709.7 L1054.6 709.7 L1055.5 709.8 L1056.3 709.8 L1057.2 709.8 L1058.1 709.8 L1058.9 709.8 L1059.8 709.8 L1060.7 709.8 L1061.6 709.8 L1062.4 709.8 L1063.3 709.8 L1064.2 709.8 L1065.0 709.8 L1065.9 709.8 L1066.8 709.8 L1067.6 709.9 L1068.5 709.9 L1069.4 709.9 L1070.3 709.9 L1071.1 709.9 L1072.0 709.9 L1072.9 709.9 L1073.7 709.9 L1074.6 709.9 L1075.5 709.9 L1076.3 709.9 L1077.2 709.9 L1078.1 709.9 L1078.9 709.9 L1079.8 710.0 L1080.7 710.0 L1081.6 710.0 L1082.4 710.0 L1083.3 710.0 L1084.2 710.0 L1085.0 710.0 L1085.9 710.0 L1086.8 710.0 L1087.6 710.0 L1088.5 710.0 L1089.4 710.0 L1090.2 710.0 L1091.1 710.0 L1092.0 710.1 L1092.9 710.1 L1093.7 710.1 L1094.6 710.1 L1095.5 710.1 L1096.3 710.1 L1097.2 710.1 L1098.1 710.1 L1098.9 710.1 L1099.8 710.1 L1100.7 710.1 L1101.6 710.1 L1102.4 710.1 L1103.3 710.1 L1104.2 710.2 L1105.0 710.2 L1105.9 710.2 L1106.8 710.2 L1107.6 710.2 L1108.5 710.2 L1109.4 710.2 L1110.2 710.2 L1111.1 710.2 L1112.0 710.2 L1112.9 710.2 L1113.7 710.2 L1114.6 710.2 L1115.5 710.2 L1116.3 710.3 L1117.2 710.3 L1118.1 710.3 L1118.9 710.3 L1119.8 710.3 L1120.7 710.3 L1121.6 710.3 L1122.4 710.3 L1123.3 710.3 L1124.2 710.3 L1125.0 710.3 L1125.9 710.3 L1126.8 710.3 L1127.6 710.3 L1128.5 710.4 L1129.4 710.4 L1130.2 710.4 L1131.1 710.4 L1132.0 710.4 L1132.9 710.4 L1133.7 710.4 L1134.6 710.4 L1135.5 710.4 L1136.3 710.4 L1137.2 710.4 L1138.1 710.4 L1138.9 710.4 L1139.8 710.4 L1140.7 710.5 L1141.6 710.5 L1142.4 710.5 L1143.3 710.5 L1144.2 710.5 L1145.0 710.5 L1145.9 710.5 L1146.8 710.5 L1147.6 710.5 L1148.5 710.5 L1149.4 710.5 L1150.2 710.5 L1151.1 710.5 L1152.0 710.5 L1152.9 710.6 L1153.7 710.6 L1154.6 710.6 L1155.5 710.6 L1156.3 710.6 L1157.2 710.6 L1158.1 710.6 L1158.9 710.6 L1159.8 710.6 L1160.7 710.6 L1161.5 710.6 L1162.4 710.6 L1163.3 710.6 L1164.2 710.6 L1165.0 710.7 L1165.9 710.7 L1166.8 710.7 L1167.6 710.7 L1168.5 710.7 L1169.4 710.7 L1170.2 710.7 L1171.1 710.7 L1172.0 710.7 L1172.9 710.7 L1173.7 710.7 L1174.6 710.7 L1175.5 710.7 L1176.3 710.7 L1177.2 710.8 L1178.1 710.8 L1178.9 710.8 L1179.8 710.8 L1180.7 710.8 L1181.5 710.8 L1182.4 710.8 L1183.3 710.8 L1184.2 710.8 L1185.0 710.8 L1185.9 710.8 L1186.8 710.8 L1187.6 710.8 L1188.5 710.9 L1189.4 710.9 L1190.2 710.9 L1191.1 710.9 L1192.0 710.9 L1192.9 710.9 L1193.7 710.9 L1194.6 710.9 L1195.5 710.9" fill="none" stroke="#000" stroke-width="2.2" stroke-linejoin="round"/></g><path d="M366.8 870.6 L367.4 872.1 L368.0 871.5 L368.7 874.0 L369.3 871.9 L369.9 863.3 L370.5 868.7 L371.1 870.7 L371.7 868.3 L372.3 869.5 L372.9 874.3 L373.5 869.3 L374.1 874.7 L374.7 864.1 L375.3 871.3 L376.0 870.0 L376.6 873.2 L377.2 873.7 L377.8 869.9 L378.4 869.3 L379.0 874.6 L379.6 870.8 L380.2 877.6 L380.8 870.3 L381.4 873.1 L382.0 871.2 L382.7 866.8 L383.3 866.9 L383.9 867.8 L384.5 870.6 L385.1 872.2 L385.7 867.1 L386.3 870.0 L386.9 867.0 L387.5 867.1 L388.1 869.4 L388.7 874.0 L389.3 874.3 L390.0 868.4 L390.6 874.9 L391.2 869.4 L391.8 877.4 L392.4 872.7 L393.0 876.9 L393.6 872.4 L394.2 877.0 L394.8 874.1 L395.4 876.9 L396.0 878.4 L396.6 878.6 L397.3 878.6 L397.9 883.4 L398.5 884.5 L399.1 883.9 L399.7 883.8 L400.3 880.1 L400.9 871.7 L401.5 870.4 L402.1 863.3 L402.7 861.7 L403.3 852.8 L404.0 846.8 L404.6 846.1 L405.2 845.9 L405.8 845.8 L406.4 841.9 L407.0 852.3 L407.6 853.7 L408.2 863.1 L408.8 866.0 L409.4 877.3 L410.0 888.8 L410.6 887.5 L411.3 897.8 L411.9 892.2 L412.5 905.4 L413.1 902.3 L413.7 902.2 L414.3 901.6 L414.9 894.4 L415.5 877.8 L416.1 875.0 L416.7 858.4 L417.3 856.8 L418.0 830.4 L418.6 824.4 L419.2 829.9 L419.8 835.6 L420.4 841.0 L421.0 839.7 L421.6 852.2 L422.2 859.0 L422.8 864.0 L423.4 871.7 L424.0 883.9 L424.6 880.4 L425.3 891.0 L425.9 891.5 L426.5 899.0 L427.1 897.2 L427.7 893.0 L428.3 886.7 L428.9 890.2 L429.5 884.8 L430.1 884.2 L430.7 889.5 L431.3 882.9 L432.0 885.7 L432.6 878.4 L433.2 876.4 L433.8 875.0 L434.4 876.4 L435.0 864.6 L435.6 868.1 L436.2 868.9 L436.8 871.1 L437.4 872.9 L438.0 866.8 L438.6 864.6 L439.3 863.1 L439.9 865.7 L440.5 865.4 L441.1 864.2 L441.7 861.3 L442.3 862.9 L442.9 860.8 L443.5 861.7 L444.1 867.2 L444.7 857.6 L445.3 866.2 L446.0 864.4 L446.6 860.7 L447.2 866.3 L447.8 862.7 L448.4 864.5 L449.0 858.7 L449.6 858.9 L450.2 856.2 L450.8 860.8 L451.4 860.8 L452.0 863.0 L452.6 865.9 L453.3 858.7 L453.9 860.6 L454.5 862.6 L455.1 860.7 L455.7 863.6 L456.3 857.9 L456.9 867.0 L457.5 865.4 L458.1 864.9 L458.7 861.8 L459.3 864.3 L459.9 856.1 L460.6 864.5 L461.2 864.2 L461.8 869.1 L462.4 868.2 L463.0 870.3 L463.6 869.5 L464.2 875.6 L464.8 874.5 L465.4 864.9 L466.0 873.7 L466.6 871.5 L467.3 867.1 L467.9 873.1 L468.5 869.7 L469.1 871.3 L469.7 874.3 L470.3 871.9 L470.9 868.8 L471.5 872.3 L472.1 872.5 L472.7 875.8 L473.3 872.6 L473.9 874.0 L474.6 877.4 L475.2 877.4 L475.8 877.2 L476.4 872.7 L477.0 875.6 L477.6 874.6 L478.2 878.6 L478.8 870.1 L479.4 878.5 L480.0 869.7 L480.6 873.2 L481.3 876.6 L481.9 871.0 L482.5 872.0 L483.1 875.2 L483.7 872.7 L484.3 868.4 L484.9 874.3 L485.5 873.1 L486.1 873.9 L486.7 875.6 L487.3 874.7 L487.9 871.4 L488.6 873.9 L489.2 873.9 L489.8 871.3 L490.4 875.7 L491.0 870.6 L491.6 872.3 L492.2 873.3 L492.8 873.9 L493.4 876.1 L494.0 878.4 L494.6 875.7 L495.3 874.0 L495.9 877.0 L496.5 877.8 L497.1 873.2 L497.7 876.2 L498.3 872.2 L498.9 872.9 L499.5 876.1 L500.1 875.0 L500.7 871.5 L501.3 876.8 L501.9 871.8 L502.6 873.4 L503.2 872.9 L503.8 870.3 L504.4 875.0 L505.0 880.2 L505.6 873.6 L506.2 871.7 L506.8 875.7 L507.4 863.5 L508.0 872.7 L508.6 873.7 L509.2 872.3 L509.9 865.8 L510.5 873.5 L511.1 867.6 L511.7 870.0 L512.3 878.0 L512.9 880.9 L513.5 862.1 L514.1 874.1 L514.7 866.2 L515.3 869.2 L515.9 864.2 L516.6 873.3 L517.2 876.7 L517.8 875.9 L518.4 875.3 L519.0 872.9 L519.6 867.4 L520.2 878.7 L520.8 875.1 L521.4 867.7 L522.0 871.7 L522.6 869.8 L523.2 873.5 L523.9 879.4 L524.5 870.5 L525.1 871.8 L525.7 870.8 L526.3 870.6 L526.9 870.1 L527.5 870.9 L528.1 869.8 L528.7 874.3 L529.3 864.8 L529.9 867.2 L530.6 872.3 L531.2 874.2 L531.8 867.1 L532.4 867.2 L533.0 872.7 L533.6 873.6 L534.2 868.9 L534.8 877.3 L535.4 870.9 L536.0 871.9 L536.6 864.8 L537.2 873.3 L537.9 869.1 L538.5 872.8 L539.1 879.1 L539.7 864.2 L540.3 874.4 L540.9 873.6 L541.5 866.8 L542.1 868.9 L542.7 872.7 L543.3 872.1 L543.9 870.7 L544.6 874.7 L545.2 871.3 L545.8 871.1 L546.4 867.6 L547.0 867.1 L547.6 864.9 L548.2 866.7 L548.8 867.7 L549.4 869.6 L550.0 872.0 L550.6 872.8 L551.2 869.7 L551.9 870.1 L552.5 871.4 L553.1 874.2 L553.7 868.4 L554.3 872.4 L554.9 867.4 L555.5 871.2 L556.1 864.8 L556.7 869.8 L557.3 868.8 L557.9 873.6 L558.6 869.0 L559.2 868.6 L559.8 870.5 L560.4 872.3 L561.0 872.8 L561.6 865.1 L562.2 875.4 L562.8 871.5 L563.4 872.9 L564.0 866.8 L564.6 870.3 L565.2 872.8 L565.9 876.0 L566.5 868.2 L567.1 866.7 L567.7 871.6 L568.3 869.1 L568.9 869.4 L569.5 868.4 L570.1 870.1 L570.7 875.7 L571.3 870.4 L571.9 870.5 L572.5 871.4 L573.2 868.7 L573.8 867.3 L574.4 867.3 L575.0 867.6 L575.6 870.2 L576.2 868.9 L576.8 872.4 L577.4 872.8 L578.0 868.3 L578.6 867.8 L579.2 871.3 L579.9 873.9 L580.5 868.3 L581.1 872.5 L581.7 870.4 L582.3 876.0 L582.9 870.3 L583.5 872.9 L584.1 872.8 L584.7 867.8 L585.3 870.8 L585.9 871.0 L586.5 869.3 L587.2 869.6 L587.8 873.8 L588.4 872.8 L589.0 871.9 L589.6 871.1 L590.2 870.9 L590.8 877.7 L591.4 869.1 L592.0 867.0 L592.6 877.5 L593.2 873.3 L593.9 872.7 L594.5 873.7 L595.1 871.2 L595.7 876.8 L596.3 871.1 L596.9 871.3 L597.5 875.8 L598.1 878.1 L598.7 870.3 L599.3 874.4 L599.9 867.1 L600.5 871.1 L601.2 873.8 L601.8 867.3 L602.4 871.3 L603.0 873.3 L603.6 873.1 L604.2 874.0 L604.8 872.3 L605.4 874.0 L606.0 871.1 L606.6 869.5 L607.2 872.0 L607.9 869.0 L608.5 874.6 L609.1 874.3 L609.7 873.4 L610.3 872.8 L610.9 867.7 L611.5 872.9 L612.1 874.3 L612.7 869.9 L613.3 880.1 L613.9 869.2 L614.5 877.7 L615.2 873.7 L615.8 873.5 L616.4 875.0 L617.0 875.9 L617.6 867.8 L618.2 880.6 L618.8 873.6 L619.4 874.4 L620.0 871.1 L620.6 879.0 L621.2 870.7 L621.8 865.8 L622.5 869.8 L623.1 869.8 L623.7 871.6 L624.3 871.1 L624.9 871.1 L625.5 870.9 L626.1 870.8 L626.7 873.6 L627.3 877.9 L627.9 867.4 L628.5 867.9 L629.2 872.5 L629.8 866.8 L630.4 878.7 L631.0 872.0 L631.6 868.0 L632.2 873.5 L632.8 868.7 L633.4 873.8 L634.0 864.9 L634.6 867.8 L635.2 870.1 L635.8 875.2 L636.5 873.0 L637.1 874.4 L637.7 874.2 L638.3 871.9 L638.9 868.4 L639.5 877.0 L640.1 868.4 L640.7 875.7 L641.3 879.4 L641.9 869.3 L642.5 870.0 L643.2 873.2 L643.8 872.7 L644.4 874.1 L645.0 872.4 L645.6 874.5 L646.2 873.5 L646.8 874.0 L647.4 866.4 L648.0 871.0 L648.6 876.5 L649.2 872.5 L649.8 875.7 L650.5 871.2 L651.1 871.0 L651.7 869.7 L652.3 876.4 L652.9 868.3 L653.5 869.5 L654.1 871.9 L654.7 866.1 L655.3 874.5 L655.9 868.5 L656.5 869.4 L657.2 872.7 L657.8 872.0 L658.4 873.2 L659.0 872.4 L659.6 870.8 L660.2 871.0 L660.8 867.3 L661.4 873.7 L662.0 869.9 L662.6 872.1 L663.2 869.0 L663.8 874.2 L664.5 871.9 L665.1 870.1 L665.7 875.7 L666.3 869.1 L666.9 871.2 L667.5 874.9 L668.1 872.6 L668.7 876.4 L669.3 870.0 L669.9 872.0 L670.5 876.2 L671.2 865.7 L671.8 869.3 L672.4 869.7 L673.0 875.4 L673.6 876.1 L674.2 869.0 L674.8 870.4 L675.4 870.9 L676.0 876.7 L676.6 870.6 L677.2 869.7 L677.8 868.3 L678.5 877.9 L679.1 874.5 L679.7 870.0 L680.3 875.9 L680.9 875.3 L681.5 868.3 L682.1 873.1 L682.7 872.1 L683.3 874.4 L683.9 870.8 L684.5 875.4 L685.1 876.3 L685.8 870.9 L686.4 871.7 L687.0 871.4 L687.6 869.9 L688.2 872.7 L688.8 871.5 L689.4 862.6 L690.0 870.1 L690.6 873.1 L691.2 872.9 L691.8 871.7 L692.5 870.6 L693.1 873.1 L693.7 869.2 L694.3 871.2 L694.9 872.1 L695.5 869.4 L696.1 875.7 L696.7 874.9 L697.3 870.0 L697.9 877.7 L698.5 874.2 L699.1 873.9 L699.8 871.8 L700.4 877.7 L701.0 864.8 L701.6 874.7 L702.2 871.7 L702.8 867.4 L703.4 867.4 L704.0 870.9 L704.6 869.2 L705.2 874.6 L705.8 874.9 L706.5 874.9 L707.1 873.7 L707.7 872.0 L708.3 868.2 L708.9 868.8 L709.5 870.3 L710.1 867.4 L710.7 871.2 L711.3 871.8 L711.9 871.4 L712.5 869.3 L713.1 872.5 L713.8 871.3 L714.4 871.5 L715.0 874.4 L715.6 873.3 L716.2 871.1 L716.8 871.7 L717.4 874.4 L718.0 869.1 L718.6 866.0 L719.2 871.9 L719.8 873.8 L720.5 874.0 L721.1 870.2 L721.7 866.7 L722.3 872.3 L722.9 872.1 L723.5 873.0 L724.1 871.8 L724.7 870.2 L725.3 873.0 L725.9 870.7 L726.5 875.1 L727.1 877.0 L727.8 870.3 L728.4 872.7 L729.0 871.3 L729.6 869.6 L730.2 870.6 L730.8 878.5 L731.4 865.2 L732.0 872.2 L732.6 871.1 L733.2 874.3 L733.8 871.9 L734.5 873.0 L735.1 869.0 L735.7 875.7 L736.3 872.8 L736.9 870.2 L737.5 870.9 L738.1 875.0 L738.7 872.1 L739.3 876.6 L739.9 873.4 L740.5 870.2 L741.1 870.2 L741.8 873.8 L742.4 868.3 L743.0 871.2 L743.6 870.5 L744.2 873.0 L744.8 873.0 L745.4 872.0 L746.0 872.2 L746.6 874.2 L747.2 871.2 L747.8 875.6 L748.4 877.5 L749.1 869.4 L749.7 876.5 L750.3 874.4 L750.9 877.2 L751.5 866.5 L752.1 875.4 L752.7 873.0 L753.3 871.4 L753.9 872.0 L754.5 874.1 L755.1 871.4 L755.8 872.5 L756.4 876.4 L757.0 871.2 L757.6 871.8 L758.2 869.3 L758.8 871.2 L759.4 875.5 L760.0 871.4 L760.6 873.7 L761.2 867.0 L761.8 864.7 L762.4 876.0 L763.1 873.7 L763.7 876.9 L764.3 868.9 L764.9 870.2 L765.5 876.5 L766.1 871.4 L766.7 871.3 L767.3 877.9 L767.9 873.2 L768.5 875.7 L769.1 875.1 L769.8 872.8 L770.4 875.4 L771.0 875.2 L771.6 870.2 L772.2 871.3 L772.8 873.8 L773.4 869.0 L774.0 877.6 L774.6 868.8 L775.2 873.8 L775.8 871.6 L776.4 873.1 L777.1 873.4 L777.7 866.0 L778.3 868.4 L778.9 878.4 L779.5 870.4 L780.1 871.7 L780.7 872.0 L781.3 875.4 L781.9 873.9 L782.5 876.8 L783.1 869.5 L783.8 876.6 L784.4 870.5 L785.0 870.6 L785.6 876.3 L786.2 870.6 L786.8 868.7 L787.4 872.7 L788.0 876.1 L788.6 873.1 L789.2 871.4 L789.8 876.9 L790.4 875.9 L791.1 869.6 L791.7 874.2 L792.3 873.1 L792.9 876.4 L793.5 874.6 L794.1 874.8 L794.7 871.3 L795.3 873.0 L795.9 874.9 L796.5 870.1 L797.1 870.7 L797.7 862.8 L798.4 872.0 L799.0 873.2 L799.6 876.2 L800.2 867.4 L800.8 876.2 L801.4 872.7 L802.0 869.9 L802.6 873.1 L803.2 869.3 L803.8 871.6 L804.4 868.1 L805.1 871.5 L805.7 867.5 L806.3 871.5 L806.9 870.8 L807.5 868.4 L808.1 867.5 L808.7 873.7 L809.3 876.7 L809.9 870.1 L810.5 867.4 L811.1 870.0 L811.7 871.8 L812.4 876.1 L813.0 870.9 L813.6 872.8 L814.2 871.3 L814.8 865.3 L815.4 873.4 L816.0 870.3 L816.6 872.9 L817.2 871.2 L817.8 874.5 L818.4 872.0 L819.1 871.6 L819.7 865.8 L820.3 873.7 L820.9 874.8 L821.5 872.4 L822.1 874.6 L822.7 873.8 L823.3 874.0 L823.9 871.7 L824.5 874.2 L825.1 871.3 L825.7 870.3 L826.4 872.0 L827.0 875.9 L827.6 866.6 L828.2 872.1 L828.8 870.4 L829.4 871.8 L830.0 868.5 L830.6 873.8 L831.2 872.3 L831.8 876.1 L832.4 871.6 L833.1 868.9 L833.7 872.7 L834.3 871.5 L834.9 869.0 L835.5 869.2 L836.1 871.5 L836.7 874.4 L837.3 873.7 L837.9 870.4 L838.5 871.3 L839.1 869.4 L839.7 869.9 L840.4 870.6 L841.0 875.0 L841.6 877.0 L842.2 870.0 L842.8 876.4 L843.4 871.1 L844.0 872.3 L844.6 868.0 L845.2 876.8 L845.8 873.4 L846.4 871.6 L847.1 873.7 L847.7 873.6 L848.3 870.8 L848.9 871.3 L849.5 874.1 L850.1 869.6 L850.7 869.8 L851.3 871.1 L851.9 874.7 L852.5 868.8 L853.1 875.0 L853.7 872.0 L854.4 869.4 L855.0 872.9 L855.6 869.7 L856.2 866.9 L856.8 867.6 L857.4 873.2 L858.0 875.9 L858.6 867.8 L859.2 871.1 L859.8 871.0 L860.4 874.8 L861.0 866.0 L861.7 870.3 L862.3 871.4 L862.9 868.7 L863.5 873.7 L864.1 873.1 L864.7 874.9 L865.3 868.4 L865.9 867.6 L866.5 870.4 L867.1 872.1 L867.7 872.4 L868.4 872.0 L869.0 875.0 L869.6 871.8 L870.2 872.1 L870.8 871.5 L871.4 869.3 L872.0 876.5 L872.6 868.6 L873.2 879.1 L873.8 871.8 L874.4 871.1 L875.0 870.7 L875.7 869.6 L876.3 869.7 L876.9 872.1 L877.5 872.1 L878.1 869.2 L878.7 874.5 L879.3 866.0 L879.9 872.3 L880.5 872.5 L881.1 867.9 L881.7 869.7 L882.4 872.9 L883.0 874.8 L883.6 871.5 L884.2 875.4 L884.8 869.3 L885.4 875.5 L886.0 866.6 L886.6 870.2 L887.2 870.4 L887.8 873.9 L888.4 872.3 L889.0 864.5 L889.7 873.8 L890.3 873.8 L890.9 874.2 L891.5 870.9 L892.1 867.7 L892.7 871.7 L893.3 868.2 L893.9 862.9 L894.5 871.2 L895.1 875.4 L895.7 871.6 L896.4 870.2 L897.0 872.3 L897.6 869.6 L898.2 872.2 L898.8 869.5 L899.4 875.8 L900.0 872.6 L900.6 870.9 L901.2 870.2 L901.8 870.2 L902.4 871.3 L903.0 870.9 L903.7 874.0 L904.3 870.4 L904.9 870.1 L905.5 870.4 L906.1 873.2 L906.7 877.0 L907.3 870.8 L907.9 870.2 L908.5 868.0 L909.1 872.7 L909.7 872.6 L910.4 872.8 L911.0 869.7 L911.6 877.1 L912.2 874.0 L912.8 877.2 L913.4 867.8 L914.0 870.2 L914.6 875.5 L915.2 876.0 L915.8 873.5 L916.4 877.5 L917.0 874.4 L917.7 869.4 L918.3 871.3 L918.9 869.5 L919.5 872.2 L920.1 871.1 L920.7 876.1 L921.3 866.4 L921.9 873.5 L922.5 875.1 L923.1 877.0 L923.7 876.7 L924.3 866.9 L925.0 869.4 L925.6 869.8 L926.2 870.8 L926.8 872.2 L927.4 869.6 L928.0 872.5 L928.6 872.0 L929.2 873.1 L929.8 869.5 L930.4 872.9 L931.0 875.2 L931.7 866.6 L932.3 869.4 L932.9 871.1 L933.5 873.1 L934.1 868.3 L934.7 867.0 L935.3 876.2 L935.9 867.7 L936.5 864.6 L937.1 872.1 L937.7 873.5 L938.3 872.2 L939.0 870.4 L939.6 867.5 L940.2 877.2 L940.8 873.4 L941.4 871.6 L942.0 872.3 L942.6 873.3 L943.2 869.6 L943.8 873.1 L944.4 873.0 L945.0 875.2 L945.7 866.8 L946.3 876.4 L946.9 868.7 L947.5 872.0 L948.1 871.2 L948.7 870.3 L949.3 873.9 L949.9 872.9 L950.5 869.1 L951.1 870.2 L951.7 870.1 L952.3 869.5 L953.0 869.4 L953.6 876.6 L954.2 872.3 L954.8 867.9 L955.4 867.3 L956.0 872.7 L956.6 870.5 L957.2 875.4 L957.8 864.6 L958.4 868.5 L959.0 872.7 L959.7 866.3 L960.3 876.1 L960.9 868.7 L961.5 870.5 L962.1 871.9 L962.7 876.1 L963.3 866.8 L963.9 870.9 L964.5 869.4 L965.1 873.9 L965.7 875.8 L966.3 872.7 L967.0 871.6 L967.6 869.8 L968.2 876.3 L968.8 871.9 L969.4 876.4 L970.0 875.7 L970.6 874.8 L971.2 875.9 L971.8 871.5 L972.4 872.2 L973.0 869.4 L973.6 871.2 L974.3 868.4 L974.9 873.8 L975.5 869.9 L976.1 871.0 L976.7 875.1 L977.3 876.5 L977.9 872.8 L978.5 866.1 L979.1 873.2 L979.7 875.1 L980.3 867.2 L981.0 870.8 L981.6 872.7 L982.2 874.5 L982.8 873.5 L983.4 869.0 L984.0 865.2 L984.6 874.2 L985.2 878.4 L985.8 867.2 L986.4 869.8 L987.0 874.5 L987.6 874.0 L988.3 871.6 L988.9 875.8 L989.5 871.7 L990.1 867.1 L990.7 869.0 L991.3 873.1 L991.9 870.6 L992.5 875.8 L993.1 875.5 L993.7 867.3 L994.3 867.9 L995.0 869.1 L995.6 873.2 L996.2 869.8 L996.8 873.1 L997.4 872.5 L998.0 866.0 L998.6 870.1 L999.2 867.9 L999.8 873.8 L1000.4 870.9 L1001.0 869.5 L1001.6 869.2 L1002.3 872.0 L1002.9 870.0 L1003.5 862.1 L1004.1 873.9 L1004.7 871.5 L1005.3 868.6 L1005.9 866.7 L1006.5 873.6 L1007.1 869.2 L1007.7 873.7 L1008.3 867.5 L1009.0 869.8 L1009.6 873.9 L1010.2 869.1 L1010.8 870.9 L1011.4 868.2 L1012.0 868.1 L1012.6 871.2 L1013.2 872.6 L1013.8 870.2 L1014.4 872.3 L1015.0 870.5 L1015.6 870.7 L1016.3 867.3 L1016.9 868.4 L1017.5 866.8 L1018.1 870.8 L1018.7 870.8 L1019.3 873.8 L1019.9 866.0 L1020.5 864.4 L1021.1 873.0 L1021.7 872.1 L1022.3 878.3 L1023.0 875.6 L1023.6 867.3 L1024.2 867.5 L1024.8 864.4 L1025.4 873.5 L1026.0 865.2 L1026.6 874.7 L1027.2 872.2 L1027.8 863.4 L1028.4 866.4 L1029.0 869.8 L1029.6 872.6 L1030.3 865.8 L1030.9 876.0 L1031.5 869.6 L1032.1 873.0 L1032.7 871.8 L1033.3 870.3 L1033.9 875.0 L1034.5 877.0 L1035.1 873.7 L1035.7 871.9 L1036.3 870.9 L1036.9 868.4 L1037.6 877.8 L1038.2 871.9 L1038.8 871.6 L1039.4 873.9 L1040.0 869.7 L1040.6 873.9 L1041.2 870.4 L1041.8 865.3 L1042.4 876.6 L1043.0 872.4 L1043.6 869.1 L1044.3 871.3 L1044.9 871.0 L1045.5 864.8 L1046.1 876.5 L1046.7 875.0 L1047.3 874.7 L1047.9 872.2 L1048.5 867.1 L1049.1 875.3 L1049.7 872.4 L1050.3 871.4 L1050.9 868.7 L1051.6 870.0 L1052.2 866.3 L1052.8 875.2 L1053.4 876.3 L1054.0 871.4 L1054.6 874.7 L1055.2 877.0 L1055.8 868.3 L1056.4 872.3 L1057.0 870.9 L1057.6 869.1 L1058.3 870.5 L1058.9 872.0 L1059.5 868.3 L1060.1 867.7 L1060.7 868.6 L1061.3 872.8 L1061.9 872.0 L1062.5 872.4 L1063.1 867.7 L1063.7 865.8 L1064.3 865.8 L1064.9 873.0 L1065.6 868.0 L1066.2 867.9 L1066.8 878.8 L1067.4 870.5 L1068.0 872.3 L1068.6 868.8 L1069.2 869.4 L1069.8 873.4 L1070.4 874.8 L1071.0 867.8 L1071.6 868.7 L1072.3 877.1 L1072.9 875.5 L1073.5 868.8 L1074.1 869.6 L1074.7 874.8 L1075.3 874.0 L1075.9 866.4 L1076.5 868.5 L1077.1 873.4 L1077.7 871.4 L1078.3 871.6 L1078.9 865.6 L1079.6 870.6 L1080.2 870.3 L1080.8 871.7 L1081.4 869.2 L1082.0 871.1 L1082.6 874.9 L1083.2 876.7 L1083.8 878.3 L1084.4 866.3 L1085.0 871.0 L1085.6 877.0 L1086.2 862.4 L1086.9 877.6 L1087.5 879.3 L1088.1 870.2 L1088.7 867.8 L1089.3 871.9 L1089.9 877.5 L1090.5 867.7 L1091.1 872.2 L1091.7 869.8 L1092.3 867.8 L1092.9 866.9 L1093.6 871.5 L1094.2 874.8 L1094.8 868.8 L1095.4 875.4 L1096.0 875.0 L1096.6 866.3 L1097.2 878.7 L1097.8 872.4 L1098.4 866.5 L1099.0 872.5 L1099.6 874.3 L1100.2 871.4 L1100.9 868.0 L1101.5 867.1 L1102.1 869.7 L1102.7 876.7 L1103.3 869.9 L1103.9 870.7 L1104.5 866.6 L1105.1 880.5 L1105.7 872.2 L1106.3 868.4 L1106.9 868.6 L1107.6 878.4 L1108.2 870.3 L1108.8 870.3 L1109.4 876.6 L1110.0 869.1 L1110.6 873.8 L1111.2 871.5 L1111.8 867.2 L1112.4 871.2 L1113.0 866.0 L1113.6 873.4 L1114.2 869.8 L1114.9 871.2 L1115.5 873.4 L1116.1 873.7 L1116.7 869.3 L1117.3 866.6 L1117.9 869.3 L1118.5 870.0 L1119.1 865.8 L1119.7 873.6 L1120.3 875.8 L1120.9 869.4 L1121.6 871.0 L1122.2 879.8 L1122.8 876.8 L1123.4 867.9 L1124.0 864.3 L1124.6 868.7 L1125.2 867.3 L1125.8 873.5 L1126.4 870.8 L1127.0 872.4 L1127.6 874.5 L1128.2 872.6 L1128.9 869.4 L1129.5 867.5 L1130.1 871.7 L1130.7 868.3 L1131.3 871.4 L1131.9 876.4 L1132.5 869.7 L1133.1 870.0 L1133.7 875.1 L1134.3 866.0 L1134.9 862.1 L1135.6 868.7 L1136.2 876.2 L1136.8 877.0 L1137.4 873.1 L1138.0 868.7 L1138.6 870.0 L1139.2 875.6 L1139.8 872.5 L1140.4 868.6 L1141.0 875.3 L1141.6 870.9 L1142.2 873.8 L1142.9 871.8 L1143.5 867.2 L1144.1 872.2 L1144.7 867.4 L1145.3 877.6 L1145.9 868.3 L1146.5 873.0 L1147.1 869.3 L1147.7 871.3 L1148.3 866.7 L1148.9 874.7 L1149.5 877.9 L1150.2 873.4 L1150.8 870.5 L1151.4 871.6 L1152.0 873.1 L1152.6 874.6 L1153.2 874.1 L1153.8 871.4 L1154.4 874.6 L1155.0 865.8 L1155.6 873.8 L1156.2 869.1 L1156.9 870.6 L1157.5 866.8 L1158.1 869.5 L1158.7 870.7 L1159.3 868.1 L1159.9 876.0 L1160.5 875.2 L1161.1 867.8 L1161.7 868.9 L1162.3 875.2 L1162.9 878.6 L1163.5 869.6 L1164.2 867.2 L1164.8 867.7 L1165.4 868.9 L1166.0 874.3 L1166.6 870.0 L1167.2 871.9 L1167.8 870.5 L1168.4 871.4 L1169.0 869.6 L1169.6 872.5 L1170.2 875.3 L1170.9 868.0 L1171.5 863.3 L1172.1 869.7 L1172.7 872.2 L1173.3 871.9 L1173.9 866.1 L1174.5 873.3 L1175.1 870.5 L1175.7 867.5 L1176.3 867.3 L1176.9 872.4 L1177.5 875.1 L1178.2 869.0 L1178.8 876.0 L1179.4 870.7 L1180.0 870.1 L1180.6 870.4 L1181.2 874.7 L1181.8 868.2 L1182.4 868.6 L1183.0 876.1 L1183.6 867.8 L1184.2 874.4 L1184.9 870.6 L1185.5 868.7 L1186.1 870.9 L1186.7 870.9 L1187.3 870.8 L1187.9 869.9 L1188.5 870.5 L1189.1 867.6 L1189.7 875.8 L1190.3 870.7 L1190.9 866.3 L1191.5 879.0 L1192.2 871.2 L1192.8 872.3 L1193.4 875.2 L1194.0 870.7 L1194.6 873.3 L1195.2 877.5 L1195.8 870.7" fill="none" stroke="#006828" stroke-width="2"/><line x1="346" y1="871" x2="1206" y2="871" stroke="#000" stroke-width="2"/><line x1="348.5" y1="814" x2="348.5" y2="809" stroke="#000"/><line x1="348.5" y1="914" x2="348.5" y2="909" stroke="#000"/><line x1="348.5" y1="563" x2="348.5" y2="568" stroke="#000"/><line x1="366.5" y1="814" x2="366.5" y2="811" stroke="#000"/><line x1="366.5" y1="914" x2="366.5" y2="911" stroke="#000"/><line x1="366.5" y1="563" x2="366.5" y2="566" stroke="#000"/><line x1="383.5" y1="814" x2="383.5" y2="811" stroke="#000"/><line x1="383.5" y1="914" x2="383.5" y2="911" stroke="#000"/><line x1="383.5" y1="563" x2="383.5" y2="566" stroke="#000"/><line x1="400.5" y1="814" x2="400.5" y2="811" stroke="#000"/><line x1="400.5" y1="914" x2="400.5" y2="911" stroke="#000"/><line x1="400.5" y1="563" x2="400.5" y2="566" stroke="#000"/><line x1="418.5" y1="814" x2="418.5" y2="809" stroke="#000"/><line x1="418.5" y1="914" x2="418.5" y2="909" stroke="#000"/><line x1="418.5" y1="563" x2="418.5" y2="568" stroke="#000"/><line x1="435.5" y1="814" x2="435.5" y2="811" stroke="#000"/><line x1="435.5" y1="914" x2="435.5" y2="911" stroke="#000"/><line x1="435.5" y1="563" x2="435.5" y2="566" stroke="#000"/><line x1="453.5" y1="814" x2="453.5" y2="811" stroke="#000"/><line x1="453.5" y1="914" x2="453.5" y2="911" stroke="#000"/><line x1="453.5" y1="563" x2="453.5" y2="566" stroke="#000"/><line x1="470.5" y1="814" x2="470.5" y2="811" stroke="#000"/><line x1="470.5" y1="914" x2="470.5" y2="911" stroke="#000"/><line x1="470.5" y1="563" x2="470.5" y2="566" stroke="#000"/><line x1="487.5" y1="814" x2="487.5" y2="809" stroke="#000"/><line x1="487.5" y1="914" x2="487.5" y2="909" stroke="#000"/><line x1="487.5" y1="563" x2="487.5" y2="568" stroke="#000"/><line x1="505.5" y1="814" x2="505.5" y2="811" stroke="#000"/><line x1="505.5" y1="914" x2="505.5" y2="911" stroke="#000"/><line x1="505.5" y1="563" x2="505.5" y2="566" stroke="#000"/><line x1="522.5" y1="814" x2="522.5" y2="811" stroke="#000"/><line x1="522.5" y1="914" x2="522.5" y2="911" stroke="#000"/><line x1="522.5" y1="563" x2="522.5" y2="566" stroke="#000"/><line x1="540.5" y1="814" x2="540.5" y2="811" stroke="#000"/><line x1="540.5" y1="914" x2="540.5" y2="911" stroke="#000"/><line x1="540.5" y1="563" x2="540.5" y2="566" stroke="#000"/><line x1="557.5" y1="814" x2="557.5" y2="809" stroke="#000"/><line x1="557.5" y1="914" x2="557.5" y2="909" stroke="#000"/><line x1="557.5" y1="563" x2="557.5" y2="568" stroke="#000"/><line x1="574.5" y1="814" x2="574.5" y2="811" stroke="#000"/><line x1="574.5" y1="914" x2="574.5" y2="911" stroke="#000"/><line x1="574.5" y1="563" x2="574.5" y2="566" stroke="#000"/><line x1="592.5" y1="814" x2="592.5" y2="811" stroke="#000"/><line x1="592.5" y1="914" x2="592.5" y2="911" stroke="#000"/><line x1="592.5" y1="563" x2="592.5" y2="566" stroke="#000"/><line x1="609.5" y1="814" x2="609.5" y2="811" stroke="#000"/><line x1="609.5" y1="914" x2="609.5" y2="911" stroke="#000"/><line x1="609.5" y1="563" x2="609.5" y2="566" stroke="#000"/><line x1="626.5" y1="814" x2="626.5" y2="809" stroke="#000"/><line x1="626.5" y1="914" x2="626.5" y2="909" stroke="#000"/><line x1="626.5" y1="563" x2="626.5" y2="568" stroke="#000"/><line x1="644.5" y1="814" x2="644.5" y2="811" stroke="#000"/><line x1="644.5" y1="914" x2="644.5" y2="911" stroke="#000"/><line x1="644.5" y1="563" x2="644.5" y2="566" stroke="#000"/><line x1="661.5" y1="814" x2="661.5" y2="811" stroke="#000"/><line x1="661.5" y1="914" x2="661.5" y2="911" stroke="#000"/><line x1="661.5" y1="563" x2="661.5" y2="566" stroke="#000"/><line x1="679.5" y1="814" x2="679.5" y2="811" stroke="#000"/><line x1="679.5" y1="914" x2="679.5" y2="911" stroke="#000"/><line x1="679.5" y1="563" x2="679.5" y2="566" stroke="#000"/><line x1="696.5" y1="814" x2="696.5" y2="809" stroke="#000"/><line x1="696.5" y1="914" x2="696.5" y2="909" stroke="#000"/><line x1="696.5" y1="563" x2="696.5" y2="568" stroke="#000"/><line x1="713.5" y1="814" x2="713.5" y2="811" stroke="#000"/><line x1="713.5" y1="914" x2="713.5" y2="911" stroke="#000"/><line x1="713.5" y1="563" x2="713.5" y2="566" stroke="#000"/><line x1="731.5" y1="814" x2="731.5" y2="811" stroke="#000"/><line x1="731.5" y1="914" x2="731.5" y2="911" stroke="#000"/><line x1="731.5" y1="563" x2="731.5" y2="566" stroke="#000"/><line x1="748.5" y1="814" x2="748.5" y2="811" stroke="#000"/><line x1="748.5" y1="914" x2="748.5" y2="911" stroke="#000"/><line x1="748.5" y1="563" x2="748.5" y2="566" stroke="#000"/><line x1="766.5" y1="814" x2="766.5" y2="809" stroke="#000"/><line x1="766.5" y1="914" x2="766.5" y2="909" stroke="#000"/><line x1="766.5" y1="563" x2="766.5" y2="568" stroke="#000"/><line x1="783.5" y1="814" x2="783.5" y2="811" stroke="#000"/><line x1="783.5" y1="914" x2="783.5" y2="911" stroke="#000"/><line x1="783.5" y1="563" x2="783.5" y2="566" stroke="#000"/><line x1="800.5" y1="814" x2="800.5" y2="811" stroke="#000"/><line x1="800.5" y1="914" x2="800.5" y2="911" stroke="#000"/><line x1="800.5" y1="563" x2="800.5" y2="566" stroke="#000"/><line x1="818.5" y1="814" x2="818.5" y2="811" stroke="#000"/><line x1="818.5" y1="914" x2="818.5" y2="911" stroke="#000"/><line x1="818.5" y1="563" x2="818.5" y2="566" stroke="#000"/><line x1="835.5" y1="814" x2="835.5" y2="809" stroke="#000"/><line x1="835.5" y1="914" x2="835.5" y2="909" stroke="#000"/><line x1="835.5" y1="563" x2="835.5" y2="568" stroke="#000"/><line x1="853.5" y1="814" x2="853.5" y2="811" stroke="#000"/><line x1="853.5" y1="914" x2="853.5" y2="911" stroke="#000"/><line x1="853.5" y1="563" x2="853.5" y2="566" stroke="#000"/><line x1="870.5" y1="814" x2="870.5" y2="811" stroke="#000"/><line x1="870.5" y1="914" x2="870.5" y2="911" stroke="#000"/><line x1="870.5" y1="563" x2="870.5" y2="566" stroke="#000"/><line x1="887.5" y1="814" x2="887.5" y2="811" stroke="#000"/><line x1="887.5" y1="914" x2="887.5" y2="911" stroke="#000"/><line x1="887.5" y1="563" x2="887.5" y2="566" stroke="#000"/><line x1="905.5" y1="814" x2="905.5" y2="809" stroke="#000"/><line x1="905.5" y1="914" x2="905.5" y2="909" stroke="#000"/><line x1="905.5" y1="563" x2="905.5" y2="568" stroke="#000"/><line x1="922.5" y1="814" x2="922.5" y2="811" stroke="#000"/><line x1="922.5" y1="914" x2="922.5" y2="911" stroke="#000"/><line x1="922.5" y1="563" x2="922.5" y2="566" stroke="#000"/><line x1="940.5" y1="814" x2="940.5" y2="811" stroke="#000"/><line x1="940.5" y1="914" x2="940.5" y2="911" stroke="#000"/><line x1="940.5" y1="563" x2="940.5" y2="566" stroke="#000"/><line x1="957.5" y1="814" x2="957.5" y2="811" stroke="#000"/><line x1="957.5" y1="914" x2="957.5" y2="911" stroke="#000"/><line x1="957.5" y1="563" x2="957.5" y2="566" stroke="#000"/><line x1="974.5" y1="814" x2="974.5" y2="809" stroke="#000"/><line x1="974.5" y1="914" x2="974.5" y2="909" stroke="#000"/><line x1="974.5" y1="563" x2="974.5" y2="568" stroke="#000"/><line x1="992.5" y1="814" x2="992.5" y2="811" stroke="#000"/><line x1="992.5" y1="914" x2="992.5" y2="911" stroke="#000"/><line x1="992.5" y1="563" x2="992.5" y2="566" stroke="#000"/><line x1="1009.5" y1="814" x2="1009.5" y2="811" stroke="#000"/><line x1="1009.5" y1="914" x2="1009.5" y2="911" stroke="#000"/><line x1="1009.5" y1="563" x2="1009.5" y2="566" stroke="#000"/><line x1="1026.5" y1="814" x2="1026.5" y2="811" stroke="#000"/><line x1="1026.5" y1="914" x2="1026.5" y2="911" stroke="#000"/><line x1="1026.5" y1="563" x2="1026.5" y2="566" stroke="#000"/><line x1="1044.5" y1="814" x2="1044.5" y2="809" stroke="#000"/><line x1="1044.5" y1="914" x2="1044.5" y2="909" stroke="#000"/><line x1="1044.5" y1="563" x2="1044.5" y2="568" stroke="#000"/><line x1="1061.5" y1="814" x2="1061.5" y2="811" stroke="#000"/><line x1="1061.5" y1="914" x2="1061.5" y2="911" stroke="#000"/><line x1="1061.5" y1="563" x2="1061.5" y2="566" stroke="#000"/><line x1="1079.5" y1="814" x2="1079.5" y2="811" stroke="#000"/><line x1="1079.5" y1="914" x2="1079.5" y2="911" stroke="#000"/><line x1="1079.5" y1="563" x2="1079.5" y2="566" stroke="#000"/><line x1="1096.5" y1="814" x2="1096.5" y2="811" stroke="#000"/><line x1="1096.5" y1="914" x2="1096.5" y2="911" stroke="#000"/><line x1="1096.5" y1="563" x2="1096.5" y2="566" stroke="#000"/><line x1="1113.5" y1="814" x2="1113.5" y2="809" stroke="#000"/><line x1="1113.5" y1="914" x2="1113.5" y2="909" stroke="#000"/><line x1="1113.5" y1="563" x2="1113.5" y2="568" stroke="#000"/><line x1="1131.5" y1="814" x2="1131.5" y2="811" stroke="#000"/><line x1="1131.5" y1="914" x2="1131.5" y2="911" stroke="#000"/><line x1="1131.5" y1="563" x2="1131.5" y2="566" stroke="#000"/><line x1="1148.5" y1="814" x2="1148.5" y2="811" stroke="#000"/><line x1="1148.5" y1="914" x2="1148.5" y2="911" stroke="#000"/><line x1="1148.5" y1="563" x2="1148.5" y2="566" stroke="#000"/><line x1="1166.5" y1="814" x2="1166.5" y2="811" stroke="#000"/><line x1="1166.5" y1="914" x2="1166.5" y2="911" stroke="#000"/><line x1="1166.5" y1="563" x2="1166.5" y2="566" stroke="#000"/><line x1="1183.5" y1="814" x2="1183.5" y2="809" stroke="#000"/><line x1="1183.5" y1="914" x2="1183.5" y2="909" stroke="#000"/><line x1="1183.5" y1="563" x2="1183.5" y2="568" stroke="#000"/><line x1="1200.5" y1="814" x2="1200.5" y2="811" stroke="#000"/><line x1="1200.5" y1="914" x2="1200.5" y2="911" stroke="#000"/><line x1="1200.5" y1="563" x2="1200.5" y2="566" stroke="#000"/><line x1="346" y1="812.5" x2="349" y2="812.5" stroke="#000"/><line x1="346" y1="809.5" x2="349" y2="809.5" stroke="#000"/><line x1="346" y1="807.5" x2="349" y2="807.5" stroke="#000"/><line x1="346" y1="804.5" x2="349" y2="804.5" stroke="#000"/><line x1="346" y1="802.5" x2="349" y2="802.5" stroke="#000"/><line x1="346" y1="801.5" x2="351" y2="801.5" stroke="#000"/><line x1="1206" y1="801.5" x2="1201" y2="801.5" stroke="#000"/><line x1="346" y1="789.5" x2="349" y2="789.5" stroke="#000"/><line x1="346" y1="782.5" x2="349" y2="782.5" stroke="#000"/><line x1="346" y1="778.5" x2="349" y2="778.5" stroke="#000"/><line x1="346" y1="774.5" x2="349" y2="774.5" stroke="#000"/><line x1="346" y1="771.5" x2="349" y2="771.5" stroke="#000"/><line x1="346" y1="768.5" x2="349" y2="768.5" stroke="#000"/><line x1="346" y1="766.5" x2="349" y2="766.5" stroke="#000"/><line x1="346" y1="764.5" x2="349" y2="764.5" stroke="#000"/><line x1="346" y1="763.5" x2="351" y2="763.5" stroke="#000"/><line x1="1206" y1="763.5" x2="1201" y2="763.5" stroke="#000"/><line x1="346" y1="751.5" x2="349" y2="751.5" stroke="#000"/><line x1="346" y1="744.5" x2="349" y2="744.5" stroke="#000"/><line x1="346" y1="740.5" x2="349" y2="740.5" stroke="#000"/><line x1="346" y1="736.5" x2="349" y2="736.5" stroke="#000"/><line x1="346" y1="733.5" x2="349" y2="733.5" stroke="#000"/><line x1="346" y1="730.5" x2="349" y2="730.5" stroke="#000"/><line x1="346" y1="728.5" x2="349" y2="728.5" stroke="#000"/><line x1="346" y1="726.5" x2="349" y2="726.5" stroke="#000"/><line x1="346" y1="724.5" x2="351" y2="724.5" stroke="#000"/><line x1="1206" y1="724.5" x2="1201" y2="724.5" stroke="#000"/><line x1="346" y1="713.5" x2="349" y2="713.5" stroke="#000"/><line x1="346" y1="706.5" x2="349" y2="706.5" stroke="#000"/><line x1="346" y1="701.5" x2="349" y2="701.5" stroke="#000"/><line x1="346" y1="698.5" x2="349" y2="698.5" stroke="#000"/><line x1="346" y1="695.5" x2="349" y2="695.5" stroke="#000"/><line x1="346" y1="692.5" x2="349" y2="692.5" stroke="#000"/><line x1="346" y1="690.5" x2="349" y2="690.5" stroke="#000"/><line x1="346" y1="688.5" x2="349" y2="688.5" stroke="#000"/><line x1="346" y1="686.5" x2="351" y2="686.5" stroke="#000"/><line x1="1206" y1="686.5" x2="1201" y2="686.5" stroke="#000"/><line x1="346" y1="675.5" x2="349" y2="675.5" stroke="#000"/><line x1="346" y1="668.5" x2="349" y2="668.5" stroke="#000"/><line x1="346" y1="663.5" x2="349" y2="663.5" stroke="#000"/><line x1="346" y1="660.5" x2="349" y2="660.5" stroke="#000"/><line x1="346" y1="657.5" x2="349" y2="657.5" stroke="#000"/><line x1="346" y1="654.5" x2="349" y2="654.5" stroke="#000"/><line x1="346" y1="652.5" x2="349" y2="652.5" stroke="#000"/><line x1="346" y1="650.5" x2="349" y2="650.5" stroke="#000"/><line x1="346" y1="648.5" x2="351" y2="648.5" stroke="#000"/><line x1="1206" y1="648.5" x2="1201" y2="648.5" stroke="#000"/><line x1="346" y1="637.5" x2="349" y2="637.5" stroke="#000"/><line x1="346" y1="630.5" x2="349" y2="630.5" stroke="#000"/><line x1="346" y1="625.5" x2="349" y2="625.5" stroke="#000"/><line x1="346" y1="622.5" x2="349" y2="622.5" stroke="#000"/><line x1="346" y1="619.5" x2="349" y2="619.5" stroke="#000"/><line x1="346" y1="616.5" x2="349" y2="616.5" stroke="#000"/><line x1="346" y1="614.5" x2="349" y2="614.5" stroke="#000"/><line x1="346" y1="612.5" x2="349" y2="612.5" stroke="#000"/><line x1="346" y1="610.5" x2="351" y2="610.5" stroke="#000"/><line x1="1206" y1="610.5" x2="1201" y2="610.5" stroke="#000"/><line x1="346" y1="599.5" x2="349" y2="599.5" stroke="#000"/><line x1="346" y1="592.5" x2="349" y2="592.5" stroke="#000"/><line x1="346" y1="587.5" x2="349" y2="587.5" stroke="#000"/><line x1="346" y1="583.5" x2="349" y2="583.5" stroke="#000"/><line x1="346" y1="580.5" x2="349" y2="580.5" stroke="#000"/><line x1="346" y1="578.5" x2="349" y2="578.5" stroke="#000"/><line x1="346" y1="576.5" x2="349" y2="576.5" stroke="#000"/><line x1="346" y1="574.5" x2="349" y2="574.5" stroke="#000"/><line x1="346" y1="572.5" x2="351" y2="572.5" stroke="#000"/><line x1="1206" y1="572.5" x2="1201" y2="572.5" stroke="#000"/><line x1="346" y1="908.5" x2="351" y2="908.5" stroke="#000"/><line x1="1206" y1="908.5" x2="1201" y2="908.5" stroke="#000"/><line x1="346" y1="899.5" x2="349" y2="899.5" stroke="#000"/><line x1="346" y1="889.5" x2="349" y2="889.5" stroke="#000"/><line x1="1206" y1="889.5" x2="1203" y2="889.5" stroke="#000"/><line x1="346" y1="880.5" x2="349" y2="880.5" stroke="#000"/><line x1="346" y1="871.5" x2="351" y2="871.5" stroke="#000"/><line x1="1206" y1="871.5" x2="1201" y2="871.5" stroke="#000"/><line x1="346" y1="861.5" x2="349" y2="861.5" stroke="#000"/><line x1="346" y1="852.5" x2="349" y2="852.5" stroke="#000"/><line x1="1206" y1="852.5" x2="1203" y2="852.5" stroke="#000"/><line x1="346" y1="842.5" x2="349" y2="842.5" stroke="#000"/><line x1="346" y1="833.5" x2="351" y2="833.5" stroke="#000"/><line x1="1206" y1="833.5" x2="1201" y2="833.5" stroke="#000"/><line x1="346" y1="824.5" x2="349" y2="824.5" stroke="#000"/><line x1="367" y1="563" x2="367" y2="914" stroke="#0018f0" stroke-width="3"/><path d="M367 561 L371.5 565 L367 569Z" fill="#0018f0"/><path d="M367 591 L371.5 595 L367 599Z" fill="#0018f0"/><path d="M367 621 L371.5 625 L367 629Z" fill="#0018f0"/><path d="M367 651 L371.5 655 L367 659Z" fill="#0018f0"/><path d="M367 681 L371.5 685 L367 689Z" fill="#0018f0"/><path d="M367 711 L371.5 715 L367 719Z" fill="#0018f0"/><path d="M367 741 L371.5 745 L367 749Z" fill="#0018f0"/><path d="M367 771 L371.5 775 L367 779Z" fill="#0018f0"/><path d="M367 801 L371.5 805 L367 809Z" fill="#0018f0"/><path d="M367 831 L371.5 835 L367 839Z" fill="#0018f0"/><path d="M367 861 L371.5 865 L367 869Z" fill="#0018f0"/><path d="M367 891 L371.5 895 L367 899Z" fill="#0018f0"/><line x1="1195" y1="563" x2="1195" y2="914" stroke="#0018f0" stroke-width="3"/><path d="M1195 561 L1190.5 565 L1195 569Z" fill="#0018f0"/><path d="M1195 591 L1190.5 595 L1195 599Z" fill="#0018f0"/><path d="M1195 621 L1190.5 625 L1195 629Z" fill="#0018f0"/><path d="M1195 651 L1190.5 655 L1195 659Z" fill="#0018f0"/><path d="M1195 681 L1190.5 685 L1195 689Z" fill="#0018f0"/><path d="M1195 711 L1190.5 715 L1195 719Z" fill="#0018f0"/><path d="M1195 741 L1190.5 745 L1195 749Z" fill="#0018f0"/><path d="M1195 771 L1190.5 775 L1195 779Z" fill="#0018f0"/><path d="M1195 801 L1190.5 805 L1195 809Z" fill="#0018f0"/><path d="M1195 831 L1190.5 835 L1195 839Z" fill="#0018f0"/><path d="M1195 861 L1190.5 865 L1195 869Z" fill="#0018f0"/><path d="M1195 891 L1190.5 895 L1195 899Z" fill="#0018f0"/><rect x="346.5" y="563.5" width="860" height="351" fill="none" stroke="#000" stroke-width="1"/><rect x="346" y="813" width="861" height="2" fill="#000"/><rect x="1109.5" y="568.5" width="92" height="121" fill="#ffffcc" stroke="#000"/><rect x="1111" y="573.3" width="13" height="7" fill="#ee0000"/><text x="1129" y="580.8" style="font-size:10.6px">Calculated IRF</text><rect x="1111" y="588.3" width="13" height="7" fill="#006828"/><text x="1129" y="595.8" style="font-size:10.6px">Overall Decay</text><rect x="1111" y="603.4" width="13" height="7" fill="#c0c0c0"/><text x="1129" y="610.9" style="font-size:10.6px">Pixel (1,1)</text><rect x="1111" y="618.4" width="13" height="7" fill="#c0c0c0"/><text x="1129" y="625.9" style="font-size:10.6px">ROI 0</text><rect x="1111" y="633.5" width="13" height="7" fill="#c0c0c0"/><text x="1129" y="641.0" style="font-size:10.6px">ROI 1</text><rect x="1111" y="648.5" width="13" height="7" fill="#c0c0c0"/><text x="1129" y="656.0" style="font-size:10.6px">ROI 2</text><rect x="1111" y="663.6" width="13" height="7" fill="#c0c0c0"/><text x="1129" y="671.1" style="font-size:10.6px">ROI 3</text><rect x="1111" y="678.6" width="13" height="7" fill="#000"/><text x="1129" y="686.1" style="font-size:10.6px">Fitted Curve</text><rect x="1093.5" y="819.5" width="108" height="31" fill="#ffffcc" stroke="#000"/><rect x="1096" y="824" width="13" height="7" fill="#006828"/><text x="1113" y="832" style="font-size:10.6px">Residuals</text><text x="1113" y="847" style="font-size:10.6px">Local X² = 0.0000</text></svg><div class="t" style="left:557px;width:400px;top:546px;text-align:center;font-size:13px;color:#000;font-weight:bold;">Fit</div><div class="t" style="right:874px;top:794px;font-size:12px;text-align:right">10<span style="font-size:9.5px;position:relative;top:-4px">0</span></div><div class="t" style="right:874px;top:756px;font-size:12px;text-align:right">10<span style="font-size:9.5px;position:relative;top:-4px">1</span></div><div class="t" style="right:874px;top:718px;font-size:12px;text-align:right">10<span style="font-size:9.5px;position:relative;top:-4px">2</span></div><div class="t" style="right:874px;top:680px;font-size:12px;text-align:right">10<span style="font-size:9.5px;position:relative;top:-4px">3</span></div><div class="t" style="right:874px;top:642px;font-size:12px;text-align:right">10<span style="font-size:9.5px;position:relative;top:-4px">4</span></div><div class="t" style="right:874px;top:604px;font-size:12px;text-align:right">10<span style="font-size:9.5px;position:relative;top:-4px">5</span></div><div class="t" style="right:874px;top:565px;font-size:12px;text-align:right">10<span style="font-size:9.5px;position:relative;top:-4px">6</span></div><div class="t" style="right:874px;top:827px;text-align:right;font-size:12px;color:#000;">20</div><div class="t" style="right:874px;top:865px;text-align:right;font-size:12px;color:#000;">0</div><div class="t" style="right:874px;top:903px;text-align:right;font-size:12px;color:#000;">-20</div><div class="t" style="left:218px;width:400px;top:918px;text-align:center;font-size:12px;color:#000;">88</div><div class="t" style="left:288px;width:400px;top:918px;text-align:center;font-size:12px;color:#000;">92</div><div class="t" style="left:357px;width:400px;top:918px;text-align:center;font-size:12px;color:#000;">96</div><div class="t" style="left:427px;width:400px;top:918px;text-align:center;font-size:12px;color:#000;">100</div><div class="t" style="left:497px;width:400px;top:918px;text-align:center;font-size:12px;color:#000;">104</div><div class="t" style="left:566px;width:400px;top:918px;text-align:center;font-size:12px;color:#000;">108</div><div class="t" style="left:636px;width:400px;top:918px;text-align:center;font-size:12px;color:#000;">112</div><div class="t" style="left:705px;width:400px;top:918px;text-align:center;font-size:12px;color:#000;">116</div><div class="t" style="left:775px;width:400px;top:918px;text-align:center;font-size:12px;color:#000;">120</div><div class="t" style="left:844px;width:400px;top:918px;text-align:center;font-size:12px;color:#000;">124</div><div class="t" style="left:914px;width:400px;top:918px;text-align:center;font-size:12px;color:#000;">128</div><div class="t" style="left:983px;width:400px;top:918px;text-align:center;font-size:12px;color:#000;">132</div><div class="a" style="left:345px;top:916px;width:20px;height:16px;overflow:hidden"><div class="t" style="left:-3px;top:2px;font-size:12px">84</div></div><div class="t" style="left:575px;width:400px;top:936px;text-align:center;font-size:12px;color:#000;">Time [ns]</div><div class="t" style="left:213px;top:680px;width:200px;text-align:center;font-size:12px;transform:rotate(-90deg)">Intensity [ Cnts]</div><div class="t" style="left:213px;top:862px;width:200px;text-align:center;font-size:12px;transform:rotate(-90deg)">Resids. [StdDev.]</div>
</body></html>
